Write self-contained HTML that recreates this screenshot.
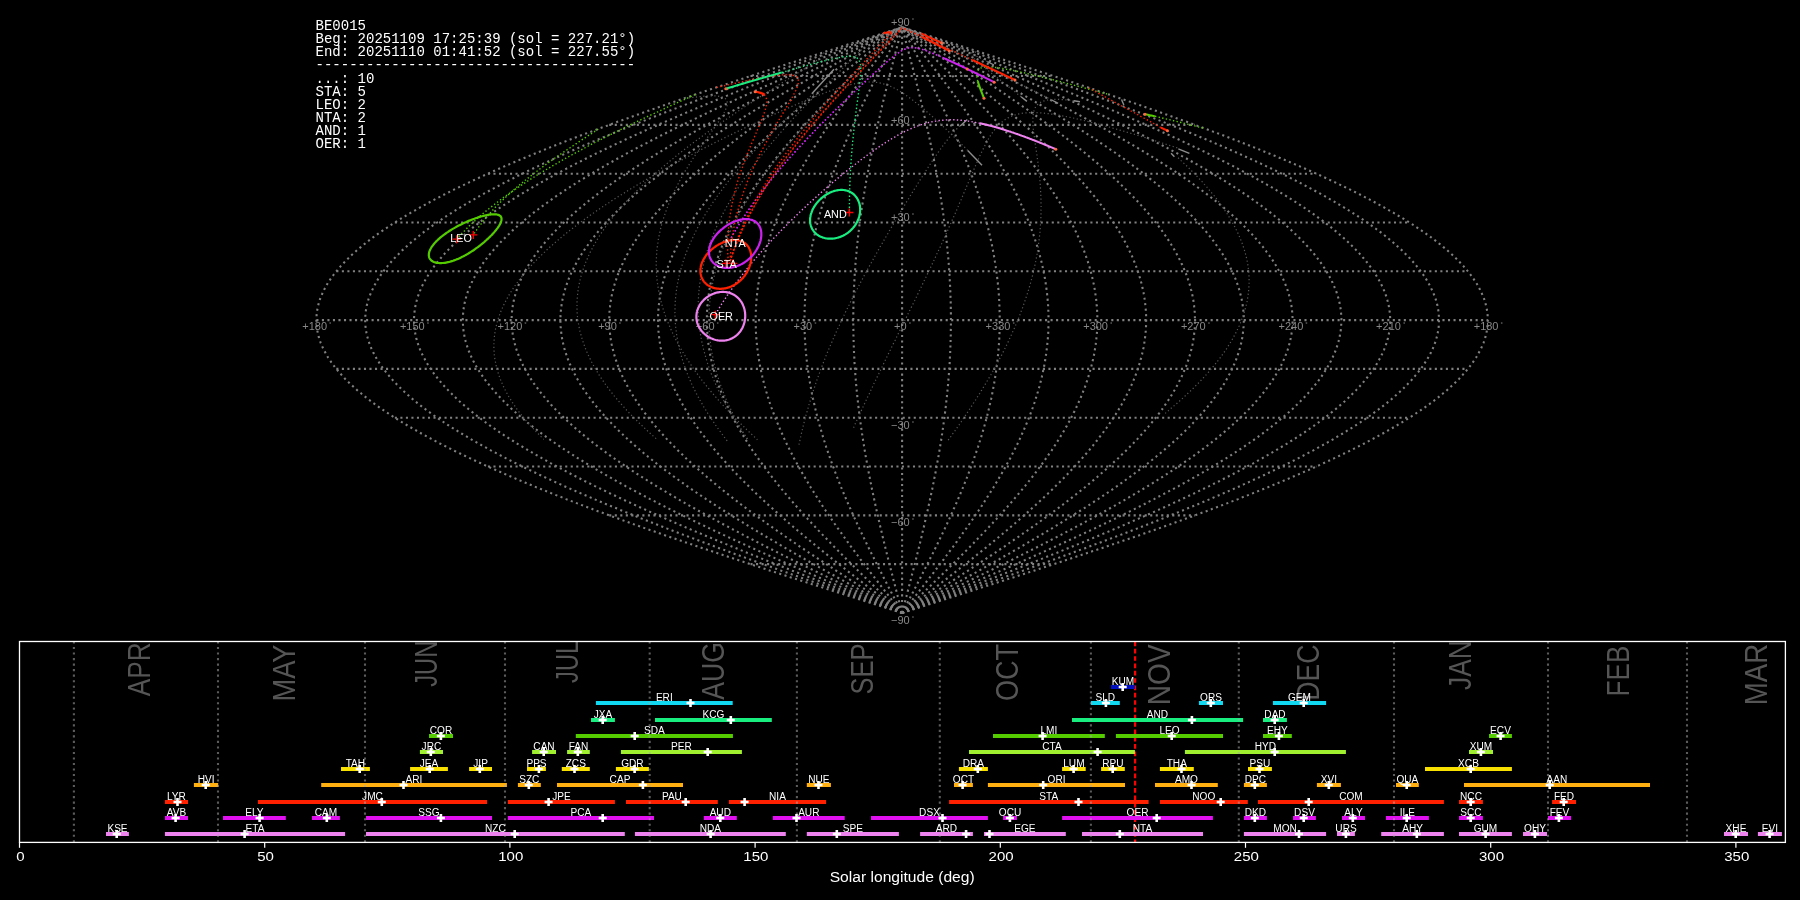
<!DOCTYPE html><html><head><meta charset="utf-8"><style>html,body{margin:0;padding:0;background:#000;overflow:hidden}svg{display:block;will-change:transform}text{font-family:"Liberation Sans",sans-serif}</style></head><body>
<svg width="1800" height="900" viewBox="0 0 1800 900">
<rect width="1800" height="900" fill="#000"/>
<g fill="none" stroke="#808080" stroke-width="2.08" stroke-dasharray="2.08 3.44">
<path d="M750.50 564.15 H1053.70"/>
<path d="M609.24 515.34 H1194.96"/>
<path d="M487.93 466.53 H1316.27"/>
<path d="M394.85 417.72 H1409.35"/>
<path d="M336.34 368.91 H1467.86"/>
<path d="M316.38 320.10 H1487.82"/>
<path d="M336.34 271.29 H1467.86"/>
<path d="M394.85 222.48 H1409.35"/>
<path d="M487.93 173.67 H1316.27"/>
<path d="M609.24 124.86 H1194.96"/>
<path d="M750.50 76.05 H1053.70"/>
<path d="M902.1 613.0 L907.2 611.3 L912.3 609.7 L917.4 608.1 L922.5 606.5 L927.6 604.8 L932.8 603.2 L937.9 601.6 L943.0 599.9 L948.1 598.3 L953.1 596.7 L958.2 595.1 L963.3 593.4 L968.4 591.8 L973.5 590.2 L978.6 588.6 L983.6 586.9 L988.7 585.3 L993.7 583.7 L998.8 582.0 L1003.8 580.4 L1008.8 578.8 L1013.9 577.2 L1018.9 575.5 L1023.9 573.9 L1028.9 572.3 L1033.9 570.7 L1038.8 569.0 L1043.8 567.4 L1048.8 565.8 L1053.7 564.2 L1058.6 562.5 L1063.5 560.9 L1068.5 559.3 L1073.3 557.6 L1078.2 556.0 L1083.1 554.4 L1088.0 552.8 L1092.8 551.1 L1097.6 549.5 L1102.4 547.9 L1107.2 546.3 L1112.0 544.6 L1116.8 543.0 L1121.5 541.4 L1126.2 539.7 L1131.0 538.1 L1135.7 536.5 L1140.3 534.9 L1145.0 533.2 L1149.6 531.6 L1154.3 530.0 L1158.9 528.4 L1163.4 526.7 L1168.0 525.1 L1172.6 523.5 L1177.1 521.8 L1181.6 520.2 L1186.1 518.6 L1190.5 517.0 L1195.0 515.3 L1199.4 513.7 L1203.8 512.1 L1208.1 510.5 L1212.5 508.8 L1216.8 507.2 L1221.1 505.6 L1225.4 504.0 L1229.6 502.3 L1233.9 500.7 L1238.1 499.1 L1242.2 497.4 L1246.4 495.8 L1250.5 494.2 L1254.6 492.6 L1258.7 490.9 L1262.7 489.3 L1266.7 487.7 L1270.7 486.1 L1274.7 484.4 L1278.6 482.8 L1282.5 481.2 L1286.4 479.5 L1290.2 477.9 L1294.0 476.3 L1297.8 474.7 L1301.6 473.0 L1305.3 471.4 L1309.0 469.8 L1312.6 468.2 L1316.3 466.5 L1319.9 464.9 L1323.4 463.3 L1327.0 461.6 L1330.5 460.0 L1333.9 458.4 L1337.4 456.8 L1340.8 455.1 L1344.1 453.5 L1347.5 451.9 L1350.8 450.3 L1354.1 448.6 L1357.3 447.0 L1360.5 445.4 L1363.7 443.8 L1366.8 442.1 L1369.9 440.5 L1372.9 438.9 L1376.0 437.2 L1378.9 435.6 L1381.9 434.0 L1384.8 432.4 L1387.7 430.7 L1390.5 429.1 L1393.3 427.5 L1396.1 425.9 L1398.8 424.2 L1401.5 422.6 L1404.2 421.0 L1406.8 419.3 L1409.3 417.7 L1411.9 416.1 L1414.4 414.5 L1416.8 412.8 L1419.3 411.2 L1421.6 409.6 L1424.0 408.0 L1426.3 406.3 L1428.5 404.7 L1430.8 403.1 L1432.9 401.5 L1435.1 399.8 L1437.2 398.2 L1439.2 396.6 L1441.3 394.9 L1443.2 393.3 L1445.2 391.7 L1447.1 390.1 L1448.9 388.4 L1450.7 386.8 L1452.5 385.2 L1454.2 383.6 L1455.9 381.9 L1457.6 380.3 L1459.2 378.7 L1460.7 377.0 L1462.2 375.4 L1463.7 373.8 L1465.1 372.2 L1466.5 370.5 L1467.9 368.9 L1469.2 367.3 L1470.4 365.7 L1471.6 364.0 L1472.8 362.4 L1473.9 360.8 L1475.0 359.1 L1476.1 357.5 L1477.1 355.9 L1478.0 354.3 L1478.9 352.6 L1479.8 351.0 L1480.6 349.4 L1481.4 347.8 L1482.1 346.1 L1482.8 344.5 L1483.5 342.9 L1484.1 341.3 L1484.6 339.6 L1485.1 338.0 L1485.6 336.4 L1486.0 334.7 L1486.4 333.1 L1486.7 331.5 L1487.0 329.9 L1487.3 328.2 L1487.5 326.6 L1487.6 325.0 L1487.7 323.4 L1487.8 321.7 L1487.8 320.1 L1487.8 318.5 L1487.7 316.8 L1487.6 315.2 L1487.5 313.6 L1487.3 312.0 L1487.0 310.3 L1486.7 308.7 L1486.4 307.1 L1486.0 305.5 L1485.6 303.8 L1485.1 302.2 L1484.6 300.6 L1484.1 298.9 L1483.5 297.3 L1482.8 295.7 L1482.1 294.1 L1481.4 292.4 L1480.6 290.8 L1479.8 289.2 L1478.9 287.6 L1478.0 285.9 L1477.1 284.3 L1476.1 282.7 L1475.0 281.1 L1473.9 279.4 L1472.8 277.8 L1471.6 276.2 L1470.4 274.5 L1469.2 272.9 L1467.9 271.3 L1466.5 269.7 L1465.1 268.0 L1463.7 266.4 L1462.2 264.8 L1460.7 263.2 L1459.2 261.5 L1457.6 259.9 L1455.9 258.3 L1454.2 256.6 L1452.5 255.0 L1450.7 253.4 L1448.9 251.8 L1447.1 250.1 L1445.2 248.5 L1443.2 246.9 L1441.3 245.3 L1439.2 243.6 L1437.2 242.0 L1435.1 240.4 L1432.9 238.8 L1430.8 237.1 L1428.5 235.5 L1426.3 233.9 L1424.0 232.2 L1421.6 230.6 L1419.3 229.0 L1416.8 227.4 L1414.4 225.7 L1411.9 224.1 L1409.3 222.5 L1406.8 220.9 L1404.2 219.2 L1401.5 217.6 L1398.8 216.0 L1396.1 214.3 L1393.3 212.7 L1390.5 211.1 L1387.7 209.5 L1384.8 207.8 L1381.9 206.2 L1378.9 204.6 L1376.0 203.0 L1372.9 201.3 L1369.9 199.7 L1366.8 198.1 L1363.7 196.4 L1360.5 194.8 L1357.3 193.2 L1354.1 191.6 L1350.8 189.9 L1347.5 188.3 L1344.1 186.7 L1340.8 185.1 L1337.4 183.4 L1333.9 181.8 L1330.5 180.2 L1327.0 178.6 L1323.4 176.9 L1319.9 175.3 L1316.3 173.7 L1312.6 172.0 L1309.0 170.4 L1305.3 168.8 L1301.6 167.2 L1297.8 165.5 L1294.0 163.9 L1290.2 162.3 L1286.4 160.7 L1282.5 159.0 L1278.6 157.4 L1274.7 155.8 L1270.7 154.1 L1266.7 152.5 L1262.7 150.9 L1258.7 149.3 L1254.6 147.6 L1250.5 146.0 L1246.4 144.4 L1242.2 142.8 L1238.1 141.1 L1233.9 139.5 L1229.6 137.9 L1225.4 136.2 L1221.1 134.6 L1216.8 133.0 L1212.5 131.4 L1208.1 129.7 L1203.8 128.1 L1199.4 126.5 L1195.0 124.9 L1190.5 123.2 L1186.1 121.6 L1181.6 120.0 L1177.1 118.4 L1172.6 116.7 L1168.0 115.1 L1163.4 113.5 L1158.9 111.8 L1154.3 110.2 L1149.6 108.6 L1145.0 107.0 L1140.3 105.3 L1135.7 103.7 L1131.0 102.1 L1126.2 100.5 L1121.5 98.8 L1116.8 97.2 L1112.0 95.6 L1107.2 93.9 L1102.4 92.3 L1097.6 90.7 L1092.8 89.1 L1088.0 87.4 L1083.1 85.8 L1078.2 84.2 L1073.3 82.6 L1068.5 80.9 L1063.5 79.3 L1058.6 77.7 L1053.7 76.1 L1048.8 74.4 L1043.8 72.8 L1038.8 71.2 L1033.9 69.5 L1028.9 67.9 L1023.9 66.3 L1018.9 64.7 L1013.9 63.0 L1008.8 61.4 L1003.8 59.8 L998.8 58.2 L993.7 56.5 L988.7 54.9 L983.6 53.3 L978.6 51.6 L973.5 50.0 L968.4 48.4 L963.3 46.8 L958.2 45.1 L953.1 43.5 L948.1 41.9 L943.0 40.3 L937.9 38.6 L932.8 37.0 L927.6 35.4 L922.5 33.7 L917.4 32.1 L912.3 30.5 L907.2 28.9 L902.1 27.2"/>
<path d="M902.1 613.0 L906.8 611.3 L911.5 609.7 L916.2 608.1 L920.8 606.5 L925.5 604.8 L930.2 603.2 L934.9 601.6 L939.6 599.9 L944.2 598.3 L948.9 596.7 L953.6 595.1 L958.2 593.4 L962.9 591.8 L967.5 590.2 L972.2 588.6 L976.8 586.9 L981.5 585.3 L986.1 583.7 L990.7 582.0 L995.3 580.4 L999.9 578.8 L1004.5 577.2 L1009.1 575.5 L1013.7 573.9 L1018.3 572.3 L1022.9 570.7 L1027.4 569.0 L1032.0 567.4 L1036.5 565.8 L1041.1 564.2 L1045.6 562.5 L1050.1 560.9 L1054.6 559.3 L1059.1 557.6 L1063.6 556.0 L1068.0 554.4 L1072.5 552.8 L1076.9 551.1 L1081.3 549.5 L1085.7 547.9 L1090.1 546.3 L1094.5 544.6 L1098.9 543.0 L1103.2 541.4 L1107.6 539.7 L1111.9 538.1 L1116.2 536.5 L1120.5 534.9 L1124.8 533.2 L1129.0 531.6 L1133.2 530.0 L1137.5 528.4 L1141.7 526.7 L1145.9 525.1 L1150.0 523.5 L1154.2 521.8 L1158.3 520.2 L1162.4 518.6 L1166.5 517.0 L1170.6 515.3 L1174.6 513.7 L1178.6 512.1 L1182.6 510.5 L1186.6 508.8 L1190.6 507.2 L1194.5 505.6 L1198.4 504.0 L1202.3 502.3 L1206.2 500.7 L1210.1 499.1 L1213.9 497.4 L1217.7 495.8 L1221.5 494.2 L1225.2 492.6 L1229.0 490.9 L1232.7 489.3 L1236.3 487.7 L1240.0 486.1 L1243.6 484.4 L1247.2 482.8 L1250.8 481.2 L1254.3 479.5 L1257.9 477.9 L1261.4 476.3 L1264.8 474.7 L1268.3 473.0 L1271.7 471.4 L1275.1 469.8 L1278.4 468.2 L1281.8 466.5 L1285.1 464.9 L1288.3 463.3 L1291.6 461.6 L1294.8 460.0 L1298.0 458.4 L1301.1 456.8 L1304.2 455.1 L1307.3 453.5 L1310.4 451.9 L1313.4 450.3 L1316.4 448.6 L1319.4 447.0 L1322.3 445.4 L1325.2 443.8 L1328.1 442.1 L1330.9 440.5 L1333.7 438.9 L1336.5 437.2 L1339.2 435.6 L1341.9 434.0 L1344.6 432.4 L1347.2 430.7 L1349.8 429.1 L1352.4 427.5 L1354.9 425.9 L1357.4 424.2 L1359.9 422.6 L1362.3 421.0 L1364.7 419.3 L1367.1 417.7 L1369.4 416.1 L1371.7 414.5 L1373.9 412.8 L1376.2 411.2 L1378.3 409.6 L1380.5 408.0 L1382.6 406.3 L1384.7 404.7 L1386.7 403.1 L1388.7 401.5 L1390.7 399.8 L1392.6 398.2 L1394.5 396.6 L1396.3 394.9 L1398.1 393.3 L1399.9 391.7 L1401.7 390.1 L1403.3 388.4 L1405.0 386.8 L1406.6 385.2 L1408.2 383.6 L1409.8 381.9 L1411.3 380.3 L1412.7 378.7 L1414.2 377.0 L1415.5 375.4 L1416.9 373.8 L1418.2 372.2 L1419.5 370.5 L1420.7 368.9 L1421.9 367.3 L1423.1 365.7 L1424.2 364.0 L1425.2 362.4 L1426.3 360.8 L1427.3 359.1 L1428.2 357.5 L1429.1 355.9 L1430.0 354.3 L1430.9 352.6 L1431.6 351.0 L1432.4 349.4 L1433.1 347.8 L1433.8 346.1 L1434.4 344.5 L1435.0 342.9 L1435.6 341.3 L1436.1 339.6 L1436.5 338.0 L1437.0 336.4 L1437.4 334.7 L1437.7 333.1 L1438.0 331.5 L1438.3 329.9 L1438.5 328.2 L1438.7 326.6 L1438.8 325.0 L1438.9 323.4 L1439.0 321.7 L1439.0 320.1 L1439.0 318.5 L1438.9 316.8 L1438.8 315.2 L1438.7 313.6 L1438.5 312.0 L1438.3 310.3 L1438.0 308.7 L1437.7 307.1 L1437.4 305.5 L1437.0 303.8 L1436.5 302.2 L1436.1 300.6 L1435.6 298.9 L1435.0 297.3 L1434.4 295.7 L1433.8 294.1 L1433.1 292.4 L1432.4 290.8 L1431.6 289.2 L1430.9 287.6 L1430.0 285.9 L1429.1 284.3 L1428.2 282.7 L1427.3 281.1 L1426.3 279.4 L1425.2 277.8 L1424.2 276.2 L1423.1 274.5 L1421.9 272.9 L1420.7 271.3 L1419.5 269.7 L1418.2 268.0 L1416.9 266.4 L1415.5 264.8 L1414.2 263.2 L1412.7 261.5 L1411.3 259.9 L1409.8 258.3 L1408.2 256.6 L1406.6 255.0 L1405.0 253.4 L1403.3 251.8 L1401.7 250.1 L1399.9 248.5 L1398.1 246.9 L1396.3 245.3 L1394.5 243.6 L1392.6 242.0 L1390.7 240.4 L1388.7 238.8 L1386.7 237.1 L1384.7 235.5 L1382.6 233.9 L1380.5 232.2 L1378.3 230.6 L1376.2 229.0 L1373.9 227.4 L1371.7 225.7 L1369.4 224.1 L1367.1 222.5 L1364.7 220.9 L1362.3 219.2 L1359.9 217.6 L1357.4 216.0 L1354.9 214.3 L1352.4 212.7 L1349.8 211.1 L1347.2 209.5 L1344.6 207.8 L1341.9 206.2 L1339.2 204.6 L1336.5 203.0 L1333.7 201.3 L1330.9 199.7 L1328.1 198.1 L1325.2 196.4 L1322.3 194.8 L1319.4 193.2 L1316.4 191.6 L1313.4 189.9 L1310.4 188.3 L1307.3 186.7 L1304.2 185.1 L1301.1 183.4 L1298.0 181.8 L1294.8 180.2 L1291.6 178.6 L1288.3 176.9 L1285.1 175.3 L1281.8 173.7 L1278.4 172.0 L1275.1 170.4 L1271.7 168.8 L1268.3 167.2 L1264.8 165.5 L1261.4 163.9 L1257.9 162.3 L1254.3 160.7 L1250.8 159.0 L1247.2 157.4 L1243.6 155.8 L1240.0 154.1 L1236.3 152.5 L1232.7 150.9 L1229.0 149.3 L1225.2 147.6 L1221.5 146.0 L1217.7 144.4 L1213.9 142.8 L1210.1 141.1 L1206.2 139.5 L1202.3 137.9 L1198.4 136.2 L1194.5 134.6 L1190.6 133.0 L1186.6 131.4 L1182.6 129.7 L1178.6 128.1 L1174.6 126.5 L1170.6 124.9 L1166.5 123.2 L1162.4 121.6 L1158.3 120.0 L1154.2 118.4 L1150.0 116.7 L1145.9 115.1 L1141.7 113.5 L1137.5 111.8 L1133.2 110.2 L1129.0 108.6 L1124.8 107.0 L1120.5 105.3 L1116.2 103.7 L1111.9 102.1 L1107.6 100.5 L1103.2 98.8 L1098.9 97.2 L1094.5 95.6 L1090.1 93.9 L1085.7 92.3 L1081.3 90.7 L1076.9 89.1 L1072.5 87.4 L1068.0 85.8 L1063.6 84.2 L1059.1 82.6 L1054.6 80.9 L1050.1 79.3 L1045.6 77.7 L1041.1 76.1 L1036.5 74.4 L1032.0 72.8 L1027.4 71.2 L1022.9 69.5 L1018.3 67.9 L1013.7 66.3 L1009.1 64.7 L1004.5 63.0 L999.9 61.4 L995.3 59.8 L990.7 58.2 L986.1 56.5 L981.5 54.9 L976.8 53.3 L972.2 51.6 L967.5 50.0 L962.9 48.4 L958.2 46.8 L953.6 45.1 L948.9 43.5 L944.2 41.9 L939.6 40.3 L934.9 38.6 L930.2 37.0 L925.5 35.4 L920.8 33.7 L916.2 32.1 L911.5 30.5 L906.8 28.9 L902.1 27.2"/>
<path d="M902.1 613.0 L906.4 611.3 L910.6 609.7 L914.9 608.1 L919.1 606.5 L923.4 604.8 L927.6 603.2 L931.9 601.6 L936.1 599.9 L940.4 598.3 L944.6 596.7 L948.9 595.1 L953.1 593.4 L957.4 591.8 L961.6 590.2 L965.8 588.6 L970.0 586.9 L974.2 585.3 L978.5 583.7 L982.7 582.0 L986.9 580.4 L991.0 578.8 L995.2 577.2 L999.4 575.5 L1003.6 573.9 L1007.7 572.3 L1011.9 570.7 L1016.0 569.0 L1020.2 567.4 L1024.3 565.8 L1028.4 564.2 L1032.5 562.5 L1036.6 560.9 L1040.7 559.3 L1044.8 557.6 L1048.9 556.0 L1052.9 554.4 L1057.0 552.8 L1061.0 551.1 L1065.0 549.5 L1069.0 547.9 L1073.0 546.3 L1077.0 544.6 L1081.0 543.0 L1084.9 541.4 L1088.9 539.7 L1092.8 538.1 L1096.7 536.5 L1100.6 534.9 L1104.5 533.2 L1108.4 531.6 L1112.2 530.0 L1116.1 528.4 L1119.9 526.7 L1123.7 525.1 L1127.5 523.5 L1131.2 521.8 L1135.0 520.2 L1138.7 518.6 L1142.5 517.0 L1146.2 515.3 L1149.8 513.7 L1153.5 512.1 L1157.1 510.5 L1160.8 508.8 L1164.4 507.2 L1167.9 505.6 L1171.5 504.0 L1175.0 502.3 L1178.6 500.7 L1182.1 499.1 L1185.5 497.4 L1189.0 495.8 L1192.4 494.2 L1195.8 492.6 L1199.2 490.9 L1202.6 489.3 L1205.9 487.7 L1209.3 486.1 L1212.6 484.4 L1215.8 482.8 L1219.1 481.2 L1222.3 479.5 L1225.5 477.9 L1228.7 476.3 L1231.9 474.7 L1235.0 473.0 L1238.1 471.4 L1241.2 469.8 L1244.2 468.2 L1247.2 466.5 L1250.2 464.9 L1253.2 463.3 L1256.2 461.6 L1259.1 460.0 L1262.0 458.4 L1264.8 456.8 L1267.7 455.1 L1270.5 453.5 L1273.3 451.9 L1276.0 450.3 L1278.7 448.6 L1281.4 447.0 L1284.1 445.4 L1286.7 443.8 L1289.3 442.1 L1291.9 440.5 L1294.5 438.9 L1297.0 437.2 L1299.5 435.6 L1301.9 434.0 L1304.4 432.4 L1306.8 430.7 L1309.1 429.1 L1311.5 427.5 L1313.8 425.9 L1316.0 424.2 L1318.3 422.6 L1320.5 421.0 L1322.7 419.3 L1324.8 417.7 L1326.9 416.1 L1329.0 414.5 L1331.1 412.8 L1333.1 411.2 L1335.0 409.6 L1337.0 408.0 L1338.9 406.3 L1340.8 404.7 L1342.7 403.1 L1344.5 401.5 L1346.3 399.8 L1348.0 398.2 L1349.7 396.6 L1351.4 394.9 L1353.0 393.3 L1354.7 391.7 L1356.2 390.1 L1357.8 388.4 L1359.3 386.8 L1360.8 385.2 L1362.2 383.6 L1363.6 381.9 L1365.0 380.3 L1366.3 378.7 L1367.6 377.0 L1368.9 375.4 L1370.1 373.8 L1371.3 372.2 L1372.4 370.5 L1373.6 368.9 L1374.7 367.3 L1375.7 365.7 L1376.7 364.0 L1377.7 362.4 L1378.6 360.8 L1379.5 359.1 L1380.4 357.5 L1381.2 355.9 L1382.0 354.3 L1382.8 352.6 L1383.5 351.0 L1384.2 349.4 L1384.8 347.8 L1385.4 346.1 L1386.0 344.5 L1386.6 342.9 L1387.1 341.3 L1387.5 339.6 L1388.0 338.0 L1388.3 336.4 L1388.7 334.7 L1389.0 333.1 L1389.3 331.5 L1389.5 329.9 L1389.7 328.2 L1389.9 326.6 L1390.0 325.0 L1390.1 323.4 L1390.2 321.7 L1390.2 320.1 L1390.2 318.5 L1390.1 316.8 L1390.0 315.2 L1389.9 313.6 L1389.7 312.0 L1389.5 310.3 L1389.3 308.7 L1389.0 307.1 L1388.7 305.5 L1388.3 303.8 L1388.0 302.2 L1387.5 300.6 L1387.1 298.9 L1386.6 297.3 L1386.0 295.7 L1385.4 294.1 L1384.8 292.4 L1384.2 290.8 L1383.5 289.2 L1382.8 287.6 L1382.0 285.9 L1381.2 284.3 L1380.4 282.7 L1379.5 281.1 L1378.6 279.4 L1377.7 277.8 L1376.7 276.2 L1375.7 274.5 L1374.7 272.9 L1373.6 271.3 L1372.4 269.7 L1371.3 268.0 L1370.1 266.4 L1368.9 264.8 L1367.6 263.2 L1366.3 261.5 L1365.0 259.9 L1363.6 258.3 L1362.2 256.6 L1360.8 255.0 L1359.3 253.4 L1357.8 251.8 L1356.2 250.1 L1354.7 248.5 L1353.0 246.9 L1351.4 245.3 L1349.7 243.6 L1348.0 242.0 L1346.3 240.4 L1344.5 238.8 L1342.7 237.1 L1340.8 235.5 L1338.9 233.9 L1337.0 232.2 L1335.0 230.6 L1333.1 229.0 L1331.1 227.4 L1329.0 225.7 L1326.9 224.1 L1324.8 222.5 L1322.7 220.9 L1320.5 219.2 L1318.3 217.6 L1316.0 216.0 L1313.8 214.3 L1311.5 212.7 L1309.1 211.1 L1306.8 209.5 L1304.4 207.8 L1301.9 206.2 L1299.5 204.6 L1297.0 203.0 L1294.5 201.3 L1291.9 199.7 L1289.3 198.1 L1286.7 196.4 L1284.1 194.8 L1281.4 193.2 L1278.7 191.6 L1276.0 189.9 L1273.3 188.3 L1270.5 186.7 L1267.7 185.1 L1264.8 183.4 L1262.0 181.8 L1259.1 180.2 L1256.2 178.6 L1253.2 176.9 L1250.2 175.3 L1247.2 173.7 L1244.2 172.0 L1241.2 170.4 L1238.1 168.8 L1235.0 167.2 L1231.9 165.5 L1228.7 163.9 L1225.5 162.3 L1222.3 160.7 L1219.1 159.0 L1215.8 157.4 L1212.6 155.8 L1209.3 154.1 L1205.9 152.5 L1202.6 150.9 L1199.2 149.3 L1195.8 147.6 L1192.4 146.0 L1189.0 144.4 L1185.5 142.8 L1182.1 141.1 L1178.6 139.5 L1175.0 137.9 L1171.5 136.2 L1167.9 134.6 L1164.4 133.0 L1160.8 131.4 L1157.1 129.7 L1153.5 128.1 L1149.8 126.5 L1146.2 124.9 L1142.5 123.2 L1138.7 121.6 L1135.0 120.0 L1131.2 118.4 L1127.5 116.7 L1123.7 115.1 L1119.9 113.5 L1116.1 111.8 L1112.2 110.2 L1108.4 108.6 L1104.5 107.0 L1100.6 105.3 L1096.7 103.7 L1092.8 102.1 L1088.9 100.5 L1084.9 98.8 L1081.0 97.2 L1077.0 95.6 L1073.0 93.9 L1069.0 92.3 L1065.0 90.7 L1061.0 89.1 L1057.0 87.4 L1052.9 85.8 L1048.9 84.2 L1044.8 82.6 L1040.7 80.9 L1036.6 79.3 L1032.5 77.7 L1028.4 76.1 L1024.3 74.4 L1020.2 72.8 L1016.0 71.2 L1011.9 69.5 L1007.7 67.9 L1003.6 66.3 L999.4 64.7 L995.2 63.0 L991.0 61.4 L986.9 59.8 L982.7 58.2 L978.5 56.5 L974.2 54.9 L970.0 53.3 L965.8 51.6 L961.6 50.0 L957.4 48.4 L953.1 46.8 L948.9 45.1 L944.6 43.5 L940.4 41.9 L936.1 40.3 L931.9 38.6 L927.6 37.0 L923.4 35.4 L919.1 33.7 L914.9 32.1 L910.6 30.5 L906.4 28.9 L902.1 27.2"/>
<path d="M902.1 613.0 L905.9 611.3 L909.8 609.7 L913.6 608.1 L917.4 606.5 L921.3 604.8 L925.1 603.2 L928.9 601.6 L932.7 599.9 L936.6 598.3 L940.4 596.7 L944.2 595.1 L948.0 593.4 L951.8 591.8 L955.6 590.2 L959.4 588.6 L963.2 586.9 L967.0 585.3 L970.8 583.7 L974.6 582.0 L978.4 580.4 L982.2 578.8 L985.9 577.2 L989.7 575.5 L993.4 573.9 L997.2 572.3 L1000.9 570.7 L1004.7 569.0 L1008.4 567.4 L1012.1 565.8 L1015.8 564.2 L1019.5 562.5 L1023.2 560.9 L1026.9 559.3 L1030.5 557.6 L1034.2 556.0 L1037.8 554.4 L1041.5 552.8 L1045.1 551.1 L1048.7 549.5 L1052.3 547.9 L1055.9 546.3 L1059.5 544.6 L1063.1 543.0 L1066.7 541.4 L1070.2 539.7 L1073.7 538.1 L1077.3 536.5 L1080.8 534.9 L1084.3 533.2 L1087.8 531.6 L1091.2 530.0 L1094.7 528.4 L1098.1 526.7 L1101.5 525.1 L1104.9 523.5 L1108.3 521.8 L1111.7 520.2 L1115.1 518.6 L1118.4 517.0 L1121.7 515.3 L1125.1 513.7 L1128.4 512.1 L1131.6 510.5 L1134.9 508.8 L1138.1 507.2 L1141.4 505.6 L1144.6 504.0 L1147.7 502.3 L1150.9 500.7 L1154.1 499.1 L1157.2 497.4 L1160.3 495.8 L1163.4 494.2 L1166.5 492.6 L1169.5 490.9 L1172.6 489.3 L1175.6 487.7 L1178.6 486.1 L1181.5 484.4 L1184.5 482.8 L1187.4 481.2 L1190.3 479.5 L1193.2 477.9 L1196.0 476.3 L1198.9 474.7 L1201.7 473.0 L1204.5 471.4 L1207.3 469.8 L1210.0 468.2 L1212.7 466.5 L1215.4 464.9 L1218.1 463.3 L1220.7 461.6 L1223.4 460.0 L1226.0 458.4 L1228.6 456.8 L1231.1 455.1 L1233.6 453.5 L1236.1 451.9 L1238.6 450.3 L1241.1 448.6 L1243.5 447.0 L1245.9 445.4 L1248.3 443.8 L1250.6 442.1 L1252.9 440.5 L1255.2 438.9 L1257.5 437.2 L1259.7 435.6 L1261.9 434.0 L1264.1 432.4 L1266.3 430.7 L1268.4 429.1 L1270.5 427.5 L1272.6 425.9 L1274.6 424.2 L1276.7 422.6 L1278.6 421.0 L1280.6 419.3 L1282.5 417.7 L1284.4 416.1 L1286.3 414.5 L1288.2 412.8 L1290.0 411.2 L1291.8 409.6 L1293.5 408.0 L1295.2 406.3 L1296.9 404.7 L1298.6 403.1 L1300.2 401.5 L1301.8 399.8 L1303.4 398.2 L1305.0 396.6 L1306.5 394.9 L1308.0 393.3 L1309.4 391.7 L1310.8 390.1 L1312.2 388.4 L1313.6 386.8 L1314.9 385.2 L1316.2 383.6 L1317.5 381.9 L1318.7 380.3 L1319.9 378.7 L1321.1 377.0 L1322.2 375.4 L1323.3 373.8 L1324.4 372.2 L1325.4 370.5 L1326.4 368.9 L1327.4 367.3 L1328.3 365.7 L1329.3 364.0 L1330.1 362.4 L1331.0 360.8 L1331.8 359.1 L1332.6 357.5 L1333.3 355.9 L1334.0 354.3 L1334.7 352.6 L1335.4 351.0 L1336.0 349.4 L1336.6 347.8 L1337.1 346.1 L1337.6 344.5 L1338.1 342.9 L1338.6 341.3 L1339.0 339.6 L1339.4 338.0 L1339.7 336.4 L1340.0 334.7 L1340.3 333.1 L1340.6 331.5 L1340.8 329.9 L1341.0 328.2 L1341.1 326.6 L1341.2 325.0 L1341.3 323.4 L1341.4 321.7 L1341.4 320.1 L1341.4 318.5 L1341.3 316.8 L1341.2 315.2 L1341.1 313.6 L1341.0 312.0 L1340.8 310.3 L1340.6 308.7 L1340.3 307.1 L1340.0 305.5 L1339.7 303.8 L1339.4 302.2 L1339.0 300.6 L1338.6 298.9 L1338.1 297.3 L1337.6 295.7 L1337.1 294.1 L1336.6 292.4 L1336.0 290.8 L1335.4 289.2 L1334.7 287.6 L1334.0 285.9 L1333.3 284.3 L1332.6 282.7 L1331.8 281.1 L1331.0 279.4 L1330.1 277.8 L1329.3 276.2 L1328.3 274.5 L1327.4 272.9 L1326.4 271.3 L1325.4 269.7 L1324.4 268.0 L1323.3 266.4 L1322.2 264.8 L1321.1 263.2 L1319.9 261.5 L1318.7 259.9 L1317.5 258.3 L1316.2 256.6 L1314.9 255.0 L1313.6 253.4 L1312.2 251.8 L1310.8 250.1 L1309.4 248.5 L1308.0 246.9 L1306.5 245.3 L1305.0 243.6 L1303.4 242.0 L1301.8 240.4 L1300.2 238.8 L1298.6 237.1 L1296.9 235.5 L1295.2 233.9 L1293.5 232.2 L1291.8 230.6 L1290.0 229.0 L1288.2 227.4 L1286.3 225.7 L1284.4 224.1 L1282.5 222.5 L1280.6 220.9 L1278.6 219.2 L1276.7 217.6 L1274.6 216.0 L1272.6 214.3 L1270.5 212.7 L1268.4 211.1 L1266.3 209.5 L1264.1 207.8 L1261.9 206.2 L1259.7 204.6 L1257.5 203.0 L1255.2 201.3 L1252.9 199.7 L1250.6 198.1 L1248.3 196.4 L1245.9 194.8 L1243.5 193.2 L1241.1 191.6 L1238.6 189.9 L1236.1 188.3 L1233.6 186.7 L1231.1 185.1 L1228.6 183.4 L1226.0 181.8 L1223.4 180.2 L1220.7 178.6 L1218.1 176.9 L1215.4 175.3 L1212.7 173.7 L1210.0 172.0 L1207.3 170.4 L1204.5 168.8 L1201.7 167.2 L1198.9 165.5 L1196.0 163.9 L1193.2 162.3 L1190.3 160.7 L1187.4 159.0 L1184.5 157.4 L1181.5 155.8 L1178.6 154.1 L1175.6 152.5 L1172.6 150.9 L1169.5 149.3 L1166.5 147.6 L1163.4 146.0 L1160.3 144.4 L1157.2 142.8 L1154.1 141.1 L1150.9 139.5 L1147.7 137.9 L1144.6 136.2 L1141.4 134.6 L1138.1 133.0 L1134.9 131.4 L1131.6 129.7 L1128.4 128.1 L1125.1 126.5 L1121.7 124.9 L1118.4 123.2 L1115.1 121.6 L1111.7 120.0 L1108.3 118.4 L1104.9 116.7 L1101.5 115.1 L1098.1 113.5 L1094.7 111.8 L1091.2 110.2 L1087.8 108.6 L1084.3 107.0 L1080.8 105.3 L1077.3 103.7 L1073.7 102.1 L1070.2 100.5 L1066.7 98.8 L1063.1 97.2 L1059.5 95.6 L1055.9 93.9 L1052.3 92.3 L1048.7 90.7 L1045.1 89.1 L1041.5 87.4 L1037.8 85.8 L1034.2 84.2 L1030.5 82.6 L1026.9 80.9 L1023.2 79.3 L1019.5 77.7 L1015.8 76.1 L1012.1 74.4 L1008.4 72.8 L1004.7 71.2 L1000.9 69.5 L997.2 67.9 L993.4 66.3 L989.7 64.7 L985.9 63.0 L982.2 61.4 L978.4 59.8 L974.6 58.2 L970.8 56.5 L967.0 54.9 L963.2 53.3 L959.4 51.6 L955.6 50.0 L951.8 48.4 L948.0 46.8 L944.2 45.1 L940.4 43.5 L936.6 41.9 L932.7 40.3 L928.9 38.6 L925.1 37.0 L921.3 35.4 L917.4 33.7 L913.6 32.1 L909.8 30.5 L905.9 28.9 L902.1 27.2"/>
<path d="M902.1 613.0 L905.5 611.3 L908.9 609.7 L912.3 608.1 L915.7 606.5 L919.1 604.8 L922.5 603.2 L925.9 601.6 L929.3 599.9 L932.7 598.3 L936.1 596.7 L939.5 595.1 L942.9 593.4 L946.3 591.8 L949.7 590.2 L953.1 588.6 L956.4 586.9 L959.8 585.3 L963.2 583.7 L966.5 582.0 L969.9 580.4 L973.3 578.8 L976.6 577.2 L979.9 575.5 L983.3 573.9 L986.6 572.3 L989.9 570.7 L993.3 569.0 L996.6 567.4 L999.9 565.8 L1003.2 564.2 L1006.5 562.5 L1009.7 560.9 L1013.0 559.3 L1016.3 557.6 L1019.5 556.0 L1022.8 554.4 L1026.0 552.8 L1029.2 551.1 L1032.4 549.5 L1035.7 547.9 L1038.8 546.3 L1042.0 544.6 L1045.2 543.0 L1048.4 541.4 L1051.5 539.7 L1054.7 538.1 L1057.8 536.5 L1060.9 534.9 L1064.0 533.2 L1067.1 531.6 L1070.2 530.0 L1073.3 528.4 L1076.3 526.7 L1079.4 525.1 L1082.4 523.5 L1085.4 521.8 L1088.4 520.2 L1091.4 518.6 L1094.4 517.0 L1097.3 515.3 L1100.3 513.7 L1103.2 512.1 L1106.1 510.5 L1109.0 508.8 L1111.9 507.2 L1114.8 505.6 L1117.6 504.0 L1120.5 502.3 L1123.3 500.7 L1126.1 499.1 L1128.9 497.4 L1131.6 495.8 L1134.4 494.2 L1137.1 492.6 L1139.8 490.9 L1142.5 489.3 L1145.2 487.7 L1147.8 486.1 L1150.5 484.4 L1153.1 482.8 L1155.7 481.2 L1158.3 479.5 L1160.8 477.9 L1163.4 476.3 L1165.9 474.7 L1168.4 473.0 L1170.9 471.4 L1173.4 469.8 L1175.8 468.2 L1178.2 466.5 L1180.6 464.9 L1183.0 463.3 L1185.3 461.6 L1187.7 460.0 L1190.0 458.4 L1192.3 456.8 L1194.6 455.1 L1196.8 453.5 L1199.0 451.9 L1201.2 450.3 L1203.4 448.6 L1205.6 447.0 L1207.7 445.4 L1209.8 443.8 L1211.9 442.1 L1214.0 440.5 L1216.0 438.9 L1218.0 437.2 L1220.0 435.6 L1222.0 434.0 L1223.9 432.4 L1225.8 430.7 L1227.7 429.1 L1229.6 427.5 L1231.4 425.9 L1233.2 424.2 L1235.0 422.6 L1236.8 421.0 L1238.5 419.3 L1240.3 417.7 L1242.0 416.1 L1243.6 414.5 L1245.3 412.8 L1246.9 411.2 L1248.5 409.6 L1250.0 408.0 L1251.6 406.3 L1253.1 404.7 L1254.5 403.1 L1256.0 401.5 L1257.4 399.8 L1258.8 398.2 L1260.2 396.6 L1261.5 394.9 L1262.9 393.3 L1264.1 391.7 L1265.4 390.1 L1266.6 388.4 L1267.9 386.8 L1269.0 385.2 L1270.2 383.6 L1271.3 381.9 L1272.4 380.3 L1273.5 378.7 L1274.5 377.0 L1275.5 375.4 L1276.5 373.8 L1277.5 372.2 L1278.4 370.5 L1279.3 368.9 L1280.1 367.3 L1281.0 365.7 L1281.8 364.0 L1282.6 362.4 L1283.3 360.8 L1284.0 359.1 L1284.7 357.5 L1285.4 355.9 L1286.0 354.3 L1286.6 352.6 L1287.2 351.0 L1287.8 349.4 L1288.3 347.8 L1288.8 346.1 L1289.2 344.5 L1289.7 342.9 L1290.1 341.3 L1290.4 339.6 L1290.8 338.0 L1291.1 336.4 L1291.4 334.7 L1291.6 333.1 L1291.9 331.5 L1292.0 329.9 L1292.2 328.2 L1292.3 326.6 L1292.4 325.0 L1292.5 323.4 L1292.6 321.7 L1292.6 320.1 L1292.6 318.5 L1292.5 316.8 L1292.4 315.2 L1292.3 313.6 L1292.2 312.0 L1292.0 310.3 L1291.9 308.7 L1291.6 307.1 L1291.4 305.5 L1291.1 303.8 L1290.8 302.2 L1290.4 300.6 L1290.1 298.9 L1289.7 297.3 L1289.2 295.7 L1288.8 294.1 L1288.3 292.4 L1287.8 290.8 L1287.2 289.2 L1286.6 287.6 L1286.0 285.9 L1285.4 284.3 L1284.7 282.7 L1284.0 281.1 L1283.3 279.4 L1282.6 277.8 L1281.8 276.2 L1281.0 274.5 L1280.1 272.9 L1279.3 271.3 L1278.4 269.7 L1277.5 268.0 L1276.5 266.4 L1275.5 264.8 L1274.5 263.2 L1273.5 261.5 L1272.4 259.9 L1271.3 258.3 L1270.2 256.6 L1269.0 255.0 L1267.9 253.4 L1266.6 251.8 L1265.4 250.1 L1264.1 248.5 L1262.9 246.9 L1261.5 245.3 L1260.2 243.6 L1258.8 242.0 L1257.4 240.4 L1256.0 238.8 L1254.5 237.1 L1253.1 235.5 L1251.6 233.9 L1250.0 232.2 L1248.5 230.6 L1246.9 229.0 L1245.3 227.4 L1243.6 225.7 L1242.0 224.1 L1240.3 222.5 L1238.5 220.9 L1236.8 219.2 L1235.0 217.6 L1233.2 216.0 L1231.4 214.3 L1229.6 212.7 L1227.7 211.1 L1225.8 209.5 L1223.9 207.8 L1222.0 206.2 L1220.0 204.6 L1218.0 203.0 L1216.0 201.3 L1214.0 199.7 L1211.9 198.1 L1209.8 196.4 L1207.7 194.8 L1205.6 193.2 L1203.4 191.6 L1201.2 189.9 L1199.0 188.3 L1196.8 186.7 L1194.6 185.1 L1192.3 183.4 L1190.0 181.8 L1187.7 180.2 L1185.3 178.6 L1183.0 176.9 L1180.6 175.3 L1178.2 173.7 L1175.8 172.0 L1173.4 170.4 L1170.9 168.8 L1168.4 167.2 L1165.9 165.5 L1163.4 163.9 L1160.8 162.3 L1158.3 160.7 L1155.7 159.0 L1153.1 157.4 L1150.5 155.8 L1147.8 154.1 L1145.2 152.5 L1142.5 150.9 L1139.8 149.3 L1137.1 147.6 L1134.4 146.0 L1131.6 144.4 L1128.9 142.8 L1126.1 141.1 L1123.3 139.5 L1120.5 137.9 L1117.6 136.2 L1114.8 134.6 L1111.9 133.0 L1109.0 131.4 L1106.1 129.7 L1103.2 128.1 L1100.3 126.5 L1097.3 124.9 L1094.4 123.2 L1091.4 121.6 L1088.4 120.0 L1085.4 118.4 L1082.4 116.7 L1079.4 115.1 L1076.3 113.5 L1073.3 111.8 L1070.2 110.2 L1067.1 108.6 L1064.0 107.0 L1060.9 105.3 L1057.8 103.7 L1054.7 102.1 L1051.5 100.5 L1048.4 98.8 L1045.2 97.2 L1042.0 95.6 L1038.8 93.9 L1035.7 92.3 L1032.4 90.7 L1029.2 89.1 L1026.0 87.4 L1022.8 85.8 L1019.5 84.2 L1016.3 82.6 L1013.0 80.9 L1009.7 79.3 L1006.5 77.7 L1003.2 76.1 L999.9 74.4 L996.6 72.8 L993.3 71.2 L989.9 69.5 L986.6 67.9 L983.3 66.3 L979.9 64.7 L976.6 63.0 L973.3 61.4 L969.9 59.8 L966.5 58.2 L963.2 56.5 L959.8 54.9 L956.4 53.3 L953.1 51.6 L949.7 50.0 L946.3 48.4 L942.9 46.8 L939.5 45.1 L936.1 43.5 L932.7 41.9 L929.3 40.3 L925.9 38.6 L922.5 37.0 L919.1 35.4 L915.7 33.7 L912.3 32.1 L908.9 30.5 L905.5 28.9 L902.1 27.2"/>
<path d="M902.1 613.0 L905.1 611.3 L908.1 609.7 L911.0 608.1 L914.0 606.5 L917.0 604.8 L920.0 603.2 L923.0 601.6 L925.9 599.9 L928.9 598.3 L931.9 596.7 L934.8 595.1 L937.8 593.4 L940.8 591.8 L943.7 590.2 L946.7 588.6 L949.7 586.9 L952.6 585.3 L955.5 583.7 L958.5 582.0 L961.4 580.4 L964.4 578.8 L967.3 577.2 L970.2 575.5 L973.1 573.9 L976.1 572.3 L979.0 570.7 L981.9 569.0 L984.8 567.4 L987.6 565.8 L990.5 564.2 L993.4 562.5 L996.3 560.9 L999.1 559.3 L1002.0 557.6 L1004.8 556.0 L1007.7 554.4 L1010.5 552.8 L1013.3 551.1 L1016.2 549.5 L1019.0 547.9 L1021.8 546.3 L1024.5 544.6 L1027.3 543.0 L1030.1 541.4 L1032.9 539.7 L1035.6 538.1 L1038.3 536.5 L1041.1 534.9 L1043.8 533.2 L1046.5 531.6 L1049.2 530.0 L1051.9 528.4 L1054.6 526.7 L1057.2 525.1 L1059.9 523.5 L1062.5 521.8 L1065.1 520.2 L1067.7 518.6 L1070.3 517.0 L1072.9 515.3 L1075.5 513.7 L1078.1 512.1 L1080.6 510.5 L1083.2 508.8 L1085.7 507.2 L1088.2 505.6 L1090.7 504.0 L1093.2 502.3 L1095.6 500.7 L1098.1 499.1 L1100.5 497.4 L1102.9 495.8 L1105.3 494.2 L1107.7 492.6 L1110.1 490.9 L1112.5 489.3 L1114.8 487.7 L1117.1 486.1 L1119.4 484.4 L1121.7 482.8 L1124.0 481.2 L1126.3 479.5 L1128.5 477.9 L1130.7 476.3 L1132.9 474.7 L1135.1 473.0 L1137.3 471.4 L1139.4 469.8 L1141.6 468.2 L1143.7 466.5 L1145.8 464.9 L1147.9 463.3 L1149.9 461.6 L1152.0 460.0 L1154.0 458.4 L1156.0 456.8 L1158.0 455.1 L1160.0 453.5 L1161.9 451.9 L1163.8 450.3 L1165.7 448.6 L1167.6 447.0 L1169.5 445.4 L1171.3 443.8 L1173.2 442.1 L1175.0 440.5 L1176.8 438.9 L1178.5 437.2 L1180.3 435.6 L1182.0 434.0 L1183.7 432.4 L1185.4 430.7 L1187.0 429.1 L1188.6 427.5 L1190.3 425.9 L1191.9 424.2 L1193.4 422.6 L1195.0 421.0 L1196.5 419.3 L1198.0 417.7 L1199.5 416.1 L1200.9 414.5 L1202.4 412.8 L1203.8 411.2 L1205.2 409.6 L1206.5 408.0 L1207.9 406.3 L1209.2 404.7 L1210.5 403.1 L1211.8 401.5 L1213.0 399.8 L1214.2 398.2 L1215.4 396.6 L1216.6 394.9 L1217.8 393.3 L1218.9 391.7 L1220.0 390.1 L1221.1 388.4 L1222.1 386.8 L1223.2 385.2 L1224.2 383.6 L1225.2 381.9 L1226.1 380.3 L1227.0 378.7 L1228.0 377.0 L1228.8 375.4 L1229.7 373.8 L1230.5 372.2 L1231.3 370.5 L1232.1 368.9 L1232.9 367.3 L1233.6 365.7 L1234.3 364.0 L1235.0 362.4 L1235.7 360.8 L1236.3 359.1 L1236.9 357.5 L1237.5 355.9 L1238.0 354.3 L1238.6 352.6 L1239.1 351.0 L1239.6 349.4 L1240.0 347.8 L1240.4 346.1 L1240.8 344.5 L1241.2 342.9 L1241.6 341.3 L1241.9 339.6 L1242.2 338.0 L1242.5 336.4 L1242.7 334.7 L1242.9 333.1 L1243.1 331.5 L1243.3 329.9 L1243.4 328.2 L1243.6 326.6 L1243.7 325.0 L1243.7 323.4 L1243.8 321.7 L1243.8 320.1 L1243.8 318.5 L1243.7 316.8 L1243.7 315.2 L1243.6 313.6 L1243.4 312.0 L1243.3 310.3 L1243.1 308.7 L1242.9 307.1 L1242.7 305.5 L1242.5 303.8 L1242.2 302.2 L1241.9 300.6 L1241.6 298.9 L1241.2 297.3 L1240.8 295.7 L1240.4 294.1 L1240.0 292.4 L1239.6 290.8 L1239.1 289.2 L1238.6 287.6 L1238.0 285.9 L1237.5 284.3 L1236.9 282.7 L1236.3 281.1 L1235.7 279.4 L1235.0 277.8 L1234.3 276.2 L1233.6 274.5 L1232.9 272.9 L1232.1 271.3 L1231.3 269.7 L1230.5 268.0 L1229.7 266.4 L1228.8 264.8 L1228.0 263.2 L1227.0 261.5 L1226.1 259.9 L1225.2 258.3 L1224.2 256.6 L1223.2 255.0 L1222.1 253.4 L1221.1 251.8 L1220.0 250.1 L1218.9 248.5 L1217.8 246.9 L1216.6 245.3 L1215.4 243.6 L1214.2 242.0 L1213.0 240.4 L1211.8 238.8 L1210.5 237.1 L1209.2 235.5 L1207.9 233.9 L1206.5 232.2 L1205.2 230.6 L1203.8 229.0 L1202.4 227.4 L1200.9 225.7 L1199.5 224.1 L1198.0 222.5 L1196.5 220.9 L1195.0 219.2 L1193.4 217.6 L1191.9 216.0 L1190.3 214.3 L1188.6 212.7 L1187.0 211.1 L1185.4 209.5 L1183.7 207.8 L1182.0 206.2 L1180.3 204.6 L1178.5 203.0 L1176.8 201.3 L1175.0 199.7 L1173.2 198.1 L1171.3 196.4 L1169.5 194.8 L1167.6 193.2 L1165.7 191.6 L1163.8 189.9 L1161.9 188.3 L1160.0 186.7 L1158.0 185.1 L1156.0 183.4 L1154.0 181.8 L1152.0 180.2 L1149.9 178.6 L1147.9 176.9 L1145.8 175.3 L1143.7 173.7 L1141.6 172.0 L1139.4 170.4 L1137.3 168.8 L1135.1 167.2 L1132.9 165.5 L1130.7 163.9 L1128.5 162.3 L1126.3 160.7 L1124.0 159.0 L1121.7 157.4 L1119.4 155.8 L1117.1 154.1 L1114.8 152.5 L1112.5 150.9 L1110.1 149.3 L1107.7 147.6 L1105.3 146.0 L1102.9 144.4 L1100.5 142.8 L1098.1 141.1 L1095.6 139.5 L1093.2 137.9 L1090.7 136.2 L1088.2 134.6 L1085.7 133.0 L1083.2 131.4 L1080.6 129.7 L1078.1 128.1 L1075.5 126.5 L1072.9 124.9 L1070.3 123.2 L1067.7 121.6 L1065.1 120.0 L1062.5 118.4 L1059.9 116.7 L1057.2 115.1 L1054.6 113.5 L1051.9 111.8 L1049.2 110.2 L1046.5 108.6 L1043.8 107.0 L1041.1 105.3 L1038.3 103.7 L1035.6 102.1 L1032.9 100.5 L1030.1 98.8 L1027.3 97.2 L1024.5 95.6 L1021.8 93.9 L1019.0 92.3 L1016.2 90.7 L1013.3 89.1 L1010.5 87.4 L1007.7 85.8 L1004.8 84.2 L1002.0 82.6 L999.1 80.9 L996.3 79.3 L993.4 77.7 L990.5 76.1 L987.6 74.4 L984.8 72.8 L981.9 71.2 L979.0 69.5 L976.1 67.9 L973.1 66.3 L970.2 64.7 L967.3 63.0 L964.4 61.4 L961.4 59.8 L958.5 58.2 L955.5 56.5 L952.6 54.9 L949.7 53.3 L946.7 51.6 L943.7 50.0 L940.8 48.4 L937.8 46.8 L934.8 45.1 L931.9 43.5 L928.9 41.9 L925.9 40.3 L923.0 38.6 L920.0 37.0 L917.0 35.4 L914.0 33.7 L911.0 32.1 L908.1 30.5 L905.1 28.9 L902.1 27.2"/>
<path d="M902.1 613.0 L904.7 611.3 L907.2 609.7 L909.8 608.1 L912.3 606.5 L914.9 604.8 L917.4 603.2 L920.0 601.6 L922.5 599.9 L925.1 598.3 L927.6 596.7 L930.2 595.1 L932.7 593.4 L935.3 591.8 L937.8 590.2 L940.3 588.6 L942.9 586.9 L945.4 585.3 L947.9 583.7 L950.4 582.0 L953.0 580.4 L955.5 578.8 L958.0 577.2 L960.5 575.5 L963.0 573.9 L965.5 572.3 L968.0 570.7 L970.5 569.0 L972.9 567.4 L975.4 565.8 L977.9 564.2 L980.4 562.5 L982.8 560.9 L985.3 559.3 L987.7 557.6 L990.2 556.0 L992.6 554.4 L995.0 552.8 L997.4 551.1 L999.9 549.5 L1002.3 547.9 L1004.7 546.3 L1007.1 544.6 L1009.4 543.0 L1011.8 541.4 L1014.2 539.7 L1016.5 538.1 L1018.9 536.5 L1021.2 534.9 L1023.5 533.2 L1025.9 531.6 L1028.2 530.0 L1030.5 528.4 L1032.8 526.7 L1035.1 525.1 L1037.3 523.5 L1039.6 521.8 L1041.8 520.2 L1044.1 518.6 L1046.3 517.0 L1048.5 515.3 L1050.7 513.7 L1052.9 512.1 L1055.1 510.5 L1057.3 508.8 L1059.5 507.2 L1061.6 505.6 L1063.7 504.0 L1065.9 502.3 L1068.0 500.7 L1070.1 499.1 L1072.2 497.4 L1074.2 495.8 L1076.3 494.2 L1078.3 492.6 L1080.4 490.9 L1082.4 489.3 L1084.4 487.7 L1086.4 486.1 L1088.4 484.4 L1090.3 482.8 L1092.3 481.2 L1094.2 479.5 L1096.2 477.9 L1098.1 476.3 L1100.0 474.7 L1101.8 473.0 L1103.7 471.4 L1105.5 469.8 L1107.4 468.2 L1109.2 466.5 L1111.0 464.9 L1112.8 463.3 L1114.5 461.6 L1116.3 460.0 L1118.0 458.4 L1119.7 456.8 L1121.4 455.1 L1123.1 453.5 L1124.8 451.9 L1126.4 450.3 L1128.1 448.6 L1129.7 447.0 L1131.3 445.4 L1132.9 443.8 L1134.4 442.1 L1136.0 440.5 L1137.5 438.9 L1139.0 437.2 L1140.5 435.6 L1142.0 434.0 L1143.5 432.4 L1144.9 430.7 L1146.3 429.1 L1147.7 427.5 L1149.1 425.9 L1150.5 424.2 L1151.8 422.6 L1153.1 421.0 L1154.4 419.3 L1155.7 417.7 L1157.0 416.1 L1158.2 414.5 L1159.5 412.8 L1160.7 411.2 L1161.9 409.6 L1163.0 408.0 L1164.2 406.3 L1165.3 404.7 L1166.4 403.1 L1167.5 401.5 L1168.6 399.8 L1169.6 398.2 L1170.7 396.6 L1171.7 394.9 L1172.7 393.3 L1173.6 391.7 L1174.6 390.1 L1175.5 388.4 L1176.4 386.8 L1177.3 385.2 L1178.2 383.6 L1179.0 381.9 L1179.8 380.3 L1180.6 378.7 L1181.4 377.0 L1182.2 375.4 L1182.9 373.8 L1183.6 372.2 L1184.3 370.5 L1185.0 368.9 L1185.6 367.3 L1186.3 365.7 L1186.9 364.0 L1187.5 362.4 L1188.0 360.8 L1188.6 359.1 L1189.1 357.5 L1189.6 355.9 L1190.1 354.3 L1190.5 352.6 L1190.9 351.0 L1191.4 349.4 L1191.7 347.8 L1192.1 346.1 L1192.5 344.5 L1192.8 342.9 L1193.1 341.3 L1193.4 339.6 L1193.6 338.0 L1193.8 336.4 L1194.1 334.7 L1194.2 333.1 L1194.4 331.5 L1194.6 329.9 L1194.7 328.2 L1194.8 326.6 L1194.9 325.0 L1194.9 323.4 L1194.9 321.7 L1195.0 320.1 L1194.9 318.5 L1194.9 316.8 L1194.9 315.2 L1194.8 313.6 L1194.7 312.0 L1194.6 310.3 L1194.4 308.7 L1194.2 307.1 L1194.1 305.5 L1193.8 303.8 L1193.6 302.2 L1193.4 300.6 L1193.1 298.9 L1192.8 297.3 L1192.5 295.7 L1192.1 294.1 L1191.7 292.4 L1191.4 290.8 L1190.9 289.2 L1190.5 287.6 L1190.1 285.9 L1189.6 284.3 L1189.1 282.7 L1188.6 281.1 L1188.0 279.4 L1187.5 277.8 L1186.9 276.2 L1186.3 274.5 L1185.6 272.9 L1185.0 271.3 L1184.3 269.7 L1183.6 268.0 L1182.9 266.4 L1182.2 264.8 L1181.4 263.2 L1180.6 261.5 L1179.8 259.9 L1179.0 258.3 L1178.2 256.6 L1177.3 255.0 L1176.4 253.4 L1175.5 251.8 L1174.6 250.1 L1173.6 248.5 L1172.7 246.9 L1171.7 245.3 L1170.7 243.6 L1169.6 242.0 L1168.6 240.4 L1167.5 238.8 L1166.4 237.1 L1165.3 235.5 L1164.2 233.9 L1163.0 232.2 L1161.9 230.6 L1160.7 229.0 L1159.5 227.4 L1158.2 225.7 L1157.0 224.1 L1155.7 222.5 L1154.4 220.9 L1153.1 219.2 L1151.8 217.6 L1150.5 216.0 L1149.1 214.3 L1147.7 212.7 L1146.3 211.1 L1144.9 209.5 L1143.5 207.8 L1142.0 206.2 L1140.5 204.6 L1139.0 203.0 L1137.5 201.3 L1136.0 199.7 L1134.4 198.1 L1132.9 196.4 L1131.3 194.8 L1129.7 193.2 L1128.1 191.6 L1126.4 189.9 L1124.8 188.3 L1123.1 186.7 L1121.4 185.1 L1119.7 183.4 L1118.0 181.8 L1116.3 180.2 L1114.5 178.6 L1112.8 176.9 L1111.0 175.3 L1109.2 173.7 L1107.4 172.0 L1105.5 170.4 L1103.7 168.8 L1101.8 167.2 L1100.0 165.5 L1098.1 163.9 L1096.2 162.3 L1094.2 160.7 L1092.3 159.0 L1090.3 157.4 L1088.4 155.8 L1086.4 154.1 L1084.4 152.5 L1082.4 150.9 L1080.4 149.3 L1078.3 147.6 L1076.3 146.0 L1074.2 144.4 L1072.2 142.8 L1070.1 141.1 L1068.0 139.5 L1065.9 137.9 L1063.7 136.2 L1061.6 134.6 L1059.5 133.0 L1057.3 131.4 L1055.1 129.7 L1052.9 128.1 L1050.7 126.5 L1048.5 124.9 L1046.3 123.2 L1044.1 121.6 L1041.8 120.0 L1039.6 118.4 L1037.3 116.7 L1035.1 115.1 L1032.8 113.5 L1030.5 111.8 L1028.2 110.2 L1025.9 108.6 L1023.5 107.0 L1021.2 105.3 L1018.9 103.7 L1016.5 102.1 L1014.2 100.5 L1011.8 98.8 L1009.4 97.2 L1007.1 95.6 L1004.7 93.9 L1002.3 92.3 L999.9 90.7 L997.4 89.1 L995.0 87.4 L992.6 85.8 L990.2 84.2 L987.7 82.6 L985.3 80.9 L982.8 79.3 L980.4 77.7 L977.9 76.1 L975.4 74.4 L972.9 72.8 L970.5 71.2 L968.0 69.5 L965.5 67.9 L963.0 66.3 L960.5 64.7 L958.0 63.0 L955.5 61.4 L953.0 59.8 L950.4 58.2 L947.9 56.5 L945.4 54.9 L942.9 53.3 L940.3 51.6 L937.8 50.0 L935.3 48.4 L932.7 46.8 L930.2 45.1 L927.6 43.5 L925.1 41.9 L922.5 40.3 L920.0 38.6 L917.4 37.0 L914.9 35.4 L912.3 33.7 L909.8 32.1 L907.2 30.5 L904.7 28.9 L902.1 27.2"/>
<path d="M902.1 613.0 L904.2 611.3 L906.4 609.7 L908.5 608.1 L910.6 606.5 L912.7 604.8 L914.9 603.2 L917.0 601.6 L919.1 599.9 L921.2 598.3 L923.4 596.7 L925.5 595.1 L927.6 593.4 L929.7 591.8 L931.8 590.2 L934.0 588.6 L936.1 586.9 L938.2 585.3 L940.3 583.7 L942.4 582.0 L944.5 580.4 L946.6 578.8 L948.7 577.2 L950.8 575.5 L952.8 573.9 L954.9 572.3 L957.0 570.7 L959.1 569.0 L961.1 567.4 L963.2 565.8 L965.3 564.2 L967.3 562.5 L969.4 560.9 L971.4 559.3 L973.5 557.6 L975.5 556.0 L977.5 554.4 L979.5 552.8 L981.6 551.1 L983.6 549.5 L985.6 547.9 L987.6 546.3 L989.6 544.6 L991.5 543.0 L993.5 541.4 L995.5 539.7 L997.5 538.1 L999.4 536.5 L1001.4 534.9 L1003.3 533.2 L1005.2 531.6 L1007.2 530.0 L1009.1 528.4 L1011.0 526.7 L1012.9 525.1 L1014.8 523.5 L1016.7 521.8 L1018.6 520.2 L1020.4 518.6 L1022.3 517.0 L1024.1 515.3 L1026.0 513.7 L1027.8 512.1 L1029.6 510.5 L1031.4 508.8 L1033.2 507.2 L1035.0 505.6 L1036.8 504.0 L1038.6 502.3 L1040.3 500.7 L1042.1 499.1 L1043.8 497.4 L1045.5 495.8 L1047.3 494.2 L1049.0 492.6 L1050.7 490.9 L1052.4 489.3 L1054.0 487.7 L1055.7 486.1 L1057.3 484.4 L1059.0 482.8 L1060.6 481.2 L1062.2 479.5 L1063.8 477.9 L1065.4 476.3 L1067.0 474.7 L1068.5 473.0 L1070.1 471.4 L1071.6 469.8 L1073.2 468.2 L1074.7 466.5 L1076.2 464.9 L1077.7 463.3 L1079.1 461.6 L1080.6 460.0 L1082.0 458.4 L1083.5 456.8 L1084.9 455.1 L1086.3 453.5 L1087.7 451.9 L1089.1 450.3 L1090.4 448.6 L1091.8 447.0 L1093.1 445.4 L1094.4 443.8 L1095.7 442.1 L1097.0 440.5 L1098.3 438.9 L1099.5 437.2 L1100.8 435.6 L1102.0 434.0 L1103.2 432.4 L1104.4 430.7 L1105.6 429.1 L1106.8 427.5 L1107.9 425.9 L1109.1 424.2 L1110.2 422.6 L1111.3 421.0 L1112.4 419.3 L1113.5 417.7 L1114.5 416.1 L1115.6 414.5 L1116.6 412.8 L1117.6 411.2 L1118.6 409.6 L1119.6 408.0 L1120.5 406.3 L1121.5 404.7 L1122.4 403.1 L1123.3 401.5 L1124.2 399.8 L1125.1 398.2 L1125.9 396.6 L1126.7 394.9 L1127.6 393.3 L1128.4 391.7 L1129.2 390.1 L1129.9 388.4 L1130.7 386.8 L1131.4 385.2 L1132.2 383.6 L1132.9 381.9 L1133.5 380.3 L1134.2 378.7 L1134.9 377.0 L1135.5 375.4 L1136.1 373.8 L1136.7 372.2 L1137.3 370.5 L1137.8 368.9 L1138.4 367.3 L1138.9 365.7 L1139.4 364.0 L1139.9 362.4 L1140.4 360.8 L1140.8 359.1 L1141.3 357.5 L1141.7 355.9 L1142.1 354.3 L1142.4 352.6 L1142.8 351.0 L1143.1 349.4 L1143.5 347.8 L1143.8 346.1 L1144.1 344.5 L1144.3 342.9 L1144.6 341.3 L1144.8 339.6 L1145.0 338.0 L1145.2 336.4 L1145.4 334.7 L1145.6 333.1 L1145.7 331.5 L1145.8 329.9 L1145.9 328.2 L1146.0 326.6 L1146.1 325.0 L1146.1 323.4 L1146.1 321.7 L1146.2 320.1 L1146.1 318.5 L1146.1 316.8 L1146.1 315.2 L1146.0 313.6 L1145.9 312.0 L1145.8 310.3 L1145.7 308.7 L1145.6 307.1 L1145.4 305.5 L1145.2 303.8 L1145.0 302.2 L1144.8 300.6 L1144.6 298.9 L1144.3 297.3 L1144.1 295.7 L1143.8 294.1 L1143.5 292.4 L1143.1 290.8 L1142.8 289.2 L1142.4 287.6 L1142.1 285.9 L1141.7 284.3 L1141.3 282.7 L1140.8 281.1 L1140.4 279.4 L1139.9 277.8 L1139.4 276.2 L1138.9 274.5 L1138.4 272.9 L1137.8 271.3 L1137.3 269.7 L1136.7 268.0 L1136.1 266.4 L1135.5 264.8 L1134.9 263.2 L1134.2 261.5 L1133.5 259.9 L1132.9 258.3 L1132.2 256.6 L1131.4 255.0 L1130.7 253.4 L1129.9 251.8 L1129.2 250.1 L1128.4 248.5 L1127.6 246.9 L1126.7 245.3 L1125.9 243.6 L1125.1 242.0 L1124.2 240.4 L1123.3 238.8 L1122.4 237.1 L1121.5 235.5 L1120.5 233.9 L1119.6 232.2 L1118.6 230.6 L1117.6 229.0 L1116.6 227.4 L1115.6 225.7 L1114.5 224.1 L1113.5 222.5 L1112.4 220.9 L1111.3 219.2 L1110.2 217.6 L1109.1 216.0 L1107.9 214.3 L1106.8 212.7 L1105.6 211.1 L1104.4 209.5 L1103.2 207.8 L1102.0 206.2 L1100.8 204.6 L1099.5 203.0 L1098.3 201.3 L1097.0 199.7 L1095.7 198.1 L1094.4 196.4 L1093.1 194.8 L1091.8 193.2 L1090.4 191.6 L1089.1 189.9 L1087.7 188.3 L1086.3 186.7 L1084.9 185.1 L1083.5 183.4 L1082.0 181.8 L1080.6 180.2 L1079.1 178.6 L1077.7 176.9 L1076.2 175.3 L1074.7 173.7 L1073.2 172.0 L1071.6 170.4 L1070.1 168.8 L1068.5 167.2 L1067.0 165.5 L1065.4 163.9 L1063.8 162.3 L1062.2 160.7 L1060.6 159.0 L1059.0 157.4 L1057.3 155.8 L1055.7 154.1 L1054.0 152.5 L1052.4 150.9 L1050.7 149.3 L1049.0 147.6 L1047.3 146.0 L1045.5 144.4 L1043.8 142.8 L1042.1 141.1 L1040.3 139.5 L1038.6 137.9 L1036.8 136.2 L1035.0 134.6 L1033.2 133.0 L1031.4 131.4 L1029.6 129.7 L1027.8 128.1 L1026.0 126.5 L1024.1 124.9 L1022.3 123.2 L1020.4 121.6 L1018.6 120.0 L1016.7 118.4 L1014.8 116.7 L1012.9 115.1 L1011.0 113.5 L1009.1 111.8 L1007.2 110.2 L1005.2 108.6 L1003.3 107.0 L1001.4 105.3 L999.4 103.7 L997.5 102.1 L995.5 100.5 L993.5 98.8 L991.5 97.2 L989.6 95.6 L987.6 93.9 L985.6 92.3 L983.6 90.7 L981.6 89.1 L979.5 87.4 L977.5 85.8 L975.5 84.2 L973.5 82.6 L971.4 80.9 L969.4 79.3 L967.3 77.7 L965.3 76.1 L963.2 74.4 L961.1 72.8 L959.1 71.2 L957.0 69.5 L954.9 67.9 L952.8 66.3 L950.8 64.7 L948.7 63.0 L946.6 61.4 L944.5 59.8 L942.4 58.2 L940.3 56.5 L938.2 54.9 L936.1 53.3 L934.0 51.6 L931.8 50.0 L929.7 48.4 L927.6 46.8 L925.5 45.1 L923.4 43.5 L921.2 41.9 L919.1 40.3 L917.0 38.6 L914.9 37.0 L912.7 35.4 L910.6 33.7 L908.5 32.1 L906.4 30.5 L904.2 28.9 L902.1 27.2"/>
<path d="M902.1 613.0 L903.8 611.3 L905.5 609.7 L907.2 608.1 L908.9 606.5 L910.6 604.8 L912.3 603.2 L914.0 601.6 L915.7 599.9 L917.4 598.3 L919.1 596.7 L920.8 595.1 L922.5 593.4 L924.2 591.8 L925.9 590.2 L927.6 588.6 L929.3 586.9 L931.0 585.3 L932.6 583.7 L934.3 582.0 L936.0 580.4 L937.7 578.8 L939.4 577.2 L941.0 575.5 L942.7 573.9 L944.4 572.3 L946.0 570.7 L947.7 569.0 L949.3 567.4 L951.0 565.8 L952.6 564.2 L954.3 562.5 L955.9 560.9 L957.6 559.3 L959.2 557.6 L960.8 556.0 L962.4 554.4 L964.1 552.8 L965.7 551.1 L967.3 549.5 L968.9 547.9 L970.5 546.3 L972.1 544.6 L973.7 543.0 L975.2 541.4 L976.8 539.7 L978.4 538.1 L980.0 536.5 L981.5 534.9 L983.1 533.2 L984.6 531.6 L986.2 530.0 L987.7 528.4 L989.2 526.7 L990.7 525.1 L992.3 523.5 L993.8 521.8 L995.3 520.2 L996.8 518.6 L998.2 517.0 L999.7 515.3 L1001.2 513.7 L1002.7 512.1 L1004.1 510.5 L1005.6 508.8 L1007.0 507.2 L1008.4 505.6 L1009.9 504.0 L1011.3 502.3 L1012.7 500.7 L1014.1 499.1 L1015.5 497.4 L1016.9 495.8 L1018.2 494.2 L1019.6 492.6 L1021.0 490.9 L1022.3 489.3 L1023.6 487.7 L1025.0 486.1 L1026.3 484.4 L1027.6 482.8 L1028.9 481.2 L1030.2 479.5 L1031.5 477.9 L1032.7 476.3 L1034.0 474.7 L1035.3 473.0 L1036.5 471.4 L1037.7 469.8 L1038.9 468.2 L1040.2 466.5 L1041.4 464.9 L1042.5 463.3 L1043.7 461.6 L1044.9 460.0 L1046.0 458.4 L1047.2 456.8 L1048.3 455.1 L1049.4 453.5 L1050.6 451.9 L1051.7 450.3 L1052.8 448.6 L1053.8 447.0 L1054.9 445.4 L1056.0 443.8 L1057.0 442.1 L1058.0 440.5 L1059.0 438.9 L1060.1 437.2 L1061.0 435.6 L1062.0 434.0 L1063.0 432.4 L1064.0 430.7 L1064.9 429.1 L1065.8 427.5 L1066.8 425.9 L1067.7 424.2 L1068.6 422.6 L1069.5 421.0 L1070.3 419.3 L1071.2 417.7 L1072.0 416.1 L1072.9 414.5 L1073.7 412.8 L1074.5 411.2 L1075.3 409.6 L1076.1 408.0 L1076.8 406.3 L1077.6 404.7 L1078.3 403.1 L1079.0 401.5 L1079.8 399.8 L1080.5 398.2 L1081.1 396.6 L1081.8 394.9 L1082.5 393.3 L1083.1 391.7 L1083.8 390.1 L1084.4 388.4 L1085.0 386.8 L1085.6 385.2 L1086.1 383.6 L1086.7 381.9 L1087.3 380.3 L1087.8 378.7 L1088.3 377.0 L1088.8 375.4 L1089.3 373.8 L1089.8 372.2 L1090.2 370.5 L1090.7 368.9 L1091.1 367.3 L1091.5 365.7 L1091.9 364.0 L1092.3 362.4 L1092.7 360.8 L1093.1 359.1 L1093.4 357.5 L1093.8 355.9 L1094.1 354.3 L1094.4 352.6 L1094.7 351.0 L1094.9 349.4 L1095.2 347.8 L1095.4 346.1 L1095.7 344.5 L1095.9 342.9 L1096.1 341.3 L1096.3 339.6 L1096.4 338.0 L1096.6 336.4 L1096.7 334.7 L1096.9 333.1 L1097.0 331.5 L1097.1 329.9 L1097.2 328.2 L1097.2 326.6 L1097.3 325.0 L1097.3 323.4 L1097.3 321.7 L1097.3 320.1 L1097.3 318.5 L1097.3 316.8 L1097.3 315.2 L1097.2 313.6 L1097.2 312.0 L1097.1 310.3 L1097.0 308.7 L1096.9 307.1 L1096.7 305.5 L1096.6 303.8 L1096.4 302.2 L1096.3 300.6 L1096.1 298.9 L1095.9 297.3 L1095.7 295.7 L1095.4 294.1 L1095.2 292.4 L1094.9 290.8 L1094.7 289.2 L1094.4 287.6 L1094.1 285.9 L1093.8 284.3 L1093.4 282.7 L1093.1 281.1 L1092.7 279.4 L1092.3 277.8 L1091.9 276.2 L1091.5 274.5 L1091.1 272.9 L1090.7 271.3 L1090.2 269.7 L1089.8 268.0 L1089.3 266.4 L1088.8 264.8 L1088.3 263.2 L1087.8 261.5 L1087.3 259.9 L1086.7 258.3 L1086.1 256.6 L1085.6 255.0 L1085.0 253.4 L1084.4 251.8 L1083.8 250.1 L1083.1 248.5 L1082.5 246.9 L1081.8 245.3 L1081.1 243.6 L1080.5 242.0 L1079.8 240.4 L1079.0 238.8 L1078.3 237.1 L1077.6 235.5 L1076.8 233.9 L1076.1 232.2 L1075.3 230.6 L1074.5 229.0 L1073.7 227.4 L1072.9 225.7 L1072.0 224.1 L1071.2 222.5 L1070.3 220.9 L1069.5 219.2 L1068.6 217.6 L1067.7 216.0 L1066.8 214.3 L1065.8 212.7 L1064.9 211.1 L1064.0 209.5 L1063.0 207.8 L1062.0 206.2 L1061.0 204.6 L1060.1 203.0 L1059.0 201.3 L1058.0 199.7 L1057.0 198.1 L1056.0 196.4 L1054.9 194.8 L1053.8 193.2 L1052.8 191.6 L1051.7 189.9 L1050.6 188.3 L1049.4 186.7 L1048.3 185.1 L1047.2 183.4 L1046.0 181.8 L1044.9 180.2 L1043.7 178.6 L1042.5 176.9 L1041.4 175.3 L1040.2 173.7 L1038.9 172.0 L1037.7 170.4 L1036.5 168.8 L1035.3 167.2 L1034.0 165.5 L1032.7 163.9 L1031.5 162.3 L1030.2 160.7 L1028.9 159.0 L1027.6 157.4 L1026.3 155.8 L1025.0 154.1 L1023.6 152.5 L1022.3 150.9 L1021.0 149.3 L1019.6 147.6 L1018.2 146.0 L1016.9 144.4 L1015.5 142.8 L1014.1 141.1 L1012.7 139.5 L1011.3 137.9 L1009.9 136.2 L1008.4 134.6 L1007.0 133.0 L1005.6 131.4 L1004.1 129.7 L1002.7 128.1 L1001.2 126.5 L999.7 124.9 L998.2 123.2 L996.8 121.6 L995.3 120.0 L993.8 118.4 L992.3 116.7 L990.7 115.1 L989.2 113.5 L987.7 111.8 L986.2 110.2 L984.6 108.6 L983.1 107.0 L981.5 105.3 L980.0 103.7 L978.4 102.1 L976.8 100.5 L975.2 98.8 L973.7 97.2 L972.1 95.6 L970.5 93.9 L968.9 92.3 L967.3 90.7 L965.7 89.1 L964.1 87.4 L962.4 85.8 L960.8 84.2 L959.2 82.6 L957.6 80.9 L955.9 79.3 L954.3 77.7 L952.6 76.1 L951.0 74.4 L949.3 72.8 L947.7 71.2 L946.0 69.5 L944.4 67.9 L942.7 66.3 L941.0 64.7 L939.4 63.0 L937.7 61.4 L936.0 59.8 L934.3 58.2 L932.6 56.5 L931.0 54.9 L929.3 53.3 L927.6 51.6 L925.9 50.0 L924.2 48.4 L922.5 46.8 L920.8 45.1 L919.1 43.5 L917.4 41.9 L915.7 40.3 L914.0 38.6 L912.3 37.0 L910.6 35.4 L908.9 33.7 L907.2 32.1 L905.5 30.5 L903.8 28.9 L902.1 27.2"/>
<path d="M902.1 613.0 L903.4 611.3 L904.7 609.7 L905.9 608.1 L907.2 606.5 L908.5 604.8 L909.8 603.2 L911.0 601.6 L912.3 599.9 L913.6 598.3 L914.9 596.7 L916.1 595.1 L917.4 593.4 L918.7 591.8 L919.9 590.2 L921.2 588.6 L922.5 586.9 L923.7 585.3 L925.0 583.7 L926.3 582.0 L927.5 580.4 L928.8 578.8 L930.0 577.2 L931.3 575.5 L932.5 573.9 L933.8 572.3 L935.0 570.7 L936.3 569.0 L937.5 567.4 L938.8 565.8 L940.0 564.2 L941.2 562.5 L942.5 560.9 L943.7 559.3 L944.9 557.6 L946.1 556.0 L947.3 554.4 L948.6 552.8 L949.8 551.1 L951.0 549.5 L952.2 547.9 L953.4 546.3 L954.6 544.6 L955.8 543.0 L957.0 541.4 L958.1 539.7 L959.3 538.1 L960.5 536.5 L961.7 534.9 L962.8 533.2 L964.0 531.6 L965.1 530.0 L966.3 528.4 L967.4 526.7 L968.6 525.1 L969.7 523.5 L970.8 521.8 L972.0 520.2 L973.1 518.6 L974.2 517.0 L975.3 515.3 L976.4 513.7 L977.5 512.1 L978.6 510.5 L979.7 508.8 L980.8 507.2 L981.9 505.6 L982.9 504.0 L984.0 502.3 L985.0 500.7 L986.1 499.1 L987.1 497.4 L988.2 495.8 L989.2 494.2 L990.2 492.6 L991.2 490.9 L992.3 489.3 L993.3 487.7 L994.3 486.1 L995.2 484.4 L996.2 482.8 L997.2 481.2 L998.2 479.5 L999.1 477.9 L1000.1 476.3 L1001.0 474.7 L1002.0 473.0 L1002.9 471.4 L1003.8 469.8 L1004.7 468.2 L1005.6 466.5 L1006.5 464.9 L1007.4 463.3 L1008.3 461.6 L1009.2 460.0 L1010.1 458.4 L1010.9 456.8 L1011.8 455.1 L1012.6 453.5 L1013.4 451.9 L1014.3 450.3 L1015.1 448.6 L1015.9 447.0 L1016.7 445.4 L1017.5 443.8 L1018.3 442.1 L1019.0 440.5 L1019.8 438.9 L1020.6 437.2 L1021.3 435.6 L1022.0 434.0 L1022.8 432.4 L1023.5 430.7 L1024.2 429.1 L1024.9 427.5 L1025.6 425.9 L1026.3 424.2 L1027.0 422.6 L1027.6 421.0 L1028.3 419.3 L1028.9 417.7 L1029.5 416.1 L1030.2 414.5 L1030.8 412.8 L1031.4 411.2 L1032.0 409.6 L1032.6 408.0 L1033.1 406.3 L1033.7 404.7 L1034.3 403.1 L1034.8 401.5 L1035.3 399.8 L1035.9 398.2 L1036.4 396.6 L1036.9 394.9 L1037.4 393.3 L1037.9 391.7 L1038.3 390.1 L1038.8 388.4 L1039.3 386.8 L1039.7 385.2 L1040.1 383.6 L1040.6 381.9 L1041.0 380.3 L1041.4 378.7 L1041.8 377.0 L1042.1 375.4 L1042.5 373.8 L1042.9 372.2 L1043.2 370.5 L1043.5 368.9 L1043.9 367.3 L1044.2 365.7 L1044.5 364.0 L1044.8 362.4 L1045.1 360.8 L1045.3 359.1 L1045.6 357.5 L1045.8 355.9 L1046.1 354.3 L1046.3 352.6 L1046.5 351.0 L1046.7 349.4 L1046.9 347.8 L1047.1 346.1 L1047.3 344.5 L1047.4 342.9 L1047.6 341.3 L1047.7 339.6 L1047.9 338.0 L1048.0 336.4 L1048.1 334.7 L1048.2 333.1 L1048.3 331.5 L1048.3 329.9 L1048.4 328.2 L1048.4 326.6 L1048.5 325.0 L1048.5 323.4 L1048.5 321.7 L1048.5 320.1 L1048.5 318.5 L1048.5 316.8 L1048.5 315.2 L1048.4 313.6 L1048.4 312.0 L1048.3 310.3 L1048.3 308.7 L1048.2 307.1 L1048.1 305.5 L1048.0 303.8 L1047.9 302.2 L1047.7 300.6 L1047.6 298.9 L1047.4 297.3 L1047.3 295.7 L1047.1 294.1 L1046.9 292.4 L1046.7 290.8 L1046.5 289.2 L1046.3 287.6 L1046.1 285.9 L1045.8 284.3 L1045.6 282.7 L1045.3 281.1 L1045.1 279.4 L1044.8 277.8 L1044.5 276.2 L1044.2 274.5 L1043.9 272.9 L1043.5 271.3 L1043.2 269.7 L1042.9 268.0 L1042.5 266.4 L1042.1 264.8 L1041.8 263.2 L1041.4 261.5 L1041.0 259.9 L1040.6 258.3 L1040.1 256.6 L1039.7 255.0 L1039.3 253.4 L1038.8 251.8 L1038.3 250.1 L1037.9 248.5 L1037.4 246.9 L1036.9 245.3 L1036.4 243.6 L1035.9 242.0 L1035.3 240.4 L1034.8 238.8 L1034.3 237.1 L1033.7 235.5 L1033.1 233.9 L1032.6 232.2 L1032.0 230.6 L1031.4 229.0 L1030.8 227.4 L1030.2 225.7 L1029.5 224.1 L1028.9 222.5 L1028.3 220.9 L1027.6 219.2 L1027.0 217.6 L1026.3 216.0 L1025.6 214.3 L1024.9 212.7 L1024.2 211.1 L1023.5 209.5 L1022.8 207.8 L1022.0 206.2 L1021.3 204.6 L1020.6 203.0 L1019.8 201.3 L1019.0 199.7 L1018.3 198.1 L1017.5 196.4 L1016.7 194.8 L1015.9 193.2 L1015.1 191.6 L1014.3 189.9 L1013.4 188.3 L1012.6 186.7 L1011.8 185.1 L1010.9 183.4 L1010.1 181.8 L1009.2 180.2 L1008.3 178.6 L1007.4 176.9 L1006.5 175.3 L1005.6 173.7 L1004.7 172.0 L1003.8 170.4 L1002.9 168.8 L1002.0 167.2 L1001.0 165.5 L1000.1 163.9 L999.1 162.3 L998.2 160.7 L997.2 159.0 L996.2 157.4 L995.2 155.8 L994.3 154.1 L993.3 152.5 L992.3 150.9 L991.2 149.3 L990.2 147.6 L989.2 146.0 L988.2 144.4 L987.1 142.8 L986.1 141.1 L985.0 139.5 L984.0 137.9 L982.9 136.2 L981.9 134.6 L980.8 133.0 L979.7 131.4 L978.6 129.7 L977.5 128.1 L976.4 126.5 L975.3 124.9 L974.2 123.2 L973.1 121.6 L972.0 120.0 L970.8 118.4 L969.7 116.7 L968.6 115.1 L967.4 113.5 L966.3 111.8 L965.1 110.2 L964.0 108.6 L962.8 107.0 L961.7 105.3 L960.5 103.7 L959.3 102.1 L958.1 100.5 L957.0 98.8 L955.8 97.2 L954.6 95.6 L953.4 93.9 L952.2 92.3 L951.0 90.7 L949.8 89.1 L948.6 87.4 L947.3 85.8 L946.1 84.2 L944.9 82.6 L943.7 80.9 L942.5 79.3 L941.2 77.7 L940.0 76.1 L938.8 74.4 L937.5 72.8 L936.3 71.2 L935.0 69.5 L933.8 67.9 L932.5 66.3 L931.3 64.7 L930.0 63.0 L928.8 61.4 L927.5 59.8 L926.3 58.2 L925.0 56.5 L923.7 54.9 L922.5 53.3 L921.2 51.6 L919.9 50.0 L918.7 48.4 L917.4 46.8 L916.1 45.1 L914.9 43.5 L913.6 41.9 L912.3 40.3 L911.0 38.6 L909.8 37.0 L908.5 35.4 L907.2 33.7 L905.9 32.1 L904.7 30.5 L903.4 28.9 L902.1 27.2"/>
<path d="M902.1 613.0 L903.0 611.3 L903.8 609.7 L904.7 608.1 L905.5 606.5 L906.4 604.8 L907.2 603.2 L908.1 601.6 L908.9 599.9 L909.8 598.3 L910.6 596.7 L911.5 595.1 L912.3 593.4 L913.2 591.8 L914.0 590.2 L914.8 588.6 L915.7 586.9 L916.5 585.3 L917.4 583.7 L918.2 582.0 L919.1 580.4 L919.9 578.8 L920.7 577.2 L921.6 575.5 L922.4 573.9 L923.2 572.3 L924.1 570.7 L924.9 569.0 L925.7 567.4 L926.5 565.8 L927.4 564.2 L928.2 562.5 L929.0 560.9 L929.8 559.3 L930.6 557.6 L931.5 556.0 L932.3 554.4 L933.1 552.8 L933.9 551.1 L934.7 549.5 L935.5 547.9 L936.3 546.3 L937.1 544.6 L937.9 543.0 L938.7 541.4 L939.5 539.7 L940.2 538.1 L941.0 536.5 L941.8 534.9 L942.6 533.2 L943.4 531.6 L944.1 530.0 L944.9 528.4 L945.7 526.7 L946.4 525.1 L947.2 523.5 L947.9 521.8 L948.7 520.2 L949.4 518.6 L950.2 517.0 L950.9 515.3 L951.6 513.7 L952.4 512.1 L953.1 510.5 L953.8 508.8 L954.6 507.2 L955.3 505.6 L956.0 504.0 L956.7 502.3 L957.4 500.7 L958.1 499.1 L958.8 497.4 L959.5 495.8 L960.2 494.2 L960.8 492.6 L961.5 490.9 L962.2 489.3 L962.9 487.7 L963.5 486.1 L964.2 484.4 L964.8 482.8 L965.5 481.2 L966.1 479.5 L966.8 477.9 L967.4 476.3 L968.1 474.7 L968.7 473.0 L969.3 471.4 L969.9 469.8 L970.5 468.2 L971.1 466.5 L971.7 464.9 L972.3 463.3 L972.9 461.6 L973.5 460.0 L974.1 458.4 L974.6 456.8 L975.2 455.1 L975.8 453.5 L976.3 451.9 L976.9 450.3 L977.4 448.6 L978.0 447.0 L978.5 445.4 L979.0 443.8 L979.5 442.1 L980.1 440.5 L980.6 438.9 L981.1 437.2 L981.6 435.6 L982.1 434.0 L982.6 432.4 L983.0 430.7 L983.5 429.1 L984.0 427.5 L984.4 425.9 L984.9 424.2 L985.3 422.6 L985.8 421.0 L986.2 419.3 L986.6 417.7 L987.1 416.1 L987.5 414.5 L987.9 412.8 L988.3 411.2 L988.7 409.6 L989.1 408.0 L989.5 406.3 L989.8 404.7 L990.2 403.1 L990.6 401.5 L990.9 399.8 L991.3 398.2 L991.6 396.6 L992.0 394.9 L992.3 393.3 L992.6 391.7 L992.9 390.1 L993.2 388.4 L993.5 386.8 L993.8 385.2 L994.1 383.6 L994.4 381.9 L994.7 380.3 L994.9 378.7 L995.2 377.0 L995.5 375.4 L995.7 373.8 L995.9 372.2 L996.2 370.5 L996.4 368.9 L996.6 367.3 L996.8 365.7 L997.0 364.0 L997.2 362.4 L997.4 360.8 L997.6 359.1 L997.8 357.5 L997.9 355.9 L998.1 354.3 L998.2 352.6 L998.4 351.0 L998.5 349.4 L998.6 347.8 L998.8 346.1 L998.9 344.5 L999.0 342.9 L999.1 341.3 L999.2 339.6 L999.3 338.0 L999.3 336.4 L999.4 334.7 L999.5 333.1 L999.5 331.5 L999.6 329.9 L999.6 328.2 L999.7 326.6 L999.7 325.0 L999.7 323.4 L999.7 321.7 L999.7 320.1 L999.7 318.5 L999.7 316.8 L999.7 315.2 L999.7 313.6 L999.6 312.0 L999.6 310.3 L999.5 308.7 L999.5 307.1 L999.4 305.5 L999.3 303.8 L999.3 302.2 L999.2 300.6 L999.1 298.9 L999.0 297.3 L998.9 295.7 L998.8 294.1 L998.6 292.4 L998.5 290.8 L998.4 289.2 L998.2 287.6 L998.1 285.9 L997.9 284.3 L997.8 282.7 L997.6 281.1 L997.4 279.4 L997.2 277.8 L997.0 276.2 L996.8 274.5 L996.6 272.9 L996.4 271.3 L996.2 269.7 L995.9 268.0 L995.7 266.4 L995.5 264.8 L995.2 263.2 L994.9 261.5 L994.7 259.9 L994.4 258.3 L994.1 256.6 L993.8 255.0 L993.5 253.4 L993.2 251.8 L992.9 250.1 L992.6 248.5 L992.3 246.9 L992.0 245.3 L991.6 243.6 L991.3 242.0 L990.9 240.4 L990.6 238.8 L990.2 237.1 L989.8 235.5 L989.5 233.9 L989.1 232.2 L988.7 230.6 L988.3 229.0 L987.9 227.4 L987.5 225.7 L987.1 224.1 L986.6 222.5 L986.2 220.9 L985.8 219.2 L985.3 217.6 L984.9 216.0 L984.4 214.3 L984.0 212.7 L983.5 211.1 L983.0 209.5 L982.6 207.8 L982.1 206.2 L981.6 204.6 L981.1 203.0 L980.6 201.3 L980.1 199.7 L979.5 198.1 L979.0 196.4 L978.5 194.8 L978.0 193.2 L977.4 191.6 L976.9 189.9 L976.3 188.3 L975.8 186.7 L975.2 185.1 L974.6 183.4 L974.1 181.8 L973.5 180.2 L972.9 178.6 L972.3 176.9 L971.7 175.3 L971.1 173.7 L970.5 172.0 L969.9 170.4 L969.3 168.8 L968.7 167.2 L968.1 165.5 L967.4 163.9 L966.8 162.3 L966.1 160.7 L965.5 159.0 L964.8 157.4 L964.2 155.8 L963.5 154.1 L962.9 152.5 L962.2 150.9 L961.5 149.3 L960.8 147.6 L960.2 146.0 L959.5 144.4 L958.8 142.8 L958.1 141.1 L957.4 139.5 L956.7 137.9 L956.0 136.2 L955.3 134.6 L954.6 133.0 L953.8 131.4 L953.1 129.7 L952.4 128.1 L951.6 126.5 L950.9 124.9 L950.2 123.2 L949.4 121.6 L948.7 120.0 L947.9 118.4 L947.2 116.7 L946.4 115.1 L945.7 113.5 L944.9 111.8 L944.1 110.2 L943.4 108.6 L942.6 107.0 L941.8 105.3 L941.0 103.7 L940.2 102.1 L939.5 100.5 L938.7 98.8 L937.9 97.2 L937.1 95.6 L936.3 93.9 L935.5 92.3 L934.7 90.7 L933.9 89.1 L933.1 87.4 L932.3 85.8 L931.5 84.2 L930.6 82.6 L929.8 80.9 L929.0 79.3 L928.2 77.7 L927.4 76.1 L926.5 74.4 L925.7 72.8 L924.9 71.2 L924.1 69.5 L923.2 67.9 L922.4 66.3 L921.6 64.7 L920.7 63.0 L919.9 61.4 L919.1 59.8 L918.2 58.2 L917.4 56.5 L916.5 54.9 L915.7 53.3 L914.8 51.6 L914.0 50.0 L913.2 48.4 L912.3 46.8 L911.5 45.1 L910.6 43.5 L909.8 41.9 L908.9 40.3 L908.1 38.6 L907.2 37.0 L906.4 35.4 L905.5 33.7 L904.7 32.1 L903.8 30.5 L903.0 28.9 L902.1 27.2"/>
<path d="M902.1 613.0 L902.5 611.3 L903.0 609.7 L903.4 608.1 L903.8 606.5 L904.2 604.8 L904.7 603.2 L905.1 601.6 L905.5 599.9 L905.9 598.3 L906.4 596.7 L906.8 595.1 L907.2 593.4 L907.6 591.8 L908.0 590.2 L908.5 588.6 L908.9 586.9 L909.3 585.3 L909.7 583.7 L910.2 582.0 L910.6 580.4 L911.0 578.8 L911.4 577.2 L911.8 575.5 L912.2 573.9 L912.7 572.3 L913.1 570.7 L913.5 569.0 L913.9 567.4 L914.3 565.8 L914.7 564.2 L915.1 562.5 L915.6 560.9 L916.0 559.3 L916.4 557.6 L916.8 556.0 L917.2 554.4 L917.6 552.8 L918.0 551.1 L918.4 549.5 L918.8 547.9 L919.2 546.3 L919.6 544.6 L920.0 543.0 L920.4 541.4 L920.8 539.7 L921.2 538.1 L921.6 536.5 L922.0 534.9 L922.3 533.2 L922.7 531.6 L923.1 530.0 L923.5 528.4 L923.9 526.7 L924.3 525.1 L924.6 523.5 L925.0 521.8 L925.4 520.2 L925.8 518.6 L926.1 517.0 L926.5 515.3 L926.9 513.7 L927.2 512.1 L927.6 510.5 L928.0 508.8 L928.3 507.2 L928.7 505.6 L929.0 504.0 L929.4 502.3 L929.7 500.7 L930.1 499.1 L930.4 497.4 L930.8 495.8 L931.1 494.2 L931.5 492.6 L931.8 490.9 L932.2 489.3 L932.5 487.7 L932.8 486.1 L933.1 484.4 L933.5 482.8 L933.8 481.2 L934.1 479.5 L934.4 477.9 L934.8 476.3 L935.1 474.7 L935.4 473.0 L935.7 471.4 L936.0 469.8 L936.3 468.2 L936.6 466.5 L936.9 464.9 L937.2 463.3 L937.5 461.6 L937.8 460.0 L938.1 458.4 L938.4 456.8 L938.7 455.1 L938.9 453.5 L939.2 451.9 L939.5 450.3 L939.8 448.6 L940.0 447.0 L940.3 445.4 L940.6 443.8 L940.8 442.1 L941.1 440.5 L941.3 438.9 L941.6 437.2 L941.8 435.6 L942.1 434.0 L942.3 432.4 L942.6 430.7 L942.8 429.1 L943.0 427.5 L943.3 425.9 L943.5 424.2 L943.7 422.6 L943.9 421.0 L944.2 419.3 L944.4 417.7 L944.6 416.1 L944.8 414.5 L945.0 412.8 L945.2 411.2 L945.4 409.6 L945.6 408.0 L945.8 406.3 L946.0 404.7 L946.2 403.1 L946.3 401.5 L946.5 399.8 L946.7 398.2 L946.9 396.6 L947.0 394.9 L947.2 393.3 L947.4 391.7 L947.5 390.1 L947.7 388.4 L947.8 386.8 L948.0 385.2 L948.1 383.6 L948.3 381.9 L948.4 380.3 L948.5 378.7 L948.7 377.0 L948.8 375.4 L948.9 373.8 L949.0 372.2 L949.1 370.5 L949.2 368.9 L949.4 367.3 L949.5 365.7 L949.6 364.0 L949.7 362.4 L949.8 360.8 L949.8 359.1 L949.9 357.5 L950.0 355.9 L950.1 354.3 L950.2 352.6 L950.2 351.0 L950.3 349.4 L950.4 347.8 L950.4 346.1 L950.5 344.5 L950.5 342.9 L950.6 341.3 L950.6 339.6 L950.7 338.0 L950.7 336.4 L950.8 334.7 L950.8 333.1 L950.8 331.5 L950.8 329.9 L950.9 328.2 L950.9 326.6 L950.9 325.0 L950.9 323.4 L950.9 321.7 L950.9 320.1 L950.9 318.5 L950.9 316.8 L950.9 315.2 L950.9 313.6 L950.9 312.0 L950.8 310.3 L950.8 308.7 L950.8 307.1 L950.8 305.5 L950.7 303.8 L950.7 302.2 L950.6 300.6 L950.6 298.9 L950.5 297.3 L950.5 295.7 L950.4 294.1 L950.4 292.4 L950.3 290.8 L950.2 289.2 L950.2 287.6 L950.1 285.9 L950.0 284.3 L949.9 282.7 L949.8 281.1 L949.8 279.4 L949.7 277.8 L949.6 276.2 L949.5 274.5 L949.4 272.9 L949.2 271.3 L949.1 269.7 L949.0 268.0 L948.9 266.4 L948.8 264.8 L948.7 263.2 L948.5 261.5 L948.4 259.9 L948.3 258.3 L948.1 256.6 L948.0 255.0 L947.8 253.4 L947.7 251.8 L947.5 250.1 L947.4 248.5 L947.2 246.9 L947.0 245.3 L946.9 243.6 L946.7 242.0 L946.5 240.4 L946.3 238.8 L946.2 237.1 L946.0 235.5 L945.8 233.9 L945.6 232.2 L945.4 230.6 L945.2 229.0 L945.0 227.4 L944.8 225.7 L944.6 224.1 L944.4 222.5 L944.2 220.9 L943.9 219.2 L943.7 217.6 L943.5 216.0 L943.3 214.3 L943.0 212.7 L942.8 211.1 L942.6 209.5 L942.3 207.8 L942.1 206.2 L941.8 204.6 L941.6 203.0 L941.3 201.3 L941.1 199.7 L940.8 198.1 L940.6 196.4 L940.3 194.8 L940.0 193.2 L939.8 191.6 L939.5 189.9 L939.2 188.3 L938.9 186.7 L938.7 185.1 L938.4 183.4 L938.1 181.8 L937.8 180.2 L937.5 178.6 L937.2 176.9 L936.9 175.3 L936.6 173.7 L936.3 172.0 L936.0 170.4 L935.7 168.8 L935.4 167.2 L935.1 165.5 L934.8 163.9 L934.4 162.3 L934.1 160.7 L933.8 159.0 L933.5 157.4 L933.1 155.8 L932.8 154.1 L932.5 152.5 L932.2 150.9 L931.8 149.3 L931.5 147.6 L931.1 146.0 L930.8 144.4 L930.4 142.8 L930.1 141.1 L929.7 139.5 L929.4 137.9 L929.0 136.2 L928.7 134.6 L928.3 133.0 L928.0 131.4 L927.6 129.7 L927.2 128.1 L926.9 126.5 L926.5 124.9 L926.1 123.2 L925.8 121.6 L925.4 120.0 L925.0 118.4 L924.6 116.7 L924.3 115.1 L923.9 113.5 L923.5 111.8 L923.1 110.2 L922.7 108.6 L922.3 107.0 L922.0 105.3 L921.6 103.7 L921.2 102.1 L920.8 100.5 L920.4 98.8 L920.0 97.2 L919.6 95.6 L919.2 93.9 L918.8 92.3 L918.4 90.7 L918.0 89.1 L917.6 87.4 L917.2 85.8 L916.8 84.2 L916.4 82.6 L916.0 80.9 L915.6 79.3 L915.1 77.7 L914.7 76.1 L914.3 74.4 L913.9 72.8 L913.5 71.2 L913.1 69.5 L912.7 67.9 L912.2 66.3 L911.8 64.7 L911.4 63.0 L911.0 61.4 L910.6 59.8 L910.2 58.2 L909.7 56.5 L909.3 54.9 L908.9 53.3 L908.5 51.6 L908.0 50.0 L907.6 48.4 L907.2 46.8 L906.8 45.1 L906.4 43.5 L905.9 41.9 L905.5 40.3 L905.1 38.6 L904.7 37.0 L904.2 35.4 L903.8 33.7 L903.4 32.1 L903.0 30.5 L902.5 28.9 L902.1 27.2"/>
<path d="M902.1 613.0 L902.1 611.3 L902.1 609.7 L902.1 608.1 L902.1 606.5 L902.1 604.8 L902.1 603.2 L902.1 601.6 L902.1 599.9 L902.1 598.3 L902.1 596.7 L902.1 595.1 L902.1 593.4 L902.1 591.8 L902.1 590.2 L902.1 588.6 L902.1 586.9 L902.1 585.3 L902.1 583.7 L902.1 582.0 L902.1 580.4 L902.1 578.8 L902.1 577.2 L902.1 575.5 L902.1 573.9 L902.1 572.3 L902.1 570.7 L902.1 569.0 L902.1 567.4 L902.1 565.8 L902.1 564.2 L902.1 562.5 L902.1 560.9 L902.1 559.3 L902.1 557.6 L902.1 556.0 L902.1 554.4 L902.1 552.8 L902.1 551.1 L902.1 549.5 L902.1 547.9 L902.1 546.3 L902.1 544.6 L902.1 543.0 L902.1 541.4 L902.1 539.7 L902.1 538.1 L902.1 536.5 L902.1 534.9 L902.1 533.2 L902.1 531.6 L902.1 530.0 L902.1 528.4 L902.1 526.7 L902.1 525.1 L902.1 523.5 L902.1 521.8 L902.1 520.2 L902.1 518.6 L902.1 517.0 L902.1 515.3 L902.1 513.7 L902.1 512.1 L902.1 510.5 L902.1 508.8 L902.1 507.2 L902.1 505.6 L902.1 504.0 L902.1 502.3 L902.1 500.7 L902.1 499.1 L902.1 497.4 L902.1 495.8 L902.1 494.2 L902.1 492.6 L902.1 490.9 L902.1 489.3 L902.1 487.7 L902.1 486.1 L902.1 484.4 L902.1 482.8 L902.1 481.2 L902.1 479.5 L902.1 477.9 L902.1 476.3 L902.1 474.7 L902.1 473.0 L902.1 471.4 L902.1 469.8 L902.1 468.2 L902.1 466.5 L902.1 464.9 L902.1 463.3 L902.1 461.6 L902.1 460.0 L902.1 458.4 L902.1 456.8 L902.1 455.1 L902.1 453.5 L902.1 451.9 L902.1 450.3 L902.1 448.6 L902.1 447.0 L902.1 445.4 L902.1 443.8 L902.1 442.1 L902.1 440.5 L902.1 438.9 L902.1 437.2 L902.1 435.6 L902.1 434.0 L902.1 432.4 L902.1 430.7 L902.1 429.1 L902.1 427.5 L902.1 425.9 L902.1 424.2 L902.1 422.6 L902.1 421.0 L902.1 419.3 L902.1 417.7 L902.1 416.1 L902.1 414.5 L902.1 412.8 L902.1 411.2 L902.1 409.6 L902.1 408.0 L902.1 406.3 L902.1 404.7 L902.1 403.1 L902.1 401.5 L902.1 399.8 L902.1 398.2 L902.1 396.6 L902.1 394.9 L902.1 393.3 L902.1 391.7 L902.1 390.1 L902.1 388.4 L902.1 386.8 L902.1 385.2 L902.1 383.6 L902.1 381.9 L902.1 380.3 L902.1 378.7 L902.1 377.0 L902.1 375.4 L902.1 373.8 L902.1 372.2 L902.1 370.5 L902.1 368.9 L902.1 367.3 L902.1 365.7 L902.1 364.0 L902.1 362.4 L902.1 360.8 L902.1 359.1 L902.1 357.5 L902.1 355.9 L902.1 354.3 L902.1 352.6 L902.1 351.0 L902.1 349.4 L902.1 347.8 L902.1 346.1 L902.1 344.5 L902.1 342.9 L902.1 341.3 L902.1 339.6 L902.1 338.0 L902.1 336.4 L902.1 334.7 L902.1 333.1 L902.1 331.5 L902.1 329.9 L902.1 328.2 L902.1 326.6 L902.1 325.0 L902.1 323.4 L902.1 321.7 L902.1 320.1 L902.1 318.5 L902.1 316.8 L902.1 315.2 L902.1 313.6 L902.1 312.0 L902.1 310.3 L902.1 308.7 L902.1 307.1 L902.1 305.5 L902.1 303.8 L902.1 302.2 L902.1 300.6 L902.1 298.9 L902.1 297.3 L902.1 295.7 L902.1 294.1 L902.1 292.4 L902.1 290.8 L902.1 289.2 L902.1 287.6 L902.1 285.9 L902.1 284.3 L902.1 282.7 L902.1 281.1 L902.1 279.4 L902.1 277.8 L902.1 276.2 L902.1 274.5 L902.1 272.9 L902.1 271.3 L902.1 269.7 L902.1 268.0 L902.1 266.4 L902.1 264.8 L902.1 263.2 L902.1 261.5 L902.1 259.9 L902.1 258.3 L902.1 256.6 L902.1 255.0 L902.1 253.4 L902.1 251.8 L902.1 250.1 L902.1 248.5 L902.1 246.9 L902.1 245.3 L902.1 243.6 L902.1 242.0 L902.1 240.4 L902.1 238.8 L902.1 237.1 L902.1 235.5 L902.1 233.9 L902.1 232.2 L902.1 230.6 L902.1 229.0 L902.1 227.4 L902.1 225.7 L902.1 224.1 L902.1 222.5 L902.1 220.9 L902.1 219.2 L902.1 217.6 L902.1 216.0 L902.1 214.3 L902.1 212.7 L902.1 211.1 L902.1 209.5 L902.1 207.8 L902.1 206.2 L902.1 204.6 L902.1 203.0 L902.1 201.3 L902.1 199.7 L902.1 198.1 L902.1 196.4 L902.1 194.8 L902.1 193.2 L902.1 191.6 L902.1 189.9 L902.1 188.3 L902.1 186.7 L902.1 185.1 L902.1 183.4 L902.1 181.8 L902.1 180.2 L902.1 178.6 L902.1 176.9 L902.1 175.3 L902.1 173.7 L902.1 172.0 L902.1 170.4 L902.1 168.8 L902.1 167.2 L902.1 165.5 L902.1 163.9 L902.1 162.3 L902.1 160.7 L902.1 159.0 L902.1 157.4 L902.1 155.8 L902.1 154.1 L902.1 152.5 L902.1 150.9 L902.1 149.3 L902.1 147.6 L902.1 146.0 L902.1 144.4 L902.1 142.8 L902.1 141.1 L902.1 139.5 L902.1 137.9 L902.1 136.2 L902.1 134.6 L902.1 133.0 L902.1 131.4 L902.1 129.7 L902.1 128.1 L902.1 126.5 L902.1 124.9 L902.1 123.2 L902.1 121.6 L902.1 120.0 L902.1 118.4 L902.1 116.7 L902.1 115.1 L902.1 113.5 L902.1 111.8 L902.1 110.2 L902.1 108.6 L902.1 107.0 L902.1 105.3 L902.1 103.7 L902.1 102.1 L902.1 100.5 L902.1 98.8 L902.1 97.2 L902.1 95.6 L902.1 93.9 L902.1 92.3 L902.1 90.7 L902.1 89.1 L902.1 87.4 L902.1 85.8 L902.1 84.2 L902.1 82.6 L902.1 80.9 L902.1 79.3 L902.1 77.7 L902.1 76.1 L902.1 74.4 L902.1 72.8 L902.1 71.2 L902.1 69.5 L902.1 67.9 L902.1 66.3 L902.1 64.7 L902.1 63.0 L902.1 61.4 L902.1 59.8 L902.1 58.2 L902.1 56.5 L902.1 54.9 L902.1 53.3 L902.1 51.6 L902.1 50.0 L902.1 48.4 L902.1 46.8 L902.1 45.1 L902.1 43.5 L902.1 41.9 L902.1 40.3 L902.1 38.6 L902.1 37.0 L902.1 35.4 L902.1 33.7 L902.1 32.1 L902.1 30.5 L902.1 28.9 L902.1 27.2"/>
<path d="M902.1 613.0 L901.7 611.3 L901.2 609.7 L900.8 608.1 L900.4 606.5 L900.0 604.8 L899.5 603.2 L899.1 601.6 L898.7 599.9 L898.3 598.3 L897.8 596.7 L897.4 595.1 L897.0 593.4 L896.6 591.8 L896.2 590.2 L895.7 588.6 L895.3 586.9 L894.9 585.3 L894.5 583.7 L894.0 582.0 L893.6 580.4 L893.2 578.8 L892.8 577.2 L892.4 575.5 L892.0 573.9 L891.5 572.3 L891.1 570.7 L890.7 569.0 L890.3 567.4 L889.9 565.8 L889.5 564.2 L889.1 562.5 L888.6 560.9 L888.2 559.3 L887.8 557.6 L887.4 556.0 L887.0 554.4 L886.6 552.8 L886.2 551.1 L885.8 549.5 L885.4 547.9 L885.0 546.3 L884.6 544.6 L884.2 543.0 L883.8 541.4 L883.4 539.7 L883.0 538.1 L882.6 536.5 L882.2 534.9 L881.9 533.2 L881.5 531.6 L881.1 530.0 L880.7 528.4 L880.3 526.7 L879.9 525.1 L879.6 523.5 L879.2 521.8 L878.8 520.2 L878.4 518.6 L878.1 517.0 L877.7 515.3 L877.3 513.7 L877.0 512.1 L876.6 510.5 L876.2 508.8 L875.9 507.2 L875.5 505.6 L875.2 504.0 L874.8 502.3 L874.5 500.7 L874.1 499.1 L873.8 497.4 L873.4 495.8 L873.1 494.2 L872.7 492.6 L872.4 490.9 L872.0 489.3 L871.7 487.7 L871.4 486.1 L871.1 484.4 L870.7 482.8 L870.4 481.2 L870.1 479.5 L869.8 477.9 L869.4 476.3 L869.1 474.7 L868.8 473.0 L868.5 471.4 L868.2 469.8 L867.9 468.2 L867.6 466.5 L867.3 464.9 L867.0 463.3 L866.7 461.6 L866.4 460.0 L866.1 458.4 L865.8 456.8 L865.5 455.1 L865.3 453.5 L865.0 451.9 L864.7 450.3 L864.4 448.6 L864.2 447.0 L863.9 445.4 L863.6 443.8 L863.4 442.1 L863.1 440.5 L862.9 438.9 L862.6 437.2 L862.4 435.6 L862.1 434.0 L861.9 432.4 L861.6 430.7 L861.4 429.1 L861.2 427.5 L860.9 425.9 L860.7 424.2 L860.5 422.6 L860.3 421.0 L860.0 419.3 L859.8 417.7 L859.6 416.1 L859.4 414.5 L859.2 412.8 L859.0 411.2 L858.8 409.6 L858.6 408.0 L858.4 406.3 L858.2 404.7 L858.0 403.1 L857.9 401.5 L857.7 399.8 L857.5 398.2 L857.3 396.6 L857.2 394.9 L857.0 393.3 L856.8 391.7 L856.7 390.1 L856.5 388.4 L856.4 386.8 L856.2 385.2 L856.1 383.6 L855.9 381.9 L855.8 380.3 L855.7 378.7 L855.5 377.0 L855.4 375.4 L855.3 373.8 L855.2 372.2 L855.1 370.5 L855.0 368.9 L854.8 367.3 L854.7 365.7 L854.6 364.0 L854.5 362.4 L854.4 360.8 L854.4 359.1 L854.3 357.5 L854.2 355.9 L854.1 354.3 L854.0 352.6 L854.0 351.0 L853.9 349.4 L853.8 347.8 L853.8 346.1 L853.7 344.5 L853.7 342.9 L853.6 341.3 L853.6 339.6 L853.5 338.0 L853.5 336.4 L853.4 334.7 L853.4 333.1 L853.4 331.5 L853.4 329.9 L853.3 328.2 L853.3 326.6 L853.3 325.0 L853.3 323.4 L853.3 321.7 L853.3 320.1 L853.3 318.5 L853.3 316.8 L853.3 315.2 L853.3 313.6 L853.3 312.0 L853.4 310.3 L853.4 308.7 L853.4 307.1 L853.4 305.5 L853.5 303.8 L853.5 302.2 L853.6 300.6 L853.6 298.9 L853.7 297.3 L853.7 295.7 L853.8 294.1 L853.8 292.4 L853.9 290.8 L854.0 289.2 L854.0 287.6 L854.1 285.9 L854.2 284.3 L854.3 282.7 L854.4 281.1 L854.4 279.4 L854.5 277.8 L854.6 276.2 L854.7 274.5 L854.8 272.9 L855.0 271.3 L855.1 269.7 L855.2 268.0 L855.3 266.4 L855.4 264.8 L855.5 263.2 L855.7 261.5 L855.8 259.9 L855.9 258.3 L856.1 256.6 L856.2 255.0 L856.4 253.4 L856.5 251.8 L856.7 250.1 L856.8 248.5 L857.0 246.9 L857.2 245.3 L857.3 243.6 L857.5 242.0 L857.7 240.4 L857.9 238.8 L858.0 237.1 L858.2 235.5 L858.4 233.9 L858.6 232.2 L858.8 230.6 L859.0 229.0 L859.2 227.4 L859.4 225.7 L859.6 224.1 L859.8 222.5 L860.0 220.9 L860.3 219.2 L860.5 217.6 L860.7 216.0 L860.9 214.3 L861.2 212.7 L861.4 211.1 L861.6 209.5 L861.9 207.8 L862.1 206.2 L862.4 204.6 L862.6 203.0 L862.9 201.3 L863.1 199.7 L863.4 198.1 L863.6 196.4 L863.9 194.8 L864.2 193.2 L864.4 191.6 L864.7 189.9 L865.0 188.3 L865.3 186.7 L865.5 185.1 L865.8 183.4 L866.1 181.8 L866.4 180.2 L866.7 178.6 L867.0 176.9 L867.3 175.3 L867.6 173.7 L867.9 172.0 L868.2 170.4 L868.5 168.8 L868.8 167.2 L869.1 165.5 L869.4 163.9 L869.8 162.3 L870.1 160.7 L870.4 159.0 L870.7 157.4 L871.1 155.8 L871.4 154.1 L871.7 152.5 L872.0 150.9 L872.4 149.3 L872.7 147.6 L873.1 146.0 L873.4 144.4 L873.8 142.8 L874.1 141.1 L874.5 139.5 L874.8 137.9 L875.2 136.2 L875.5 134.6 L875.9 133.0 L876.2 131.4 L876.6 129.7 L877.0 128.1 L877.3 126.5 L877.7 124.9 L878.1 123.2 L878.4 121.6 L878.8 120.0 L879.2 118.4 L879.6 116.7 L879.9 115.1 L880.3 113.5 L880.7 111.8 L881.1 110.2 L881.5 108.6 L881.9 107.0 L882.2 105.3 L882.6 103.7 L883.0 102.1 L883.4 100.5 L883.8 98.8 L884.2 97.2 L884.6 95.6 L885.0 93.9 L885.4 92.3 L885.8 90.7 L886.2 89.1 L886.6 87.4 L887.0 85.8 L887.4 84.2 L887.8 82.6 L888.2 80.9 L888.6 79.3 L889.1 77.7 L889.5 76.1 L889.9 74.4 L890.3 72.8 L890.7 71.2 L891.1 69.5 L891.5 67.9 L892.0 66.3 L892.4 64.7 L892.8 63.0 L893.2 61.4 L893.6 59.8 L894.0 58.2 L894.5 56.5 L894.9 54.9 L895.3 53.3 L895.7 51.6 L896.2 50.0 L896.6 48.4 L897.0 46.8 L897.4 45.1 L897.8 43.5 L898.3 41.9 L898.7 40.3 L899.1 38.6 L899.5 37.0 L900.0 35.4 L900.4 33.7 L900.8 32.1 L901.2 30.5 L901.7 28.9 L902.1 27.2"/>
<path d="M902.1 613.0 L901.2 611.3 L900.4 609.7 L899.5 608.1 L898.7 606.5 L897.8 604.8 L897.0 603.2 L896.1 601.6 L895.3 599.9 L894.4 598.3 L893.6 596.7 L892.7 595.1 L891.9 593.4 L891.0 591.8 L890.2 590.2 L889.4 588.6 L888.5 586.9 L887.7 585.3 L886.8 583.7 L886.0 582.0 L885.1 580.4 L884.3 578.8 L883.5 577.2 L882.6 575.5 L881.8 573.9 L881.0 572.3 L880.1 570.7 L879.3 569.0 L878.5 567.4 L877.7 565.8 L876.8 564.2 L876.0 562.5 L875.2 560.9 L874.4 559.3 L873.6 557.6 L872.7 556.0 L871.9 554.4 L871.1 552.8 L870.3 551.1 L869.5 549.5 L868.7 547.9 L867.9 546.3 L867.1 544.6 L866.3 543.0 L865.5 541.4 L864.7 539.7 L864.0 538.1 L863.2 536.5 L862.4 534.9 L861.6 533.2 L860.8 531.6 L860.1 530.0 L859.3 528.4 L858.5 526.7 L857.8 525.1 L857.0 523.5 L856.3 521.8 L855.5 520.2 L854.8 518.6 L854.0 517.0 L853.3 515.3 L852.6 513.7 L851.8 512.1 L851.1 510.5 L850.4 508.8 L849.6 507.2 L848.9 505.6 L848.2 504.0 L847.5 502.3 L846.8 500.7 L846.1 499.1 L845.4 497.4 L844.7 495.8 L844.0 494.2 L843.4 492.6 L842.7 490.9 L842.0 489.3 L841.3 487.7 L840.7 486.1 L840.0 484.4 L839.4 482.8 L838.7 481.2 L838.1 479.5 L837.4 477.9 L836.8 476.3 L836.1 474.7 L835.5 473.0 L834.9 471.4 L834.3 469.8 L833.7 468.2 L833.1 466.5 L832.5 464.9 L831.9 463.3 L831.3 461.6 L830.7 460.0 L830.1 458.4 L829.6 456.8 L829.0 455.1 L828.4 453.5 L827.9 451.9 L827.3 450.3 L826.8 448.6 L826.2 447.0 L825.7 445.4 L825.2 443.8 L824.7 442.1 L824.1 440.5 L823.6 438.9 L823.1 437.2 L822.6 435.6 L822.1 434.0 L821.6 432.4 L821.2 430.7 L820.7 429.1 L820.2 427.5 L819.8 425.9 L819.3 424.2 L818.9 422.6 L818.4 421.0 L818.0 419.3 L817.6 417.7 L817.1 416.1 L816.7 414.5 L816.3 412.8 L815.9 411.2 L815.5 409.6 L815.1 408.0 L814.7 406.3 L814.4 404.7 L814.0 403.1 L813.6 401.5 L813.3 399.8 L812.9 398.2 L812.6 396.6 L812.2 394.9 L811.9 393.3 L811.6 391.7 L811.3 390.1 L811.0 388.4 L810.7 386.8 L810.4 385.2 L810.1 383.6 L809.8 381.9 L809.5 380.3 L809.3 378.7 L809.0 377.0 L808.7 375.4 L808.5 373.8 L808.3 372.2 L808.0 370.5 L807.8 368.9 L807.6 367.3 L807.4 365.7 L807.2 364.0 L807.0 362.4 L806.8 360.8 L806.6 359.1 L806.4 357.5 L806.3 355.9 L806.1 354.3 L806.0 352.6 L805.8 351.0 L805.7 349.4 L805.6 347.8 L805.4 346.1 L805.3 344.5 L805.2 342.9 L805.1 341.3 L805.0 339.6 L804.9 338.0 L804.9 336.4 L804.8 334.7 L804.7 333.1 L804.7 331.5 L804.6 329.9 L804.6 328.2 L804.5 326.6 L804.5 325.0 L804.5 323.4 L804.5 321.7 L804.5 320.1 L804.5 318.5 L804.5 316.8 L804.5 315.2 L804.5 313.6 L804.6 312.0 L804.6 310.3 L804.7 308.7 L804.7 307.1 L804.8 305.5 L804.9 303.8 L804.9 302.2 L805.0 300.6 L805.1 298.9 L805.2 297.3 L805.3 295.7 L805.4 294.1 L805.6 292.4 L805.7 290.8 L805.8 289.2 L806.0 287.6 L806.1 285.9 L806.3 284.3 L806.4 282.7 L806.6 281.1 L806.8 279.4 L807.0 277.8 L807.2 276.2 L807.4 274.5 L807.6 272.9 L807.8 271.3 L808.0 269.7 L808.3 268.0 L808.5 266.4 L808.7 264.8 L809.0 263.2 L809.3 261.5 L809.5 259.9 L809.8 258.3 L810.1 256.6 L810.4 255.0 L810.7 253.4 L811.0 251.8 L811.3 250.1 L811.6 248.5 L811.9 246.9 L812.2 245.3 L812.6 243.6 L812.9 242.0 L813.3 240.4 L813.6 238.8 L814.0 237.1 L814.4 235.5 L814.7 233.9 L815.1 232.2 L815.5 230.6 L815.9 229.0 L816.3 227.4 L816.7 225.7 L817.1 224.1 L817.6 222.5 L818.0 220.9 L818.4 219.2 L818.9 217.6 L819.3 216.0 L819.8 214.3 L820.2 212.7 L820.7 211.1 L821.2 209.5 L821.6 207.8 L822.1 206.2 L822.6 204.6 L823.1 203.0 L823.6 201.3 L824.1 199.7 L824.7 198.1 L825.2 196.4 L825.7 194.8 L826.2 193.2 L826.8 191.6 L827.3 189.9 L827.9 188.3 L828.4 186.7 L829.0 185.1 L829.6 183.4 L830.1 181.8 L830.7 180.2 L831.3 178.6 L831.9 176.9 L832.5 175.3 L833.1 173.7 L833.7 172.0 L834.3 170.4 L834.9 168.8 L835.5 167.2 L836.1 165.5 L836.8 163.9 L837.4 162.3 L838.1 160.7 L838.7 159.0 L839.4 157.4 L840.0 155.8 L840.7 154.1 L841.3 152.5 L842.0 150.9 L842.7 149.3 L843.4 147.6 L844.0 146.0 L844.7 144.4 L845.4 142.8 L846.1 141.1 L846.8 139.5 L847.5 137.9 L848.2 136.2 L848.9 134.6 L849.6 133.0 L850.4 131.4 L851.1 129.7 L851.8 128.1 L852.6 126.5 L853.3 124.9 L854.0 123.2 L854.8 121.6 L855.5 120.0 L856.3 118.4 L857.0 116.7 L857.8 115.1 L858.5 113.5 L859.3 111.8 L860.1 110.2 L860.8 108.6 L861.6 107.0 L862.4 105.3 L863.2 103.7 L864.0 102.1 L864.7 100.5 L865.5 98.8 L866.3 97.2 L867.1 95.6 L867.9 93.9 L868.7 92.3 L869.5 90.7 L870.3 89.1 L871.1 87.4 L871.9 85.8 L872.7 84.2 L873.6 82.6 L874.4 80.9 L875.2 79.3 L876.0 77.7 L876.8 76.1 L877.7 74.4 L878.5 72.8 L879.3 71.2 L880.1 69.5 L881.0 67.9 L881.8 66.3 L882.6 64.7 L883.5 63.0 L884.3 61.4 L885.1 59.8 L886.0 58.2 L886.8 56.5 L887.7 54.9 L888.5 53.3 L889.4 51.6 L890.2 50.0 L891.0 48.4 L891.9 46.8 L892.7 45.1 L893.6 43.5 L894.4 41.9 L895.3 40.3 L896.1 38.6 L897.0 37.0 L897.8 35.4 L898.7 33.7 L899.5 32.1 L900.4 30.5 L901.2 28.9 L902.1 27.2"/>
<path d="M902.1 613.0 L900.8 611.3 L899.5 609.7 L898.3 608.1 L897.0 606.5 L895.7 604.8 L894.4 603.2 L893.2 601.6 L891.9 599.9 L890.6 598.3 L889.3 596.7 L888.1 595.1 L886.8 593.4 L885.5 591.8 L884.3 590.2 L883.0 588.6 L881.7 586.9 L880.5 585.3 L879.2 583.7 L877.9 582.0 L876.7 580.4 L875.4 578.8 L874.2 577.2 L872.9 575.5 L871.7 573.9 L870.4 572.3 L869.2 570.7 L867.9 569.0 L866.7 567.4 L865.4 565.8 L864.2 564.2 L863.0 562.5 L861.7 560.9 L860.5 559.3 L859.3 557.6 L858.1 556.0 L856.9 554.4 L855.6 552.8 L854.4 551.1 L853.2 549.5 L852.0 547.9 L850.8 546.3 L849.6 544.6 L848.4 543.0 L847.2 541.4 L846.1 539.7 L844.9 538.1 L843.7 536.5 L842.5 534.9 L841.4 533.2 L840.2 531.6 L839.1 530.0 L837.9 528.4 L836.8 526.7 L835.6 525.1 L834.5 523.5 L833.4 521.8 L832.2 520.2 L831.1 518.6 L830.0 517.0 L828.9 515.3 L827.8 513.7 L826.7 512.1 L825.6 510.5 L824.5 508.8 L823.4 507.2 L822.3 505.6 L821.3 504.0 L820.2 502.3 L819.2 500.7 L818.1 499.1 L817.1 497.4 L816.0 495.8 L815.0 494.2 L814.0 492.6 L813.0 490.9 L811.9 489.3 L810.9 487.7 L809.9 486.1 L809.0 484.4 L808.0 482.8 L807.0 481.2 L806.0 479.5 L805.1 477.9 L804.1 476.3 L803.2 474.7 L802.2 473.0 L801.3 471.4 L800.4 469.8 L799.5 468.2 L798.6 466.5 L797.7 464.9 L796.8 463.3 L795.9 461.6 L795.0 460.0 L794.1 458.4 L793.3 456.8 L792.4 455.1 L791.6 453.5 L790.8 451.9 L789.9 450.3 L789.1 448.6 L788.3 447.0 L787.5 445.4 L786.7 443.8 L785.9 442.1 L785.2 440.5 L784.4 438.9 L783.6 437.2 L782.9 435.6 L782.2 434.0 L781.4 432.4 L780.7 430.7 L780.0 429.1 L779.3 427.5 L778.6 425.9 L777.9 424.2 L777.2 422.6 L776.6 421.0 L775.9 419.3 L775.3 417.7 L774.7 416.1 L774.0 414.5 L773.4 412.8 L772.8 411.2 L772.2 409.6 L771.6 408.0 L771.1 406.3 L770.5 404.7 L769.9 403.1 L769.4 401.5 L768.9 399.8 L768.3 398.2 L767.8 396.6 L767.3 394.9 L766.8 393.3 L766.3 391.7 L765.9 390.1 L765.4 388.4 L764.9 386.8 L764.5 385.2 L764.1 383.6 L763.6 381.9 L763.2 380.3 L762.8 378.7 L762.4 377.0 L762.1 375.4 L761.7 373.8 L761.3 372.2 L761.0 370.5 L760.7 368.9 L760.3 367.3 L760.0 365.7 L759.7 364.0 L759.4 362.4 L759.1 360.8 L758.9 359.1 L758.6 357.5 L758.4 355.9 L758.1 354.3 L757.9 352.6 L757.7 351.0 L757.5 349.4 L757.3 347.8 L757.1 346.1 L756.9 344.5 L756.8 342.9 L756.6 341.3 L756.5 339.6 L756.3 338.0 L756.2 336.4 L756.1 334.7 L756.0 333.1 L755.9 331.5 L755.9 329.9 L755.8 328.2 L755.8 326.6 L755.7 325.0 L755.7 323.4 L755.7 321.7 L755.7 320.1 L755.7 318.5 L755.7 316.8 L755.7 315.2 L755.8 313.6 L755.8 312.0 L755.9 310.3 L755.9 308.7 L756.0 307.1 L756.1 305.5 L756.2 303.8 L756.3 302.2 L756.5 300.6 L756.6 298.9 L756.8 297.3 L756.9 295.7 L757.1 294.1 L757.3 292.4 L757.5 290.8 L757.7 289.2 L757.9 287.6 L758.1 285.9 L758.4 284.3 L758.6 282.7 L758.9 281.1 L759.1 279.4 L759.4 277.8 L759.7 276.2 L760.0 274.5 L760.3 272.9 L760.7 271.3 L761.0 269.7 L761.3 268.0 L761.7 266.4 L762.1 264.8 L762.4 263.2 L762.8 261.5 L763.2 259.9 L763.6 258.3 L764.1 256.6 L764.5 255.0 L764.9 253.4 L765.4 251.8 L765.9 250.1 L766.3 248.5 L766.8 246.9 L767.3 245.3 L767.8 243.6 L768.3 242.0 L768.9 240.4 L769.4 238.8 L769.9 237.1 L770.5 235.5 L771.1 233.9 L771.6 232.2 L772.2 230.6 L772.8 229.0 L773.4 227.4 L774.0 225.7 L774.7 224.1 L775.3 222.5 L775.9 220.9 L776.6 219.2 L777.2 217.6 L777.9 216.0 L778.6 214.3 L779.3 212.7 L780.0 211.1 L780.7 209.5 L781.4 207.8 L782.2 206.2 L782.9 204.6 L783.6 203.0 L784.4 201.3 L785.2 199.7 L785.9 198.1 L786.7 196.4 L787.5 194.8 L788.3 193.2 L789.1 191.6 L789.9 189.9 L790.8 188.3 L791.6 186.7 L792.4 185.1 L793.3 183.4 L794.1 181.8 L795.0 180.2 L795.9 178.6 L796.8 176.9 L797.7 175.3 L798.6 173.7 L799.5 172.0 L800.4 170.4 L801.3 168.8 L802.2 167.2 L803.2 165.5 L804.1 163.9 L805.1 162.3 L806.0 160.7 L807.0 159.0 L808.0 157.4 L809.0 155.8 L809.9 154.1 L810.9 152.5 L811.9 150.9 L813.0 149.3 L814.0 147.6 L815.0 146.0 L816.0 144.4 L817.1 142.8 L818.1 141.1 L819.2 139.5 L820.2 137.9 L821.3 136.2 L822.3 134.6 L823.4 133.0 L824.5 131.4 L825.6 129.7 L826.7 128.1 L827.8 126.5 L828.9 124.9 L830.0 123.2 L831.1 121.6 L832.2 120.0 L833.4 118.4 L834.5 116.7 L835.6 115.1 L836.8 113.5 L837.9 111.8 L839.1 110.2 L840.2 108.6 L841.4 107.0 L842.5 105.3 L843.7 103.7 L844.9 102.1 L846.1 100.5 L847.2 98.8 L848.4 97.2 L849.6 95.6 L850.8 93.9 L852.0 92.3 L853.2 90.7 L854.4 89.1 L855.6 87.4 L856.9 85.8 L858.1 84.2 L859.3 82.6 L860.5 80.9 L861.7 79.3 L863.0 77.7 L864.2 76.1 L865.4 74.4 L866.7 72.8 L867.9 71.2 L869.2 69.5 L870.4 67.9 L871.7 66.3 L872.9 64.7 L874.2 63.0 L875.4 61.4 L876.7 59.8 L877.9 58.2 L879.2 56.5 L880.5 54.9 L881.7 53.3 L883.0 51.6 L884.3 50.0 L885.5 48.4 L886.8 46.8 L888.1 45.1 L889.3 43.5 L890.6 41.9 L891.9 40.3 L893.2 38.6 L894.4 37.0 L895.7 35.4 L897.0 33.7 L898.3 32.1 L899.5 30.5 L900.8 28.9 L902.1 27.2"/>
<path d="M902.1 613.0 L900.4 611.3 L898.7 609.7 L897.0 608.1 L895.3 606.5 L893.6 604.8 L891.9 603.2 L890.2 601.6 L888.5 599.9 L886.8 598.3 L885.1 596.7 L883.4 595.1 L881.7 593.4 L880.0 591.8 L878.3 590.2 L876.6 588.6 L874.9 586.9 L873.2 585.3 L871.6 583.7 L869.9 582.0 L868.2 580.4 L866.5 578.8 L864.8 577.2 L863.2 575.5 L861.5 573.9 L859.8 572.3 L858.2 570.7 L856.5 569.0 L854.9 567.4 L853.2 565.8 L851.6 564.2 L849.9 562.5 L848.3 560.9 L846.6 559.3 L845.0 557.6 L843.4 556.0 L841.8 554.4 L840.1 552.8 L838.5 551.1 L836.9 549.5 L835.3 547.9 L833.7 546.3 L832.1 544.6 L830.5 543.0 L829.0 541.4 L827.4 539.7 L825.8 538.1 L824.2 536.5 L822.7 534.9 L821.1 533.2 L819.6 531.6 L818.0 530.0 L816.5 528.4 L815.0 526.7 L813.5 525.1 L811.9 523.5 L810.4 521.8 L808.9 520.2 L807.4 518.6 L806.0 517.0 L804.5 515.3 L803.0 513.7 L801.5 512.1 L800.1 510.5 L798.6 508.8 L797.2 507.2 L795.8 505.6 L794.3 504.0 L792.9 502.3 L791.5 500.7 L790.1 499.1 L788.7 497.4 L787.3 495.8 L786.0 494.2 L784.6 492.6 L783.2 490.9 L781.9 489.3 L780.6 487.7 L779.2 486.1 L777.9 484.4 L776.6 482.8 L775.3 481.2 L774.0 479.5 L772.7 477.9 L771.5 476.3 L770.2 474.7 L768.9 473.0 L767.7 471.4 L766.5 469.8 L765.3 468.2 L764.0 466.5 L762.8 464.9 L761.7 463.3 L760.5 461.6 L759.3 460.0 L758.2 458.4 L757.0 456.8 L755.9 455.1 L754.8 453.5 L753.6 451.9 L752.5 450.3 L751.4 448.6 L750.4 447.0 L749.3 445.4 L748.2 443.8 L747.2 442.1 L746.2 440.5 L745.2 438.9 L744.1 437.2 L743.2 435.6 L742.2 434.0 L741.2 432.4 L740.2 430.7 L739.3 429.1 L738.4 427.5 L737.4 425.9 L736.5 424.2 L735.6 422.6 L734.7 421.0 L733.9 419.3 L733.0 417.7 L732.2 416.1 L731.3 414.5 L730.5 412.8 L729.7 411.2 L728.9 409.6 L728.1 408.0 L727.4 406.3 L726.6 404.7 L725.9 403.1 L725.2 401.5 L724.4 399.8 L723.7 398.2 L723.1 396.6 L722.4 394.9 L721.7 393.3 L721.1 391.7 L720.4 390.1 L719.8 388.4 L719.2 386.8 L718.6 385.2 L718.1 383.6 L717.5 381.9 L716.9 380.3 L716.4 378.7 L715.9 377.0 L715.4 375.4 L714.9 373.8 L714.4 372.2 L714.0 370.5 L713.5 368.9 L713.1 367.3 L712.7 365.7 L712.3 364.0 L711.9 362.4 L711.5 360.8 L711.1 359.1 L710.8 357.5 L710.4 355.9 L710.1 354.3 L709.8 352.6 L709.5 351.0 L709.3 349.4 L709.0 347.8 L708.8 346.1 L708.5 344.5 L708.3 342.9 L708.1 341.3 L707.9 339.6 L707.8 338.0 L707.6 336.4 L707.5 334.7 L707.3 333.1 L707.2 331.5 L707.1 329.9 L707.0 328.2 L707.0 326.6 L706.9 325.0 L706.9 323.4 L706.9 321.7 L706.9 320.1 L706.9 318.5 L706.9 316.8 L706.9 315.2 L707.0 313.6 L707.0 312.0 L707.1 310.3 L707.2 308.7 L707.3 307.1 L707.5 305.5 L707.6 303.8 L707.8 302.2 L707.9 300.6 L708.1 298.9 L708.3 297.3 L708.5 295.7 L708.8 294.1 L709.0 292.4 L709.3 290.8 L709.5 289.2 L709.8 287.6 L710.1 285.9 L710.4 284.3 L710.8 282.7 L711.1 281.1 L711.5 279.4 L711.9 277.8 L712.3 276.2 L712.7 274.5 L713.1 272.9 L713.5 271.3 L714.0 269.7 L714.4 268.0 L714.9 266.4 L715.4 264.8 L715.9 263.2 L716.4 261.5 L716.9 259.9 L717.5 258.3 L718.1 256.6 L718.6 255.0 L719.2 253.4 L719.8 251.8 L720.4 250.1 L721.1 248.5 L721.7 246.9 L722.4 245.3 L723.1 243.6 L723.7 242.0 L724.4 240.4 L725.2 238.8 L725.9 237.1 L726.6 235.5 L727.4 233.9 L728.1 232.2 L728.9 230.6 L729.7 229.0 L730.5 227.4 L731.3 225.7 L732.2 224.1 L733.0 222.5 L733.9 220.9 L734.7 219.2 L735.6 217.6 L736.5 216.0 L737.4 214.3 L738.4 212.7 L739.3 211.1 L740.2 209.5 L741.2 207.8 L742.2 206.2 L743.2 204.6 L744.1 203.0 L745.2 201.3 L746.2 199.7 L747.2 198.1 L748.2 196.4 L749.3 194.8 L750.4 193.2 L751.4 191.6 L752.5 189.9 L753.6 188.3 L754.8 186.7 L755.9 185.1 L757.0 183.4 L758.2 181.8 L759.3 180.2 L760.5 178.6 L761.7 176.9 L762.8 175.3 L764.0 173.7 L765.3 172.0 L766.5 170.4 L767.7 168.8 L768.9 167.2 L770.2 165.5 L771.5 163.9 L772.7 162.3 L774.0 160.7 L775.3 159.0 L776.6 157.4 L777.9 155.8 L779.2 154.1 L780.6 152.5 L781.9 150.9 L783.2 149.3 L784.6 147.6 L786.0 146.0 L787.3 144.4 L788.7 142.8 L790.1 141.1 L791.5 139.5 L792.9 137.9 L794.3 136.2 L795.8 134.6 L797.2 133.0 L798.6 131.4 L800.1 129.7 L801.5 128.1 L803.0 126.5 L804.5 124.9 L806.0 123.2 L807.4 121.6 L808.9 120.0 L810.4 118.4 L811.9 116.7 L813.5 115.1 L815.0 113.5 L816.5 111.8 L818.0 110.2 L819.6 108.6 L821.1 107.0 L822.7 105.3 L824.2 103.7 L825.8 102.1 L827.4 100.5 L829.0 98.8 L830.5 97.2 L832.1 95.6 L833.7 93.9 L835.3 92.3 L836.9 90.7 L838.5 89.1 L840.1 87.4 L841.8 85.8 L843.4 84.2 L845.0 82.6 L846.6 80.9 L848.3 79.3 L849.9 77.7 L851.6 76.1 L853.2 74.4 L854.9 72.8 L856.5 71.2 L858.2 69.5 L859.8 67.9 L861.5 66.3 L863.2 64.7 L864.8 63.0 L866.5 61.4 L868.2 59.8 L869.9 58.2 L871.6 56.5 L873.2 54.9 L874.9 53.3 L876.6 51.6 L878.3 50.0 L880.0 48.4 L881.7 46.8 L883.4 45.1 L885.1 43.5 L886.8 41.9 L888.5 40.3 L890.2 38.6 L891.9 37.0 L893.6 35.4 L895.3 33.7 L897.0 32.1 L898.7 30.5 L900.4 28.9 L902.1 27.2"/>
<path d="M902.1 613.0 L900.0 611.3 L897.8 609.7 L895.7 608.1 L893.6 606.5 L891.5 604.8 L889.3 603.2 L887.2 601.6 L885.1 599.9 L883.0 598.3 L880.8 596.7 L878.7 595.1 L876.6 593.4 L874.5 591.8 L872.4 590.2 L870.2 588.6 L868.1 586.9 L866.0 585.3 L863.9 583.7 L861.8 582.0 L859.7 580.4 L857.6 578.8 L855.5 577.2 L853.4 575.5 L851.4 573.9 L849.3 572.3 L847.2 570.7 L845.1 569.0 L843.1 567.4 L841.0 565.8 L838.9 564.2 L836.9 562.5 L834.8 560.9 L832.8 559.3 L830.7 557.6 L828.7 556.0 L826.7 554.4 L824.7 552.8 L822.6 551.1 L820.6 549.5 L818.6 547.9 L816.6 546.3 L814.6 544.6 L812.7 543.0 L810.7 541.4 L808.7 539.7 L806.7 538.1 L804.8 536.5 L802.8 534.9 L800.9 533.2 L799.0 531.6 L797.0 530.0 L795.1 528.4 L793.2 526.7 L791.3 525.1 L789.4 523.5 L787.5 521.8 L785.6 520.2 L783.8 518.6 L781.9 517.0 L780.1 515.3 L778.2 513.7 L776.4 512.1 L774.6 510.5 L772.8 508.8 L771.0 507.2 L769.2 505.6 L767.4 504.0 L765.6 502.3 L763.9 500.7 L762.1 499.1 L760.4 497.4 L758.7 495.8 L756.9 494.2 L755.2 492.6 L753.5 490.9 L751.8 489.3 L750.2 487.7 L748.5 486.1 L746.9 484.4 L745.2 482.8 L743.6 481.2 L742.0 479.5 L740.4 477.9 L738.8 476.3 L737.2 474.7 L735.7 473.0 L734.1 471.4 L732.6 469.8 L731.0 468.2 L729.5 466.5 L728.0 464.9 L726.5 463.3 L725.1 461.6 L723.6 460.0 L722.2 458.4 L720.7 456.8 L719.3 455.1 L717.9 453.5 L716.5 451.9 L715.1 450.3 L713.8 448.6 L712.4 447.0 L711.1 445.4 L709.8 443.8 L708.5 442.1 L707.2 440.5 L705.9 438.9 L704.7 437.2 L703.4 435.6 L702.2 434.0 L701.0 432.4 L699.8 430.7 L698.6 429.1 L697.4 427.5 L696.3 425.9 L695.1 424.2 L694.0 422.6 L692.9 421.0 L691.8 419.3 L690.7 417.7 L689.7 416.1 L688.6 414.5 L687.6 412.8 L686.6 411.2 L685.6 409.6 L684.6 408.0 L683.7 406.3 L682.7 404.7 L681.8 403.1 L680.9 401.5 L680.0 399.8 L679.1 398.2 L678.3 396.6 L677.5 394.9 L676.6 393.3 L675.8 391.7 L675.0 390.1 L674.3 388.4 L673.5 386.8 L672.8 385.2 L672.0 383.6 L671.3 381.9 L670.7 380.3 L670.0 378.7 L669.3 377.0 L668.7 375.4 L668.1 373.8 L667.5 372.2 L666.9 370.5 L666.4 368.9 L665.8 367.3 L665.3 365.7 L664.8 364.0 L664.3 362.4 L663.8 360.8 L663.4 359.1 L662.9 357.5 L662.5 355.9 L662.1 354.3 L661.8 352.6 L661.4 351.0 L661.1 349.4 L660.7 347.8 L660.4 346.1 L660.1 344.5 L659.9 342.9 L659.6 341.3 L659.4 339.6 L659.2 338.0 L659.0 336.4 L658.8 334.7 L658.6 333.1 L658.5 331.5 L658.4 329.9 L658.3 328.2 L658.2 326.6 L658.1 325.0 L658.1 323.4 L658.1 321.7 L658.0 320.1 L658.1 318.5 L658.1 316.8 L658.1 315.2 L658.2 313.6 L658.3 312.0 L658.4 310.3 L658.5 308.7 L658.6 307.1 L658.8 305.5 L659.0 303.8 L659.2 302.2 L659.4 300.6 L659.6 298.9 L659.9 297.3 L660.1 295.7 L660.4 294.1 L660.7 292.4 L661.1 290.8 L661.4 289.2 L661.8 287.6 L662.1 285.9 L662.5 284.3 L662.9 282.7 L663.4 281.1 L663.8 279.4 L664.3 277.8 L664.8 276.2 L665.3 274.5 L665.8 272.9 L666.4 271.3 L666.9 269.7 L667.5 268.0 L668.1 266.4 L668.7 264.8 L669.3 263.2 L670.0 261.5 L670.7 259.9 L671.3 258.3 L672.0 256.6 L672.8 255.0 L673.5 253.4 L674.3 251.8 L675.0 250.1 L675.8 248.5 L676.6 246.9 L677.5 245.3 L678.3 243.6 L679.1 242.0 L680.0 240.4 L680.9 238.8 L681.8 237.1 L682.7 235.5 L683.7 233.9 L684.6 232.2 L685.6 230.6 L686.6 229.0 L687.6 227.4 L688.6 225.7 L689.7 224.1 L690.7 222.5 L691.8 220.9 L692.9 219.2 L694.0 217.6 L695.1 216.0 L696.3 214.3 L697.4 212.7 L698.6 211.1 L699.8 209.5 L701.0 207.8 L702.2 206.2 L703.4 204.6 L704.7 203.0 L705.9 201.3 L707.2 199.7 L708.5 198.1 L709.8 196.4 L711.1 194.8 L712.4 193.2 L713.8 191.6 L715.1 189.9 L716.5 188.3 L717.9 186.7 L719.3 185.1 L720.7 183.4 L722.2 181.8 L723.6 180.2 L725.1 178.6 L726.5 176.9 L728.0 175.3 L729.5 173.7 L731.0 172.0 L732.6 170.4 L734.1 168.8 L735.7 167.2 L737.2 165.5 L738.8 163.9 L740.4 162.3 L742.0 160.7 L743.6 159.0 L745.2 157.4 L746.9 155.8 L748.5 154.1 L750.2 152.5 L751.8 150.9 L753.5 149.3 L755.2 147.6 L756.9 146.0 L758.7 144.4 L760.4 142.8 L762.1 141.1 L763.9 139.5 L765.6 137.9 L767.4 136.2 L769.2 134.6 L771.0 133.0 L772.8 131.4 L774.6 129.7 L776.4 128.1 L778.2 126.5 L780.1 124.9 L781.9 123.2 L783.8 121.6 L785.6 120.0 L787.5 118.4 L789.4 116.7 L791.3 115.1 L793.2 113.5 L795.1 111.8 L797.0 110.2 L799.0 108.6 L800.9 107.0 L802.8 105.3 L804.8 103.7 L806.7 102.1 L808.7 100.5 L810.7 98.8 L812.7 97.2 L814.6 95.6 L816.6 93.9 L818.6 92.3 L820.6 90.7 L822.6 89.1 L824.7 87.4 L826.7 85.8 L828.7 84.2 L830.7 82.6 L832.8 80.9 L834.8 79.3 L836.9 77.7 L838.9 76.1 L841.0 74.4 L843.1 72.8 L845.1 71.2 L847.2 69.5 L849.3 67.9 L851.4 66.3 L853.4 64.7 L855.5 63.0 L857.6 61.4 L859.7 59.8 L861.8 58.2 L863.9 56.5 L866.0 54.9 L868.1 53.3 L870.2 51.6 L872.4 50.0 L874.5 48.4 L876.6 46.8 L878.7 45.1 L880.8 43.5 L883.0 41.9 L885.1 40.3 L887.2 38.6 L889.3 37.0 L891.5 35.4 L893.6 33.7 L895.7 32.1 L897.8 30.5 L900.0 28.9 L902.1 27.2"/>
<path d="M902.1 613.0 L899.5 611.3 L897.0 609.7 L894.4 608.1 L891.9 606.5 L889.3 604.8 L886.8 603.2 L884.2 601.6 L881.7 599.9 L879.1 598.3 L876.6 596.7 L874.0 595.1 L871.5 593.4 L868.9 591.8 L866.4 590.2 L863.9 588.6 L861.3 586.9 L858.8 585.3 L856.3 583.7 L853.8 582.0 L851.2 580.4 L848.7 578.8 L846.2 577.2 L843.7 575.5 L841.2 573.9 L838.7 572.3 L836.2 570.7 L833.7 569.0 L831.3 567.4 L828.8 565.8 L826.3 564.2 L823.8 562.5 L821.4 560.9 L818.9 559.3 L816.5 557.6 L814.0 556.0 L811.6 554.4 L809.2 552.8 L806.8 551.1 L804.3 549.5 L801.9 547.9 L799.5 546.3 L797.1 544.6 L794.8 543.0 L792.4 541.4 L790.0 539.7 L787.7 538.1 L785.3 536.5 L783.0 534.9 L780.7 533.2 L778.3 531.6 L776.0 530.0 L773.7 528.4 L771.4 526.7 L769.1 525.1 L766.9 523.5 L764.6 521.8 L762.4 520.2 L760.1 518.6 L757.9 517.0 L755.7 515.3 L753.5 513.7 L751.3 512.1 L749.1 510.5 L746.9 508.8 L744.7 507.2 L742.6 505.6 L740.5 504.0 L738.3 502.3 L736.2 500.7 L734.1 499.1 L732.0 497.4 L730.0 495.8 L727.9 494.2 L725.9 492.6 L723.8 490.9 L721.8 489.3 L719.8 487.7 L717.8 486.1 L715.8 484.4 L713.9 482.8 L711.9 481.2 L710.0 479.5 L708.0 477.9 L706.1 476.3 L704.2 474.7 L702.4 473.0 L700.5 471.4 L698.7 469.8 L696.8 468.2 L695.0 466.5 L693.2 464.9 L691.4 463.3 L689.7 461.6 L687.9 460.0 L686.2 458.4 L684.5 456.8 L682.8 455.1 L681.1 453.5 L679.4 451.9 L677.8 450.3 L676.1 448.6 L674.5 447.0 L672.9 445.4 L671.3 443.8 L669.8 442.1 L668.2 440.5 L666.7 438.9 L665.2 437.2 L663.7 435.6 L662.2 434.0 L660.7 432.4 L659.3 430.7 L657.9 429.1 L656.5 427.5 L655.1 425.9 L653.7 424.2 L652.4 422.6 L651.1 421.0 L649.8 419.3 L648.5 417.7 L647.2 416.1 L646.0 414.5 L644.7 412.8 L643.5 411.2 L642.3 409.6 L641.2 408.0 L640.0 406.3 L638.9 404.7 L637.8 403.1 L636.7 401.5 L635.6 399.8 L634.6 398.2 L633.5 396.6 L632.5 394.9 L631.5 393.3 L630.6 391.7 L629.6 390.1 L628.7 388.4 L627.8 386.8 L626.9 385.2 L626.0 383.6 L625.2 381.9 L624.4 380.3 L623.6 378.7 L622.8 377.0 L622.0 375.4 L621.3 373.8 L620.6 372.2 L619.9 370.5 L619.2 368.9 L618.6 367.3 L617.9 365.7 L617.3 364.0 L616.7 362.4 L616.2 360.8 L615.6 359.1 L615.1 357.5 L614.6 355.9 L614.1 354.3 L613.7 352.6 L613.3 351.0 L612.8 349.4 L612.5 347.8 L612.1 346.1 L611.7 344.5 L611.4 342.9 L611.1 341.3 L610.8 339.6 L610.6 338.0 L610.4 336.4 L610.1 334.7 L610.0 333.1 L609.8 331.5 L609.6 329.9 L609.5 328.2 L609.4 326.6 L609.3 325.0 L609.3 323.4 L609.3 321.7 L609.2 320.1 L609.3 318.5 L609.3 316.8 L609.3 315.2 L609.4 313.6 L609.5 312.0 L609.6 310.3 L609.8 308.7 L610.0 307.1 L610.1 305.5 L610.4 303.8 L610.6 302.2 L610.8 300.6 L611.1 298.9 L611.4 297.3 L611.7 295.7 L612.1 294.1 L612.5 292.4 L612.8 290.8 L613.3 289.2 L613.7 287.6 L614.1 285.9 L614.6 284.3 L615.1 282.7 L615.6 281.1 L616.2 279.4 L616.7 277.8 L617.3 276.2 L617.9 274.5 L618.6 272.9 L619.2 271.3 L619.9 269.7 L620.6 268.0 L621.3 266.4 L622.0 264.8 L622.8 263.2 L623.6 261.5 L624.4 259.9 L625.2 258.3 L626.0 256.6 L626.9 255.0 L627.8 253.4 L628.7 251.8 L629.6 250.1 L630.6 248.5 L631.5 246.9 L632.5 245.3 L633.5 243.6 L634.6 242.0 L635.6 240.4 L636.7 238.8 L637.8 237.1 L638.9 235.5 L640.0 233.9 L641.2 232.2 L642.3 230.6 L643.5 229.0 L644.7 227.4 L646.0 225.7 L647.2 224.1 L648.5 222.5 L649.8 220.9 L651.1 219.2 L652.4 217.6 L653.7 216.0 L655.1 214.3 L656.5 212.7 L657.9 211.1 L659.3 209.5 L660.7 207.8 L662.2 206.2 L663.7 204.6 L665.2 203.0 L666.7 201.3 L668.2 199.7 L669.8 198.1 L671.3 196.4 L672.9 194.8 L674.5 193.2 L676.1 191.6 L677.8 189.9 L679.4 188.3 L681.1 186.7 L682.8 185.1 L684.5 183.4 L686.2 181.8 L687.9 180.2 L689.7 178.6 L691.4 176.9 L693.2 175.3 L695.0 173.7 L696.8 172.0 L698.7 170.4 L700.5 168.8 L702.4 167.2 L704.2 165.5 L706.1 163.9 L708.0 162.3 L710.0 160.7 L711.9 159.0 L713.9 157.4 L715.8 155.8 L717.8 154.1 L719.8 152.5 L721.8 150.9 L723.8 149.3 L725.9 147.6 L727.9 146.0 L730.0 144.4 L732.0 142.8 L734.1 141.1 L736.2 139.5 L738.3 137.9 L740.5 136.2 L742.6 134.6 L744.7 133.0 L746.9 131.4 L749.1 129.7 L751.3 128.1 L753.5 126.5 L755.7 124.9 L757.9 123.2 L760.1 121.6 L762.4 120.0 L764.6 118.4 L766.9 116.7 L769.1 115.1 L771.4 113.5 L773.7 111.8 L776.0 110.2 L778.3 108.6 L780.7 107.0 L783.0 105.3 L785.3 103.7 L787.7 102.1 L790.0 100.5 L792.4 98.8 L794.8 97.2 L797.1 95.6 L799.5 93.9 L801.9 92.3 L804.3 90.7 L806.8 89.1 L809.2 87.4 L811.6 85.8 L814.0 84.2 L816.5 82.6 L818.9 80.9 L821.4 79.3 L823.8 77.7 L826.3 76.1 L828.8 74.4 L831.3 72.8 L833.7 71.2 L836.2 69.5 L838.7 67.9 L841.2 66.3 L843.7 64.7 L846.2 63.0 L848.7 61.4 L851.2 59.8 L853.8 58.2 L856.3 56.5 L858.8 54.9 L861.3 53.3 L863.9 51.6 L866.4 50.0 L868.9 48.4 L871.5 46.8 L874.0 45.1 L876.6 43.5 L879.1 41.9 L881.7 40.3 L884.2 38.6 L886.8 37.0 L889.3 35.4 L891.9 33.7 L894.4 32.1 L897.0 30.5 L899.5 28.9 L902.1 27.2"/>
<path d="M902.1 613.0 L899.1 611.3 L896.1 609.7 L893.2 608.1 L890.2 606.5 L887.2 604.8 L884.2 603.2 L881.2 601.6 L878.3 599.9 L875.3 598.3 L872.3 596.7 L869.4 595.1 L866.4 593.4 L863.4 591.8 L860.5 590.2 L857.5 588.6 L854.5 586.9 L851.6 585.3 L848.7 583.7 L845.7 582.0 L842.8 580.4 L839.8 578.8 L836.9 577.2 L834.0 575.5 L831.1 573.9 L828.1 572.3 L825.2 570.7 L822.3 569.0 L819.4 567.4 L816.6 565.8 L813.7 564.2 L810.8 562.5 L807.9 560.9 L805.1 559.3 L802.2 557.6 L799.4 556.0 L796.5 554.4 L793.7 552.8 L790.9 551.1 L788.0 549.5 L785.2 547.9 L782.4 546.3 L779.7 544.6 L776.9 543.0 L774.1 541.4 L771.3 539.7 L768.6 538.1 L765.9 536.5 L763.1 534.9 L760.4 533.2 L757.7 531.6 L755.0 530.0 L752.3 528.4 L749.6 526.7 L747.0 525.1 L744.3 523.5 L741.7 521.8 L739.1 520.2 L736.5 518.6 L733.9 517.0 L731.3 515.3 L728.7 513.7 L726.1 512.1 L723.6 510.5 L721.0 508.8 L718.5 507.2 L716.0 505.6 L713.5 504.0 L711.0 502.3 L708.6 500.7 L706.1 499.1 L703.7 497.4 L701.3 495.8 L698.9 494.2 L696.5 492.6 L694.1 490.9 L691.7 489.3 L689.4 487.7 L687.1 486.1 L684.8 484.4 L682.5 482.8 L680.2 481.2 L677.9 479.5 L675.7 477.9 L673.5 476.3 L671.3 474.7 L669.1 473.0 L666.9 471.4 L664.8 469.8 L662.6 468.2 L660.5 466.5 L658.4 464.9 L656.3 463.3 L654.3 461.6 L652.2 460.0 L650.2 458.4 L648.2 456.8 L646.2 455.1 L644.2 453.5 L642.3 451.9 L640.4 450.3 L638.5 448.6 L636.6 447.0 L634.7 445.4 L632.9 443.8 L631.0 442.1 L629.2 440.5 L627.4 438.9 L625.7 437.2 L623.9 435.6 L622.2 434.0 L620.5 432.4 L618.8 430.7 L617.2 429.1 L615.6 427.5 L613.9 425.9 L612.3 424.2 L610.8 422.6 L609.2 421.0 L607.7 419.3 L606.2 417.7 L604.7 416.1 L603.3 414.5 L601.8 412.8 L600.4 411.2 L599.0 409.6 L597.7 408.0 L596.3 406.3 L595.0 404.7 L593.7 403.1 L592.4 401.5 L591.2 399.8 L590.0 398.2 L588.8 396.6 L587.6 394.9 L586.4 393.3 L585.3 391.7 L584.2 390.1 L583.1 388.4 L582.1 386.8 L581.0 385.2 L580.0 383.6 L579.0 381.9 L578.1 380.3 L577.2 378.7 L576.2 377.0 L575.4 375.4 L574.5 373.8 L573.7 372.2 L572.9 370.5 L572.1 368.9 L571.3 367.3 L570.6 365.7 L569.9 364.0 L569.2 362.4 L568.5 360.8 L567.9 359.1 L567.3 357.5 L566.7 355.9 L566.2 354.3 L565.6 352.6 L565.1 351.0 L564.6 349.4 L564.2 347.8 L563.8 346.1 L563.4 344.5 L563.0 342.9 L562.6 341.3 L562.3 339.6 L562.0 338.0 L561.7 336.4 L561.5 334.7 L561.3 333.1 L561.1 331.5 L560.9 329.9 L560.8 328.2 L560.6 326.6 L560.5 325.0 L560.5 323.4 L560.4 321.7 L560.4 320.1 L560.4 318.5 L560.5 316.8 L560.5 315.2 L560.6 313.6 L560.8 312.0 L560.9 310.3 L561.1 308.7 L561.3 307.1 L561.5 305.5 L561.7 303.8 L562.0 302.2 L562.3 300.6 L562.6 298.9 L563.0 297.3 L563.4 295.7 L563.8 294.1 L564.2 292.4 L564.6 290.8 L565.1 289.2 L565.6 287.6 L566.2 285.9 L566.7 284.3 L567.3 282.7 L567.9 281.1 L568.5 279.4 L569.2 277.8 L569.9 276.2 L570.6 274.5 L571.3 272.9 L572.1 271.3 L572.9 269.7 L573.7 268.0 L574.5 266.4 L575.4 264.8 L576.2 263.2 L577.2 261.5 L578.1 259.9 L579.0 258.3 L580.0 256.6 L581.0 255.0 L582.1 253.4 L583.1 251.8 L584.2 250.1 L585.3 248.5 L586.4 246.9 L587.6 245.3 L588.8 243.6 L590.0 242.0 L591.2 240.4 L592.4 238.8 L593.7 237.1 L595.0 235.5 L596.3 233.9 L597.7 232.2 L599.0 230.6 L600.4 229.0 L601.8 227.4 L603.3 225.7 L604.7 224.1 L606.2 222.5 L607.7 220.9 L609.2 219.2 L610.8 217.6 L612.3 216.0 L613.9 214.3 L615.6 212.7 L617.2 211.1 L618.8 209.5 L620.5 207.8 L622.2 206.2 L623.9 204.6 L625.7 203.0 L627.4 201.3 L629.2 199.7 L631.0 198.1 L632.9 196.4 L634.7 194.8 L636.6 193.2 L638.5 191.6 L640.4 189.9 L642.3 188.3 L644.2 186.7 L646.2 185.1 L648.2 183.4 L650.2 181.8 L652.2 180.2 L654.3 178.6 L656.3 176.9 L658.4 175.3 L660.5 173.7 L662.6 172.0 L664.8 170.4 L666.9 168.8 L669.1 167.2 L671.3 165.5 L673.5 163.9 L675.7 162.3 L677.9 160.7 L680.2 159.0 L682.5 157.4 L684.8 155.8 L687.1 154.1 L689.4 152.5 L691.7 150.9 L694.1 149.3 L696.5 147.6 L698.9 146.0 L701.3 144.4 L703.7 142.8 L706.1 141.1 L708.6 139.5 L711.0 137.9 L713.5 136.2 L716.0 134.6 L718.5 133.0 L721.0 131.4 L723.6 129.7 L726.1 128.1 L728.7 126.5 L731.3 124.9 L733.9 123.2 L736.5 121.6 L739.1 120.0 L741.7 118.4 L744.3 116.7 L747.0 115.1 L749.6 113.5 L752.3 111.8 L755.0 110.2 L757.7 108.6 L760.4 107.0 L763.1 105.3 L765.9 103.7 L768.6 102.1 L771.3 100.5 L774.1 98.8 L776.9 97.2 L779.7 95.6 L782.4 93.9 L785.2 92.3 L788.0 90.7 L790.9 89.1 L793.7 87.4 L796.5 85.8 L799.4 84.2 L802.2 82.6 L805.1 80.9 L807.9 79.3 L810.8 77.7 L813.7 76.1 L816.6 74.4 L819.4 72.8 L822.3 71.2 L825.2 69.5 L828.1 67.9 L831.1 66.3 L834.0 64.7 L836.9 63.0 L839.8 61.4 L842.8 59.8 L845.7 58.2 L848.7 56.5 L851.6 54.9 L854.5 53.3 L857.5 51.6 L860.5 50.0 L863.4 48.4 L866.4 46.8 L869.4 45.1 L872.3 43.5 L875.3 41.9 L878.3 40.3 L881.2 38.6 L884.2 37.0 L887.2 35.4 L890.2 33.7 L893.2 32.1 L896.1 30.5 L899.1 28.9 L902.1 27.2"/>
<path d="M902.1 613.0 L898.7 611.3 L895.3 609.7 L891.9 608.1 L888.5 606.5 L885.1 604.8 L881.7 603.2 L878.3 601.6 L874.9 599.9 L871.5 598.3 L868.1 596.7 L864.7 595.1 L861.3 593.4 L857.9 591.8 L854.5 590.2 L851.1 588.6 L847.8 586.9 L844.4 585.3 L841.0 583.7 L837.7 582.0 L834.3 580.4 L830.9 578.8 L827.6 577.2 L824.3 575.5 L820.9 573.9 L817.6 572.3 L814.3 570.7 L810.9 569.0 L807.6 567.4 L804.3 565.8 L801.0 564.2 L797.7 562.5 L794.5 560.9 L791.2 559.3 L787.9 557.6 L784.7 556.0 L781.4 554.4 L778.2 552.8 L775.0 551.1 L771.8 549.5 L768.5 547.9 L765.4 546.3 L762.2 544.6 L759.0 543.0 L755.8 541.4 L752.7 539.7 L749.5 538.1 L746.4 536.5 L743.3 534.9 L740.2 533.2 L737.1 531.6 L734.0 530.0 L730.9 528.4 L727.9 526.7 L724.8 525.1 L721.8 523.5 L718.8 521.8 L715.8 520.2 L712.8 518.6 L709.8 517.0 L706.9 515.3 L703.9 513.7 L701.0 512.1 L698.1 510.5 L695.2 508.8 L692.3 507.2 L689.4 505.6 L686.6 504.0 L683.7 502.3 L680.9 500.7 L678.1 499.1 L675.3 497.4 L672.6 495.8 L669.8 494.2 L667.1 492.6 L664.4 490.9 L661.7 489.3 L659.0 487.7 L656.4 486.1 L653.7 484.4 L651.1 482.8 L648.5 481.2 L645.9 479.5 L643.4 477.9 L640.8 476.3 L638.3 474.7 L635.8 473.0 L633.3 471.4 L630.8 469.8 L628.4 468.2 L626.0 466.5 L623.6 464.9 L621.2 463.3 L618.9 461.6 L616.5 460.0 L614.2 458.4 L611.9 456.8 L609.6 455.1 L607.4 453.5 L605.2 451.9 L603.0 450.3 L600.8 448.6 L598.6 447.0 L596.5 445.4 L594.4 443.8 L592.3 442.1 L590.2 440.5 L588.2 438.9 L586.2 437.2 L584.2 435.6 L582.2 434.0 L580.3 432.4 L578.4 430.7 L576.5 429.1 L574.6 427.5 L572.8 425.9 L571.0 424.2 L569.2 422.6 L567.4 421.0 L565.7 419.3 L563.9 417.7 L562.2 416.1 L560.6 414.5 L558.9 412.8 L557.3 411.2 L555.7 409.6 L554.2 408.0 L552.6 406.3 L551.1 404.7 L549.7 403.1 L548.2 401.5 L546.8 399.8 L545.4 398.2 L544.0 396.6 L542.7 394.9 L541.3 393.3 L540.1 391.7 L538.8 390.1 L537.6 388.4 L536.3 386.8 L535.2 385.2 L534.0 383.6 L532.9 381.9 L531.8 380.3 L530.7 378.7 L529.7 377.0 L528.7 375.4 L527.7 373.8 L526.7 372.2 L525.8 370.5 L524.9 368.9 L524.1 367.3 L523.2 365.7 L522.4 364.0 L521.6 362.4 L520.9 360.8 L520.2 359.1 L519.5 357.5 L518.8 355.9 L518.2 354.3 L517.6 352.6 L517.0 351.0 L516.4 349.4 L515.9 347.8 L515.4 346.1 L515.0 344.5 L514.5 342.9 L514.1 341.3 L513.8 339.6 L513.4 338.0 L513.1 336.4 L512.8 334.7 L512.6 333.1 L512.3 331.5 L512.2 329.9 L512.0 328.2 L511.9 326.6 L511.8 325.0 L511.7 323.4 L511.6 321.7 L511.6 320.1 L511.6 318.5 L511.7 316.8 L511.8 315.2 L511.9 313.6 L512.0 312.0 L512.2 310.3 L512.3 308.7 L512.6 307.1 L512.8 305.5 L513.1 303.8 L513.4 302.2 L513.8 300.6 L514.1 298.9 L514.5 297.3 L515.0 295.7 L515.4 294.1 L515.9 292.4 L516.4 290.8 L517.0 289.2 L517.6 287.6 L518.2 285.9 L518.8 284.3 L519.5 282.7 L520.2 281.1 L520.9 279.4 L521.6 277.8 L522.4 276.2 L523.2 274.5 L524.1 272.9 L524.9 271.3 L525.8 269.7 L526.7 268.0 L527.7 266.4 L528.7 264.8 L529.7 263.2 L530.7 261.5 L531.8 259.9 L532.9 258.3 L534.0 256.6 L535.2 255.0 L536.3 253.4 L537.6 251.8 L538.8 250.1 L540.1 248.5 L541.3 246.9 L542.7 245.3 L544.0 243.6 L545.4 242.0 L546.8 240.4 L548.2 238.8 L549.7 237.1 L551.1 235.5 L552.6 233.9 L554.2 232.2 L555.7 230.6 L557.3 229.0 L558.9 227.4 L560.6 225.7 L562.2 224.1 L563.9 222.5 L565.7 220.9 L567.4 219.2 L569.2 217.6 L571.0 216.0 L572.8 214.3 L574.6 212.7 L576.5 211.1 L578.4 209.5 L580.3 207.8 L582.2 206.2 L584.2 204.6 L586.2 203.0 L588.2 201.3 L590.2 199.7 L592.3 198.1 L594.4 196.4 L596.5 194.8 L598.6 193.2 L600.8 191.6 L603.0 189.9 L605.2 188.3 L607.4 186.7 L609.6 185.1 L611.9 183.4 L614.2 181.8 L616.5 180.2 L618.9 178.6 L621.2 176.9 L623.6 175.3 L626.0 173.7 L628.4 172.0 L630.8 170.4 L633.3 168.8 L635.8 167.2 L638.3 165.5 L640.8 163.9 L643.4 162.3 L645.9 160.7 L648.5 159.0 L651.1 157.4 L653.7 155.8 L656.4 154.1 L659.0 152.5 L661.7 150.9 L664.4 149.3 L667.1 147.6 L669.8 146.0 L672.6 144.4 L675.3 142.8 L678.1 141.1 L680.9 139.5 L683.7 137.9 L686.6 136.2 L689.4 134.6 L692.3 133.0 L695.2 131.4 L698.1 129.7 L701.0 128.1 L703.9 126.5 L706.9 124.9 L709.8 123.2 L712.8 121.6 L715.8 120.0 L718.8 118.4 L721.8 116.7 L724.8 115.1 L727.9 113.5 L730.9 111.8 L734.0 110.2 L737.1 108.6 L740.2 107.0 L743.3 105.3 L746.4 103.7 L749.5 102.1 L752.7 100.5 L755.8 98.8 L759.0 97.2 L762.2 95.6 L765.4 93.9 L768.5 92.3 L771.8 90.7 L775.0 89.1 L778.2 87.4 L781.4 85.8 L784.7 84.2 L787.9 82.6 L791.2 80.9 L794.5 79.3 L797.7 77.7 L801.0 76.1 L804.3 74.4 L807.6 72.8 L810.9 71.2 L814.3 69.5 L817.6 67.9 L820.9 66.3 L824.3 64.7 L827.6 63.0 L830.9 61.4 L834.3 59.8 L837.7 58.2 L841.0 56.5 L844.4 54.9 L847.8 53.3 L851.1 51.6 L854.5 50.0 L857.9 48.4 L861.3 46.8 L864.7 45.1 L868.1 43.5 L871.5 41.9 L874.9 40.3 L878.3 38.6 L881.7 37.0 L885.1 35.4 L888.5 33.7 L891.9 32.1 L895.3 30.5 L898.7 28.9 L902.1 27.2"/>
<path d="M902.1 613.0 L898.3 611.3 L894.4 609.7 L890.6 608.1 L886.8 606.5 L882.9 604.8 L879.1 603.2 L875.3 601.6 L871.5 599.9 L867.6 598.3 L863.8 596.7 L860.0 595.1 L856.2 593.4 L852.4 591.8 L848.6 590.2 L844.8 588.6 L841.0 586.9 L837.2 585.3 L833.4 583.7 L829.6 582.0 L825.8 580.4 L822.0 578.8 L818.3 577.2 L814.5 575.5 L810.8 573.9 L807.0 572.3 L803.3 570.7 L799.5 569.0 L795.8 567.4 L792.1 565.8 L788.4 564.2 L784.7 562.5 L781.0 560.9 L777.3 559.3 L773.7 557.6 L770.0 556.0 L766.4 554.4 L762.7 552.8 L759.1 551.1 L755.5 549.5 L751.9 547.9 L748.3 546.3 L744.7 544.6 L741.1 543.0 L737.5 541.4 L734.0 539.7 L730.5 538.1 L726.9 536.5 L723.4 534.9 L719.9 533.2 L716.4 531.6 L713.0 530.0 L709.5 528.4 L706.1 526.7 L702.7 525.1 L699.3 523.5 L695.9 521.8 L692.5 520.2 L689.1 518.6 L685.8 517.0 L682.5 515.3 L679.1 513.7 L675.8 512.1 L672.6 510.5 L669.3 508.8 L666.1 507.2 L662.8 505.6 L659.6 504.0 L656.5 502.3 L653.3 500.7 L650.1 499.1 L647.0 497.4 L643.9 495.8 L640.8 494.2 L637.7 492.6 L634.7 490.9 L631.6 489.3 L628.6 487.7 L625.6 486.1 L622.7 484.4 L619.7 482.8 L616.8 481.2 L613.9 479.5 L611.0 477.9 L608.2 476.3 L605.3 474.7 L602.5 473.0 L599.7 471.4 L596.9 469.8 L594.2 468.2 L591.5 466.5 L588.8 464.9 L586.1 463.3 L583.5 461.6 L580.8 460.0 L578.2 458.4 L575.6 456.8 L573.1 455.1 L570.6 453.5 L568.1 451.9 L565.6 450.3 L563.1 448.6 L560.7 447.0 L558.3 445.4 L555.9 443.8 L553.6 442.1 L551.3 440.5 L549.0 438.9 L546.7 437.2 L544.5 435.6 L542.3 434.0 L540.1 432.4 L537.9 430.7 L535.8 429.1 L533.7 427.5 L531.6 425.9 L529.6 424.2 L527.5 422.6 L525.6 421.0 L523.6 419.3 L521.7 417.7 L519.8 416.1 L517.9 414.5 L516.0 412.8 L514.2 411.2 L512.4 409.6 L510.7 408.0 L509.0 406.3 L507.3 404.7 L505.6 403.1 L504.0 401.5 L502.4 399.8 L500.8 398.2 L499.2 396.6 L497.7 394.9 L496.2 393.3 L494.8 391.7 L493.4 390.1 L492.0 388.4 L490.6 386.8 L489.3 385.2 L488.0 383.6 L486.7 381.9 L485.5 380.3 L484.3 378.7 L483.1 377.0 L482.0 375.4 L480.9 373.8 L479.8 372.2 L478.8 370.5 L477.8 368.9 L476.8 367.3 L475.9 365.7 L474.9 364.0 L474.1 362.4 L473.2 360.8 L472.4 359.1 L471.6 357.5 L470.9 355.9 L470.2 354.3 L469.5 352.6 L468.8 351.0 L468.2 349.4 L467.6 347.8 L467.1 346.1 L466.6 344.5 L466.1 342.9 L465.6 341.3 L465.2 339.6 L464.8 338.0 L464.5 336.4 L464.2 334.7 L463.9 333.1 L463.6 331.5 L463.4 329.9 L463.2 328.2 L463.1 326.6 L463.0 325.0 L462.9 323.4 L462.8 321.7 L462.8 320.1 L462.8 318.5 L462.9 316.8 L463.0 315.2 L463.1 313.6 L463.2 312.0 L463.4 310.3 L463.6 308.7 L463.9 307.1 L464.2 305.5 L464.5 303.8 L464.8 302.2 L465.2 300.6 L465.6 298.9 L466.1 297.3 L466.6 295.7 L467.1 294.1 L467.6 292.4 L468.2 290.8 L468.8 289.2 L469.5 287.6 L470.2 285.9 L470.9 284.3 L471.6 282.7 L472.4 281.1 L473.2 279.4 L474.1 277.8 L474.9 276.2 L475.9 274.5 L476.8 272.9 L477.8 271.3 L478.8 269.7 L479.8 268.0 L480.9 266.4 L482.0 264.8 L483.1 263.2 L484.3 261.5 L485.5 259.9 L486.7 258.3 L488.0 256.6 L489.3 255.0 L490.6 253.4 L492.0 251.8 L493.4 250.1 L494.8 248.5 L496.2 246.9 L497.7 245.3 L499.2 243.6 L500.8 242.0 L502.4 240.4 L504.0 238.8 L505.6 237.1 L507.3 235.5 L509.0 233.9 L510.7 232.2 L512.4 230.6 L514.2 229.0 L516.0 227.4 L517.9 225.7 L519.8 224.1 L521.7 222.5 L523.6 220.9 L525.6 219.2 L527.5 217.6 L529.6 216.0 L531.6 214.3 L533.7 212.7 L535.8 211.1 L537.9 209.5 L540.1 207.8 L542.3 206.2 L544.5 204.6 L546.7 203.0 L549.0 201.3 L551.3 199.7 L553.6 198.1 L555.9 196.4 L558.3 194.8 L560.7 193.2 L563.1 191.6 L565.6 189.9 L568.1 188.3 L570.6 186.7 L573.1 185.1 L575.6 183.4 L578.2 181.8 L580.8 180.2 L583.5 178.6 L586.1 176.9 L588.8 175.3 L591.5 173.7 L594.2 172.0 L596.9 170.4 L599.7 168.8 L602.5 167.2 L605.3 165.5 L608.2 163.9 L611.0 162.3 L613.9 160.7 L616.8 159.0 L619.7 157.4 L622.7 155.8 L625.6 154.1 L628.6 152.5 L631.6 150.9 L634.7 149.3 L637.7 147.6 L640.8 146.0 L643.9 144.4 L647.0 142.8 L650.1 141.1 L653.3 139.5 L656.5 137.9 L659.6 136.2 L662.8 134.6 L666.1 133.0 L669.3 131.4 L672.6 129.7 L675.8 128.1 L679.1 126.5 L682.5 124.9 L685.8 123.2 L689.1 121.6 L692.5 120.0 L695.9 118.4 L699.3 116.7 L702.7 115.1 L706.1 113.5 L709.5 111.8 L713.0 110.2 L716.4 108.6 L719.9 107.0 L723.4 105.3 L726.9 103.7 L730.5 102.1 L734.0 100.5 L737.5 98.8 L741.1 97.2 L744.7 95.6 L748.3 93.9 L751.9 92.3 L755.5 90.7 L759.1 89.1 L762.7 87.4 L766.4 85.8 L770.0 84.2 L773.7 82.6 L777.3 80.9 L781.0 79.3 L784.7 77.7 L788.4 76.1 L792.1 74.4 L795.8 72.8 L799.5 71.2 L803.3 69.5 L807.0 67.9 L810.8 66.3 L814.5 64.7 L818.3 63.0 L822.0 61.4 L825.8 59.8 L829.6 58.2 L833.4 56.5 L837.2 54.9 L841.0 53.3 L844.8 51.6 L848.6 50.0 L852.4 48.4 L856.2 46.8 L860.0 45.1 L863.8 43.5 L867.6 41.9 L871.5 40.3 L875.3 38.6 L879.1 37.0 L882.9 35.4 L886.8 33.7 L890.6 32.1 L894.4 30.5 L898.3 28.9 L902.1 27.2"/>
<path d="M902.1 613.0 L897.8 611.3 L893.6 609.7 L889.3 608.1 L885.1 606.5 L880.8 604.8 L876.6 603.2 L872.3 601.6 L868.1 599.9 L863.8 598.3 L859.6 596.7 L855.3 595.1 L851.1 593.4 L846.8 591.8 L842.6 590.2 L838.4 588.6 L834.2 586.9 L830.0 585.3 L825.7 583.7 L821.5 582.0 L817.3 580.4 L813.2 578.8 L809.0 577.2 L804.8 575.5 L800.6 573.9 L796.5 572.3 L792.3 570.7 L788.2 569.0 L784.0 567.4 L779.9 565.8 L775.8 564.2 L771.7 562.5 L767.6 560.9 L763.5 559.3 L759.4 557.6 L755.3 556.0 L751.3 554.4 L747.2 552.8 L743.2 551.1 L739.2 549.5 L735.2 547.9 L731.2 546.3 L727.2 544.6 L723.2 543.0 L719.3 541.4 L715.3 539.7 L711.4 538.1 L707.5 536.5 L703.6 534.9 L699.7 533.2 L695.8 531.6 L692.0 530.0 L688.1 528.4 L684.3 526.7 L680.5 525.1 L676.7 523.5 L673.0 521.8 L669.2 520.2 L665.5 518.6 L661.7 517.0 L658.0 515.3 L654.4 513.7 L650.7 512.1 L647.1 510.5 L643.4 508.8 L639.8 507.2 L636.3 505.6 L632.7 504.0 L629.2 502.3 L625.6 500.7 L622.1 499.1 L618.7 497.4 L615.2 495.8 L611.8 494.2 L608.4 492.6 L605.0 490.9 L601.6 489.3 L598.3 487.7 L594.9 486.1 L591.6 484.4 L588.4 482.8 L585.1 481.2 L581.9 479.5 L578.7 477.9 L575.5 476.3 L572.3 474.7 L569.2 473.0 L566.1 471.4 L563.0 469.8 L560.0 468.2 L557.0 466.5 L554.0 464.9 L551.0 463.3 L548.0 461.6 L545.1 460.0 L542.2 458.4 L539.4 456.8 L536.5 455.1 L533.7 453.5 L530.9 451.9 L528.2 450.3 L525.5 448.6 L522.8 447.0 L520.1 445.4 L517.5 443.8 L514.9 442.1 L512.3 440.5 L509.7 438.9 L507.2 437.2 L504.7 435.6 L502.3 434.0 L499.8 432.4 L497.4 430.7 L495.1 429.1 L492.7 427.5 L490.4 425.9 L488.2 424.2 L485.9 422.6 L483.7 421.0 L481.5 419.3 L479.4 417.7 L477.3 416.1 L475.2 414.5 L473.1 412.8 L471.1 411.2 L469.2 409.6 L467.2 408.0 L465.3 406.3 L463.4 404.7 L461.5 403.1 L459.7 401.5 L457.9 399.8 L456.2 398.2 L454.5 396.6 L452.8 394.9 L451.2 393.3 L449.5 391.7 L448.0 390.1 L446.4 388.4 L444.9 386.8 L443.4 385.2 L442.0 383.6 L440.6 381.9 L439.2 380.3 L437.9 378.7 L436.6 377.0 L435.3 375.4 L434.1 373.8 L432.9 372.2 L431.8 370.5 L430.6 368.9 L429.5 367.3 L428.5 365.7 L427.5 364.0 L426.5 362.4 L425.6 360.8 L424.7 359.1 L423.8 357.5 L423.0 355.9 L422.2 354.3 L421.4 352.6 L420.7 351.0 L420.0 349.4 L419.4 347.8 L418.8 346.1 L418.2 344.5 L417.6 342.9 L417.1 341.3 L416.7 339.6 L416.2 338.0 L415.9 336.4 L415.5 334.7 L415.2 333.1 L414.9 331.5 L414.7 329.9 L414.5 328.2 L414.3 326.6 L414.2 325.0 L414.1 323.4 L414.0 321.7 L414.0 320.1 L414.0 318.5 L414.1 316.8 L414.2 315.2 L414.3 313.6 L414.5 312.0 L414.7 310.3 L414.9 308.7 L415.2 307.1 L415.5 305.5 L415.9 303.8 L416.2 302.2 L416.7 300.6 L417.1 298.9 L417.6 297.3 L418.2 295.7 L418.8 294.1 L419.4 292.4 L420.0 290.8 L420.7 289.2 L421.4 287.6 L422.2 285.9 L423.0 284.3 L423.8 282.7 L424.7 281.1 L425.6 279.4 L426.5 277.8 L427.5 276.2 L428.5 274.5 L429.5 272.9 L430.6 271.3 L431.8 269.7 L432.9 268.0 L434.1 266.4 L435.3 264.8 L436.6 263.2 L437.9 261.5 L439.2 259.9 L440.6 258.3 L442.0 256.6 L443.4 255.0 L444.9 253.4 L446.4 251.8 L448.0 250.1 L449.5 248.5 L451.2 246.9 L452.8 245.3 L454.5 243.6 L456.2 242.0 L457.9 240.4 L459.7 238.8 L461.5 237.1 L463.4 235.5 L465.3 233.9 L467.2 232.2 L469.2 230.6 L471.1 229.0 L473.1 227.4 L475.2 225.7 L477.3 224.1 L479.4 222.5 L481.5 220.9 L483.7 219.2 L485.9 217.6 L488.2 216.0 L490.4 214.3 L492.7 212.7 L495.1 211.1 L497.4 209.5 L499.8 207.8 L502.3 206.2 L504.7 204.6 L507.2 203.0 L509.7 201.3 L512.3 199.7 L514.9 198.1 L517.5 196.4 L520.1 194.8 L522.8 193.2 L525.5 191.6 L528.2 189.9 L530.9 188.3 L533.7 186.7 L536.5 185.1 L539.4 183.4 L542.2 181.8 L545.1 180.2 L548.0 178.6 L551.0 176.9 L554.0 175.3 L557.0 173.7 L560.0 172.0 L563.0 170.4 L566.1 168.8 L569.2 167.2 L572.3 165.5 L575.5 163.9 L578.7 162.3 L581.9 160.7 L585.1 159.0 L588.4 157.4 L591.6 155.8 L594.9 154.1 L598.3 152.5 L601.6 150.9 L605.0 149.3 L608.4 147.6 L611.8 146.0 L615.2 144.4 L618.7 142.8 L622.1 141.1 L625.6 139.5 L629.2 137.9 L632.7 136.2 L636.3 134.6 L639.8 133.0 L643.4 131.4 L647.1 129.7 L650.7 128.1 L654.4 126.5 L658.0 124.9 L661.7 123.2 L665.5 121.6 L669.2 120.0 L673.0 118.4 L676.7 116.7 L680.5 115.1 L684.3 113.5 L688.1 111.8 L692.0 110.2 L695.8 108.6 L699.7 107.0 L703.6 105.3 L707.5 103.7 L711.4 102.1 L715.3 100.5 L719.3 98.8 L723.2 97.2 L727.2 95.6 L731.2 93.9 L735.2 92.3 L739.2 90.7 L743.2 89.1 L747.2 87.4 L751.3 85.8 L755.3 84.2 L759.4 82.6 L763.5 80.9 L767.6 79.3 L771.7 77.7 L775.8 76.1 L779.9 74.4 L784.0 72.8 L788.2 71.2 L792.3 69.5 L796.5 67.9 L800.6 66.3 L804.8 64.7 L809.0 63.0 L813.2 61.4 L817.3 59.8 L821.5 58.2 L825.7 56.5 L830.0 54.9 L834.2 53.3 L838.4 51.6 L842.6 50.0 L846.8 48.4 L851.1 46.8 L855.3 45.1 L859.6 43.5 L863.8 41.9 L868.1 40.3 L872.3 38.6 L876.6 37.0 L880.8 35.4 L885.1 33.7 L889.3 32.1 L893.6 30.5 L897.8 28.9 L902.1 27.2"/>
<path d="M902.1 613.0 L897.4 611.3 L892.7 609.7 L888.0 608.1 L883.4 606.5 L878.7 604.8 L874.0 603.2 L869.3 601.6 L864.6 599.9 L860.0 598.3 L855.3 596.7 L850.6 595.1 L846.0 593.4 L841.3 591.8 L836.7 590.2 L832.0 588.6 L827.4 586.9 L822.7 585.3 L818.1 583.7 L813.5 582.0 L808.9 580.4 L804.3 578.8 L799.7 577.2 L795.1 575.5 L790.5 573.9 L785.9 572.3 L781.3 570.7 L776.8 569.0 L772.2 567.4 L767.7 565.8 L763.1 564.2 L758.6 562.5 L754.1 560.9 L749.6 559.3 L745.1 557.6 L740.6 556.0 L736.2 554.4 L731.7 552.8 L727.3 551.1 L722.9 549.5 L718.5 547.9 L714.1 546.3 L709.7 544.6 L705.3 543.0 L701.0 541.4 L696.6 539.7 L692.3 538.1 L688.0 536.5 L683.7 534.9 L679.4 533.2 L675.2 531.6 L671.0 530.0 L666.7 528.4 L662.5 526.7 L658.3 525.1 L654.2 523.5 L650.0 521.8 L645.9 520.2 L641.8 518.6 L637.7 517.0 L633.6 515.3 L629.6 513.7 L625.6 512.1 L621.6 510.5 L617.6 508.8 L613.6 507.2 L609.7 505.6 L605.8 504.0 L601.9 502.3 L598.0 500.7 L594.1 499.1 L590.3 497.4 L586.5 495.8 L582.7 494.2 L579.0 492.6 L575.2 490.9 L571.5 489.3 L567.9 487.7 L564.2 486.1 L560.6 484.4 L557.0 482.8 L553.4 481.2 L549.9 479.5 L546.3 477.9 L542.8 476.3 L539.4 474.7 L535.9 473.0 L532.5 471.4 L529.1 469.8 L525.8 468.2 L522.4 466.5 L519.1 464.9 L515.9 463.3 L512.6 461.6 L509.4 460.0 L506.2 458.4 L503.1 456.8 L500.0 455.1 L496.9 453.5 L493.8 451.9 L490.8 450.3 L487.8 448.6 L484.8 447.0 L481.9 445.4 L479.0 443.8 L476.1 442.1 L473.3 440.5 L470.5 438.9 L467.7 437.2 L465.0 435.6 L462.3 434.0 L459.6 432.4 L457.0 430.7 L454.4 429.1 L451.8 427.5 L449.3 425.9 L446.8 424.2 L444.3 422.6 L441.9 421.0 L439.5 419.3 L437.1 417.7 L434.8 416.1 L432.5 414.5 L430.3 412.8 L428.0 411.2 L425.9 409.6 L423.7 408.0 L421.6 406.3 L419.5 404.7 L417.5 403.1 L415.5 401.5 L413.5 399.8 L411.6 398.2 L409.7 396.6 L407.9 394.9 L406.1 393.3 L404.3 391.7 L402.5 390.1 L400.9 388.4 L399.2 386.8 L397.6 385.2 L396.0 383.6 L394.4 381.9 L392.9 380.3 L391.5 378.7 L390.0 377.0 L388.7 375.4 L387.3 373.8 L386.0 372.2 L384.7 370.5 L383.5 368.9 L382.3 367.3 L381.1 365.7 L380.0 364.0 L379.0 362.4 L377.9 360.8 L376.9 359.1 L376.0 357.5 L375.1 355.9 L374.2 354.3 L373.3 352.6 L372.6 351.0 L371.8 349.4 L371.1 347.8 L370.4 346.1 L369.8 344.5 L369.2 342.9 L368.6 341.3 L368.1 339.6 L367.7 338.0 L367.2 336.4 L366.8 334.7 L366.5 333.1 L366.2 331.5 L365.9 329.9 L365.7 328.2 L365.5 326.6 L365.4 325.0 L365.3 323.4 L365.2 321.7 L365.2 320.1 L365.2 318.5 L365.3 316.8 L365.4 315.2 L365.5 313.6 L365.7 312.0 L365.9 310.3 L366.2 308.7 L366.5 307.1 L366.8 305.5 L367.2 303.8 L367.7 302.2 L368.1 300.6 L368.6 298.9 L369.2 297.3 L369.8 295.7 L370.4 294.1 L371.1 292.4 L371.8 290.8 L372.6 289.2 L373.3 287.6 L374.2 285.9 L375.1 284.3 L376.0 282.7 L376.9 281.1 L377.9 279.4 L379.0 277.8 L380.0 276.2 L381.1 274.5 L382.3 272.9 L383.5 271.3 L384.7 269.7 L386.0 268.0 L387.3 266.4 L388.7 264.8 L390.0 263.2 L391.5 261.5 L392.9 259.9 L394.4 258.3 L396.0 256.6 L397.6 255.0 L399.2 253.4 L400.9 251.8 L402.5 250.1 L404.3 248.5 L406.1 246.9 L407.9 245.3 L409.7 243.6 L411.6 242.0 L413.5 240.4 L415.5 238.8 L417.5 237.1 L419.5 235.5 L421.6 233.9 L423.7 232.2 L425.9 230.6 L428.0 229.0 L430.3 227.4 L432.5 225.7 L434.8 224.1 L437.1 222.5 L439.5 220.9 L441.9 219.2 L444.3 217.6 L446.8 216.0 L449.3 214.3 L451.8 212.7 L454.4 211.1 L457.0 209.5 L459.6 207.8 L462.3 206.2 L465.0 204.6 L467.7 203.0 L470.5 201.3 L473.3 199.7 L476.1 198.1 L479.0 196.4 L481.9 194.8 L484.8 193.2 L487.8 191.6 L490.8 189.9 L493.8 188.3 L496.9 186.7 L500.0 185.1 L503.1 183.4 L506.2 181.8 L509.4 180.2 L512.6 178.6 L515.9 176.9 L519.1 175.3 L522.4 173.7 L525.8 172.0 L529.1 170.4 L532.5 168.8 L535.9 167.2 L539.4 165.5 L542.8 163.9 L546.3 162.3 L549.9 160.7 L553.4 159.0 L557.0 157.4 L560.6 155.8 L564.2 154.1 L567.9 152.5 L571.5 150.9 L575.2 149.3 L579.0 147.6 L582.7 146.0 L586.5 144.4 L590.3 142.8 L594.1 141.1 L598.0 139.5 L601.9 137.9 L605.8 136.2 L609.7 134.6 L613.6 133.0 L617.6 131.4 L621.6 129.7 L625.6 128.1 L629.6 126.5 L633.6 124.9 L637.7 123.2 L641.8 121.6 L645.9 120.0 L650.0 118.4 L654.2 116.7 L658.3 115.1 L662.5 113.5 L666.7 111.8 L671.0 110.2 L675.2 108.6 L679.4 107.0 L683.7 105.3 L688.0 103.7 L692.3 102.1 L696.6 100.5 L701.0 98.8 L705.3 97.2 L709.7 95.6 L714.1 93.9 L718.5 92.3 L722.9 90.7 L727.3 89.1 L731.7 87.4 L736.2 85.8 L740.6 84.2 L745.1 82.6 L749.6 80.9 L754.1 79.3 L758.6 77.7 L763.1 76.1 L767.7 74.4 L772.2 72.8 L776.8 71.2 L781.3 69.5 L785.9 67.9 L790.5 66.3 L795.1 64.7 L799.7 63.0 L804.3 61.4 L808.9 59.8 L813.5 58.2 L818.1 56.5 L822.7 54.9 L827.4 53.3 L832.0 51.6 L836.7 50.0 L841.3 48.4 L846.0 46.8 L850.6 45.1 L855.3 43.5 L860.0 41.9 L864.6 40.3 L869.3 38.6 L874.0 37.0 L878.7 35.4 L883.4 33.7 L888.0 32.1 L892.7 30.5 L897.4 28.9 L902.1 27.2"/>
<path d="M902.1 613.0 L897.0 611.3 L891.9 609.7 L886.8 608.1 L881.7 606.5 L876.6 604.8 L871.4 603.2 L866.3 601.6 L861.2 599.9 L856.1 598.3 L851.1 596.7 L846.0 595.1 L840.9 593.4 L835.8 591.8 L830.7 590.2 L825.6 588.6 L820.6 586.9 L815.5 585.3 L810.5 583.7 L805.4 582.0 L800.4 580.4 L795.4 578.8 L790.3 577.2 L785.3 575.5 L780.3 573.9 L775.3 572.3 L770.3 570.7 L765.4 569.0 L760.4 567.4 L755.4 565.8 L750.5 564.2 L745.6 562.5 L740.7 560.9 L735.7 559.3 L730.9 557.6 L726.0 556.0 L721.1 554.4 L716.2 552.8 L711.4 551.1 L706.6 549.5 L701.8 547.9 L697.0 546.3 L692.2 544.6 L687.4 543.0 L682.7 541.4 L678.0 539.7 L673.2 538.1 L668.5 536.5 L663.9 534.9 L659.2 533.2 L654.6 531.6 L649.9 530.0 L645.3 528.4 L640.8 526.7 L636.2 525.1 L631.6 523.5 L627.1 521.8 L622.6 520.2 L618.1 518.6 L613.7 517.0 L609.2 515.3 L604.8 513.7 L600.4 512.1 L596.1 510.5 L591.7 508.8 L587.4 507.2 L583.1 505.6 L578.8 504.0 L574.6 502.3 L570.3 500.7 L566.1 499.1 L562.0 497.4 L557.8 495.8 L553.7 494.2 L549.6 492.6 L545.5 490.9 L541.5 489.3 L537.5 487.7 L533.5 486.1 L529.5 484.4 L525.6 482.8 L521.7 481.2 L517.8 479.5 L514.0 477.9 L510.2 476.3 L506.4 474.7 L502.6 473.0 L498.9 471.4 L495.2 469.8 L491.6 468.2 L487.9 466.5 L484.3 464.9 L480.8 463.3 L477.2 461.6 L473.7 460.0 L470.3 458.4 L466.8 456.8 L463.4 455.1 L460.1 453.5 L456.7 451.9 L453.4 450.3 L450.1 448.6 L446.9 447.0 L443.7 445.4 L440.5 443.8 L437.4 442.1 L434.3 440.5 L431.3 438.9 L428.2 437.2 L425.3 435.6 L422.3 434.0 L419.4 432.4 L416.5 430.7 L413.7 429.1 L410.9 427.5 L408.1 425.9 L405.4 424.2 L402.7 422.6 L400.0 421.0 L397.4 419.3 L394.9 417.7 L392.3 416.1 L389.8 414.5 L387.4 412.8 L384.9 411.2 L382.6 409.6 L380.2 408.0 L377.9 406.3 L375.7 404.7 L373.4 403.1 L371.3 401.5 L369.1 399.8 L367.0 398.2 L365.0 396.6 L362.9 394.9 L361.0 393.3 L359.0 391.7 L357.1 390.1 L355.3 388.4 L353.5 386.8 L351.7 385.2 L350.0 383.6 L348.3 381.9 L346.6 380.3 L345.0 378.7 L343.5 377.0 L342.0 375.4 L340.5 373.8 L339.1 372.2 L337.7 370.5 L336.3 368.9 L335.0 367.3 L333.8 365.7 L332.6 364.0 L331.4 362.4 L330.3 360.8 L329.2 359.1 L328.1 357.5 L327.1 355.9 L326.2 354.3 L325.3 352.6 L324.4 351.0 L323.6 349.4 L322.8 347.8 L322.1 346.1 L321.4 344.5 L320.7 342.9 L320.1 341.3 L319.6 339.6 L319.1 338.0 L318.6 336.4 L318.2 334.7 L317.8 333.1 L317.5 331.5 L317.2 329.9 L316.9 328.2 L316.7 326.6 L316.6 325.0 L316.5 323.4 L316.4 321.7 L316.4 320.1 L316.4 318.5 L316.5 316.8 L316.6 315.2 L316.7 313.6 L316.9 312.0 L317.2 310.3 L317.5 308.7 L317.8 307.1 L318.2 305.5 L318.6 303.8 L319.1 302.2 L319.6 300.6 L320.1 298.9 L320.7 297.3 L321.4 295.7 L322.1 294.1 L322.8 292.4 L323.6 290.8 L324.4 289.2 L325.3 287.6 L326.2 285.9 L327.1 284.3 L328.1 282.7 L329.2 281.1 L330.3 279.4 L331.4 277.8 L332.6 276.2 L333.8 274.5 L335.0 272.9 L336.3 271.3 L337.7 269.7 L339.1 268.0 L340.5 266.4 L342.0 264.8 L343.5 263.2 L345.0 261.5 L346.6 259.9 L348.3 258.3 L350.0 256.6 L351.7 255.0 L353.5 253.4 L355.3 251.8 L357.1 250.1 L359.0 248.5 L361.0 246.9 L362.9 245.3 L365.0 243.6 L367.0 242.0 L369.1 240.4 L371.3 238.8 L373.4 237.1 L375.7 235.5 L377.9 233.9 L380.2 232.2 L382.6 230.6 L384.9 229.0 L387.4 227.4 L389.8 225.7 L392.3 224.1 L394.9 222.5 L397.4 220.9 L400.0 219.2 L402.7 217.6 L405.4 216.0 L408.1 214.3 L410.9 212.7 L413.7 211.1 L416.5 209.5 L419.4 207.8 L422.3 206.2 L425.3 204.6 L428.2 203.0 L431.3 201.3 L434.3 199.7 L437.4 198.1 L440.5 196.4 L443.7 194.8 L446.9 193.2 L450.1 191.6 L453.4 189.9 L456.7 188.3 L460.1 186.7 L463.4 185.1 L466.8 183.4 L470.3 181.8 L473.7 180.2 L477.2 178.6 L480.8 176.9 L484.3 175.3 L487.9 173.7 L491.6 172.0 L495.2 170.4 L498.9 168.8 L502.6 167.2 L506.4 165.5 L510.2 163.9 L514.0 162.3 L517.8 160.7 L521.7 159.0 L525.6 157.4 L529.5 155.8 L533.5 154.1 L537.5 152.5 L541.5 150.9 L545.5 149.3 L549.6 147.6 L553.7 146.0 L557.8 144.4 L562.0 142.8 L566.1 141.1 L570.3 139.5 L574.6 137.9 L578.8 136.2 L583.1 134.6 L587.4 133.0 L591.7 131.4 L596.1 129.7 L600.4 128.1 L604.8 126.5 L609.2 124.9 L613.7 123.2 L618.1 121.6 L622.6 120.0 L627.1 118.4 L631.6 116.7 L636.2 115.1 L640.8 113.5 L645.3 111.8 L649.9 110.2 L654.6 108.6 L659.2 107.0 L663.9 105.3 L668.5 103.7 L673.2 102.1 L678.0 100.5 L682.7 98.8 L687.4 97.2 L692.2 95.6 L697.0 93.9 L701.8 92.3 L706.6 90.7 L711.4 89.1 L716.2 87.4 L721.1 85.8 L726.0 84.2 L730.9 82.6 L735.7 80.9 L740.7 79.3 L745.6 77.7 L750.5 76.1 L755.4 74.4 L760.4 72.8 L765.4 71.2 L770.3 69.5 L775.3 67.9 L780.3 66.3 L785.3 64.7 L790.3 63.0 L795.4 61.4 L800.4 59.8 L805.4 58.2 L810.5 56.5 L815.5 54.9 L820.6 53.3 L825.6 51.6 L830.7 50.0 L835.8 48.4 L840.9 46.8 L846.0 45.1 L851.1 43.5 L856.1 41.9 L861.2 40.3 L866.3 38.6 L871.4 37.0 L876.6 35.4 L881.7 33.7 L886.8 32.1 L891.9 30.5 L897.0 28.9 L902.1 27.2"/>
</g>
<g fill="#888" font-size="11" text-anchor="middle">
<text x="1488.3" y="329.7">+180<tspan font-size="6" dx="2" dy="-4">°</tspan></text>
<text x="1390.7" y="329.7">+210<tspan font-size="6" dx="2" dy="-4">°</tspan></text>
<text x="1293.1" y="329.7">+240<tspan font-size="6" dx="2" dy="-4">°</tspan></text>
<text x="1195.5" y="329.7">+270<tspan font-size="6" dx="2" dy="-4">°</tspan></text>
<text x="1097.8" y="329.7">+300<tspan font-size="6" dx="2" dy="-4">°</tspan></text>
<text x="1000.2" y="329.7">+330<tspan font-size="6" dx="2" dy="-4">°</tspan></text>
<text x="902.6" y="329.7">+0<tspan font-size="6" dx="2" dy="-4">°</tspan></text>
<text x="805.0" y="329.7">+30<tspan font-size="6" dx="2" dy="-4">°</tspan></text>
<text x="707.4" y="329.7">+60<tspan font-size="6" dx="2" dy="-4">°</tspan></text>
<text x="609.7" y="329.7">+90<tspan font-size="6" dx="2" dy="-4">°</tspan></text>
<text x="512.1" y="329.7">+120<tspan font-size="6" dx="2" dy="-4">°</tspan></text>
<text x="414.5" y="329.7">+150<tspan font-size="6" dx="2" dy="-4">°</tspan></text>
<text x="316.9" y="329.7">+180<tspan font-size="6" dx="2" dy="-4">°</tspan></text>
<text x="902.6" y="26.0">+90<tspan font-size="6" dx="2" dy="-4">°</tspan></text>
<text x="902.6" y="123.7">+60<tspan font-size="6" dx="2" dy="-4">°</tspan></text>
<text x="902.6" y="221.3">+30<tspan font-size="6" dx="2" dy="-4">°</tspan></text>
<text x="902.6" y="428.5">−30<tspan font-size="6" dx="2" dy="-4">°</tspan></text>
<text x="902.6" y="526.1">−60<tspan font-size="6" dx="2" dy="-4">°</tspan></text>
<text x="902.6" y="623.8">−90<tspan font-size="6" dx="2" dy="-4">°</tspan></text>
</g>
<g fill="#fff" font-size="14.02" style="font-family:'Liberation Mono',monospace" xml:space="preserve">
<text x="315.5" y="30.0" style="font-family:'Liberation Mono',monospace">BE0015</text>
<text x="315.5" y="43.1" style="font-family:'Liberation Mono',monospace">Beg: 20251109 17:25:39 (sol = 227.21°)</text>
<text x="315.5" y="56.3" style="font-family:'Liberation Mono',monospace">End: 20251110 01:41:52 (sol = 227.55°)</text>
<text x="315.5" y="69.4" style="font-family:'Liberation Mono',monospace">--------------------------------------</text>
<text x="315.5" y="82.5" style="font-family:'Liberation Mono',monospace">...: 10</text>
<text x="315.5" y="95.7" style="font-family:'Liberation Mono',monospace">STA: 5</text>
<text x="315.5" y="108.8" style="font-family:'Liberation Mono',monospace">LEO: 2</text>
<text x="315.5" y="121.9" style="font-family:'Liberation Mono',monospace">NTA: 2</text>
<text x="315.5" y="135.0" style="font-family:'Liberation Mono',monospace">AND: 1</text>
<text x="315.5" y="148.2" style="font-family:'Liberation Mono',monospace">OER: 1</text>
</g>
<g fill="none" stroke="#585858" stroke-width="1.2" stroke-dasharray="1.2 2.5">
<path d="M813.6 93.5 L811.8 95.2 L810.0 96.8 L808.2 98.4 L806.5 100.0 L804.7 101.6 L802.9 103.2 L801.2 104.8 L799.4 106.4 L797.7 108.0 L795.9 109.7 L794.2 111.3 L792.5 112.9 L790.7 114.5 L789.0 116.1 L787.3 117.7 L785.6 119.4 L783.9 121.0 L782.3 122.6 L780.6 124.2 L778.9 125.8 L777.3 127.4 L775.6 129.1 L774.0 130.7 L772.4 132.3 L770.8 133.9 L769.2 135.5 L767.6 137.1 L766.0 138.8 L764.4 140.4 L762.9 142.0 L761.3 143.6 L759.8 145.2 L758.2 146.9 L756.7 148.5 L755.2 150.1 L753.7 151.7 L752.2 153.4 L750.7 155.0 L749.3 156.6 L747.8 158.2 L746.4 159.8 L744.9 161.5 L743.5 163.1 L742.1 164.7 L740.7 166.3 L739.3 167.9 L737.9 169.6 L736.6 171.2 L735.2 172.8 L733.9 174.4 L732.6 176.1 L731.3 177.7 L730.0 179.3 L728.7 180.9 L727.4 182.5 L726.2 184.2 L724.9 185.8 L723.7 187.4 L722.5 189.0 L721.3 190.7 L720.1 192.3 L718.9 193.9 L717.7 195.5 L716.6 197.2 L715.5 198.8 L714.3 200.4 L713.2 202.0 L712.1 203.6 L711.1 205.3 L710.0 206.9 L709.0 208.5 L707.9 210.1 L706.9 211.8 L705.9 213.4 L704.9 215.0 L703.9 216.6 L703.0 218.3 L702.0 219.9 L701.1 221.5 L700.2 223.1 L699.3 224.8 L698.4 226.4 L697.5 228.0 L696.7 229.6 L695.8 231.3 L695.0 232.9 L694.2 234.5 L693.4 236.1 L692.7 237.7 L691.9 239.4 L691.2 241.0 L690.4 242.6 L689.7 244.2 L689.0 245.9 L688.3 247.5 L687.7 249.1 L687.0 250.7 L686.4 252.4 L685.8 254.0 L685.2 255.6 L684.6 257.2 L684.1 258.9 L683.5 260.5 L683.0 262.1 L682.5 263.7 L682.0 265.4 L681.5 267.0 L681.0 268.6 L680.6 270.2 L680.2 271.9 L679.7 273.5 L679.3 275.1 L679.0 276.7 L678.6 278.4 L678.3 280.0 L677.9 281.6 L677.6 283.2 L677.3 284.9 L677.0 286.5 L676.8 288.1 L676.5 289.7 L676.3 291.4 L676.1 293.0 L675.9 294.6 L675.7 296.2 L675.6 297.8 L675.4 299.5 L675.3 301.1 L675.2 302.7 L675.1 304.3 L675.1 306.0 L675.0 307.6 L675.0 309.2 L675.0 310.8 L674.9 312.5 L675.0 314.1 L675.0 315.7 L675.0 317.3 L675.1 319.0 L675.2 320.6 L675.3 322.2 L675.4 323.8 L675.6 325.5 L675.7 327.1 L675.9 328.7 L676.1 330.3 L676.3 332.0 L676.5 333.6 L676.7 335.2 L677.0 336.8 L677.3 338.5 L677.5 340.1 L677.9 341.7 L678.2 343.3 L678.5 345.0 L678.9 346.6 L679.3 348.2 L679.6 349.8 L680.1 351.5 L680.5 353.1 L680.9 354.7 L681.4 356.3 L681.9 358.0 L682.4 359.6 L682.9 361.2 L683.4 362.8 L683.9 364.5 L684.5 366.1 L685.1 367.7 L685.7 369.3 L686.3 371.0 L686.9 372.6 L687.5 374.2 L688.2 375.8 L688.9 377.5 L689.6 379.1 L690.3 380.7 L691.0 382.3 L691.7 384.0 L692.5 385.6 L693.2 387.2 L694.0 388.8 L694.8 390.4 L695.7 392.1 L696.5 393.7 L697.3 395.3 L698.2 396.9 L699.1 398.6 L700.0 400.2 L700.9 401.8 L701.8 403.4 L702.8 405.1 L703.7 406.7 L704.7 408.3 L705.7 409.9 L706.7 411.6 L707.7 413.2 L708.7 414.8 L709.8 416.4 L710.8 418.1 L711.9 419.7 L713.0 421.3 L714.1 422.9 L715.2 424.6 L716.3 426.2 L717.5 427.8 L718.6 429.4 L719.8 431.0 L721.0 432.7 L722.2 434.3 L723.4 435.9 L724.6 437.5 L725.9 439.2 L727.1 440.8 L728.4 442.4"/>
<path d="M967.7 150.4 L966.3 149.0 L964.9 147.5 L963.4 146.1 L962.0 144.7 L960.6 143.3 L959.2 141.9 L957.7 140.5 L956.3 139.1 L954.9 137.7 L953.5 136.3 L952.0 134.9 L950.6 133.5 L949.2 132.2 L947.7 130.8 L946.3 129.4 L944.9 128.1 L943.4 126.7 L942.0 125.4 L940.6 124.1 L939.2 122.8 L937.7 121.5 L936.3 120.2 L934.9 118.9 L933.5 117.6 L932.1 116.3 L930.6 115.1 L929.2 113.8 L927.8 112.6 L926.4 111.4 L925.0 110.1 L923.6 108.9 L922.2 107.8 L920.8 106.6 L919.4 105.4 L918.0 104.3 L916.6 103.2 L915.2 102.1 L913.9 101.0 L912.5 99.9 L911.1 98.9 L909.7 97.9 L908.3 96.9 L907.0 95.9 L905.6 94.9 L904.2 94.0 L902.8 93.1 L901.5 92.2 L900.1 91.4 L898.7 90.6 L897.4 89.8 L896.0 89.0 L894.6 88.3 L893.2 87.6 L891.8 86.9 L890.4 86.3 L889.0 85.7 L887.6 85.2 L886.2 84.7 L884.8 84.2 L883.3 83.8 L881.9 83.4 L880.4 83.1 L878.9 82.8 L877.4 82.5 L875.9 82.3 L874.4 82.2 L872.8 82.1 L871.2 82.0 L869.6 82.0 L867.9 82.0 L866.3 82.1 L864.6 82.2 L862.8 82.4 L861.1 82.6 L859.3 82.9 L857.4 83.2 L855.6 83.5 L853.7 83.9 L851.7 84.4 L849.8 84.8 L847.8 85.4 L845.7 85.9 L843.6 86.5 L841.5 87.1 L839.4 87.8 L837.2 88.5 L835.0 89.3 L832.8 90.0 L830.5 90.8 L828.2 91.7 L825.8 92.5 L823.5 93.4 L821.1 94.3 L818.7 95.2 L816.2 96.2 L813.7 97.2 L811.2 98.2 L808.7 99.2 L806.2 100.3 L803.6 101.4 L801.0 102.4 L798.4 103.6 L795.8 104.7 L793.2 105.8 L790.5 107.0 L787.8 108.2 L785.1 109.3 L782.4 110.5 L779.7 111.8 L777.0 113.0 L774.3 114.2 L771.5 115.5 L768.8 116.7 L766.0 118.0 L763.2 119.3 L760.4 120.6 L757.6 121.9 L754.9 123.2 L752.1 124.5 L749.3 125.9 L746.5 127.2 L743.6 128.5 L740.8 129.9 L738.0 131.2 L735.2 132.6 L732.4 134.0 L729.6 135.4 L726.8 136.7 L724.0 138.1 L721.2 139.5 L718.4 140.9 L715.6 142.3 L712.8 143.7 L710.0 145.2 L707.2 146.6 L704.4 148.0 L701.6 149.4 L698.8 150.9 L696.1 152.3 L693.3 153.8 L690.6 155.2 L687.8 156.6 L685.1 158.1 L682.4 159.6 L679.6 161.0 L676.9 162.5 L674.2 163.9 L671.5 165.4 L668.9 166.9 L666.2 168.4 L663.5 169.8 L660.9 171.3 L658.3 172.8 L655.6 174.3 L653.0 175.8 L650.4 177.3 L647.9 178.7 L645.3 180.2 L642.7 181.7 L640.2 183.2 L637.7 184.7 L635.2 186.2 L632.7 187.7 L630.2 189.2 L627.7 190.7 L625.3 192.3 L622.8 193.8 L620.4 195.3 L618.0 196.8 L615.6 198.3 L613.3 199.8 L610.9 201.3 L608.6 202.9 L606.3 204.4 L604.0 205.9 L601.7 207.4 L599.4 208.9 L597.2 210.5 L595.0 212.0 L592.8 213.5 L590.6 215.0 L588.4 216.6 L586.3 218.1 L584.2 219.6 L582.1 221.2 L580.0 222.7 L577.9 224.2 L575.9 225.8 L573.9 227.3 L571.9 228.8 L569.9 230.4 L568.0 231.9 L566.0 233.5 L564.1 235.0 L562.3 236.5 L560.4 238.1 L558.6 239.6 L556.7 241.2 L554.9 242.7 L553.2 244.3 L551.4 245.8 L549.7 247.3 L548.0 248.9 L546.3 250.4 L544.7 252.0 L543.1 253.5 L541.5 255.1 L539.9 256.6 L538.3 258.2 L536.8 259.7 L535.3 261.3 L533.8 262.8 L532.4 264.4 L530.9 265.9 L529.5 267.5 L528.2 269.0 L526.8 270.6 L525.5 272.1 L524.2 273.7 L522.9 275.2 L521.7 276.8 L520.4 278.3 L519.2 279.9 L518.1 281.4 L516.9 283.0 L515.8 284.6 L514.7 286.1 L513.7 287.7 L512.6 289.2 L511.6 290.8 L510.7 292.3 L509.7 293.9 L508.8 295.4 L507.9 297.0 L507.0 298.6 L506.2 300.1 L505.4 301.7 L504.6 303.2 L503.8 304.8 L503.1 306.3 L502.4 307.9 L501.7 309.5 L501.0 311.0 L500.4 312.6 L499.8 314.1 L499.3 315.7 L498.7 317.2 L498.2 318.8 L497.7 320.4 L497.3 321.9 L496.9 323.5 L496.5 325.0 L496.1 326.6 L495.8 328.1 L495.4 329.7 L495.2 331.3 L494.9 332.8 L494.7 334.4 L494.5 335.9 L494.3 337.5 L494.2 339.0 L494.1 340.6 L494.0 342.2 L493.9 343.7 L493.9 345.3 L493.9 346.8 L493.9 348.4 L494.0 349.9 L494.1 351.5 L494.2 353.0 L494.3 354.6 L494.5 356.2 L494.7 357.7 L494.9 359.3 L495.2 360.8 L495.5 362.4 L495.8 363.9 L496.1 365.5 L496.5 367.0 L496.9 368.6 L497.3 370.1 L497.8 371.7 L498.3 373.2 L498.8 374.8 L499.3 376.3 L499.9 377.9 L500.4 379.4 L501.1 381.0 L501.7 382.5 L502.4 384.1 L503.1 385.6 L503.8 387.2 L504.6 388.7 L505.3 390.3 L506.2 391.8 L507.0 393.4 L507.8 394.9 L508.7 396.5 L509.6 398.0 L510.6 399.5 L511.6 401.1 L512.5 402.6 L513.6 404.2 L514.6 405.7 L515.7 407.2 L516.8 408.8 L517.9 410.3 L519.0 411.9 L520.2 413.4 L521.4 414.9 L522.6 416.5 L523.9 418.0 L525.1 419.5 L526.4 421.1 L527.8 422.6 L529.1 424.1 L530.5 425.7 L531.9 427.2 L533.3 428.7 L534.7 430.2 L536.2 431.8 L537.7 433.3 L539.2 434.8 L540.7 436.3 L542.2 437.8 L543.8 439.4"/>
<path d="M1021.1 96.7 L1019.2 95.2 L1017.3 93.7 L1015.5 92.2 L1013.6 90.7 L1011.7 89.2 L1009.9 87.7 L1008.0 86.2 L1006.2 84.8 L1004.3 83.3 L1002.5 81.9 L1000.7 80.4 L998.8 79.0 L997.1 77.6 L995.3 76.2 L993.5 74.8 L991.8 73.4 L990.1 72.1 L988.4 70.7 L986.8 69.4 L985.2 68.1 L983.6 66.8 L982.1 65.6 L980.7 64.4 L979.3 63.2 L978.0 62.0 L976.7 60.9 L975.6 59.8 L974.6 58.8 L973.6 57.8 L972.8 56.9 L972.2 56.1 L971.7 55.3 L971.4 54.6 L971.3 53.9 L971.4 53.4 L971.8 52.9 L972.4 52.6 L973.3 52.3 L974.4 52.2 L975.9 52.1 L977.7 52.2 L979.8 52.3M823.4 52.6 L823.8 53.0 L824.0 53.4 L824.0 54.0 L823.6 54.6 L823.1 55.3 L822.3 56.1 L821.4 57.0 L820.3 57.9 L819.0 58.9 L817.6 59.9 L816.1 61.0 L814.5 62.1 L812.8 63.2 L811.1 64.4 L809.2 65.6 L807.3 66.9 L805.3 68.2 L803.3 69.5 L801.2 70.8 L799.1 72.1 L797.0 73.5 L794.8 74.8 L792.6 76.2 L790.3 77.6 L788.1 79.1 L785.8 80.5 L783.5 81.9 L781.2 83.4 L778.9 84.8 L776.6 86.3 L774.3 87.8 L771.9 89.3 L769.6 90.7 L767.2 92.2 L764.9 93.7 L762.5 95.3 L760.2 96.8 L757.8 98.3 L755.5 99.8 L753.1 101.3 L750.8 102.9 L748.5 104.4 L746.1 105.9 L743.8 107.5 L741.4 109.0 L739.1 110.6 L736.8 112.1 L734.5 113.7 L732.2 115.2 L729.9 116.8 L727.6 118.3 L725.3 119.9 L723.0 121.5 L720.8 123.0 L718.5 124.6 L716.3 126.2 L714.0 127.7 L711.8 129.3 L709.6 130.9 L707.4 132.4 L705.2 134.0 L703.0 135.6 L700.9 137.2 L698.7 138.8 L696.6 140.3 L694.5 141.9 L692.3 143.5 L690.2 145.1 L688.2 146.7 L686.1 148.3 L684.0 149.9 L682.0 151.4 L680.0 153.0 L677.9 154.6 L675.9 156.2 L674.0 157.8 L672.0 159.4 L670.0 161.0 L668.1 162.6 L666.2 164.2 L664.3 165.8 L662.4 167.4 L660.5 169.0 L658.7 170.6 L656.8 172.2 L655.0 173.8 L653.2 175.4 L651.4 177.0 L649.7 178.6 L647.9 180.2 L646.2 181.8 L644.5 183.4 L642.8 185.0 L641.1 186.6 L639.5 188.2 L637.8 189.8 L636.2 191.4 L634.6 193.0 L633.0 194.6 L631.5 196.2 L629.9 197.8 L628.4 199.4 L626.9 201.0 L625.4 202.6 L624.0 204.2 L622.5 205.8 L621.1 207.4 L619.7 209.0 L618.3 210.6 L617.0 212.2 L615.6 213.8 L614.3 215.4 L613.0 217.0 L611.8 218.6 L610.5 220.3 L609.3 221.9 L608.1 223.5 L606.9 225.1 L605.7 226.7 L604.6 228.3 L603.5 229.9 L602.4 231.5 L601.3 233.1 L600.2 234.7 L599.2 236.3 L598.2 237.9 L597.2 239.6 L596.3 241.2 L595.3 242.8 L594.4 244.4 L593.5 246.0 L592.6 247.6 L591.8 249.2 L590.9 250.8 L590.1 252.4 L589.4 254.0 L588.6 255.7 L587.9 257.3 L587.2 258.9 L586.5 260.5 L585.8 262.1 L585.2 263.7 L584.6 265.3 L584.0 266.9 L583.4 268.5 L582.9 270.2 L582.3 271.8 L581.8 273.4 L581.4 275.0 L580.9 276.6 L580.5 278.2 L580.1 279.8 L579.7 281.4 L579.4 283.1 L579.0 284.7 L578.7 286.3 L578.4 287.9 L578.2 289.5 L578.0 291.1 L577.7 292.7 L577.6 294.3 L577.4 295.9 L577.3 297.6 L577.2 299.2 L577.1 300.8 L577.0 302.4 L577.0 304.0 L577.0 305.6 L577.0 307.2 L577.0 308.8 L577.1 310.5 L577.1 312.1 L577.2 313.7 L577.4 315.3 L577.5 316.9 L577.7 318.5 L577.9 320.1 L578.2 321.7 L578.4 323.4 L578.7 325.0 L579.0 326.6 L579.3 328.2 L579.7 329.8 L580.0 331.4 L580.4 333.0 L580.9 334.6 L581.3 336.3 L581.8 337.9 L582.3 339.5 L582.8 341.1 L583.3 342.7 L583.9 344.3 L584.5 345.9 L585.1 347.5 L585.7 349.2 L586.4 350.8 L587.1 352.4 L587.8 354.0 L588.5 355.6 L589.3 357.2 L590.1 358.8 L590.9 360.4 L591.7 362.1 L592.5 363.7 L593.4 365.3 L594.3 366.9 L595.2 368.5 L596.1 370.1 L597.1 371.7 L598.1 373.3 L599.1 374.9 L600.1 376.6 L601.2 378.2 L602.3 379.8 L603.4 381.4 L604.5 383.0 L605.6 384.6 L606.8 386.2 L608.0 387.8 L609.2 389.4 L610.4 391.1 L611.7 392.7 L612.9 394.3 L614.2 395.9 L615.6 397.5 L616.9 399.1 L618.2 400.7 L619.6 402.3 L621.0 403.9 L622.5 405.5 L623.9 407.1 L625.4 408.8 L626.8 410.4 L628.3 412.0 L629.9 413.6 L631.4 415.2 L633.0 416.8 L634.6 418.4 L636.2 420.0 L637.8 421.6 L639.4 423.2 L641.1 424.8 L642.8 426.4 L644.5 428.0 L646.2 429.7 L647.9 431.3 L649.7 432.9 L651.5 434.5 L653.3 436.1 L655.1 437.7 L656.9 439.3"/>
<path d="M1051.7 100.0 L1048.5 98.4 L1045.3 96.7 L1042.1 95.1 L1038.9 93.5 L1035.7 91.9 L1032.5 90.2 L1029.3 88.6 L1026.0 87.0 L1022.8 85.4 L1019.5 83.7 L1016.2 82.1 L1012.9 80.5 L1009.7 78.8 L1006.4 77.2 L1003.0 75.6 L999.7 74.0 L996.4 72.3 L993.1 70.7 L989.7 69.1 L986.4 67.5 L983.1 65.8 L979.7 64.2 L976.3 62.6 L973.0 61.0 L969.6 59.3 L966.2 57.7 L962.8 56.1 L959.5 54.4 L956.1 52.8 L952.7 51.2 L949.3 49.6 L945.9 47.9 L942.5 46.3 L939.1 44.7 L935.6 43.1 L932.2 41.4 L928.8 39.8 L925.4 38.2 L922.0 36.6 L918.6 34.9 L915.1 33.3 L911.7 31.7 L908.3 30.1 L904.9 28.4M901.2 27.8 L899.6 29.3 L898.0 31.0 L896.3 32.6 L894.6 34.2 L892.9 35.8 L891.2 37.5 L889.5 39.1 L887.9 40.7 L886.2 42.3 L884.5 44.0 L882.8 45.6 L881.2 47.2 L879.5 48.8 L877.8 50.5 L876.1 52.1 L874.5 53.7 L872.8 55.4 L871.1 57.0 L869.5 58.6 L867.8 60.2 L866.2 61.9 L864.5 63.5 L862.8 65.1 L861.2 66.7 L859.6 68.4 L857.9 70.0 L856.3 71.6 L854.6 73.3 L853.0 74.9 L851.4 76.5 L849.7 78.1 L848.1 79.8 L846.5 81.4 L844.9 83.0 L843.3 84.6 L841.7 86.3 L840.1 87.9 L838.5 89.5 L836.9 91.1 L835.3 92.8 L833.7 94.4 L832.2 96.0 L830.6 97.7 L829.0 99.3 L827.5 100.9 L825.9 102.5 L824.4 104.2 L822.8 105.8 L821.3 107.4 L819.8 109.0 L818.3 110.7 L816.7 112.3 L815.2 113.9 L813.7 115.6 L812.2 117.2 L810.7 118.8 L809.3 120.4 L807.8 122.1 L806.3 123.7 L804.9 125.3 L803.4 126.9 L802.0 128.6 L800.5 130.2 L799.1 131.8 L797.7 133.5 L796.3 135.1 L794.9 136.7 L793.5 138.3 L792.1 140.0 L790.7 141.6 L789.3 143.2 L787.9 144.8 L786.6 146.5 L785.2 148.1 L783.9 149.7 L782.6 151.3 L781.3 153.0 L779.9 154.6 L778.6 156.2 L777.4 157.9 L776.1 159.5 L774.8 161.1 L773.5 162.7 L772.3 164.4 L771.0 166.0 L769.8 167.6 L768.6 169.2 L767.4 170.9 L766.2 172.5 L765.0 174.1 L763.8 175.8 L762.6 177.4 L761.5 179.0 L760.3 180.6 L759.2 182.3 L758.0 183.9 L756.9 185.5 L755.8 187.1 L754.7 188.8 L753.6 190.4 L752.6 192.0 L751.5 193.6 L750.5 195.3 L749.4 196.9 L748.4 198.5 L747.4 200.2 L746.4 201.8 L745.4 203.4 L744.4 205.0 L743.4 206.7 L742.5 208.3 L741.5 209.9 L740.6 211.5 L739.7 213.2 L738.8 214.8 L737.9 216.4 L737.0 218.1 L736.1 219.7 L735.3 221.3 L734.4 222.9 L733.6 224.6 L732.8 226.2 L732.0 227.8 L731.2 229.4 L730.4 231.1 L729.6 232.7 L728.9 234.3 L728.1 236.0 L727.4 237.6 L726.7 239.2 L726.0 240.8 L725.3 242.5 L724.6 244.1 L724.0 245.7 L723.3 247.3 L722.7 249.0 L722.1 250.6 L721.5 252.2 L720.9 253.8 L720.3 255.5 L719.8 257.1 L719.2 258.7 L718.7 260.4 L718.2 262.0 L717.6 263.6 L717.1 265.2 L716.7 266.9 L716.2 268.5 L715.8 270.1 L715.3 271.7 L714.9 273.4 L714.5 275.0 L714.1 276.6 L713.7 278.3 L713.3 279.9 L713.0 281.5 L712.7 283.1 L712.3 284.8 L712.0 286.4 L711.7 288.0 L711.5 289.6 L711.2 291.3 L710.9 292.9 L710.7 294.5 L710.5 296.2 L710.3 297.8 L710.1 299.4 L709.9 301.0 L709.7 302.7 L709.6 304.3 L709.5 305.9 L709.3 307.5 L709.2 309.2 L709.2 310.8 L709.1 312.4 L709.0 314.0 L709.0 315.7 L708.9 317.3 L708.9 318.9 L708.9 320.6 L708.9 322.2 L709.0 323.8 L709.0 325.4 L709.1 327.1 L709.1 328.7 L709.2 330.3 L709.3 331.9 L709.5 333.6 L709.6 335.2 L709.7 336.8 L709.9 338.5 L710.1 340.1 L710.3 341.7 L710.5 343.3 L710.7 345.0 L710.9 346.6 L711.2 348.2 L711.4 349.8 L711.7 351.5 L712.0 353.1 L712.3 354.7 L712.6 356.3 L713.0 358.0 L713.3 359.6 L713.7 361.2 L714.1 362.9 L714.4 364.5 L714.9 366.1 L715.3 367.7 L715.7 369.4 L716.2 371.0 L716.6 372.6 L717.1 374.2 L717.6 375.9 L718.1 377.5 L718.6 379.1 L719.2 380.8 L719.7 382.4 L720.3 384.0 L720.8 385.6 L721.4 387.3 L722.0 388.9 L722.6 390.5 L723.3 392.1 L723.9 393.8 L724.6 395.4 L725.3 397.0 L725.9 398.7 L726.6 400.3 L727.3 401.9 L728.1 403.5 L728.8 405.2 L729.6 406.8 L730.3 408.4 L731.1 410.0 L731.9 411.7 L732.7 413.3 L733.5 414.9 L734.3 416.5 L735.2 418.2 L736.0 419.8 L736.9 421.4 L737.8 423.1 L738.7 424.7 L739.6 426.3 L740.5 427.9 L741.4 429.6 L742.4 431.2 L743.3 432.8 L744.3 434.4 L745.3 436.1 L746.3 437.7 L747.3 439.3"/>
<path d="M1073.9 100.8 L1071.7 100.5 L1069.5 100.2 L1067.4 100.0 L1065.4 99.8 L1063.4 99.7 L1061.5 99.6 L1059.7 99.5 L1058.0 99.4 L1056.3 99.4 L1054.7 99.4 L1053.2 99.5 L1051.8 99.6 L1050.4 99.7 L1049.0 99.8 L1047.8 100.0 L1046.6 100.2 L1045.5 100.5 L1044.4 100.8 L1043.4 101.1 L1042.5 101.5 L1041.6 101.9 L1040.7 102.3 L1040.0 102.7 L1039.2 103.2 L1038.5 103.7 L1037.9 104.3 L1037.3 104.8 L1036.8 105.4 L1036.3 106.0 L1035.8 106.7 L1035.4 107.4 L1035.0 108.1 L1034.7 108.8 L1034.4 109.6 L1034.1 110.3 L1033.9 111.1 L1033.6 111.9 L1033.5 112.8 L1033.3 113.6 L1033.2 114.5 L1033.1 115.4 L1033.0 116.3 L1032.9 117.3 L1032.9 118.2 L1032.8 119.2 L1032.8 120.2 L1032.8 121.2 L1032.9 122.2 L1032.9 123.3 L1033.0 124.3 L1033.0 125.4 L1033.1 126.5 L1033.2 127.6 L1033.3 128.7 L1033.4 129.8 L1033.6 130.9 L1033.7 132.1 L1033.8 133.2 L1034.0 134.4 L1034.1 135.6 L1034.3 136.8 L1034.4 138.0 L1034.6 139.2 L1034.8 140.4 L1035.0 141.6 L1035.1 142.8 L1035.3 144.1 L1035.5 145.3 L1035.7 146.6 L1035.9 147.8 L1036.1 149.1 L1036.2 150.4 L1036.4 151.7 L1036.6 153.0 L1036.8 154.3 L1037.0 155.6 L1037.2 156.9 L1037.3 158.2 L1037.5 159.5 L1037.7 160.9 L1037.9 162.2 L1038.1 163.5 L1038.2 164.9 L1038.4 166.2 L1038.6 167.6 L1038.7 168.9 L1038.9 170.3 L1039.0 171.7 L1039.2 173.0 L1039.3 174.4 L1039.5 175.8 L1039.6 177.2 L1039.7 178.6 L1039.8 180.0 L1040.0 181.4 L1040.1 182.8 L1040.2 184.2 L1040.3 185.6 L1040.4 187.0 L1040.5 188.4 L1040.6 189.8 L1040.6 191.2 L1040.7 192.6 L1040.8 194.1 L1040.8 195.5 L1040.9 196.9 L1040.9 198.3 L1041.0 199.8 L1041.0 201.2 L1041.0 202.6 L1041.0 204.1 L1041.1 205.5 L1041.1 207.0 L1041.1 208.4 L1041.0 209.9 L1041.0 211.3 L1041.0 212.8 L1041.0 214.2 L1040.9 215.7 L1040.9 217.1 L1040.8 218.6 L1040.8 220.1 L1040.7 221.5 L1040.6 223.0 L1040.5 224.4 L1040.4 225.9 L1040.3 227.4 L1040.2 228.8 L1040.1 230.3 L1040.0 231.8 L1039.8 233.3 L1039.7 234.7 L1039.5 236.2 L1039.4 237.7 L1039.2 239.2 L1039.0 240.7 L1038.8 242.1 L1038.6 243.6 L1038.4 245.1 L1038.2 246.6 L1038.0 248.1 L1037.8 249.6 L1037.6 251.0 L1037.3 252.5 L1037.1 254.0 L1036.8 255.5 L1036.5 257.0 L1036.3 258.5 L1036.0 260.0 L1035.7 261.5 L1035.4 263.0 L1035.1 264.5 L1034.7 266.0 L1034.4 267.5 L1034.1 269.0 L1033.7 270.5 L1033.4 272.0 L1033.0 273.4 L1032.7 274.9 L1032.3 276.4 L1031.9 277.9 L1031.5 279.4 L1031.1 280.9 L1030.7 282.4 L1030.3 283.9 L1029.8 285.5 L1029.4 287.0 L1029.0 288.5 L1028.5 290.0 L1028.0 291.5 L1027.6 293.0 L1027.1 294.5 L1026.6 296.0 L1026.1 297.5 L1025.6 299.0 L1025.1 300.5 L1024.6 302.0 L1024.1 303.5 L1023.5 305.0 L1023.0 306.5 L1022.5 308.0 L1021.9 309.5 L1021.3 311.0 L1020.8 312.5 L1020.2 314.0 L1019.6 315.6 L1019.0 317.1 L1018.4 318.6 L1017.8 320.1 L1017.2 321.6 L1016.5 323.1 L1015.9 324.6 L1015.3 326.1 L1014.6 327.6 L1014.0 329.1 L1013.3 330.6 L1012.6 332.1 L1012.0 333.6 L1011.3 335.1 L1010.6 336.6 L1009.9 338.1 L1009.2 339.7 L1008.5 341.2 L1007.8 342.7 L1007.0 344.2 L1006.3 345.7 L1005.6 347.2 L1004.8 348.7 L1004.1 350.2 L1003.3 351.7 L1002.5 353.2 L1001.8 354.7 L1001.0 356.2 L1000.2 357.7 L999.4 359.2 L998.6 360.7 L997.8 362.2 L997.0 363.7 L996.2 365.2 L995.4 366.7 L994.5 368.2 L993.7 369.7 L992.9 371.2 L992.0 372.7 L991.2 374.2 L990.3 375.7 L989.4 377.2 L988.6 378.7 L987.7 380.2 L986.8 381.6 L985.9 383.1 L985.0 384.6 L984.1 386.1 L983.2 387.6 L982.3 389.1 L981.4 390.6 L980.5 392.1 L979.6 393.6 L978.7 395.0 L977.7 396.5 L976.8 398.0 L975.9 399.5 L974.9 401.0 L974.0 402.4 L973.0 403.9 L972.1 405.4 L971.1 406.9 L970.2 408.4 L969.2 409.8 L968.2 411.3 L967.2 412.8 L966.3 414.2 L965.3 415.7 L964.3 417.2 L963.3 418.6 L962.3 420.1 L961.3 421.6 L960.3 423.0 L959.3 424.5 L958.3 425.9 L957.3 427.4 L956.3 428.8 L955.3 430.3 L954.2 431.7 L953.2 433.2 L952.2 434.6 L951.2 436.1 L950.2 437.5 L949.1 438.9 L948.1 440.4"/>
<path d="M1121.7 100.0 L1121.8 99.5 L1121.9 99.0M684.9 98.6 L687.7 98.1 L690.4 97.8 L693.0 97.4 L695.5 97.1 L697.8 96.8 L700.1 96.6 L702.3 96.4 L704.4 96.2 L706.4 96.1 L708.3 96.0 L710.1 95.9 L711.8 95.9 L713.4 95.9 L714.9 95.9 L716.3 96.0 L717.6 96.1 L718.8 96.3 L720.0 96.5 L721.0 96.7 L722.0 97.0 L722.8 97.3 L723.6 97.6 L724.3 98.0 L724.9 98.4 L725.5 98.8 L725.9 99.3 L726.3 99.8 L726.6 100.3 L726.9 100.9 L727.1 101.5 L727.2 102.1 L727.3 102.7 L727.3 103.4 L727.3 104.1 L727.2 104.8 L727.0 105.6 L726.8 106.4 L726.6 107.2 L726.3 108.0 L725.9 108.8 L725.5 109.7 L725.1 110.6 L724.7 111.5 L724.2 112.5 L723.7 113.4 L723.1 114.4 L722.6 115.4 L722.0 116.4 L721.3 117.4 L720.7 118.4 L720.0 119.5 L719.3 120.5 L718.6 121.6 L717.8 122.7 L717.1 123.8 L716.3 125.0 L715.5 126.1 L714.7 127.3 L713.9 128.4 L713.1 129.6 L712.2 130.8 L711.4 132.0 L710.5 133.2 L709.7 134.4 L708.8 135.6 L707.9 136.8 L707.0 138.1 L706.2 139.3 L705.3 140.6 L704.4 141.9 L703.5 143.1 L702.6 144.4 L701.7 145.7 L700.8 147.0 L699.9 148.3 L699.0 149.6 L698.1 150.9 L697.2 152.3 L696.3 153.6 L695.4 154.9 L694.5 156.3 L693.6 157.6 L692.7 159.0 L691.9 160.3 L691.0 161.7 L690.1 163.1 L689.3 164.4 L688.4 165.8 L687.6 167.2 L686.7 168.6 L685.9 170.0 L685.0 171.3 L684.2 172.7 L683.4 174.1 L682.6 175.5 L681.8 177.0 L681.0 178.4 L680.2 179.8 L679.5 181.2 L678.7 182.6 L678.0 184.0 L677.2 185.5 L676.5 186.9 L675.8 188.3 L675.1 189.8 L674.4 191.2 L673.7 192.6 L673.0 194.1 L672.3 195.5 L671.7 197.0 L671.0 198.4 L670.4 199.9 L669.8 201.3 L669.2 202.8 L668.6 204.2 L668.0 205.7 L667.4 207.2 L666.9 208.6 L666.3 210.1 L665.8 211.6 L665.3 213.0 L664.8 214.5 L664.3 216.0 L663.8 217.4 L663.3 218.9 L662.9 220.4 L662.4 221.9 L662.0 223.4 L661.6 224.8 L661.2 226.3 L660.8 227.8 L660.5 229.3 L660.1 230.8 L659.8 232.3 L659.5 233.8 L659.2 235.2 L658.9 236.7 L658.6 238.2 L658.3 239.7 L658.1 241.2 L657.9 242.7 L657.6 244.2 L657.4 245.7 L657.3 247.2 L657.1 248.7 L656.9 250.2 L656.8 251.7 L656.7 253.2 L656.6 254.7 L656.5 256.2 L656.4 257.7 L656.3 259.2 L656.3 260.7 L656.2 262.2 L656.2 263.7 L656.2 265.2 L656.3 266.8 L656.3 268.3 L656.3 269.8 L656.4 271.3 L656.5 272.8 L656.6 274.3 L656.7 275.8 L656.8 277.3 L657.0 278.8 L657.1 280.4 L657.3 281.9 L657.5 283.4 L657.7 284.9 L657.9 286.4 L658.2 287.9 L658.4 289.4 L658.7 290.9 L659.0 292.5 L659.3 294.0 L659.6 295.5 L659.9 297.0 L660.3 298.5 L660.7 300.0 L661.1 301.6 L661.5 303.1 L661.9 304.6 L662.3 306.1 L662.8 307.6 L663.2 309.1 L663.7 310.7 L664.2 312.2 L664.7 313.7 L665.2 315.2 L665.8 316.7 L666.3 318.3 L666.9 319.8 L667.5 321.3 L668.1 322.8 L668.7 324.3 L669.4 325.8 L670.0 327.4 L670.7 328.9 L671.4 330.4 L672.1 331.9 L672.8 333.4 L673.5 335.0 L674.2 336.5 L675.0 338.0 L675.8 339.5 L676.6 341.0 L677.4 342.5 L678.2 344.1 L679.0 345.6 L679.9 347.1 L680.7 348.6 L681.6 350.1 L682.5 351.6 L683.4 353.1 L684.3 354.7 L685.3 356.2 L686.2 357.7 L687.2 359.2 L688.1 360.7 L689.1 362.2 L690.1 363.7 L691.2 365.2 L692.2 366.8 L693.2 368.3 L694.3 369.8 L695.4 371.3 L696.5 372.8 L697.6 374.3 L698.7 375.8 L699.8 377.3 L700.9 378.8 L702.1 380.3 L703.2 381.8 L704.4 383.3 L705.6 384.8 L706.8 386.3 L708.0 387.8 L709.3 389.3 L710.5 390.9 L711.7 392.3 L713.0 393.8 L714.3 395.3 L715.6 396.8 L716.9 398.3 L718.2 399.8 L719.5 401.3 L720.8 402.8 L722.2 404.3 L723.5 405.8 L724.9 407.3 L726.3 408.8 L727.7 410.3 L729.1 411.8 L730.5 413.2 L731.9 414.7 L733.3 416.2 L734.7 417.7 L736.2 419.2 L737.6 420.6 L739.1 422.1 L740.6 423.6 L742.1 425.1 L743.6 426.5 L745.1 428.0 L746.6 429.5 L748.1 430.9 L749.6 432.4 L751.2 433.9 L752.7 435.3 L754.3 436.8 L755.8 438.2 L757.4 439.7"/>
<path d="M1177.3 147.9 L1174.0 146.8 L1170.6 145.8 L1167.3 144.7 L1164.0 143.6 L1160.7 142.5 L1157.4 141.5 L1154.1 140.5 L1150.9 139.4 L1147.7 138.4 L1144.4 137.4 L1141.2 136.4 L1138.1 135.5 L1134.9 134.5 L1131.8 133.6 L1128.6 132.7 L1125.6 131.7 L1122.5 130.8 L1119.4 130.0 L1116.4 129.1 L1113.4 128.3 L1110.5 127.4 L1107.6 126.6 L1104.7 125.8 L1101.8 125.0 L1099.0 124.3 L1096.1 123.6 L1093.4 122.8 L1090.6 122.1 L1087.9 121.5 L1085.3 120.8 L1082.7 120.2 L1080.1 119.6 L1077.5 119.0 L1075.0 118.4 L1072.5 117.9 L1070.1 117.4 L1067.7 116.9 L1065.4 116.4 L1063.0 116.0 L1060.8 115.6 L1058.6 115.2 L1056.4 114.8 L1054.2 114.5 L1052.1 114.2 L1050.1 113.9 L1048.1 113.6 L1046.1 113.4 L1044.2 113.2 L1042.3 113.0 L1040.5 112.9 L1038.7 112.8 L1036.9 112.7 L1035.2 112.6 L1033.6 112.6 L1031.9 112.6 L1030.4 112.6 L1028.8 112.7 L1027.3 112.8 L1025.8 112.9 L1024.4 113.0 L1023.0 113.2 L1021.7 113.4 L1020.4 113.6 L1019.1 113.9 L1017.8 114.2 L1016.6 114.5 L1015.4 114.8 L1014.3 115.2 L1013.2 115.6 L1012.1 116.0 L1011.0 116.4 L1010.0 116.9 L1009.0 117.4 L1008.0 117.9 L1007.0 118.5 L1006.1 119.0 L1005.2 119.6 L1004.3 120.2 L1003.4 120.9 L1002.6 121.5 L1001.8 122.2 L1000.9 122.9 L1000.2 123.6 L999.4 124.4 L998.6 125.1 L997.9 125.9 L997.2 126.7 L996.4 127.5 L995.7 128.3 L995.1 129.2 L994.4 130.0 L993.7 130.9 L993.1 131.8 L992.4 132.7 L991.8 133.7 L991.2 134.6 L990.5 135.6 L989.9 136.5 L989.3 137.5 L988.7 138.5 L988.1 139.5 L987.6 140.6 L987.0 141.6 L986.4 142.6 L985.8 143.7 L985.3 144.8 L984.7 145.9 L984.2 146.9 L983.6 148.0 L983.1 149.2 L982.5 150.3 L982.0 151.4 L981.4 152.6 L980.9 153.7 L980.3 154.9 L979.8 156.0 L979.3 157.2 L978.7 158.4 L978.2 159.6 L977.7 160.8 L977.1 162.0 L976.6 163.2 L976.1 164.4 L975.5 165.7 L975.0 166.9 L974.5 168.1 L973.9 169.4 L973.4 170.6 L972.8 171.9 L972.3 173.2 L971.8 174.4 L971.2 175.7 L970.7 177.0 L970.1 178.3 L969.6 179.6 L969.0 180.9 L968.5 182.2 L967.9 183.5 L967.4 184.8 L966.8 186.1 L966.3 187.4 L965.7 188.7 L965.2 190.1 L964.6 191.4 L964.0 192.7 L963.5 194.1 L962.9 195.4 L962.3 196.8 L961.7 198.1 L961.2 199.5 L960.6 200.8 L960.0 202.2 L959.4 203.5 L958.8 204.9 L958.3 206.3 L957.7 207.6 L957.1 209.0 L956.5 210.4 L955.9 211.8 L955.3 213.2 L954.7 214.5 L954.1 215.9 L953.5 217.3 L952.9 218.7 L952.2 220.1 L951.6 221.5 L951.0 222.9 L950.4 224.3 L949.8 225.7 L949.1 227.1 L948.5 228.5 L947.9 229.9 L947.3 231.3 L946.6 232.7 L946.0 234.2 L945.3 235.6 L944.7 237.0 L944.1 238.4 L943.4 239.8 L942.8 241.3 L942.1 242.7 L941.5 244.1 L940.8 245.5 L940.2 247.0 L939.5 248.4 L938.8 249.8 L938.2 251.2 L937.5 252.7 L936.8 254.1 L936.2 255.6 L935.5 257.0 L934.8 258.4 L934.2 259.9 L933.5 261.3 L932.8 262.7 L932.1 264.2 L931.4 265.6 L930.8 267.1 L930.1 268.5 L929.4 270.0 L928.7 271.4 L928.0 272.9 L927.3 274.3 L926.6 275.8 L925.9 277.2 L925.2 278.7 L924.5 280.1 L923.8 281.6 L923.1 283.0 L922.4 284.5 L921.7 285.9 L921.0 287.4 L920.3 288.8 L919.6 290.3 L918.9 291.7 L918.2 293.2 L917.5 294.6 L916.8 296.1 L916.1 297.6 L915.4 299.0 L914.7 300.5 L913.9 301.9 L913.2 303.4 L912.5 304.8 L911.8 306.3 L911.1 307.8 L910.4 309.2 L909.6 310.7 L908.9 312.1 L908.2 313.6 L907.5 315.1 L906.8 316.5 L906.1 318.0 L905.3 319.4 L904.6 320.9 L903.9 322.4 L903.2 323.8 L902.5 325.3 L901.7 326.7 L901.0 328.2 L900.3 329.6 L899.6 331.1 L898.9 332.6 L898.1 334.0 L897.4 335.5 L896.7 336.9 L896.0 338.4 L895.3 339.9 L894.6 341.3 L893.8 342.8 L893.1 344.2 L892.4 345.7 L891.7 347.1 L891.0 348.6 L890.3 350.1 L889.6 351.5 L888.8 353.0 L888.1 354.4 L887.4 355.9 L886.7 357.3 L886.0 358.8 L885.3 360.2 L884.6 361.7 L883.9 363.1 L883.2 364.6 L882.5 366.0 L881.8 367.5 L881.1 368.9 L880.4 370.4 L879.7 371.8 L879.0 373.3 L878.3 374.7 L877.6 376.1 L876.9 377.6 L876.2 379.0 L875.5 380.5 L874.8 381.9 L874.1 383.3 L873.4 384.8 L872.8 386.2 L872.1 387.6 L871.4 389.1 L870.7 390.5 L870.0 391.9 L869.4 393.4 L868.7 394.8 L868.0 396.2 L867.3 397.6 L866.7 399.1 L866.0 400.5 L865.3 401.9 L864.7 403.3 L864.0 404.8 L863.4 406.2 L862.7 407.6 L862.1 409.0 L861.4 410.4 L860.8 411.8 L860.1 413.2 L859.5 414.6 L858.8 416.0 L858.2 417.4 L857.5 418.8 L856.9 420.2 L856.3 421.6 L855.6 423.0 L855.0 424.4 L854.4 425.8 L853.8 427.2 L853.1 428.6 L852.5 429.9"/>
<path d="M1178.1 157.8 L1179.6 159.2 L1181.0 160.6 L1182.5 161.9 L1183.9 163.3 L1185.3 164.7 L1186.8 166.0 L1188.2 167.4 L1189.6 168.8 L1191.0 170.2 L1192.4 171.6 L1193.7 173.0 L1195.1 174.4 L1196.5 175.8 L1197.8 177.2 L1199.1 178.6 L1200.5 180.0 L1201.8 181.4 L1203.1 182.8 L1204.3 184.3 L1205.6 185.7 L1206.9 187.1 L1208.1 188.5 L1209.3 190.0 L1210.5 191.4 L1211.7 192.9 L1212.9 194.3 L1214.1 195.7 L1215.2 197.2 L1216.4 198.6 L1217.5 200.1 L1218.6 201.5 L1219.7 203.0 L1220.7 204.5 L1221.8 205.9 L1222.8 207.4 L1223.8 208.8 L1224.8 210.3 L1225.8 211.8 L1226.8 213.2 L1227.7 214.7 L1228.6 216.2 L1229.6 217.7 L1230.4 219.1 L1231.3 220.6 L1232.2 222.1 L1233.0 223.6 L1233.8 225.0 L1234.6 226.5 L1235.4 228.0 L1236.1 229.5 L1236.9 231.0 L1237.6 232.5 L1238.3 234.0 L1238.9 235.5 L1239.6 236.9 L1240.2 238.4 L1240.8 239.9 L1241.4 241.4 L1242.0 242.9 L1242.5 244.4 L1243.0 245.9 L1243.5 247.4 L1244.0 248.9 L1244.5 250.4 L1244.9 251.9 L1245.4 253.4 L1245.7 254.9 L1246.1 256.4 L1246.5 257.9 L1246.8 259.4 L1247.1 260.9 L1247.4 262.4 L1247.7 263.9 L1247.9 265.4 L1248.1 267.0 L1248.3 268.5 L1248.5 270.0 L1248.7 271.5 L1248.8 273.0 L1248.9 274.5 L1249.0 276.0 L1249.0 277.5 L1249.1 279.0 L1249.1 280.5 L1249.1 282.1 L1249.1 283.6 L1249.0 285.1 L1248.9 286.6 L1248.8 288.1 L1248.7 289.6 L1248.6 291.1 L1248.4 292.7 L1248.2 294.2 L1248.0 295.7 L1247.8 297.2 L1247.5 298.7 L1247.3 300.2 L1247.0 301.7 L1246.6 303.3 L1246.3 304.8 L1245.9 306.3 L1245.5 307.8 L1245.1 309.3 L1244.7 310.8 L1244.2 312.4 L1243.7 313.9 L1243.2 315.4 L1242.7 316.9 L1242.1 318.4 L1241.6 320.0 L1241.0 321.5 L1240.4 323.0 L1239.7 324.5 L1239.1 326.0 L1238.4 327.5 L1237.7 329.1 L1236.9 330.6 L1236.2 332.1 L1235.4 333.6 L1234.6 335.1 L1233.8 336.6 L1232.9 338.2 L1232.1 339.7 L1231.2 341.2 L1230.3 342.7 L1229.4 344.2 L1228.4 345.7 L1227.5 347.3 L1226.5 348.8 L1225.4 350.3 L1224.4 351.8 L1223.4 353.3 L1222.3 354.8 L1221.2 356.3 L1220.1 357.9 L1218.9 359.4 L1217.8 360.9 L1216.6 362.4 L1215.4 363.9 L1214.2 365.4 L1212.9 366.9 L1211.7 368.4 L1210.4 369.9 L1209.1 371.4 L1207.8 373.0 L1206.4 374.5 L1205.1 376.0 L1203.7 377.5 L1202.3 379.0 L1200.9 380.5 L1199.4 382.0 L1198.0 383.5 L1196.5 385.0 L1195.0 386.5 L1193.5 388.0 L1191.9 389.5 L1190.4 391.0 L1188.8 392.5 L1187.2 394.0 L1185.6 395.5 L1184.0 397.0 L1182.4 398.5 L1180.7 400.0 L1179.1 401.5 L1177.4 403.0 L1175.7 404.5 L1173.9 405.9 L1172.2 407.4 L1170.4 408.9 L1168.7 410.4 L1166.9 411.9 L1165.1 413.4"/>
<path d="M987.5 61.7 L984.6 60.2 L981.8 58.8 L979.0 57.4 L976.3 56.0 L973.6 54.6 L970.9 53.2 L968.4 51.9 L966.0 50.7 L963.7 49.4 L961.5 48.2 L959.5 47.1 L957.7 46.1 L956.2 45.1 L955.0 44.3M851.8 43.5 L855.2 42.9 L858.0 42.5 L860.5 42.2 L862.4 42.1 L863.8 42.2 L864.8 42.4 L865.4 42.8 L865.7 43.4 L865.6 44.1 L865.3 44.9 L864.7 45.8 L864.0 46.8 L863.1 47.9 L862.1 49.1 L860.9 50.3 L859.7 51.6 L858.5 52.9 L857.2 54.2 L855.8 55.6 L854.4 57.0 L853.0 58.4 L851.5 59.9 L850.0 61.3 L848.5 62.8 L847.0 64.3 L845.4 65.8 L843.9 67.3 L842.3 68.8 L840.8 70.3 L839.2 71.8 L837.6 73.4 L836.0 74.9 L834.5 76.5 L832.9 78.0 L831.3 79.6 L829.7 81.1 L828.1 82.7 L826.5 84.3 L824.9 85.8 L823.4 87.4 L821.8 89.0 L820.2 90.6 L818.6 92.1 L817.1 93.7 L815.5 95.3 L813.9 96.9 L812.4 98.5 L810.8 100.1 L809.3 101.7 L807.7 103.3 L806.2 104.9 L804.7 106.4 L803.1 108.0 L801.6 109.6 L800.1 111.2 L798.6 112.8 L797.1 114.4 L795.6 116.0 L794.1 117.6 L792.6 119.3 L791.1 120.9 L789.7 122.5 L788.2 124.1 L786.8 125.7 L785.3 127.3 L783.9 128.9 L782.5 130.5 L781.0 132.1 L779.6 133.7 L778.2 135.3 L776.8 136.9 L775.5 138.5 L774.1 140.2 L772.7 141.8 L771.4 143.4 L770.0 145.0 L768.7 146.6 L767.3 148.2 L766.0 149.8 L764.7 151.4 L763.4 153.1 L762.1 154.7 L760.9 156.3 L759.6 157.9 L758.3 159.5 L757.1 161.1 L755.9 162.7 L754.6 164.4 L753.4 166.0 L752.2 167.6 L751.0 169.2 L749.8 170.8 L748.7 172.4 L747.5 174.1 L746.4 175.7 L745.2 177.3 L744.1 178.9 L743.0 180.5 L741.9 182.1 L740.8 183.8 L739.7 185.4 L738.7 187.0 L737.6 188.6 L736.6 190.2 L735.6 191.8 L734.5 193.5 L733.5 195.1 L732.5 196.7 L731.6 198.3 L730.6 199.9 L729.7 201.6 L728.7 203.2 L727.8 204.8 L726.9 206.4 L726.0 208.0 L725.1 209.7 L724.2 211.3 L723.4 212.9 L722.5 214.5 L721.7 216.1 L720.9 217.8 L720.1 219.4 L719.3 221.0 L718.5 222.6 L717.7 224.2 L717.0 225.9 L716.3 227.5 L715.5 229.1 L714.8 230.7 L714.1 232.3 L713.5 234.0 L712.8 235.6 L712.1 237.2 L711.5 238.8 L710.9 240.4 L710.3 242.1 L709.7 243.7 L709.1 245.3 L708.5 246.9 L708.0 248.5 L707.5 250.2 L706.9 251.8 L706.4 253.4 L705.9 255.0 L705.5 256.6 L705.0 258.3 L704.6 259.9 L704.1 261.5 L703.7 263.1 L703.3 264.8 L702.9 266.4 L702.6 268.0 L702.2 269.6 L701.9 271.2 L701.5 272.9 L701.2 274.5 L700.9 276.1 L700.6 277.7 L700.4 279.3 L700.1 281.0 L699.9 282.6 L699.7 284.2 L699.5 285.8 L699.3 287.5 L699.1 289.1 L699.0 290.7 L698.8 292.3 L698.7 293.9 L698.6 295.6 L698.5 297.2 L698.4 298.8 L698.3 300.4 L698.3 302.0 L698.2 303.7 L698.2 305.3 L698.2 306.9 L698.2 308.5 L698.3 310.2 L698.3 311.8 L698.4 313.4 L698.4 315.0 L698.5 316.6 L698.6 318.3 L698.8 319.9 L698.9 321.5 L699.0 323.1 L699.2 324.8 L699.4 326.4 L699.6 328.0 L699.8 329.6 L700.0 331.2 L700.3 332.9 L700.5 334.5 L700.8 336.1 L701.1 337.7 L701.4 339.4 L701.7 341.0 L702.0 342.6 L702.4 344.2 L702.8 345.8 L703.1 347.5 L703.5 349.1 L703.9 350.7 L704.4 352.3 L704.8 353.9 L705.3 355.6 L705.7 357.2 L706.2 358.8 L706.7 360.4 L707.2 362.1 L707.7 363.7 L708.3 365.3 L708.8 366.9 L709.4 368.5 L710.0 370.2 L710.6 371.8 L711.2 373.4 L711.9 375.0 L712.5 376.6 L713.2 378.3 L713.8 379.9 L714.5 381.5 L715.2 383.1 L715.9 384.8 L716.7 386.4 L717.4 388.0 L718.2 389.6 L718.9 391.2 L719.7 392.9 L720.5 394.5 L721.3 396.1 L722.2 397.7 L723.0 399.3 L723.9 401.0 L724.7 402.6 L725.6 404.2 L726.5 405.8 L727.4 407.4 L728.3 409.1 L729.3 410.7 L730.2 412.3 L731.2 413.9 L732.1 415.5 L733.1 417.2 L734.1 418.8 L735.1 420.4 L736.2 422.0 L737.2 423.6 L738.2 425.3 L739.3 426.9 L740.4 428.5 L741.5 430.1 L742.5 431.7 L743.7 433.4 L744.8 435.0 L745.9 436.6 L747.1 438.2 L748.2 439.8"/>
<path d="M959.8 125.8 L958.9 126.7 L958.0 127.6 L957.1 128.5 L956.3 129.4 L955.4 130.4 L954.5 131.3 L953.6 132.3 L952.8 133.3 L951.9 134.3 L951.0 135.3 L950.2 136.3 L949.3 137.4 L948.5 138.4 L947.6 139.5 L946.8 140.6 L946.0 141.7 L945.1 142.8 L944.3 143.9 L943.5 145.0 L942.6 146.1 L941.8 147.3 L941.0 148.4 L940.1 149.6 L939.3 150.7 L938.5 151.9 L937.7 153.1 L936.8 154.3 L936.0 155.5 L935.2 156.7 L934.4 157.9 L933.5 159.1 L932.7 160.4 L931.9 161.6 L931.1 162.9 L930.2 164.1 L929.4 165.4 L928.6 166.6 L927.8 167.9 L926.9 169.2 L926.1 170.5 L925.3 171.8 L924.5 173.1 L923.6 174.4 L922.8 175.7 L922.0 177.0 L921.1 178.3 L920.3 179.6 L919.5 180.9 L918.7 182.2 L917.8 183.6 L917.0 184.9 L916.2 186.3 L915.3 187.6 L914.5 188.9 L913.7 190.3 L912.8 191.7 L912.0 193.0 L911.2 194.4 L910.3 195.7 L909.5 197.1 L908.7 198.5 L907.8 199.9 L907.0 201.2 L906.1 202.6 L905.3 204.0 L904.5 205.4 L903.6 206.8 L902.8 208.2 L902.0 209.6 L901.1 211.0 L900.3 212.4 L899.5 213.8 L898.6 215.2 L897.8 216.6 L896.9 218.0 L896.1 219.4 L895.3 220.8 L894.4 222.2 L893.6 223.6 L892.8 225.0 L891.9 226.5 L891.1 227.9 L890.3 229.3 L889.4 230.7 L888.6 232.2 L887.8 233.6 L886.9 235.0 L886.1 236.5 L885.3 237.9 L884.5 239.3 L883.6 240.8 L882.8 242.2 L882.0 243.7 L881.2 245.1 L880.3 246.5 L879.5 248.0 L878.7 249.4 L877.9 250.9 L877.1 252.3 L876.3 253.8 L875.4 255.2 L874.6 256.7 L873.8 258.1 L873.0 259.6 L872.2 261.0 L871.4 262.5 L870.6 263.9 L869.8 265.4 L869.0 266.9 L868.2 268.3 L867.4 269.8 L866.6 271.2 L865.8 272.7 L865.0 274.1 L864.2 275.6 L863.5 277.1 L862.7 278.5 L861.9 280.0 L861.1 281.5 L860.3 282.9 L859.6 284.4 L858.8 285.9 L858.0 287.3 L857.3 288.8 L856.5 290.3 L855.7 291.7 L855.0 293.2 L854.2 294.7 L853.5 296.1 L852.7 297.6 L852.0 299.1 L851.3 300.5 L850.5 302.0 L849.8 303.5 L849.1 305.0 L848.3 306.4 L847.6 307.9 L846.9 309.4 L846.2 310.8 L845.4 312.3 L844.7 313.8 L844.0 315.3 L843.3 316.7 L842.6 318.2 L841.9 319.7 L841.2 321.1 L840.5 322.6 L839.9 324.1 L839.2 325.6 L838.5 327.0 L837.8 328.5 L837.2 330.0 L836.5 331.4 L835.8 332.9 L835.2 334.4 L834.5 335.9 L833.9 337.3 L833.2 338.8 L832.6 340.3 L832.0 341.7 L831.3 343.2 L830.7 344.7 L830.1 346.1 L829.5 347.6 L828.8 349.1 L828.2 350.6 L827.6 352.0 L827.0 353.5 L826.4 355.0 L825.8 356.4 L825.3 357.9 L824.7 359.3 L824.1 360.8 L823.5 362.3 L823.0 363.7 L822.4 365.2 L821.8 366.7 L821.3 368.1 L820.7 369.6 L820.2 371.0 L819.7 372.5 L819.1 374.0 L818.6 375.4 L818.1 376.9 L817.6 378.3 L817.0 379.8 L816.5 381.2 L816.0 382.7 L815.5 384.1 L815.0 385.6 L814.6 387.0 L814.1 388.5 L813.6 389.9 L813.1 391.4 L812.7 392.8 L812.2 394.3 L811.7 395.7 L811.3 397.2 L810.8 398.6 L810.4 400.0 L810.0 401.5 L809.5 402.9 L809.1 404.3 L808.7 405.8 L808.3 407.2 L807.9 408.6 L807.5 410.1 L807.1 411.5 L806.7 412.9 L806.3 414.3 L805.9 415.7 L805.5 417.2 L805.1 418.6 L804.8 420.0 L804.4 421.4 L804.0 422.8 L803.7 424.2 L803.3 425.6 L803.0 427.0 L802.6 428.4 L802.3 429.8 L802.0 431.2 L801.6 432.6 L801.3 434.0 L801.0 435.4 L800.7 436.8 L800.4 438.2 L800.1 439.5 L799.8 440.9 L799.5 442.3 L799.2 443.7 L798.9 445.0 L798.6 446.4"/>
</g>
<g fill="none" stroke="#8e8e8e" stroke-width="1.4">
<path d="M811.8 93.8L834.0 69.3"/>
<path d="M967.7 150.4L982.0 165.2"/>
<path d="M1021.1 96.7L1026.9 101.4"/>
<path d="M1051.7 100.0L1058.1 103.3"/>
<path d="M1073.9 100.8L1080.0 101.7"/>
<path d="M1121.7 100.0L1123.9 105.0"/>
<path d="M1178.3 148.9L1189.4 153.3"/>
<path d="M1174.4 156.7L1171.1 153.3"/>
<path d="M987.5 61.7L994.0 65.0"/>
<path d="M960.2 126.1L967.3 119.4"/>
</g>
<g fill="none" stroke-width="1.39" stroke-dasharray="1.39 2.29">
<path d="M781.7 72.5 L783.7 71.9 L785.6 71.4 L787.6 70.8 L789.5 70.2 L791.5 69.7 L793.4 69.2 L795.3 68.6 L797.1 68.1 L799.0 67.6 L800.8 67.1 L802.7 66.5 L804.5 66.0 L806.3 65.6 L808.0 65.1 L809.8 64.6 L811.5 64.1 L813.2 63.7 L814.9 63.2 L816.5 62.8 L818.2 62.4 L819.8 62.0 L821.3 61.6 L822.9 61.2 L824.4 60.8 L825.9 60.4 L827.4 60.1 L828.8 59.7 L830.2 59.4 L831.6 59.1 L832.9 58.8 L834.2 58.5 L835.5 58.3 L836.7 58.0 L837.9 57.8 L839.1 57.6 L840.2 57.4 L841.3 57.2 L842.4 57.0 L843.4 56.9 L844.4 56.7 L845.4 56.6 L846.3 56.5 L847.2 56.5 L848.0 56.4 L848.8 56.4 L849.6 56.4 L850.3 56.4 L851.0 56.4 L851.7 56.5 L852.4 56.5 L853.0 56.6 L853.6 56.7 L854.1 56.8 L854.6 57.0 L855.1 57.1 L855.6 57.3 L856.0 57.5 L856.4 57.7 L856.8 57.9 L857.2 58.2 L857.5 58.4 L857.8 58.7 L858.1 59.0 L858.4 59.3 L858.6 59.6 L858.8 60.0 L859.1 60.3 L859.3 60.7 L859.4 61.0 L859.6 61.4 L859.8 61.8 L859.9 62.2 L860.0 62.7 L860.1 63.1 L860.3 63.5 L860.3 64.0 L860.4 64.5 L860.5 64.9 L860.6 65.4 L860.6 65.9 L860.7 66.4 L860.7 66.9 L860.7 67.4 L860.7 67.9 L860.8 68.5 L860.8 69.0 L860.8 69.5 L860.8 70.1 L860.7 70.6 L860.7 71.2 L860.7 71.8 L860.7 72.3 L860.7 72.9 L860.6 73.5 L860.6 74.1 L860.6 74.7 L860.5 75.3 L860.5 75.9 L860.4 76.5 L860.4 77.1 L860.3 77.7 L860.3 78.3 L860.2 78.9 L860.1 79.5 L860.1 80.2 L860.0 80.8 L859.9 81.4 L859.9 82.0 L859.8 82.7 L859.7 83.3 L859.6 84.0 L859.6 84.6 L859.5 85.3 L859.4 85.9 L859.3 86.6 L859.2 87.2 L859.2 87.9 L859.1 88.5 L859.0 89.2 L858.9 89.9 L858.8 90.5 L858.7 91.2 L858.7 91.9 L858.6 92.5 L858.5 93.2 L858.4 93.9 L858.3 94.5 L858.2 95.2 L858.1 95.9 L858.0 96.6 L857.9 97.3 L857.9 98.0 L857.8 98.6 L857.7 99.3 L857.6 100.0 L857.5 100.7 L857.4 101.4 L857.3 102.1 L857.2 102.8 L857.1 103.5 L857.0 104.2 L856.9 104.8 L856.9 105.5 L856.8 106.2 L856.7 106.9 L856.6 107.6 L856.5 108.3 L856.4 109.0 L856.3 109.7 L856.2 110.4 L856.1 111.1 L856.0 111.9 L856.0 112.6 L855.9 113.3 L855.8 114.0 L855.7 114.7 L855.6 115.4 L855.5 116.1 L855.4 116.8 L855.3 117.5 L855.3 118.2 L855.2 118.9 L855.1 119.6 L855.0 120.4 L854.9 121.1 L854.8 121.8 L854.7 122.5 L854.7 123.2 L854.6 123.9 L854.5 124.6 L854.4 125.4 L854.3 126.1 L854.2 126.8 L854.2 127.5 L854.1 128.2 L854.0 128.9 L853.9 129.7 L853.9 130.4 L853.8 131.1 L853.7 131.8 L853.6 132.5 L853.5 133.3 L853.5 134.0 L853.4 134.7 L853.3 135.4 L853.2 136.2 L853.2 136.9 L853.1 137.6 L853.0 138.3 L853.0 139.1 L852.9 139.8 L852.8 140.5 L852.7 141.2 L852.7 142.0 L852.6 142.7 L852.5 143.4 L852.5 144.1 L852.4 144.9 L852.3 145.6 L852.3 146.3 L852.2 147.0 L852.1 147.8 L852.1 148.5 L852.0 149.2 L852.0 150.0 L851.9 150.7 L851.8 151.4 L851.8 152.1 L851.7 152.9 L851.7 153.6 L851.6 154.3 L851.5 155.1 L851.5 155.8 L851.4 156.5 L851.4 157.3 L851.3 158.0 L851.3 158.7 L851.2 159.4 L851.2 160.2 L851.1 160.9 L851.1 161.6 L851.0 162.4 L851.0 163.1 L850.9 163.8 L850.9 164.6 L850.8 165.3 L850.8 166.0 L850.7 166.8 L850.7 167.5 L850.6 168.2 L850.6 169.0 L850.5 169.7 L850.5 170.4 L850.5 171.2 L850.4 171.9 L850.4 172.6 L850.3 173.4 L850.3 174.1 L850.3 174.9 L850.2 175.6 L850.2 176.3 L850.2 177.1 L850.1 177.8 L850.1 178.5 L850.1 179.3 L850.0 180.0 L850.0 180.7 L850.0 181.5 L849.9 182.2 L849.9 182.9 L849.9 183.7 L849.8 184.4 L849.8 185.2 L849.8 185.9 L849.8 186.6 L849.7 187.4 L849.7 188.1 L849.7 188.8 L849.7 189.6 L849.7 190.3 L849.6 191.1 L849.6 191.8 L849.6 192.5 L849.6 193.3 L849.6 194.0 L849.5 194.8 L849.5 195.5 L849.5 196.2 L849.5 197.0 L849.5 197.7 L849.5 198.4 L849.5 199.2 L849.5 199.9 L849.4 200.7 L849.4 201.4 L849.4 202.1 L849.4 202.9 L849.4 203.6 L849.4 204.4 L849.4 205.1 L849.4 205.8 L849.4 206.6 L849.4 207.3 L849.4 208.1 L849.4 208.8 L849.4 209.5 L849.4 210.3 L849.4 211.0 L849.4 211.8 L849.4 212.5" stroke="#18ee80"/>
<path d="M977.8 81.3 L977.7 80.8 L977.5 80.3 L977.4 79.8 L977.3 79.3 L977.2 78.8 L977.1 78.4 L977.1 77.9 L977.0 77.4 L976.9 77.0 L976.9 76.5 L976.8 76.1 L976.8 75.7 L976.8 75.2 L976.8 74.8 L976.8 74.4 L976.8 74.0 L976.8 73.6 L976.9 73.3 L976.9 72.9 L977.0 72.5 L977.1 72.2 L977.2 71.8 L977.3 71.5 L977.5 71.2 L977.6 70.8 L977.8 70.5 L978.0 70.3 L978.2 70.0 L978.4 69.7 L978.7 69.4 L978.9 69.2 L979.2 69.0 L979.5 68.7 L979.9 68.5 L980.2 68.3 L980.6 68.1 L981.0 68.0 L981.4 67.8 L981.9 67.7 L982.4 67.5 L982.9 67.4 L983.4 67.3 L984.0 67.2 L984.6 67.1 L985.2 67.1 L985.8 67.0 L986.5 67.0 L987.2 67.0 L988.0 67.0 L988.7 67.0 L989.5 67.0 L990.3 67.0 L991.2 67.1 L992.1 67.1 L993.0 67.2 L994.0 67.3 L994.9 67.4 L995.9 67.5 L997.0 67.6 L998.1 67.8 L999.2 67.9 L1000.3 68.1 L1001.5 68.3 L1002.7 68.5 L1003.9 68.7 L1005.1 68.9 L1006.4 69.2 L1007.7 69.4 L1009.1 69.7 L1010.4 69.9 L1011.8 70.2 L1013.3 70.5 L1014.7 70.8 L1016.2 71.1 L1017.7 71.4 L1019.2 71.8 L1020.8 72.1 L1022.4 72.5 L1024.0 72.8 L1025.6 73.2 L1027.2 73.6 L1028.9 74.0 L1030.6 74.4 L1032.3 74.8 L1034.1 75.2 L1035.8 75.6 L1037.6 76.0 L1039.4 76.5 L1041.3 76.9 L1043.1 77.4 L1045.0 77.8 L1046.8 78.3 L1048.7 78.8 L1050.6 79.2 L1052.6 79.7 L1054.5 80.2 L1056.5 80.7 L1058.4 81.2 L1060.4 81.7 L1062.4 82.2 L1064.4 82.8 L1066.5 83.3 L1068.5 83.8 L1070.6 84.3 L1072.6 84.9 L1074.7 85.4 L1076.8 86.0 L1078.9 86.5 L1081.0 87.1 L1083.1 87.6 L1085.3 88.2 L1087.4 88.8 L1089.6 89.3 L1091.7 89.9 L1093.9 90.5 L1096.1 91.1 L1098.3 91.7 L1100.5 92.3 L1102.7 92.9 L1104.9 93.4 L1107.1 94.0M694.9 94.6 L693.6 95.3 L692.3 95.9 L690.9 96.5 L689.6 97.1 L688.2 97.7 L686.9 98.3 L685.5 98.9 L684.2 99.6 L682.8 100.2 L681.4 100.8 L680.0 101.4 L678.7 102.1 L677.3 102.7 L675.9 103.3 L674.5 104.0 L673.1 104.6 L671.7 105.3 L670.3 105.9 L668.9 106.6 L667.5 107.2 L666.1 107.9 L664.7 108.5 L663.3 109.2 L661.9 109.8 L660.5 110.5 L659.1 111.1 L657.7 111.8 L656.3 112.4 L654.9 113.1 L653.5 113.8 L652.0 114.4 L650.6 115.1 L649.2 115.8 L647.8 116.4 L646.4 117.1 L645.0 117.8 L643.6 118.4 L642.2 119.1 L640.7 119.8 L639.3 120.5 L637.9 121.1 L636.5 121.8 L635.1 122.5 L633.7 123.2 L632.3 123.9 L630.9 124.5 L629.5 125.2 L628.1 125.9 L626.7 126.6 L625.3 127.3 L623.9 128.0 L622.5 128.6 L621.1 129.3 L619.7 130.0 L618.3 130.7 L616.9 131.4 L615.5 132.1 L614.1 132.8 L612.7 133.5 L611.4 134.2 L610.0 134.9 L608.6 135.6 L607.2 136.2 L605.9 136.9 L604.5 137.6 L603.1 138.3 L601.8 139.0 L600.4 139.7 L599.0 140.4 L597.7 141.1 L596.3 141.8 L595.0 142.5 L593.6 143.2 L592.3 143.9 L590.9 144.6 L589.6 145.3 L588.3 146.0 L586.9 146.7 L585.6 147.5 L584.3 148.2 L583.0 148.9 L581.7 149.6 L580.3 150.3 L579.0 151.0 L577.7 151.7 L576.4 152.4 L575.1 153.1 L573.8 153.8 L572.5 154.5 L571.2 155.2 L570.0 155.9 L568.7 156.7 L567.4 157.4 L566.1 158.1 L564.9 158.8 L563.6 159.5 L562.3 160.2 L561.1 160.9 L559.8 161.6 L558.6 162.3 L557.4 163.1 L556.1 163.8 L554.9 164.5 L553.7 165.2 L552.4 165.9 L551.2 166.6 L550.0 167.4 L548.8 168.1 L547.6 168.8 L546.4 169.5 L545.2 170.2 L544.0 170.9 L542.8 171.7 L541.6 172.4 L540.4 173.1 L539.3 173.8 L538.1 174.5 L536.9 175.2 L535.8 176.0 L534.6 176.7 L533.5 177.4 L532.3 178.1 L531.2 178.8 L530.0 179.6 L528.9 180.3 L527.8 181.0 L526.7 181.7 L525.6 182.4 L524.5 183.2 L523.4 183.9 L522.3 184.6 L521.2 185.3 L520.1 186.1 L519.0 186.8 L517.9 187.5 L516.8 188.2 L515.8 188.9 L514.7 189.7 L513.7 190.4 L512.6 191.1 L511.6 191.8 L510.5 192.6 L509.5 193.3 L508.5 194.0 L507.5 194.7 L506.4 195.5 L505.4 196.2 L504.4 196.9 L503.4 197.6 L502.4 198.4 L501.5 199.1 L500.5 199.8 L499.5 200.5 L498.5 201.3 L497.6 202.0 L496.6 202.7 L495.7 203.4 L494.7 204.2 L493.8 204.9 L492.8 205.6 L491.9 206.4 L491.0 207.1 L490.1 207.8 L489.2 208.5 L488.3 209.3 L487.4 210.0 L486.5 210.7 L485.6 211.4 L484.7 212.2 L483.8 212.9 L483.0 213.6 L482.1 214.4 L481.3 215.1 L480.4 215.8 L479.6 216.5 L478.7 217.3 L477.9 218.0 L477.1 218.7 L476.3 219.5 L475.5 220.2 L474.7 220.9 L473.9 221.7 L473.1 222.4 L472.3 223.1 L471.5 223.8 L470.7 224.6 L470.0 225.3 L469.2 226.0 L468.5 226.8 L467.7 227.5 L467.0 228.2 L466.2 229.0 L465.5 229.7 L464.8 230.4 L464.1 231.2 L463.4 231.9 L462.7 232.6 L462.0 233.3 L461.3 234.1 L460.6 234.8 L460.0 235.5 L459.3 236.3 L458.6 237.0 L458.0 237.7 L457.3 238.5 L456.7 239.2" stroke="#55cc00"/>
<path d="M1155.0 116.3 L1156.7 116.7 L1158.3 117.1 L1160.0 117.5 L1161.7 117.9 L1163.4 118.3 L1165.1 118.7 L1166.9 119.1 L1168.6 119.5 L1170.4 119.9 L1172.1 120.4 L1173.9 120.8 L1175.6 121.2 L1177.4 121.7 L1179.2 122.1 L1181.0 122.5 L1182.8 123.0 L1184.6 123.4 L1186.4 123.9 L1188.3 124.4 L1190.1 124.8 L1191.9 125.3 L1193.8 125.7 L1195.6 126.2 L1197.5 126.7 L1199.4 127.2 L1201.2 127.6 L1203.1 128.1 L1205.0 128.6M598.2 129.1 L597.5 129.6 L596.7 130.1 L596.0 130.6 L595.2 131.1 L594.5 131.6 L593.7 132.1 L592.9 132.6 L592.2 133.1 L591.4 133.6 L590.6 134.1 L589.8 134.7 L589.0 135.2 L588.2 135.7 L587.4 136.2 L586.6 136.8 L585.8 137.3 L585.0 137.8 L584.2 138.4 L583.4 138.9 L582.5 139.4 L581.7 140.0 L580.9 140.5 L580.1 141.1 L579.2 141.6 L578.4 142.2 L577.6 142.7 L576.7 143.3 L575.9 143.8 L575.0 144.4 L574.2 145.0 L573.4 145.5 L572.5 146.1 L571.7 146.7 L570.8 147.2 L570.0 147.8 L569.1 148.4 L568.3 148.9 L567.4 149.5 L566.6 150.1 L565.7 150.7 L564.8 151.3 L564.0 151.8 L563.1 152.4 L562.3 153.0 L561.4 153.6 L560.6 154.2 L559.7 154.8 L558.9 155.4 L558.0 155.9 L557.1 156.5 L556.3 157.1 L555.4 157.7 L554.6 158.3 L553.7 158.9 L552.9 159.5 L552.0 160.1 L551.2 160.7 L550.3 161.3 L549.5 161.9 L548.6 162.6 L547.8 163.2 L546.9 163.8 L546.1 164.4 L545.3 165.0 L544.4 165.6 L543.6 166.2 L542.7 166.8 L541.9 167.5 L541.1 168.1 L540.2 168.7 L539.4 169.3 L538.6 169.9 L537.7 170.6 L536.9 171.2 L536.1 171.8 L535.3 172.4 L534.5 173.0 L533.6 173.7 L532.8 174.3 L532.0 174.9 L531.2 175.6 L530.4 176.2 L529.6 176.8 L528.8 177.5 L528.0 178.1 L527.2 178.7 L526.4 179.4 L525.6 180.0 L524.8 180.6 L524.0 181.3 L523.2 181.9 L522.5 182.5 L521.7 183.2 L520.9 183.8 L520.1 184.5 L519.4 185.1 L518.6 185.8 L517.8 186.4 L517.1 187.0 L516.3 187.7 L515.6 188.3 L514.8 189.0 L514.1 189.6 L513.3 190.3 L512.6 190.9 L511.9 191.6 L511.1 192.2 L510.4 192.9 L509.7 193.5 L509.0 194.2 L508.2 194.8 L507.5 195.5 L506.8 196.1 L506.1 196.8 L505.4 197.4 L504.7 198.1 L504.0 198.8 L503.3 199.4 L502.6 200.1 L502.0 200.7 L501.3 201.4 L500.6 202.1 L499.9 202.7 L499.3 203.4 L498.6 204.0 L498.0 204.7 L497.3 205.4 L496.7 206.0 L496.0 206.7 L495.4 207.3 L494.8 208.0 L494.1 208.7 L493.5 209.3 L492.9 210.0 L492.3 210.7 L491.6 211.3 L491.0 212.0 L490.4 212.7 L489.8 213.3 L489.2 214.0 L488.7 214.7 L488.1 215.3 L487.5 216.0 L486.9 216.7 L486.4 217.3 L485.8 218.0 L485.2 218.7 L484.7 219.4 L484.1 220.0 L483.6 220.7 L483.0 221.4 L482.5 222.1 L482.0 222.7 L481.4 223.4 L480.9 224.1 L480.4 224.7 L479.9 225.4 L479.4 226.1 L478.9 226.8 L478.4 227.4 L477.9 228.1 L477.4 228.8 L476.9 229.5 L476.5 230.2 L476.0 230.8 L475.5 231.5 L475.1 232.2 L474.6 232.9 L474.2 233.5 L473.7 234.2 L473.3 234.9" stroke="#55cc00"/>
<path d="M944.0 58.2 L942.7 57.6 L941.5 57.1 L940.3 56.5 L939.1 56.0 L937.9 55.5 L936.7 55.0 L935.5 54.5 L934.3 54.0 L933.2 53.5 L932.0 53.0 L930.9 52.6 L929.8 52.1 L928.7 51.7 L927.6 51.3 L926.6 50.9 L925.6 50.5 L924.5 50.2 L923.6 49.9 L922.6 49.5 L921.6 49.3 L920.7 49.0 L919.8 48.7 L918.9 48.5 L918.0 48.3 L917.1 48.1 L916.3 48.0 L915.5 47.9 L914.6 47.8 L913.9 47.7 L913.1 47.7 L912.3 47.7 L911.6 47.7 L910.8 47.7 L910.1 47.8 L909.4 47.9 L908.7 48.0 L908.0 48.2 L907.3 48.4 L906.6 48.6 L906.0 48.8 L905.3 49.0 L904.6 49.3 L904.0 49.6 L903.3 49.9 L902.6 50.3 L902.0 50.6 L901.3 51.0 L900.7 51.4 L900.0 51.8 L899.3 52.2 L898.7 52.7 L898.0 53.1 L897.3 53.6 L896.7 54.1 L896.0 54.6 L895.3 55.1 L894.6 55.6 L893.9 56.1 L893.3 56.6 L892.6 57.2 L891.9 57.7 L891.2 58.3 L890.5 58.9 L889.8 59.5 L889.1 60.0 L888.4 60.6 L887.7 61.2 L887.0 61.8 L886.3 62.4 L885.5 63.1 L884.8 63.7 L884.1 64.3 L883.4 64.9 L882.7 65.6 L882.0 66.2 L881.2 66.9 L880.5 67.5 L879.8 68.1 L879.0 68.8 L878.3 69.5 L877.6 70.1 L876.8 70.8 L876.1 71.4 L875.4 72.1 L874.6 72.8 L873.9 73.5 L873.2 74.1 L872.4 74.8 L871.7 75.5 L870.9 76.2 L870.2 76.9 L869.4 77.6 L868.7 78.2 L867.9 78.9 L867.2 79.6 L866.5 80.3 L865.7 81.0 L865.0 81.7 L864.2 82.4 L863.5 83.1 L862.7 83.8 L862.0 84.5 L861.2 85.2 L860.5 85.9 L859.7 86.6 L859.0 87.3 L858.2 88.0 L857.5 88.8 L856.7 89.5 L856.0 90.2 L855.2 90.9 L854.5 91.6 L853.7 92.3 L853.0 93.0 L852.2 93.7 L851.5 94.5 L850.7 95.2 L850.0 95.9 L849.2 96.6 L848.5 97.3 L847.7 98.1 L847.0 98.8 L846.2 99.5 L845.5 100.2 L844.7 100.9 L844.0 101.7 L843.2 102.4 L842.5 103.1 L841.7 103.8 L841.0 104.6 L840.2 105.3 L839.5 106.0 L838.7 106.7 L838.0 107.5 L837.3 108.2 L836.5 108.9 L835.8 109.7 L835.0 110.4 L834.3 111.1 L833.6 111.8 L832.8 112.6 L832.1 113.3 L831.3 114.0 L830.6 114.8 L829.9 115.5 L829.1 116.2 L828.4 117.0 L827.7 117.7 L826.9 118.4 L826.2 119.2 L825.5 119.9 L824.8 120.6 L824.0 121.4 L823.3 122.1 L822.6 122.8 L821.9 123.6 L821.1 124.3 L820.4 125.0 L819.7 125.8 L819.0 126.5 L818.2 127.3 L817.5 128.0 L816.8 128.7 L816.1 129.5 L815.4 130.2 L814.7 130.9 L814.0 131.7 L813.2 132.4 L812.5 133.2 L811.8 133.9 L811.1 134.6 L810.4 135.4 L809.7 136.1 L809.0 136.9 L808.3 137.6 L807.6 138.3 L806.9 139.1 L806.2 139.8 L805.5 140.6 L804.8 141.3 L804.1 142.0 L803.4 142.8 L802.7 143.5 L802.0 144.3 L801.4 145.0 L800.7 145.7 L800.0 146.5 L799.3 147.2 L798.6 148.0 L797.9 148.7 L797.3 149.4 L796.6 150.2 L795.9 150.9 L795.2 151.7 L794.6 152.4 L793.9 153.2 L793.2 153.9 L792.6 154.6 L791.9 155.4 L791.2 156.1 L790.6 156.9 L789.9 157.6 L789.2 158.4 L788.6 159.1 L787.9 159.8 L787.3 160.6 L786.6 161.3 L786.0 162.1 L785.3 162.8 L784.7 163.6 L784.0 164.3 L783.4 165.1 L782.8 165.8 L782.1 166.5 L781.5 167.3 L780.8 168.0 L780.2 168.8 L779.6 169.5 L778.9 170.3 L778.3 171.0 L777.7 171.8 L777.1 172.5 L776.4 173.2 L775.8 174.0 L775.2 174.7 L774.6 175.5 L774.0 176.2 L773.4 177.0 L772.8 177.7 L772.1 178.5 L771.5 179.2 L770.9 180.0 L770.3 180.7 L769.7 181.4 L769.1 182.2 L768.5 182.9 L767.9 183.7 L767.4 184.4 L766.8 185.2 L766.2 185.9 L765.6 186.7 L765.0 187.4 L764.4 188.2 L763.8 188.9 L763.3 189.7 L762.7 190.4 L762.1 191.1 L761.6 191.9 L761.0 192.6 L760.4 193.4 L759.9 194.1 L759.3 194.9 L758.7 195.6 L758.2 196.4 L757.6 197.1 L757.1 197.9 L756.5 198.6 L756.0 199.4 L755.4 200.1 L754.9 200.9 L754.3 201.6 L753.8 202.3 L753.3 203.1 L752.7 203.8 L752.2 204.6 L751.7 205.3 L751.2 206.1 L750.6 206.8 L750.1 207.6 L749.6 208.3 L749.1 209.1 L748.6 209.8 L748.0 210.6 L747.5 211.3 L747.0 212.1 L746.5 212.8 L746.0 213.6 L745.5 214.3 L745.0 215.1 L744.5 215.8 L744.0 216.6 L743.6 217.3 L743.1 218.0 L742.6 218.8 L742.1 219.5 L741.6 220.3 L741.1 221.0 L740.7 221.8 L740.2 222.5 L739.7 223.3 L739.3 224.0 L738.8 224.8 L738.3 225.5 L737.9 226.3 L737.4 227.0 L737.0 227.8 L736.5 228.5 L736.1 229.3 L735.6 230.0 L735.2 230.8 L734.7 231.5 L734.3 232.3 L733.9 233.0 L733.4 233.8 L733.0 234.5 L732.6 235.3 L732.2 236.0 L731.7 236.8 L731.3 237.5 L730.9 238.3 L730.5 239.0" stroke="#cc22ee"/>
<path d="M967.1 68.9 L965.7 68.2 L964.4 67.6 L963.0 66.9 L961.6 66.3 L960.3 65.7 L958.9 65.0 L957.6 64.4 L956.2 63.8 L954.9 63.1 L953.6 62.5 L952.3 61.9 L951.0 61.3 L949.7 60.7 L948.4 60.1 L947.1 59.5 L945.8 59.0 L944.5 58.4 L943.3 57.8 L942.0 57.3 L940.8 56.7 L939.6 56.2 L938.4 55.6 L937.2 55.1 L936.0 54.6 L934.8 54.1 L933.7 53.6 L932.5 53.2 L931.4 52.7 L930.3 52.3 L929.2 51.8 L928.1 51.4 L927.0 51.0 L926.0 50.6 L925.0 50.3 L924.0 49.9 L923.0 49.6 L922.0 49.3 L921.1 49.0 L920.2 48.8 L919.2 48.5 L918.4 48.3 L917.5 48.1 L916.6 48.0 L915.8 47.8 L915.0 47.7 L914.2 47.6 L913.4 47.6 L912.6 47.6 L911.9 47.6 L911.2 47.6 L910.4 47.7 L909.7 47.7 L909.0 47.9 L908.3 48.0 L907.6 48.2 L906.9 48.4 L906.3 48.6 L905.6 48.8 L904.9 49.1 L904.3 49.4 L903.6 49.7 L902.9 50.0 L902.3 50.3 L901.6 50.7 L901.0 51.1 L900.3 51.5 L899.6 51.9 L899.0 52.3 L898.3 52.8 L897.6 53.2 L897.0 53.7 L896.3 54.2 L895.6 54.7 L894.9 55.2 L894.3 55.7 L893.6 56.3 L892.9 56.8 L892.2 57.4 L891.5 57.9 L890.8 58.5 L890.1 59.1 L889.4 59.6 L888.7 60.2 L888.0 60.8 L887.3 61.4 L886.6 62.0 L885.9 62.7 L885.2 63.3 L884.5 63.9 L883.8 64.5 L883.0 65.2 L882.3 65.8 L881.6 66.4 L880.9 67.1 L880.1 67.7 L879.4 68.4 L878.7 69.0 L878.0 69.7 L877.2 70.3 L876.5 71.0 L875.8 71.7 L875.0 72.3 L874.3 73.0 L873.5 73.7 L872.8 74.4 L872.1 75.0 L871.3 75.7 L870.6 76.4 L869.8 77.1 L869.1 77.8 L868.3 78.5 L867.6 79.2 L866.9 79.9 L866.1 80.6 L865.4 81.2 L864.6 81.9 L863.9 82.6 L863.1 83.3 L862.4 84.0 L861.6 84.7 L860.9 85.4 L860.1 86.2 L859.4 86.9 L858.6 87.6 L857.9 88.3 L857.1 89.0 L856.4 89.7 L855.6 90.4 L854.9 91.1 L854.1 91.8 L853.4 92.5 L852.6 93.3 L851.9 94.0 L851.1 94.7 L850.4 95.4 L849.6 96.1 L848.9 96.8 L848.1 97.6 L847.4 98.3 L846.6 99.0 L845.9 99.7 L845.2 100.4 L844.4 101.2 L843.7 101.9 L842.9 102.6 L842.2 103.3 L841.4 104.1 L840.7 104.8 L839.9 105.5 L839.2 106.2 L838.5 107.0 L837.7 107.7 L837.0 108.4 L836.2 109.1 L835.5 109.9 L834.8 110.6 L834.0 111.3 L833.3 112.1 L832.5 112.8 L831.8 113.5 L831.1 114.2 L830.3 115.0 L829.6 115.7 L828.9 116.4 L828.1 117.2 L827.4 117.9 L826.7 118.6 L826.0 119.4 L825.2 120.1 L824.5 120.8 L823.8 121.6 L823.0 122.3 L822.3 123.0 L821.6 123.8 L820.9 124.5 L820.2 125.2 L819.4 126.0 L818.7 126.7 L818.0 127.4 L817.3 128.2 L816.6 128.9 L815.9 129.6 L815.1 130.4 L814.4 131.1 L813.7 131.9 L813.0 132.6 L812.3 133.3 L811.6 134.1 L810.9 134.8 L810.2 135.5 L809.5 136.3 L808.8 137.0 L808.1 137.8 L807.4 138.5 L806.7 139.2 L806.0 140.0 L805.3 140.7 L804.6 141.5 L803.9 142.2 L803.2 142.9 L802.5 143.7 L801.8 144.4 L801.2 145.2 L800.5 145.9 L799.8 146.6 L799.1 147.4 L798.4 148.1 L797.8 148.9 L797.1 149.6 L796.4 150.3 L795.7 151.1 L795.1 151.8 L794.4 152.6 L793.7 153.3 L793.0 154.0 L792.4 154.8 L791.7 155.5 L791.1 156.3 L790.4 157.0 L789.7 157.8 L789.1 158.5 L788.4 159.2 L787.8 160.0 L787.1 160.7 L786.5 161.5 L785.8 162.2 L785.2 162.9 L784.5 163.7 L783.9 164.4 L783.2 165.2 L782.6 165.9 L782.0 166.7 L781.3 167.4 L780.7 168.1 L780.1 168.9 L779.4 169.6 L778.8 170.4 L778.2 171.1 L777.6 171.9 L776.9 172.6 L776.3 173.4 L775.7 174.1 L775.1 174.8 L774.5 175.6 L773.9 176.3 L773.2 177.1 L772.6 177.8 L772.0 178.6 L771.4 179.3 L770.8 180.1 L770.2 180.8 L769.6 181.5 L769.0 182.3 L768.4 183.0 L767.8 183.8 L767.2 184.5 L766.7 185.3 L766.1 186.0 L765.5 186.8 L764.9 187.5 L764.3 188.2 L763.7 189.0 L763.2 189.7 L762.6 190.5 L762.0 191.2 L761.5 192.0 L760.9 192.7 L760.3 193.5 L759.8 194.2 L759.2 195.0 L758.7 195.7 L758.1 196.4 L757.5 197.2 L757.0 197.9 L756.4 198.7 L755.9 199.4 L755.4 200.2 L754.8 200.9 L754.3 201.7 L753.7 202.4 L753.2 203.2 L752.7 203.9 L752.1 204.6 L751.6 205.4 L751.1 206.1 L750.6 206.9 L750.1 207.6 L749.5 208.4 L749.0 209.1 L748.5 209.9 L748.0 210.6 L747.5 211.4 L747.0 212.1 L746.5 212.9 L746.0 213.6 L745.5 214.3 L745.0 215.1 L744.5 215.8 L744.0 216.6 L743.5 217.3 L743.0 218.1 L742.5 218.8 L742.1 219.6 L741.6 220.3 L741.1 221.1 L740.6 221.8 L740.2 222.6 L739.7 223.3 L739.2 224.1 L738.8 224.8 L738.3 225.6 L737.9 226.3 L737.4 227.0 L737.0 227.8 L736.5 228.5 L736.1 229.3 L735.6 230.0 L735.2 230.8 L734.7 231.5 L734.3 232.3 L733.9 233.0 L733.4 233.8 L733.0 234.5 L732.6 235.3 L732.2 236.0 L731.7 236.8 L731.3 237.5 L730.9 238.3 L730.5 239.0" stroke="#cc22ee"/>
<path d="M980.0 123.3 L979.1 123.1 L978.3 122.9 L977.4 122.7 L976.6 122.6 L975.7 122.4 L974.9 122.2 L974.0 122.1 L973.2 121.9 L972.3 121.8 L971.5 121.6 L970.7 121.5 L969.8 121.4 L969.0 121.2 L968.2 121.1 L967.4 121.0 L966.6 120.9 L965.7 120.8 L964.9 120.7 L964.1 120.6 L963.3 120.5 L962.5 120.4 L961.7 120.3 L960.9 120.3 L960.2 120.2 L959.4 120.1 L958.6 120.1 L957.8 120.0 L957.0 120.0 L956.3 119.9 L955.5 119.9 L954.7 119.9 L954.0 119.8 L953.2 119.8 L952.4 119.8 L951.7 119.8 L950.9 119.8 L950.2 119.8 L949.4 119.8 L948.7 119.8 L948.0 119.9 L947.2 119.9 L946.5 119.9 L945.7 120.0 L945.0 120.0 L944.3 120.0 L943.6 120.1 L942.8 120.2 L942.1 120.2 L941.4 120.3 L940.7 120.4 L940.0 120.5 L939.2 120.5 L938.5 120.6 L937.8 120.7 L937.1 120.8 L936.4 121.0 L935.7 121.1 L935.0 121.2 L934.3 121.3 L933.6 121.4 L932.9 121.6 L932.2 121.7 L931.5 121.9 L930.8 122.0 L930.1 122.2 L929.4 122.3 L928.7 122.5 L928.1 122.7 L927.4 122.9 L926.7 123.0 L926.0 123.2 L925.3 123.4 L924.6 123.6 L923.9 123.8 L923.3 124.0 L922.6 124.2 L921.9 124.5 L921.2 124.7 L920.6 124.9 L919.9 125.1 L919.2 125.4 L918.5 125.6 L917.9 125.9 L917.2 126.1 L916.5 126.4 L915.8 126.6 L915.2 126.9 L914.5 127.2 L913.8 127.4 L913.1 127.7 L912.5 128.0 L911.8 128.3 L911.1 128.6 L910.5 128.9 L909.8 129.2 L909.1 129.5 L908.5 129.8 L907.8 130.1 L907.1 130.4 L906.5 130.7 L905.8 131.1 L905.1 131.4 L904.5 131.7 L903.8 132.1 L903.1 132.4 L902.5 132.7 L901.8 133.1 L901.1 133.4 L900.5 133.8 L899.8 134.1 L899.1 134.5 L898.5 134.9 L897.8 135.2 L897.1 135.6 L896.5 136.0 L895.8 136.4 L895.1 136.8 L894.5 137.1 L893.8 137.5 L893.1 137.9 L892.4 138.3 L891.8 138.7 L891.1 139.1 L890.4 139.5 L889.8 139.9 L889.1 140.3 L888.4 140.8 L887.8 141.2 L887.1 141.6 L886.4 142.0 L885.8 142.4 L885.1 142.9 L884.4 143.3 L883.7 143.7 L883.1 144.2 L882.4 144.6 L881.7 145.1 L881.0 145.5 L880.4 146.0 L879.7 146.4 L879.0 146.9 L878.4 147.3 L877.7 147.8 L877.0 148.2 L876.3 148.7 L875.7 149.2 L875.0 149.6 L874.3 150.1 L873.6 150.6 L873.0 151.1 L872.3 151.5 L871.6 152.0 L870.9 152.5 L870.2 153.0 L869.6 153.5 L868.9 154.0 L868.2 154.5 L867.5 155.0 L866.9 155.4 L866.2 155.9 L865.5 156.4 L864.8 156.9 L864.1 157.5 L863.5 158.0 L862.8 158.5 L862.1 159.0 L861.4 159.5 L860.7 160.0 L860.1 160.5 L859.4 161.0 L858.7 161.6 L858.0 162.1 L857.3 162.6 L856.7 163.1 L856.0 163.6 L855.3 164.2 L854.6 164.7 L853.9 165.2 L853.2 165.8 L852.6 166.3 L851.9 166.8 L851.2 167.4 L850.5 167.9 L849.8 168.5 L849.2 169.0 L848.5 169.5 L847.8 170.1 L847.1 170.6 L846.4 171.2 L845.7 171.7 L845.1 172.3 L844.4 172.8 L843.7 173.4 L843.0 174.0 L842.3 174.5 L841.7 175.1 L841.0 175.6 L840.3 176.2 L839.6 176.8 L838.9 177.3 L838.2 177.9 L837.6 178.4 L836.9 179.0 L836.2 179.6 L835.5 180.2 L834.8 180.7 L834.2 181.3 L833.5 181.9 L832.8 182.4 L832.1 183.0 L831.5 183.6 L830.8 184.2 L830.1 184.8 L829.4 185.3 L828.7 185.9 L828.1 186.5 L827.4 187.1 L826.7 187.7 L826.0 188.3 L825.4 188.8 L824.7 189.4 L824.0 190.0 L823.3 190.6 L822.7 191.2 L822.0 191.8 L821.3 192.4 L820.6 193.0 L820.0 193.6 L819.3 194.2 L818.6 194.8 L818.0 195.4 L817.3 196.0 L816.6 196.6 L816.0 197.1 L815.3 197.8 L814.6 198.4 L814.0 199.0 L813.3 199.6 L812.6 200.2 L812.0 200.8 L811.3 201.4 L810.6 202.0 L810.0 202.6 L809.3 203.2 L808.6 203.8 L808.0 204.4 L807.3 205.0 L806.7 205.6 L806.0 206.2 L805.4 206.9 L804.7 207.5 L804.0 208.1 L803.4 208.7 L802.7 209.3 L802.1 209.9 L801.4 210.5 L800.8 211.2 L800.1 211.8 L799.5 212.4 L798.8 213.0 L798.2 213.6 L797.5 214.3 L796.9 214.9 L796.2 215.5 L795.6 216.1 L794.9 216.7 L794.3 217.4 L793.7 218.0 L793.0 218.6 L792.4 219.2 L791.7 219.9 L791.1 220.5 L790.5 221.1 L789.8 221.7 L789.2 222.4 L788.6 223.0 L787.9 223.6 L787.3 224.3 L786.7 224.9 L786.1 225.5 L785.4 226.1 L784.8 226.8 L784.2 227.4 L783.5 228.0 L782.9 228.7 L782.3 229.3 L781.7 229.9 L781.1 230.6 L780.4 231.2 L779.8 231.8 L779.2 232.5 L778.6 233.1 L778.0 233.7 L777.4 234.4 L776.8 235.0 L776.2 235.7 L775.6 236.3 L774.9 236.9 L774.3 237.6 L773.7 238.2 L773.1 238.9 L772.5 239.5 L771.9 240.1 L771.3 240.8 L770.7 241.4 L770.1 242.1 L769.6 242.7 L769.0 243.3 L768.4 244.0 L767.8 244.6 L767.2 245.3 L766.6 245.9 L766.0 246.6 L765.4 247.2 L764.9 247.8 L764.3 248.5 L763.7 249.1 L763.1 249.8 L762.6 250.4 L762.0 251.1 L761.4 251.7 L760.8 252.4 L760.3 253.0 L759.7 253.7 L759.1 254.3 L758.6 255.0 L758.0 255.6 L757.4 256.3 L756.9 256.9 L756.3 257.5 L755.8 258.2 L755.2 258.8 L754.7 259.5 L754.1 260.1 L753.6 260.8 L753.0 261.4 L752.5 262.1 L751.9 262.8 L751.4 263.4 L750.9 264.1 L750.3 264.7 L749.8 265.4 L749.2 266.0 L748.7 266.7 L748.2 267.3 L747.7 268.0 L747.1 268.6 L746.6 269.3 L746.1 269.9 L745.6 270.6 L745.0 271.2 L744.5 271.9 L744.0 272.5 L743.5 273.2 L743.0 273.9 L742.5 274.5 L742.0 275.2 L741.5 275.8 L741.0 276.5 L740.4 277.1 L739.9 277.8 L739.5 278.4 L739.0 279.1 L738.5 279.8 L738.0 280.4 L737.5 281.1 L737.0 281.7 L736.5 282.4 L736.0 283.0 L735.5 283.7 L735.1 284.4 L734.6 285.0 L734.1 285.7 L733.6 286.3 L733.2 287.0 L732.7 287.6 L732.2 288.3 L731.8 289.0 L731.3 289.6 L730.8 290.3 L730.4 290.9 L729.9 291.6 L729.5 292.3 L729.0 292.9 L728.6 293.6 L728.1 294.2 L727.7 294.9 L727.2 295.5 L726.8 296.2 L726.3 296.9 L725.9 297.5 L725.5 298.2 L725.0 298.8 L724.6 299.5 L724.2 300.2 L723.7 300.8 L723.3 301.5 L722.9 302.1 L722.5 302.8 L722.1 303.5 L721.6 304.1 L721.2 304.8 L720.8 305.4 L720.4 306.1 L720.0 306.8 L719.6 307.4 L719.2 308.1 L718.8 308.8 L718.4 309.4 L718.0 310.1 L717.6 310.7 L717.2 311.4 L716.8 312.1 L716.4 312.7 L716.1 313.4 L715.7 314.0 L715.3 314.7" stroke="#ee82ee"/>
<path d="M972.4 60.0 L970.8 59.2 L969.2 58.5 L967.6 57.7 L966.0 57.0 L964.3 56.2 L962.7 55.5 L961.1 54.7 L959.5 54.0 L957.9 53.2 L956.3 52.5 L954.6 51.7 L953.0 51.0 L951.4 50.2 L949.8 49.5 L948.1 48.7 L946.5 48.0 L944.9 47.2 L943.3 46.4 L941.6 45.7 L940.0 44.9 L938.4 44.2 L936.8 43.4 L935.1 42.7 L933.5 41.9 L931.9 41.2 L930.2 40.4 L928.6 39.7 L927.0 38.9 L925.4 38.2 L923.7 37.4 L922.1 36.7 L920.5 35.9 L918.8 35.2 L917.2 34.4 L915.6 33.7 L913.9 32.9 L912.3 32.2 L910.7 31.4 L909.1 30.7 L907.4 29.9 L905.8 29.2 L904.3 28.5 L902.9 27.8 L902.1 27.8 L901.4 28.5 L900.7 29.2 L900.0 29.9 L899.2 30.7 L898.5 31.4 L897.8 32.2 L897.1 32.9 L896.3 33.7 L895.6 34.4 L894.9 35.2 L894.1 35.9 L893.4 36.7 L892.7 37.4 L892.0 38.2 L891.2 38.9 L890.5 39.7 L889.8 40.4 L889.0 41.2 L888.3 41.9 L887.6 42.7 L886.9 43.4 L886.1 44.2 L885.4 44.9 L884.7 45.7 L884.0 46.4 L883.2 47.2 L882.5 48.0 L881.8 48.7 L881.0 49.5 L880.3 50.2 L879.6 51.0 L878.9 51.7 L878.1 52.5 L877.4 53.2 L876.7 54.0 L876.0 54.7 L875.2 55.5 L874.5 56.2 L873.8 57.0 L873.1 57.7 L872.4 58.5 L871.6 59.2 L870.9 60.0 L870.2 60.7 L869.5 61.5 L868.8 62.3 L868.0 63.0 L867.3 63.8 L866.6 64.5 L865.9 65.3 L865.2 66.0 L864.5 66.8 L863.8 67.5 L863.0 68.3 L862.3 69.0 L861.6 69.8 L860.9 70.5 L860.2 71.3 L859.5 72.0 L858.8 72.8 L858.1 73.5 L857.3 74.3 L856.6 75.1 L855.9 75.8 L855.2 76.6 L854.5 77.3 L853.8 78.1 L853.1 78.8 L852.4 79.6 L851.7 80.3 L851.0 81.1 L850.3 81.8 L849.6 82.6 L848.9 83.3 L848.2 84.1 L847.5 84.8 L846.8 85.6 L846.1 86.3 L845.4 87.1 L844.7 87.9 L844.0 88.6 L843.3 89.4 L842.7 90.1 L842.0 90.9 L841.3 91.6 L840.6 92.4 L839.9 93.1 L839.2 93.9 L838.5 94.6 L837.8 95.4 L837.2 96.1 L836.5 96.9 L835.8 97.6 L835.1 98.4 L834.4 99.1 L833.8 99.9 L833.1 100.7 L832.4 101.4 L831.7 102.2 L831.1 102.9 L830.4 103.7 L829.7 104.4 L829.1 105.2 L828.4 105.9 L827.7 106.7 L827.1 107.4 L826.4 108.2 L825.7 108.9 L825.1 109.7 L824.4 110.4 L823.7 111.2 L823.1 112.0 L822.4 112.7 L821.8 113.5 L821.1 114.2 L820.5 115.0 L819.8 115.7 L819.2 116.5 L818.5 117.2 L817.9 118.0 L817.2 118.7 L816.6 119.5 L815.9 120.2 L815.3 121.0 L814.7 121.7 L814.0 122.5 L813.4 123.2 L812.7 124.0 L812.1 124.8 L811.5 125.5 L810.8 126.3 L810.2 127.0 L809.6 127.8 L809.0 128.5 L808.3 129.3 L807.7 130.0 L807.1 130.8 L806.5 131.5 L805.8 132.3 L805.2 133.0 L804.6 133.8 L804.0 134.5 L803.4 135.3 L802.8 136.0 L802.2 136.8 L801.5 137.6 L800.9 138.3 L800.3 139.1 L799.7 139.8 L799.1 140.6 L798.5 141.3 L797.9 142.1 L797.3 142.8 L796.7 143.6 L796.1 144.3 L795.6 145.1 L795.0 145.8 L794.4 146.6 L793.8 147.3 L793.2 148.1 L792.6 148.8 L792.0 149.6 L791.5 150.4 L790.9 151.1 L790.3 151.9 L789.7 152.6 L789.2 153.4 L788.6 154.1 L788.0 154.9 L787.5 155.6 L786.9 156.4 L786.3 157.1 L785.8 157.9 L785.2 158.6 L784.7 159.4 L784.1 160.1 L783.5 160.9 L783.0 161.6 L782.4 162.4 L781.9 163.2 L781.4 163.9 L780.8 164.7 L780.3 165.4 L779.7 166.2 L779.2 166.9 L778.7 167.7 L778.1 168.4 L777.6 169.2 L777.1 169.9 L776.5 170.7 L776.0 171.4 L775.5 172.2 L775.0 172.9 L774.4 173.7 L773.9 174.4 L773.4 175.2 L772.9 176.0 L772.4 176.7 L771.9 177.5 L771.4 178.2 L770.9 179.0 L770.4 179.7 L769.9 180.5 L769.4 181.2 L768.9 182.0 L768.4 182.7 L767.9 183.5 L767.4 184.2 L766.9 185.0 L766.4 185.7 L765.9 186.5 L765.5 187.2 L765.0 188.0 L764.5 188.8 L764.0 189.5 L763.6 190.3 L763.1 191.0 L762.6 191.8 L762.2 192.5 L761.7 193.3 L761.2 194.0 L760.8 194.8 L760.3 195.5 L759.9 196.3 L759.4 197.0 L759.0 197.8 L758.5 198.5 L758.1 199.3 L757.6 200.0 L757.2 200.8 L756.8 201.6 L756.3 202.3 L755.9 203.1 L755.5 203.8 L755.0 204.6 L754.6 205.3 L754.2 206.1 L753.8 206.8 L753.4 207.6 L752.9 208.3 L752.5 209.1 L752.1 209.8 L751.7 210.6 L751.3 211.3 L750.9 212.1 L750.5 212.9 L750.1 213.6 L749.7 214.4 L749.3 215.1 L748.9 215.9 L748.5 216.6 L748.2 217.4 L747.8 218.1 L747.4 218.9 L747.0 219.6 L746.6 220.4 L746.3 221.1 L745.9 221.9 L745.5 222.6 L745.2 223.4 L744.8 224.1 L744.4 224.9 L744.1 225.7 L743.7 226.4 L743.4 227.2 L743.0 227.9 L742.7 228.7 L742.3 229.4 L742.0 230.2 L741.7 230.9 L741.3 231.7 L741.0 232.4 L740.6 233.2 L740.3 233.9 L740.0 234.7 L739.7 235.4 L739.3 236.2 L739.0 236.9 L738.7 237.7 L738.4 238.5 L738.1 239.2 L737.8 240.0 L737.5 240.7 L737.2 241.5 L736.9 242.2 L736.6 243.0 L736.3 243.7 L736.0 244.5 L735.7 245.2 L735.4 246.0 L735.1 246.7 L734.9 247.5 L734.6 248.2 L734.3 249.0 L734.0 249.7 L733.8 250.5 L733.5 251.3 L733.2 252.0 L733.0 252.8 L732.7 253.5 L732.5 254.3 L732.2 255.0 L732.0 255.8 L731.7 256.5 L731.5 257.3 L731.2 258.0 L731.0 258.8 L730.7 259.5 L730.5 260.3 L730.3 261.0 L730.0 261.8 L729.8 262.5 L729.6 263.3" stroke="#ff2000"/>
<path d="M1160.8 127.5 L1159.6 126.8 L1158.5 126.2 L1157.3 125.5 L1156.2 124.9 L1155.0 124.2 L1153.9 123.6 L1152.7 122.9 L1151.6 122.3 L1150.4 121.7 L1149.3 121.0 L1148.1 120.4 L1147.0 119.7 L1145.8 119.1 L1144.7 118.5 L1143.5 117.8 L1142.4 117.2 L1141.2 116.6 L1140.1 115.9 L1138.9 115.3 L1137.8 114.7 L1136.7 114.1 L1135.5 113.4 L1134.4 112.8 L1133.3 112.2 L1132.1 111.6 L1131.0 111.0 L1129.9 110.4 L1128.8 109.8 L1127.7 109.2 L1126.6 108.5 L1125.4 107.9 L1124.3 107.3 L1123.2 106.7 L1122.1 106.2 L1121.0 105.6 L1120.0 105.0 L1118.9 104.4 L1117.8 103.8 L1116.7 103.2 L1115.7 102.6 L1114.6 102.1 L1113.5 101.5 L1112.5 100.9 L1111.5 100.3 L1110.4 99.8 L1109.4 99.2 L1108.4 98.7 L1107.4 98.1 L1106.4 97.6 L1105.4 97.0 L1104.4 96.5 L1103.4 95.9 L1102.4 95.4 L1101.4 94.9 L1100.5 94.3 L1099.6 93.8 L1098.6 93.3 L1097.7 92.8 L1096.8 92.3 L1095.9 91.8 L1095.0 91.3 L1094.1 90.8 L1093.3 90.3 L1092.4 89.8 L1091.6 89.3 L1090.8 88.8 L1090.0 88.4 L1089.2 87.9M716.7 87.4 L718.6 87.0 L720.6 86.5 L722.5 86.1 L724.4 85.7 L726.3 85.2 L728.1 84.8 L730.0 84.4 L731.8 84.0 L733.6 83.6 L735.4 83.2 L737.1 82.8 L738.9 82.4 L740.6 82.0 L742.3 81.7 L744.0 81.3 L745.7 81.0 L747.3 80.6 L748.9 80.3 L750.5 80.0 L752.1 79.6 L753.6 79.3 L755.2 79.0 L756.7 78.7 L758.1 78.4 L759.6 78.2 L761.0 77.9 L762.4 77.7 L763.8 77.4 L765.1 77.2 L766.4 77.0 L767.7 76.7 L769.0 76.5 L770.2 76.3 L771.4 76.2 L772.6 76.0 L773.8 75.8 L774.9 75.7 L776.0 75.5 L777.1 75.4 L778.1 75.3 L779.1 75.2 L780.1 75.1 L781.0 75.0 L782.0 74.9 L782.9 74.9 L783.7 74.8 L784.6 74.8 L785.4 74.8 L786.2 74.7 L786.9 74.7 L787.7 74.8 L788.4 74.8 L789.0 74.8 L789.7 74.8 L790.3 74.9 L790.9 75.0 L791.5 75.0 L792.0 75.1 L792.5 75.2 L793.0 75.4 L793.5 75.5 L794.0 75.6 L794.4 75.8 L794.8 75.9 L795.1 76.1 L795.5 76.3 L795.8 76.4 L796.1 76.6 L796.4 76.9 L796.7 77.1 L796.9 77.3 L797.1 77.5 L797.3 77.8 L797.5 78.1 L797.7 78.3 L797.8 78.6 L798.0 78.9 L798.1 79.2 L798.2 79.5 L798.2 79.8 L798.3 80.1 L798.3 80.5 L798.4 80.8 L798.4 81.2 L798.4 81.5 L798.4 81.9 L798.3 82.2 L798.3 82.6 L798.2 83.0 L798.2 83.4 L798.1 83.8 L798.0 84.2 L797.9 84.6 L797.8 85.0 L797.7 85.5 L797.5 85.9 L797.4 86.3 L797.2 86.8 L797.1 87.2 L796.9 87.7 L796.7 88.2 L796.5 88.6 L796.3 89.1 L796.1 89.6 L795.9 90.1 L795.7 90.6 L795.5 91.0 L795.2 91.5 L795.0 92.1 L794.7 92.6 L794.5 93.1 L794.2 93.6 L793.9 94.1 L793.7 94.6 L793.4 95.2 L793.1 95.7 L792.8 96.2 L792.5 96.8 L792.2 97.3 L791.9 97.9 L791.6 98.4 L791.3 99.0 L791.0 99.5 L790.7 100.1 L790.4 100.7 L790.0 101.2 L789.7 101.8 L789.4 102.4 L789.0 103.0 L788.7 103.5 L788.4 104.1 L788.0 104.7 L787.7 105.3 L787.3 105.9 L787.0 106.5 L786.6 107.1 L786.3 107.7 L785.9 108.3 L785.5 108.9 L785.2 109.5 L784.8 110.1 L784.4 110.7 L784.1 111.3 L783.7 111.9 L783.3 112.6 L783.0 113.2 L782.6 113.8 L782.2 114.4 L781.9 115.0 L781.5 115.7 L781.1 116.3 L780.7 116.9 L780.3 117.6 L780.0 118.2 L779.6 118.8 L779.2 119.5 L778.8 120.1 L778.5 120.7 L778.1 121.4 L777.7 122.0 L777.3 122.7 L776.9 123.3 L776.5 124.0 L776.2 124.6 L775.8 125.3 L775.4 125.9 L775.0 126.6 L774.6 127.2 L774.3 127.9 L773.9 128.5 L773.5 129.2 L773.1 129.8 L772.7 130.5 L772.4 131.2 L772.0 131.8 L771.6 132.5 L771.2 133.1 L770.8 133.8 L770.5 134.5 L770.1 135.1 L769.7 135.8 L769.3 136.5 L769.0 137.2 L768.6 137.8 L768.2 138.5 L767.8 139.2 L767.5 139.8 L767.1 140.5 L766.7 141.2 L766.4 141.9 L766.0 142.5 L765.6 143.2 L765.3 143.9 L764.9 144.6 L764.5 145.3 L764.2 145.9 L763.8 146.6 L763.4 147.3 L763.1 148.0 L762.7 148.7 L762.4 149.4 L762.0 150.0 L761.6 150.7 L761.3 151.4 L760.9 152.1 L760.6 152.8 L760.2 153.5 L759.9 154.2 L759.5 154.9 L759.2 155.5 L758.9 156.2 L758.5 156.9 L758.2 157.6 L757.8 158.3 L757.5 159.0 L757.2 159.7 L756.8 160.4 L756.5 161.1 L756.2 161.8 L755.8 162.5 L755.5 163.2 L755.2 163.9 L754.8 164.6 L754.5 165.3 L754.2 166.0 L753.9 166.7 L753.6 167.4 L753.2 168.1 L752.9 168.8 L752.6 169.5 L752.3 170.2 L752.0 170.9 L751.7 171.6 L751.4 172.3 L751.1 173.0 L750.8 173.7 L750.5 174.4 L750.2 175.1 L749.9 175.8 L749.6 176.5 L749.3 177.2 L749.0 177.9 L748.7 178.6 L748.4 179.3 L748.1 180.0 L747.8 180.7 L747.5 181.4 L747.3 182.1 L747.0 182.8 L746.7 183.5 L746.4 184.2 L746.2 185.0 L745.9 185.7 L745.6 186.4 L745.4 187.1 L745.1 187.8 L744.8 188.5 L744.6 189.2 L744.3 189.9 L744.1 190.6 L743.8 191.3 L743.6 192.0 L743.3 192.8 L743.1 193.5 L742.8 194.2 L742.6 194.9 L742.3 195.6 L742.1 196.3 L741.8 197.0 L741.6 197.7 L741.4 198.5 L741.2 199.2 L740.9 199.9 L740.7 200.6 L740.5 201.3 L740.3 202.0 L740.0 202.7 L739.8 203.5 L739.6 204.2 L739.4 204.9 L739.2 205.6 L739.0 206.3 L738.8 207.0 L738.6 207.7 L738.4 208.5 L738.2 209.2 L738.0 209.9 L737.8 210.6 L737.6 211.3 L737.4 212.0 L737.2 212.8 L737.0 213.5 L736.8 214.2 L736.7 214.9 L736.5 215.6 L736.3 216.4 L736.1 217.1 L736.0 217.8 L735.8 218.5 L735.6 219.2 L735.5 219.9 L735.3 220.7 L735.1 221.4 L735.0 222.1 L734.8 222.8 L734.7 223.5 L734.5 224.3 L734.4 225.0 L734.2 225.7 L734.1 226.4 L734.0 227.1 L733.8 227.9 L733.7 228.6 L733.6 229.3 L733.4 230.0 L733.3 230.7 L733.2 231.5 L733.1 232.2 L732.9 232.9 L732.8 233.6 L732.7 234.4 L732.6 235.1 L732.5 235.8 L732.4 236.5 L732.3 237.2 L732.2 238.0 L732.1 238.7 L732.0 239.4 L731.9 240.1 L731.8 240.9 L731.7 241.6 L731.6 242.3 L731.5 243.0 L731.4 243.7 L731.4 244.5 L731.3 245.2 L731.2 245.9 L731.1 246.6 L731.1 247.4 L731.0 248.1 L730.9 248.8 L730.9 249.5 L730.8 250.3 L730.8 251.0 L730.7 251.7 L730.7 252.4 L730.6 253.2 L730.6 253.9 L730.5 254.6 L730.5 255.3 L730.4 256.1 L730.4 256.8 L730.4 257.5 L730.3 258.2 L730.3 258.9 L730.3 259.7 L730.3 260.4 L730.2 261.1 L730.2 261.8 L730.2 262.6 L730.2 263.3" stroke="#ff2000"/>
<path d="M890.2 33.9 L889.8 34.5 L889.3 35.1 L888.8 35.7 L888.3 36.3 L887.7 36.9 L887.1 37.6 L886.5 38.3 L885.8 38.9 L885.2 39.6 L884.5 40.3 L883.9 41.0 L883.2 41.7 L882.6 42.4 L881.9 43.2 L881.2 43.9 L880.5 44.6 L879.8 45.3 L879.1 46.1 L878.4 46.8 L877.8 47.5 L877.1 48.2 L876.4 49.0 L875.7 49.7 L875.0 50.5 L874.3 51.2 L873.6 51.9 L872.9 52.7 L872.2 53.4 L871.5 54.1 L870.8 54.9 L870.1 55.6 L869.4 56.4 L868.7 57.1 L868.0 57.9 L867.3 58.6 L866.6 59.4 L865.9 60.1 L865.1 60.8 L864.4 61.6 L863.7 62.3 L863.0 63.1 L862.3 63.8 L861.6 64.6 L860.9 65.3 L860.2 66.1 L859.5 66.8 L858.8 67.6 L858.2 68.3 L857.5 69.1 L856.8 69.8 L856.1 70.6 L855.4 71.3 L854.7 72.1 L854.0 72.8 L853.3 73.6 L852.6 74.3 L851.9 75.1 L851.2 75.8 L850.5 76.6 L849.8 77.3 L849.1 78.1 L848.4 78.8 L847.8 79.6 L847.1 80.3 L846.4 81.1 L845.7 81.8 L845.0 82.6 L844.3 83.3 L843.6 84.1 L843.0 84.8 L842.3 85.6 L841.6 86.3 L840.9 87.1 L840.2 87.8 L839.6 88.6 L838.9 89.3 L838.2 90.1 L837.5 90.8 L836.9 91.6 L836.2 92.3 L835.5 93.1 L834.8 93.8 L834.2 94.6 L833.5 95.3 L832.8 96.1 L832.2 96.8 L831.5 97.6 L830.8 98.3 L830.2 99.1 L829.5 99.8 L828.9 100.6 L828.2 101.4 L827.5 102.1 L826.9 102.9 L826.2 103.6 L825.6 104.4 L824.9 105.1 L824.3 105.9 L823.6 106.6 L823.0 107.4 L822.3 108.1 L821.7 108.9 L821.0 109.6 L820.4 110.4 L819.7 111.1 L819.1 111.9 L818.4 112.6 L817.8 113.4 L817.2 114.1 L816.5 114.9 L815.9 115.6 L815.3 116.4 L814.6 117.2 L814.0 117.9 L813.4 118.7 L812.7 119.4 L812.1 120.2 L811.5 120.9 L810.9 121.7 L810.2 122.4 L809.6 123.2 L809.0 123.9 L808.4 124.7 L807.8 125.4 L807.1 126.2 L806.5 126.9 L805.9 127.7 L805.3 128.4 L804.7 129.2 L804.1 130.0 L803.5 130.7 L802.9 131.5 L802.3 132.2 L801.7 133.0 L801.1 133.7 L800.5 134.5 L799.9 135.2 L799.3 136.0 L798.7 136.7 L798.1 137.5 L797.5 138.2 L796.9 139.0 L796.3 139.7 L795.8 140.5 L795.2 141.2 L794.6 142.0 L794.0 142.8 L793.4 143.5 L792.9 144.3 L792.3 145.0 L791.7 145.8 L791.2 146.5 L790.6 147.3 L790.0 148.0 L789.5 148.8 L788.9 149.5 L788.3 150.3 L787.8 151.0 L787.2 151.8 L786.7 152.5 L786.1 153.3 L785.5 154.0 L785.0 154.8 L784.5 155.6 L783.9 156.3 L783.4 157.1 L782.8 157.8 L782.3 158.6 L781.7 159.3 L781.2 160.1 L780.7 160.8 L780.1 161.6 L779.6 162.3 L779.1 163.1 L778.6 163.8 L778.0 164.6 L777.5 165.3 L777.0 166.1 L776.5 166.9 L776.0 167.6 L775.4 168.4 L774.9 169.1 L774.4 169.9 L773.9 170.6 L773.4 171.4 L772.9 172.1 L772.4 172.9 L771.9 173.6 L771.4 174.4 L770.9 175.1 L770.4 175.9 L769.9 176.6 L769.4 177.4 L768.9 178.2 L768.5 178.9 L768.0 179.7 L767.5 180.4 L767.0 181.2 L766.5 181.9 L766.1 182.7 L765.6 183.4 L765.1 184.2 L764.7 184.9 L764.2 185.7 L763.7 186.4 L763.3 187.2 L762.8 187.9 L762.4 188.7 L761.9 189.5 L761.5 190.2 L761.0 191.0 L760.6 191.7 L760.1 192.5 L759.7 193.2 L759.2 194.0 L758.8 194.7 L758.4 195.5 L757.9 196.2 L757.5 197.0 L757.1 197.7 L756.7 198.5 L756.2 199.3 L755.8 200.0 L755.4 200.8 L755.0 201.5 L754.6 202.3 L754.1 203.0 L753.7 203.8 L753.3 204.5 L752.9 205.3 L752.5 206.0 L752.1 206.8 L751.7 207.5 L751.3 208.3 L750.9 209.0 L750.6 209.8 L750.2 210.6 L749.8 211.3 L749.4 212.1 L749.0 212.8 L748.7 213.6 L748.3 214.3 L747.9 215.1 L747.5 215.8 L747.2 216.6 L746.8 217.3 L746.4 218.1 L746.1 218.8 L745.7 219.6 L745.4 220.3 L745.0 221.1 L744.7 221.9 L744.3 222.6 L744.0 223.4 L743.6 224.1 L743.3 224.9 L743.0 225.6 L742.6 226.4 L742.3 227.1 L742.0 227.9 L741.7 228.6 L741.3 229.4 L741.0 230.1 L740.7 230.9 L740.4 231.7 L740.1 232.4 L739.8 233.2 L739.5 233.9 L739.1 234.7 L738.8 235.4 L738.5 236.2 L738.3 236.9 L738.0 237.7 L737.7 238.4 L737.4 239.2 L737.1 239.9 L736.8 240.7 L736.5 241.4 L736.3 242.2 L736.0 243.0 L735.7 243.7 L735.4 244.5 L735.2 245.2 L734.9 246.0 L734.6 246.7 L734.4 247.5 L734.1 248.2 L733.9 249.0 L733.6 249.7 L733.4 250.5 L733.1 251.2 L732.9 252.0 L732.7 252.8 L732.4 253.5 L732.2 254.3 L732.0 255.0 L731.7 255.8 L731.5 256.5 L731.3 257.3 L731.1 258.0 L730.8 258.8 L730.6 259.5 L730.4 260.3 L730.2 261.0 L730.0 261.8 L729.8 262.5 L729.6 263.3" stroke="#ff2000"/>
<path d="M922.1 37.0 L920.5 36.3 L918.9 35.5 L917.2 34.8 L915.6 34.0 L914.0 33.3 L912.4 32.5 L910.8 31.8 L909.2 31.1 L907.7 30.4 L906.2 29.7 L904.8 29.1 L903.6 28.6 L902.7 28.4 L902.0 28.7 L901.4 29.2 L900.7 29.9 L900.0 30.6 L899.3 31.3 L898.6 32.0 L897.9 32.8 L897.2 33.5 L896.5 34.2 L895.8 35.0 L895.0 35.7 L894.3 36.5 L893.6 37.2 L892.8 38.0 L892.1 38.7 L891.4 39.5 L890.7 40.2 L889.9 41.0 L889.2 41.7 L888.5 42.5 L887.7 43.2 L887.0 44.0 L886.3 44.7 L885.6 45.5 L884.8 46.2 L884.1 47.0 L883.4 47.7 L882.7 48.5 L881.9 49.2 L881.2 50.0 L880.5 50.7 L879.7 51.5 L879.0 52.3 L878.3 53.0 L877.6 53.8 L876.8 54.5 L876.1 55.3 L875.4 56.0 L874.7 56.8 L873.9 57.5 L873.2 58.3 L872.5 59.0 L871.8 59.8 L871.1 60.5 L870.3 61.3 L869.6 62.0 L868.9 62.8 L868.2 63.6 L867.5 64.3 L866.7 65.1 L866.0 65.8 L865.3 66.6 L864.6 67.3 L863.9 68.1 L863.2 68.8 L862.4 69.6 L861.7 70.3 L861.0 71.1 L860.3 71.8 L859.6 72.6 L858.9 73.3 L858.2 74.1 L857.5 74.9 L856.7 75.6 L856.0 76.4 L855.3 77.1 L854.6 77.9 L853.9 78.6 L853.2 79.4 L852.5 80.1 L851.8 80.9 L851.1 81.6 L850.4 82.4 L849.7 83.1 L849.0 83.9 L848.3 84.7 L847.6 85.4 L846.9 86.2 L846.2 86.9 L845.5 87.7 L844.8 88.4 L844.1 89.2 L843.4 89.9 L842.7 90.7 L842.0 91.4 L841.3 92.2 L840.7 92.9 L840.0 93.7 L839.3 94.5 L838.6 95.2 L837.9 96.0 L837.2 96.7 L836.5 97.5 L835.9 98.2 L835.2 99.0 L834.5 99.7 L833.8 100.5 L833.1 101.2 L832.5 102.0 L831.8 102.7 L831.1 103.5 L830.4 104.2 L829.8 105.0 L829.1 105.8 L828.4 106.5 L827.8 107.3 L827.1 108.0 L826.4 108.8 L825.8 109.5 L825.1 110.3 L824.4 111.0 L823.8 111.8 L823.1 112.5 L822.4 113.3 L821.8 114.0 L821.1 114.8 L820.5 115.6 L819.8 116.3 L819.2 117.1 L818.5 117.8 L817.9 118.6 L817.2 119.3 L816.6 120.1 L815.9 120.8 L815.3 121.6 L814.7 122.3 L814.0 123.1 L813.4 123.8 L812.7 124.6 L812.1 125.4 L811.5 126.1 L810.8 126.9 L810.2 127.6 L809.6 128.4 L808.9 129.1 L808.3 129.9 L807.7 130.6 L807.1 131.4 L806.4 132.1 L805.8 132.9 L805.2 133.6 L804.6 134.4 L804.0 135.2 L803.3 135.9 L802.7 136.7 L802.1 137.4 L801.5 138.2 L800.9 138.9 L800.3 139.7 L799.7 140.4 L799.1 141.2 L798.5 141.9 L797.9 142.7 L797.3 143.4 L796.7 144.2 L796.1 145.0 L795.5 145.7 L794.9 146.5 L794.3 147.2 L793.7 148.0 L793.1 148.7 L792.6 149.5 L792.0 150.2 L791.4 151.0 L790.8 151.7 L790.2 152.5 L789.7 153.2 L789.1 154.0 L788.5 154.8 L787.9 155.5 L787.4 156.3 L786.8 157.0 L786.2 157.8 L785.7 158.5 L785.1 159.3 L784.6 160.0 L784.0 160.8 L783.5 161.5 L782.9 162.3 L782.4 163.0 L781.8 163.8 L781.3 164.6 L780.7 165.3 L780.2 166.1 L779.6 166.8 L779.1 167.6 L778.6 168.3 L778.0 169.1 L777.5 169.8 L777.0 170.6 L776.4 171.3 L775.9 172.1 L775.4 172.8 L774.9 173.6 L774.3 174.4 L773.8 175.1 L773.3 175.9 L772.8 176.6 L772.3 177.4 L771.8 178.1 L771.3 178.9 L770.7 179.6 L770.2 180.4 L769.7 181.1 L769.2 181.9 L768.7 182.6 L768.3 183.4 L767.8 184.1 L767.3 184.9 L766.8 185.7 L766.3 186.4 L765.8 187.2 L765.3 187.9 L764.8 188.7 L764.4 189.4 L763.9 190.2 L763.4 190.9 L763.0 191.7 L762.5 192.4 L762.0 193.2 L761.6 193.9 L761.1 194.7 L760.6 195.5 L760.2 196.2 L759.7 197.0 L759.3 197.7 L758.8 198.5 L758.4 199.2 L757.9 200.0 L757.5 200.7 L757.0 201.5 L756.6 202.2 L756.2 203.0 L755.7 203.7 L755.3 204.5 L754.9 205.3 L754.5 206.0 L754.0 206.8 L753.6 207.5 L753.2 208.3 L752.8 209.0 L752.4 209.8 L752.0 210.5 L751.5 211.3 L751.1 212.0 L750.7 212.8 L750.3 213.5 L749.9 214.3 L749.5 215.1 L749.1 215.8 L748.7 216.6 L748.4 217.3 L748.0 218.1 L747.6 218.8 L747.2 219.6 L746.8 220.3 L746.5 221.1 L746.1 221.8 L745.7 222.6 L745.3 223.3 L745.0 224.1 L744.6 224.9 L744.2 225.6 L743.9 226.4 L743.5 227.1 L743.2 227.9 L742.8 228.6 L742.5 229.4 L742.1 230.1 L741.8 230.9 L741.5 231.6 L741.1 232.4 L740.8 233.1 L740.4 233.9 L740.1 234.7 L739.8 235.4 L739.5 236.2 L739.1 236.9 L738.8 237.7 L738.5 238.4 L738.2 239.2 L737.9 239.9 L737.6 240.7 L737.3 241.4 L737.0 242.2 L736.7 242.9 L736.4 243.7 L736.1 244.5 L735.8 245.2 L735.5 246.0 L735.2 246.7 L734.9 247.5 L734.6 248.2 L734.4 249.0 L734.1 249.7 L733.8 250.5 L733.5 251.2 L733.3 252.0 L733.0 252.7 L732.8 253.5 L732.5 254.3 L732.2 255.0 L732.0 255.8 L731.7 256.5 L731.5 257.3 L731.2 258.0 L731.0 258.8 L730.8 259.5 L730.5 260.3 L730.3 261.0 L730.1 261.8 L729.8 262.5 L729.6 263.3" stroke="#ff2000"/>
<path d="M764.2 94.7 L764.4 94.9 L764.7 95.2 L764.9 95.5 L765.1 95.7 L765.3 96.0 L765.4 96.3 L765.6 96.6 L765.7 96.8 L765.9 97.1 L766.0 97.5 L766.1 97.8 L766.2 98.1 L766.3 98.4 L766.4 98.7 L766.4 99.1 L766.5 99.4 L766.5 99.8 L766.6 100.1 L766.6 100.5 L766.6 100.8 L766.6 101.2 L766.6 101.6 L766.6 102.0 L766.6 102.4 L766.6 102.7 L766.6 103.1 L766.5 103.5 L766.5 104.0 L766.4 104.4 L766.3 104.8 L766.3 105.2 L766.2 105.6 L766.1 106.1 L766.0 106.5 L765.9 106.9 L765.8 107.4 L765.7 107.8 L765.6 108.3 L765.5 108.7 L765.4 109.2 L765.2 109.7 L765.1 110.1 L764.9 110.6 L764.8 111.1 L764.6 111.6 L764.5 112.1 L764.3 112.5 L764.2 113.0 L764.0 113.5 L763.8 114.0 L763.6 114.5 L763.5 115.0 L763.3 115.5 L763.1 116.1 L762.9 116.6 L762.7 117.1 L762.5 117.6 L762.3 118.1 L762.1 118.7 L761.9 119.2 L761.7 119.7 L761.5 120.3 L761.2 120.8 L761.0 121.3 L760.8 121.9 L760.6 122.4 L760.3 123.0 L760.1 123.5 L759.9 124.1 L759.7 124.6 L759.4 125.2 L759.2 125.8 L758.9 126.3 L758.7 126.9 L758.5 127.5 L758.2 128.0 L758.0 128.6 L757.7 129.2 L757.5 129.7 L757.2 130.3 L757.0 130.9 L756.7 131.5 L756.5 132.1 L756.2 132.7 L756.0 133.2 L755.7 133.8 L755.5 134.4 L755.2 135.0 L755.0 135.6 L754.7 136.2 L754.5 136.8 L754.2 137.4 L753.9 138.0 L753.7 138.6 L753.4 139.2 L753.2 139.8 L752.9 140.4 L752.6 141.0 L752.4 141.7 L752.1 142.3 L751.9 142.9 L751.6 143.5 L751.4 144.1 L751.1 144.7 L750.8 145.3 L750.6 146.0 L750.3 146.6 L750.1 147.2 L749.8 147.8 L749.5 148.5 L749.3 149.1 L749.0 149.7 L748.8 150.4 L748.5 151.0 L748.3 151.6 L748.0 152.2 L747.8 152.9 L747.5 153.5 L747.3 154.2 L747.0 154.8 L746.7 155.4 L746.5 156.1 L746.2 156.7 L746.0 157.4 L745.8 158.0 L745.5 158.6 L745.3 159.3 L745.0 159.9 L744.8 160.6 L744.5 161.2 L744.3 161.9 L744.0 162.5 L743.8 163.2 L743.6 163.8 L743.3 164.5 L743.1 165.1 L742.9 165.8 L742.6 166.4 L742.4 167.1 L742.2 167.7 L741.9 168.4 L741.7 169.1 L741.5 169.7 L741.2 170.4 L741.0 171.0 L740.8 171.7 L740.6 172.4 L740.4 173.0 L740.1 173.7 L739.9 174.3 L739.7 175.0 L739.5 175.7 L739.3 176.3 L739.1 177.0 L738.9 177.7 L738.6 178.3 L738.4 179.0 L738.2 179.7 L738.0 180.3 L737.8 181.0 L737.6 181.7 L737.4 182.3 L737.2 183.0 L737.0 183.7 L736.8 184.4 L736.6 185.0 L736.5 185.7 L736.3 186.4 L736.1 187.1 L735.9 187.7 L735.7 188.4 L735.5 189.1 L735.4 189.8 L735.2 190.4 L735.0 191.1 L734.8 191.8 L734.7 192.5 L734.5 193.1 L734.3 193.8 L734.1 194.5 L734.0 195.2 L733.8 195.9 L733.7 196.5 L733.5 197.2 L733.3 197.9 L733.2 198.6 L733.0 199.3 L732.9 200.0 L732.7 200.6 L732.6 201.3 L732.4 202.0 L732.3 202.7 L732.2 203.4 L732.0 204.1 L731.9 204.7 L731.7 205.4 L731.6 206.1 L731.5 206.8 L731.4 207.5 L731.2 208.2 L731.1 208.9 L731.0 209.6 L730.9 210.2 L730.7 210.9 L730.6 211.6 L730.5 212.3 L730.4 213.0 L730.3 213.7 L730.2 214.4 L730.1 215.1 L730.0 215.8 L729.9 216.5 L729.8 217.2 L729.7 217.8 L729.6 218.5 L729.5 219.2 L729.4 219.9 L729.3 220.6 L729.2 221.3 L729.1 222.0 L729.1 222.7 L729.0 223.4 L728.9 224.1 L728.8 224.8 L728.8 225.5 L728.7 226.2 L728.6 226.9 L728.6 227.6 L728.5 228.3 L728.4 229.0 L728.4 229.6 L728.3 230.3 L728.3 231.0 L728.2 231.7 L728.2 232.4 L728.1 233.1 L728.1 233.8 L728.0 234.5 L728.0 235.2 L728.0 235.9 L727.9 236.6 L727.9 237.3 L727.9 238.0 L727.8 238.7 L727.8 239.4 L727.8 240.1 L727.8 240.8 L727.8 241.5 L727.7 242.2 L727.7 242.9 L727.7 243.6 L727.7 244.3 L727.7 245.0 L727.7 245.7 L727.7 246.4 L727.7 247.1 L727.7 247.8 L727.7 248.5 L727.7 249.2 L727.7 249.9 L727.7 250.6 L727.8 251.3 L727.8 252.0 L727.8 252.7 L727.8 253.4 L727.8 254.1 L727.9 254.9 L727.9 255.6 L727.9 256.3 L728.0 257.0 L728.0 257.7 L728.1 258.4 L728.1 259.1 L728.1 259.8 L728.2 260.5 L728.2 261.2 L728.3 261.9 L728.3 262.6 L728.4 263.3" stroke="#ff2000"/>
</g>
<g fill="none" stroke-width="2">
<path d="M781.7 72.5 L781.3 72.6 L780.9 72.7 L780.5 72.8 L780.1 72.9 L779.7 73.0 L779.4 73.2 L779.0 73.3 L778.6 73.4 L778.2 73.5 L777.8 73.6 L777.4 73.7 L777.0 73.8 L776.6 73.9 L776.2 74.0 L775.8 74.2 L775.4 74.3 L775.0 74.4 L774.6 74.5 L774.2 74.6 L773.8 74.7 L773.4 74.8 L773.0 75.0 L772.6 75.1 L772.2 75.2 L771.8 75.3 L771.4 75.4 L771.0 75.5 L770.6 75.6 L770.2 75.8 L769.8 75.9 L769.4 76.0 L769.0 76.1 L768.6 76.2 L768.2 76.3 L767.8 76.4 L767.3 76.6 L766.9 76.7 L766.5 76.8 L766.1 76.9 L765.7 77.0 L765.3 77.2 L764.9 77.3 L764.5 77.4 L764.1 77.5 L763.7 77.6 L763.3 77.7 L762.8 77.9 L762.4 78.0 L762.0 78.1 L761.6 78.2 L761.2 78.3 L760.8 78.5 L760.4 78.6 L759.9 78.7 L759.5 78.8 L759.1 78.9 L758.7 79.1 L758.3 79.2 L757.9 79.3 L757.5 79.4 L757.0 79.5 L756.6 79.7 L756.2 79.8 L755.8 79.9 L755.4 80.0 L754.9 80.1 L754.5 80.3 L754.1 80.4 L753.7 80.5 L753.3 80.6 L752.8 80.7 L752.4 80.9 L752.0 81.0 L751.6 81.1 L751.2 81.2 L750.7 81.4 L750.3 81.5 L749.9 81.6 L749.5 81.7 L749.0 81.9 L748.6 82.0 L748.2 82.1 L747.8 82.2 L747.3 82.3 L746.9 82.5 L746.5 82.6 L746.1 82.7 L745.6 82.8 L745.2 83.0 L744.8 83.1 L744.4 83.2 L743.9 83.3 L743.5 83.5 L743.1 83.6 L742.7 83.7 L742.2 83.8 L741.8 84.0 L741.4 84.1 L740.9 84.2 L740.5 84.4 L740.1 84.5 L739.7 84.6 L739.2 84.7 L738.8 84.9 L738.4 85.0 L737.9 85.1 L737.5 85.2 L737.1 85.4 L736.6 85.5 L736.2 85.6 L735.8 85.7 L735.4 85.9 L734.9 86.0 L734.5 86.1 L734.1 86.3 L733.6 86.4 L733.2 86.5 L732.8 86.6 L732.3 86.8 L731.9 86.9 L731.5 87.0 L731.0 87.2 L730.6 87.3 L730.2 87.4 L729.7 87.5 L729.3 87.7 L728.8 87.8 L728.4 87.9 L728.0 88.1 L727.5 88.2 L727.1 88.3 L726.7 88.4 L726.2 88.6 L725.8 88.7" stroke="#18ee80"/>
<path d="M977.8 81.3 L977.8 81.4 L977.9 81.5 L977.9 81.6 L977.9 81.7 L977.9 81.8 L978.0 81.9 L978.0 82.0 L978.0 82.1 L978.1 82.2 L978.1 82.3 L978.1 82.4 L978.2 82.5 L978.2 82.6 L978.2 82.8 L978.3 82.9 L978.3 83.0 L978.3 83.1 L978.3 83.2 L978.4 83.3 L978.4 83.4 L978.4 83.5 L978.5 83.6 L978.5 83.7 L978.6 83.8 L978.6 83.9 L978.6 84.0 L978.7 84.1 L978.7 84.2 L978.7 84.4 L978.8 84.5 L978.8 84.6 L978.8 84.7 L978.9 84.8 L978.9 84.9 L978.9 85.0 L979.0 85.1 L979.0 85.2 L979.1 85.3 L979.1 85.4 L979.1 85.6 L979.2 85.7 L979.2 85.8 L979.2 85.9 L979.3 86.0 L979.3 86.1 L979.4 86.2 L979.4 86.3 L979.4 86.4 L979.5 86.6 L979.5 86.7 L979.6 86.8 L979.6 86.9 L979.6 87.0 L979.7 87.1 L979.7 87.2 L979.8 87.3 L979.8 87.5 L979.8 87.6 L979.9 87.7 L979.9 87.8 L980.0 87.9 L980.0 88.0 L980.0 88.1 L980.1 88.3 L980.1 88.4 L980.2 88.5 L980.2 88.6 L980.3 88.7 L980.3 88.8 L980.3 88.9 L980.4 89.1 L980.4 89.2 L980.5 89.3 L980.5 89.4 L980.6 89.5 L980.6 89.6 L980.6 89.8 L980.7 89.9 L980.7 90.0 L980.8 90.1 L980.8 90.2 L980.9 90.3 L980.9 90.5 L981.0 90.6 L981.0 90.7 L981.0 90.8 L981.1 90.9 L981.1 91.0 L981.2 91.2 L981.2 91.3 L981.3 91.4 L981.3 91.5 L981.4 91.6 L981.4 91.8 L981.5 91.9 L981.5 92.0 L981.5 92.1 L981.6 92.2 L981.6 92.3 L981.7 92.5 L981.7 92.6 L981.8 92.7 L981.8 92.8 L981.9 92.9 L981.9 93.1 L982.0 93.2 L982.0 93.3 L982.1 93.4 L982.1 93.5 L982.2 93.7 L982.2 93.8 L982.3 93.9 L982.3 94.0 L982.4 94.1 L982.4 94.3 L982.5 94.4 L982.5 94.5 L982.5 94.6 L982.6 94.8 L982.6 94.9 L982.7 95.0 L982.7 95.1 L982.8 95.2 L982.8 95.4 L982.9 95.5 L982.9 95.6 L983.0 95.7 L983.0 95.9 L983.1 96.0 L983.1 96.1 L983.2 96.2 L983.2 96.3 L983.3 96.5 L983.3 96.6 L983.4 96.7 L983.4 96.8 L983.5 97.0 L983.5 97.1 L983.6 97.2 L983.6 97.3 L983.7 97.5 L983.7 97.6 L983.8 97.7 L983.8 97.8 L983.9 98.0 L983.9 98.1 L984.0 98.2" stroke="#55cc00"/>
<path d="M1155.0 116.3 L1154.7 116.2 L1154.4 116.2 L1154.0 116.1 L1153.7 116.0 L1153.4 116.0 L1153.1 115.9 L1152.8 115.8 L1152.5 115.8 L1152.1 115.7 L1151.8 115.6 L1151.5 115.6 L1151.2 115.5 L1150.9 115.4 L1150.6 115.4 L1150.2 115.3 L1149.9 115.2 L1149.6 115.2 L1149.3 115.1 L1149.0 115.0 L1148.7 115.0 L1148.4 114.9 L1148.1 114.8 L1147.8 114.8 L1147.4 114.7 L1147.1 114.6 L1146.8 114.6 L1146.5 114.5 L1146.2 114.5 L1145.9 114.4 L1145.6 114.3 L1145.3 114.3 L1145.0 114.2" stroke="#55cc00"/>
<path d="M944.0 58.2 L944.3 58.3 L944.5 58.4 L944.8 58.5 L945.0 58.7 L945.3 58.8 L945.5 58.9 L945.8 59.0 L946.0 59.1 L946.3 59.2 L946.6 59.4 L946.8 59.5 L947.1 59.6 L947.3 59.7 L947.6 59.8 L947.9 59.9 L948.1 60.1 L948.4 60.2 L948.6 60.3 L948.9 60.4 L949.2 60.5 L949.4 60.7 L949.7 60.8 L950.0 60.9 L950.2 61.0 L950.5 61.1 L950.7 61.3 L951.0 61.4 L951.3 61.5 L951.5 61.6 L951.8 61.7 L952.1 61.9 L952.3 62.0 L952.6 62.1 L952.9 62.2 L953.1 62.4 L953.4 62.5 L953.7 62.6 L953.9 62.7 L954.2 62.9 L954.5 63.0 L954.7 63.1 L955.0 63.2 L955.3 63.4 L955.6 63.5 L955.8 63.6 L956.1 63.7 L956.4 63.9 L956.6 64.0 L956.9 64.1 L957.2 64.2 L957.5 64.4 L957.7 64.5 L958.0 64.6 L958.3 64.7 L958.5 64.9 L958.8 65.0 L959.1 65.1 L959.4 65.3 L959.6 65.4 L959.9 65.5 L960.2 65.6 L960.5 65.8 L960.7 65.9 L961.0 66.0 L961.3 66.2 L961.6 66.3 L961.8 66.4 L962.1 66.5 L962.4 66.7 L962.7 66.8 L962.9 66.9 L963.2 67.1 L963.5 67.2 L963.8 67.3 L964.0 67.5 L964.3 67.6 L964.6 67.7 L964.9 67.8 L965.2 68.0 L965.4 68.1 L965.7 68.2 L966.0 68.4 L966.3 68.5 L966.5 68.6 L966.8 68.8 L967.1 68.9" stroke="#cc22ee"/>
<path d="M967.1 68.9 L967.4 69.0 L967.7 69.2 L967.9 69.3 L968.2 69.4 L968.5 69.6 L968.8 69.7 L969.0 69.8 L969.3 70.0 L969.6 70.1 L969.9 70.2 L970.2 70.4 L970.4 70.5 L970.7 70.7 L971.0 70.8 L971.3 70.9 L971.6 71.1 L971.8 71.2 L972.1 71.3 L972.4 71.5 L972.7 71.6 L973.0 71.7 L973.2 71.9 L973.5 72.0 L973.8 72.2 L974.1 72.3 L974.4 72.4 L974.6 72.6 L974.9 72.7 L975.2 72.8 L975.5 73.0 L975.8 73.1 L976.0 73.2 L976.3 73.4 L976.6 73.5 L976.9 73.7 L977.2 73.8 L977.5 73.9 L977.7 74.1 L978.0 74.2 L978.3 74.4 L978.6 74.5 L978.9 74.6 L979.1 74.8 L979.4 74.9 L979.7 75.0 L980.0 75.2 L980.3 75.3 L980.6 75.5 L980.8 75.6 L981.1 75.7 L981.4 75.9 L981.7 76.0 L982.0 76.2 L982.3 76.3 L982.5 76.4 L982.8 76.6 L983.1 76.7 L983.4 76.9 L983.7 77.0 L984.0 77.1 L984.2 77.3 L984.5 77.4 L984.8 77.5 L985.1 77.7 L985.4 77.8 L985.7 78.0 L985.9 78.1 L986.2 78.2 L986.5 78.4 L986.8 78.5 L987.1 78.7 L987.4 78.8 L987.6 79.0 L987.9 79.1 L988.2 79.2 L988.5 79.4 L988.8 79.5 L989.1 79.7 L989.4 79.8 L989.6 79.9 L989.9 80.1 L990.2 80.2 L990.5 80.4 L990.8 80.5 L991.1 80.6 L991.3 80.8 L991.6 80.9 L991.9 81.1 L992.2 81.2 L992.5 81.3 L992.8 81.5 L993.1 81.6 L993.3 81.8 L993.6 81.9 L993.9 82.1 L994.2 82.2" stroke="#cc22ee"/>
<path d="M980.0 123.3 L980.2 123.3 L980.3 123.4 L980.5 123.4 L980.7 123.4 L980.9 123.5 L981.0 123.5 L981.2 123.6 L981.4 123.6 L981.6 123.6 L981.7 123.7 L981.9 123.7 L982.1 123.7 L982.3 123.8 L982.4 123.8 L982.6 123.9 L982.8 123.9 L983.0 123.9 L983.1 124.0 L983.3 124.0 L983.5 124.1 L983.7 124.1 L983.8 124.1 L984.0 124.2 L984.2 124.2 L984.4 124.3 L984.5 124.3 L984.7 124.3 L984.9 124.4 L985.1 124.4 L985.3 124.5 L985.4 124.5 L985.6 124.5 L985.8 124.6 L986.0 124.6 L986.1 124.7 L986.3 124.7 L986.5 124.8 L986.7 124.8 L986.9 124.8 L987.0 124.9 L987.2 124.9 L987.4 125.0 L987.6 125.0 L987.7 125.1 L987.9 125.1 L988.1 125.2 L988.3 125.2 L988.5 125.2 L988.6 125.3 L988.8 125.3 L989.0 125.4 L989.2 125.4 L989.4 125.5 L989.5 125.5 L989.7 125.6 L989.9 125.6 L990.1 125.7 L990.3 125.7 L990.5 125.7 L990.6 125.8 L990.8 125.8 L991.0 125.9 L991.2 125.9 L991.4 126.0 L991.5 126.0 L991.7 126.1 L991.9 126.1 L992.1 126.2 L992.3 126.2 L992.5 126.3 L992.6 126.3 L992.8 126.4 L993.0 126.4 L993.2 126.5 L993.4 126.5 L993.6 126.6 L993.7 126.6 L993.9 126.7 L994.1 126.7 L994.3 126.8 L994.5 126.8 L994.7 126.9 L994.9 126.9 L995.0 127.0 L995.2 127.0 L995.4 127.1 L995.6 127.1 L995.8 127.2 L996.0 127.2 L996.1 127.3 L996.3 127.4 L996.5 127.4 L996.7 127.5 L996.9 127.5 L997.1 127.6 L997.3 127.6 L997.5 127.7 L997.6 127.7 L997.8 127.8 L998.0 127.8 L998.2 127.9 L998.4 128.0 L998.6 128.0 L998.8 128.1 L999.0 128.1 L999.1 128.2 L999.3 128.2 L999.5 128.3 L999.7 128.3 L999.9 128.4 L1000.1 128.5 L1000.3 128.5 L1000.5 128.6 L1000.7 128.6 L1000.8 128.7 L1001.0 128.7 L1001.2 128.8 L1001.4 128.9 L1001.6 128.9 L1001.8 129.0 L1002.0 129.0 L1002.2 129.1 L1002.4 129.1 L1002.6 129.2 L1002.7 129.3 L1002.9 129.3 L1003.1 129.4 L1003.3 129.4 L1003.5 129.5 L1003.7 129.6 L1003.9 129.6 L1004.1 129.7 L1004.3 129.7 L1004.5 129.8 L1004.7 129.9 L1004.9 129.9 L1005.1 130.0 L1005.2 130.0 L1005.4 130.1 L1005.6 130.2 L1005.8 130.2 L1006.0 130.3 L1006.2 130.4 L1006.4 130.4 L1006.6 130.5 L1006.8 130.5 L1007.0 130.6 L1007.2 130.7 L1007.4 130.7 L1007.6 130.8 L1007.8 130.9 L1008.0 130.9 L1008.2 131.0 L1008.3 131.0 L1008.5 131.1 L1008.7 131.2 L1008.9 131.2 L1009.1 131.3 L1009.3 131.4 L1009.5 131.4 L1009.7 131.5 L1009.9 131.6 L1010.1 131.6 L1010.3 131.7 L1010.5 131.8 L1010.7 131.8 L1010.9 131.9 L1011.1 132.0 L1011.3 132.0 L1011.5 132.1 L1011.7 132.2 L1011.9 132.2 L1012.1 132.3 L1012.3 132.4 L1012.5 132.4 L1012.7 132.5 L1012.9 132.6 L1013.1 132.6 L1013.3 132.7 L1013.5 132.8 L1013.7 132.8 L1013.9 132.9 L1014.1 133.0 L1014.3 133.0 L1014.5 133.1 L1014.7 133.2 L1014.9 133.2 L1015.1 133.3 L1015.3 133.4 L1015.5 133.4 L1015.7 133.5 L1015.9 133.6 L1016.1 133.7 L1016.3 133.7 L1016.5 133.8 L1016.7 133.9 L1016.9 133.9 L1017.1 134.0 L1017.3 134.1 L1017.5 134.1 L1017.7 134.2 L1017.9 134.3 L1018.1 134.4 L1018.3 134.4 L1018.5 134.5 L1018.7 134.6 L1018.9 134.6 L1019.1 134.7 L1019.3 134.8 L1019.5 134.9 L1019.7 134.9 L1019.9 135.0 L1020.1 135.1 L1020.3 135.2 L1020.5 135.2 L1020.7 135.3 L1020.9 135.4 L1021.1 135.4 L1021.3 135.5 L1021.5 135.6 L1021.7 135.7 L1021.9 135.7 L1022.1 135.8 L1022.3 135.9 L1022.5 136.0 L1022.7 136.0 L1022.9 136.1 L1023.1 136.2 L1023.3 136.3 L1023.5 136.3 L1023.7 136.4 L1023.9 136.5 L1024.2 136.6 L1024.4 136.6 L1024.6 136.7 L1024.8 136.8 L1025.0 136.9 L1025.2 136.9 L1025.4 137.0 L1025.6 137.1 L1025.8 137.2 L1026.0 137.2 L1026.2 137.3 L1026.4 137.4 L1026.6 137.5 L1026.8 137.6 L1027.0 137.6 L1027.2 137.7 L1027.4 137.8 L1027.7 137.9 L1027.9 137.9 L1028.1 138.0 L1028.3 138.1 L1028.5 138.2 L1028.7 138.3 L1028.9 138.3 L1029.1 138.4 L1029.3 138.5 L1029.5 138.6 L1029.7 138.7 L1029.9 138.7 L1030.1 138.8 L1030.4 138.9 L1030.6 139.0 L1030.8 139.1 L1031.0 139.1 L1031.2 139.2 L1031.4 139.3 L1031.6 139.4 L1031.8 139.5 L1032.0 139.5 L1032.2 139.6 L1032.4 139.7 L1032.6 139.8 L1032.9 139.9 L1033.1 139.9 L1033.3 140.0 L1033.5 140.1 L1033.7 140.2 L1033.9 140.3 L1034.1 140.3 L1034.3 140.4 L1034.5 140.5 L1034.7 140.6 L1035.0 140.7 L1035.2 140.8 L1035.4 140.8 L1035.6 140.9 L1035.8 141.0 L1036.0 141.1 L1036.2 141.2 L1036.4 141.3 L1036.6 141.3 L1036.9 141.4 L1037.1 141.5 L1037.3 141.6 L1037.5 141.7 L1037.7 141.8 L1037.9 141.8 L1038.1 141.9 L1038.3 142.0 L1038.6 142.1 L1038.8 142.2 L1039.0 142.3 L1039.2 142.3 L1039.4 142.4 L1039.6 142.5 L1039.8 142.6 L1040.0 142.7 L1040.3 142.8 L1040.5 142.9 L1040.7 142.9 L1040.9 143.0 L1041.1 143.1 L1041.3 143.2 L1041.5 143.3 L1041.7 143.4 L1042.0 143.5 L1042.2 143.5 L1042.4 143.6 L1042.6 143.7 L1042.8 143.8 L1043.0 143.9 L1043.2 144.0 L1043.5 144.1 L1043.7 144.2 L1043.9 144.2 L1044.1 144.3 L1044.3 144.4 L1044.5 144.5 L1044.7 144.6 L1045.0 144.7 L1045.2 144.8 L1045.4 144.9 L1045.6 144.9 L1045.8 145.0 L1046.0 145.1 L1046.2 145.2 L1046.5 145.3 L1046.7 145.4 L1046.9 145.5 L1047.1 145.6 L1047.3 145.6 L1047.5 145.7 L1047.8 145.8 L1048.0 145.9 L1048.2 146.0 L1048.4 146.1 L1048.6 146.2 L1048.8 146.3 L1049.1 146.4 L1049.3 146.5 L1049.5 146.5 L1049.7 146.6 L1049.9 146.7 L1050.1 146.8 L1050.4 146.9 L1050.6 147.0 L1050.8 147.1 L1051.0 147.2 L1051.2 147.3 L1051.4 147.4 L1051.7 147.5 L1051.9 147.5 L1052.1 147.6 L1052.3 147.7 L1052.5 147.8 L1052.7 147.9 L1053.0 148.0 L1053.2 148.1 L1053.4 148.2 L1053.6 148.3 L1053.8 148.4 L1054.1 148.5 L1054.3 148.6 L1054.5 148.6 L1054.7 148.7 L1054.9 148.8 L1055.1 148.9 L1055.4 149.0 L1055.6 149.1 L1055.8 149.2" stroke="#ee82ee"/>
<path d="M972.4 60.0 L972.7 60.2 L973.1 60.3 L973.4 60.5 L973.7 60.6 L974.0 60.8 L974.4 60.9 L974.7 61.1 L975.0 61.2 L975.3 61.4 L975.7 61.5 L976.0 61.7 L976.3 61.8 L976.6 62.0 L977.0 62.1 L977.3 62.3 L977.6 62.4 L977.9 62.6 L978.3 62.7 L978.6 62.9 L978.9 63.0 L979.2 63.2 L979.6 63.3 L979.9 63.5 L980.2 63.6 L980.5 63.8 L980.9 63.9 L981.2 64.1 L981.5 64.2 L981.8 64.4 L982.2 64.5 L982.5 64.7 L982.8 64.8 L983.1 65.0 L983.5 65.2 L983.8 65.3 L984.1 65.5 L984.4 65.6 L984.8 65.8 L985.1 65.9 L985.4 66.1 L985.7 66.2 L986.1 66.4 L986.4 66.5 L986.7 66.7 L987.0 66.8 L987.4 67.0 L987.7 67.1 L988.0 67.3 L988.3 67.4 L988.7 67.6 L989.0 67.7 L989.3 67.9 L989.6 68.0 L990.0 68.2 L990.3 68.3 L990.6 68.5 L990.9 68.6 L991.2 68.8 L991.6 68.9 L991.9 69.1 L992.2 69.2 L992.5 69.4 L992.9 69.5 L993.2 69.7 L993.5 69.8 L993.8 70.0 L994.2 70.2 L994.5 70.3 L994.8 70.5 L995.1 70.6 L995.4 70.8 L995.8 70.9 L996.1 71.1 L996.4 71.2 L996.7 71.4 L997.1 71.5 L997.4 71.7 L997.7 71.8 L998.0 72.0 L998.3 72.1 L998.7 72.3 L999.0 72.4 L999.3 72.6 L999.6 72.7 L1000.0 72.9 L1000.3 73.0 L1000.6 73.2 L1000.9 73.3 L1001.2 73.5 L1001.6 73.6 L1001.9 73.8 L1002.2 73.9 L1002.5 74.1 L1002.8 74.2 L1003.2 74.4 L1003.5 74.5 L1003.8 74.7 L1004.1 74.8 L1004.5 75.0 L1004.8 75.2 L1005.1 75.3 L1005.4 75.5 L1005.7 75.6 L1006.1 75.8 L1006.4 75.9 L1006.7 76.1 L1007.0 76.2 L1007.3 76.4 L1007.7 76.5 L1008.0 76.7 L1008.3 76.8 L1008.6 77.0 L1008.9 77.1 L1009.3 77.3 L1009.6 77.4 L1009.9 77.6 L1010.2 77.7 L1010.5 77.9 L1010.9 78.0 L1011.2 78.2 L1011.5 78.3 L1011.8 78.5 L1012.1 78.6 L1012.4 78.8 L1012.8 78.9 L1013.1 79.1 L1013.4 79.2 L1013.7 79.4 L1014.0 79.5 L1014.4 79.7 L1014.7 79.8 L1015.0 80.0" stroke="#ff2000"/>
<path d="M1160.8 127.5 L1161.1 127.7 L1161.4 127.8 L1161.8 128.0 L1162.1 128.1 L1162.4 128.3 L1162.7 128.4 L1163.0 128.6 L1163.4 128.8 L1163.7 128.9 L1164.0 129.1 L1164.3 129.2 L1164.6 129.4 L1165.0 129.5 L1165.3 129.7 L1165.6 129.9 L1165.9 130.0 L1166.2 130.2 L1166.5 130.3 L1166.9 130.5 L1167.2 130.6 L1167.5 130.8" stroke="#ff2000"/>
<path d="M890.2 33.9 L890.3 33.8 L890.3 33.7 L890.4 33.6 L890.5 33.5 L890.5 33.5 L890.6 33.4 L890.6 33.3 L890.6 33.2 L890.7 33.1 L890.7 33.0 L890.7 32.9 L890.8 32.9 L890.8 32.8 L890.8 32.7 L890.8 32.7 L890.8 32.6 L890.7 32.5 L890.7 32.5 L890.7 32.4 L890.7 32.4 L890.6 32.4 L890.5 32.3 L890.5 32.3 L890.4 32.3 L890.3 32.2 L890.2 32.2 L890.1 32.2 L890.0 32.2 L889.8 32.2 L889.7 32.2 L889.5 32.2 L889.4 32.2 L889.2 32.2 L889.0 32.2 L888.8 32.2 L888.6 32.2 L888.3 32.3 L888.1 32.3 L887.9 32.3 L887.6 32.4 L887.3 32.4 L887.0 32.5 L886.7 32.5 L886.4 32.6 L886.1 32.7 L885.8 32.7 L885.4 32.8 L885.1 32.9 L884.7 32.9 L884.4 33.0 L884.0 33.1 L883.6 33.2 L883.2 33.3M921.2 33.4 L921.4 33.4 L921.6 33.5 L921.7 33.6 L921.9 33.7 L922.1 33.8 L922.3 33.9 L922.5 34.0 L922.7 34.1 L922.9 34.2 L923.1 34.4 L923.4 34.5 L923.6 34.6 L923.8 34.7 L924.0 34.8 L924.3 34.9 L924.5 35.0 L924.8 35.2 L925.0 35.3 L925.3 35.4 L925.5 35.5 L925.8 35.6 L926.0 35.8 L926.3 35.9 L926.5 36.0 L926.8 36.1 L927.1 36.3 L927.3 36.4 L927.6 36.5 L927.9 36.6 L928.2 36.8 L928.4 36.9 L928.7 37.0 L929.0 37.2 L929.3 37.3 L929.6 37.4 L929.8 37.6 L930.1 37.7 L930.4 37.8 L930.7 38.0 L931.0 38.1 L931.3 38.2 L931.6 38.4 L931.9 38.5 L932.2 38.6 L932.5 38.8 L932.7 38.9 L933.0 39.1 L933.3 39.2 L933.6 39.3 L933.9 39.5 L934.2 39.6 L934.5 39.7 L934.8 39.9 L935.1 40.0 L935.4 40.2 L935.7 40.3 L936.1 40.4 L936.4 40.6 L936.7 40.7 L937.0 40.9 L937.3 41.0 L937.6 41.1 L937.9 41.3 L938.2 41.4 L938.5 41.6 L938.8 41.7 L939.1 41.9 L939.4 42.0 L939.7 42.1 L940.0 42.3 L940.4 42.4 L940.7 42.6 L941.0 42.7 L941.3 42.9 L941.6 43.0" stroke="#ff2000"/>
<path d="M922.1 37.0 L922.4 37.2 L922.7 37.3 L923.0 37.5 L923.3 37.6 L923.6 37.8 L923.9 37.9 L924.2 38.1 L924.5 38.2 L924.8 38.4 L925.1 38.5 L925.4 38.7 L925.7 38.8 L926.0 39.0 L926.3 39.1 L926.6 39.3 L926.9 39.4 L927.2 39.6 L927.5 39.7 L927.8 39.9 L928.1 40.1 L928.4 40.2 L928.7 40.4 L929.0 40.5 L929.3 40.7 L929.6 40.8 L929.9 41.0 L930.2 41.1 L930.5 41.3 L930.8 41.4 L931.1 41.6 L931.4 41.7 L931.7 41.9 L932.0 42.0 L932.3 42.2 L932.6 42.3 L932.9 42.5 L933.2 42.6 L933.5 42.8 L933.8 43.0 L934.1 43.1 L934.4 43.3 L934.7 43.4 L935.0 43.6 L935.3 43.7 L935.6 43.9 L935.9 44.0 L936.2 44.2 L936.5 44.3 L936.8 44.5 L937.1 44.6 L937.4 44.8 L937.7 44.9 L938.0 45.1 L938.3 45.2 L938.6 45.4 L938.9 45.6 L939.2 45.7 L939.5 45.9 L939.8 46.0 L940.0 46.2 L940.3 46.3 L940.6 46.5 L940.9 46.6 L941.2 46.8 L941.5 46.9 L941.8 47.1 L942.1 47.2 L942.4 47.4 L942.7 47.5 L943.0 47.7 L943.3 47.8 L943.6 48.0 L943.9 48.1 L944.2 48.3 L944.5 48.5 L944.8 48.6 L945.1 48.8 L945.4 48.9 L945.7 49.1 L946.0 49.2 L946.3 49.4 L946.6 49.5 L946.9 49.7 L947.2 49.8 L947.5 50.0 L947.8 50.1 L948.1 50.3 L948.4 50.4 L948.7 50.6 L949.0 50.7 L949.3 50.9" stroke="#ff2000"/>
<path d="M764.2 94.7 L764.1 94.7 L764.1 94.6 L764.0 94.6 L764.0 94.5 L763.9 94.5 L763.8 94.4 L763.8 94.4 L763.7 94.4 L763.7 94.3 L763.6 94.3 L763.5 94.2 L763.5 94.2 L763.4 94.1 L763.3 94.1 L763.3 94.1 L763.2 94.0 L763.1 94.0 L763.1 93.9 L763.0 93.9 L762.9 93.9 L762.9 93.8 L762.8 93.8 L762.7 93.8 L762.6 93.7 L762.6 93.7 L762.5 93.6 L762.4 93.6 L762.3 93.6 L762.3 93.5 L762.2 93.5 L762.1 93.5 L762.0 93.4 L762.0 93.4 L761.9 93.4 L761.8 93.3 L761.7 93.3 L761.6 93.3 L761.6 93.2 L761.5 93.2 L761.4 93.2 L761.3 93.1 L761.2 93.1 L761.2 93.1 L761.1 93.0 L761.0 93.0 L760.9 93.0 L760.8 92.9 L760.7 92.9 L760.6 92.9 L760.5 92.9 L760.5 92.8 L760.4 92.8 L760.3 92.8 L760.2 92.7 L760.1 92.7 L760.0 92.7 L759.9 92.7 L759.8 92.6 L759.7 92.6 L759.6 92.6 L759.5 92.6 L759.4 92.5 L759.3 92.5 L759.2 92.5 L759.1 92.5 L759.0 92.4 L758.9 92.4 L758.8 92.4 L758.7 92.4 L758.6 92.3 L758.5 92.3 L758.4 92.3 L758.3 92.3 L758.2 92.2 L758.1 92.2 L758.0 92.2 L757.9 92.2 L757.8 92.2 L757.7 92.1 L757.6 92.1 L757.5 92.1 L757.3 92.1 L757.2 92.1 L757.1 92.1 L757.0 92.0 L756.9 92.0 L756.8 92.0 L756.7 92.0 L756.5 92.0 L756.4 92.0 L756.3 91.9 L756.2 91.9 L756.1 91.9 L756.0 91.9 L755.8 91.9 L755.7 91.9 L755.6 91.9 L755.5 91.8 L755.3 91.8 L755.2 91.8 L755.1 91.8" stroke="#ff2000"/>
</g>
<circle cx="725.8" cy="88.7" r="1.5" fill="#ff6a40"/>
<circle cx="984.0" cy="98.2" r="1.5" fill="#ff6a40"/>
<circle cx="1145.0" cy="114.2" r="1.5" fill="#ff6a40"/>
<circle cx="967.1" cy="68.9" r="1.5" fill="#ff6a40"/>
<circle cx="994.2" cy="82.2" r="1.5" fill="#ff6a40"/>
<circle cx="1055.8" cy="149.2" r="1.5" fill="#ff6a40"/>
<circle cx="1015.0" cy="80.0" r="1.5" fill="#ff6a40"/>
<circle cx="1167.5" cy="130.8" r="1.5" fill="#ff6a40"/>
<circle cx="941.6" cy="43.0" r="1.5" fill="#ff6a40"/>
<circle cx="949.3" cy="50.9" r="1.5" fill="#ff6a40"/>
<circle cx="755.1" cy="91.8" r="1.5" fill="#ff6a40"/>
<path d="M845.4 212.5h8M849.4 208.5v8" stroke="#ff0000" stroke-width="1.3"/>
<path d="M469.3 234.9h8M473.3 230.9v8" stroke="#ff0000" stroke-width="1.3"/>
<path d="M452.7 239.2h8M456.7 235.2v8" stroke="#ff0000" stroke-width="1.3"/>
<path d="M711.3 314.7h8M715.3 310.7v8" stroke="#ff0000" stroke-width="1.3"/>
<path d="M721.9 263.3h8M725.9 259.3v8" stroke="#ff0000" stroke-width="1.3"/>
<path d="M729.3 263.3h8M733.3 259.3v8" stroke="#ff0000" stroke-width="1.3"/>
<path d="M487.1 239.4 L486.2 240.3 L485.2 241.1 L484.3 242.0 L483.3 242.8 L482.3 243.6 L481.3 244.5 L480.2 245.3 L479.2 246.1 L478.2 246.9 L477.1 247.7 L476.0 248.4 L475.0 249.2 L473.9 250.0 L472.8 250.7 L471.7 251.4 L470.6 252.1 L469.5 252.8 L468.4 253.5 L467.3 254.1 L466.2 254.8 L465.1 255.4 L464.0 256.0 L462.9 256.6 L461.7 257.1 L460.6 257.7 L459.5 258.2 L458.5 258.7 L457.4 259.1 L456.3 259.6 L455.2 260.0 L454.1 260.4 L453.1 260.8 L452.0 261.1 L451.0 261.4 L450.0 261.7 L449.0 262.0 L448.0 262.2 L447.0 262.4 L446.0 262.6 L445.0 262.8 L444.1 262.9 L443.2 263.0 L442.3 263.0 L441.4 263.1 L440.5 263.1 L439.7 263.1 L438.9 263.0 L438.1 263.0 L437.3 262.9 L436.6 262.8 L435.9 262.6 L435.2 262.4 L434.5 262.2 L433.9 262.0 L433.3 261.7 L432.8 261.4 L432.2 261.1 L431.7 260.8 L431.3 260.4 L430.9 260.0 L430.5 259.6 L430.1 259.1 L429.8 258.7 L429.5 258.2 L429.3 257.7 L429.1 257.1 L429.0 256.6 L428.9 256.0 L428.8 255.4 L428.8 254.8 L428.9 254.1 L428.9 253.5 L429.1 252.8 L429.2 252.1 L429.4 251.4 L429.7 250.7 L430.0 250.0 L430.4 249.2 L430.8 248.4 L431.2 247.7 L431.7 246.9 L432.3 246.1 L432.9 245.3 L433.5 244.5 L434.2 243.6 L434.9 242.8 L435.7 242.0 L436.5 241.1 L437.4 240.3 L438.3 239.4 L439.2 238.6 L440.2 237.7 L441.2 236.9 L442.3 236.0 L443.4 235.2 L444.5 234.4 L445.7 233.5 L446.9 232.7 L448.1 231.9 L449.3 231.0 L450.6 230.2 L451.9 229.4 L453.2 228.6 L454.6 227.9 L455.9 227.1 L457.3 226.3 L458.7 225.6 L460.1 224.9 L461.5 224.2 L462.9 223.5 L464.4 222.8 L465.8 222.2 L467.2 221.5 L468.6 220.9 L470.1 220.4 L471.5 219.8 L472.9 219.2 L474.3 218.7 L475.6 218.2 L477.0 217.8 L478.3 217.3 L479.7 216.9 L480.9 216.5 L482.2 216.2 L483.5 215.9 L484.7 215.6 L485.9 215.3 L487.0 215.1 L488.1 214.9 L489.2 214.7 L490.2 214.5 L491.2 214.4 L492.2 214.4 L493.1 214.3 L494.0 214.3 L494.8 214.3 L495.6 214.4 L496.3 214.4 L497.0 214.5 L497.6 214.7 L498.2 214.9 L498.8 215.1 L499.3 215.3 L499.7 215.6 L500.1 215.9 L500.5 216.2 L500.8 216.5 L501.0 216.9 L501.2 217.3 L501.4 217.8 L501.5 218.2 L501.5 218.7 L501.5 219.2 L501.5 219.8 L501.4 220.4 L501.3 220.9 L501.1 221.5 L500.9 222.2 L500.6 222.8 L500.3 223.5 L500.0 224.2 L499.6 224.9 L499.2 225.6 L498.7 226.3 L498.2 227.1 L497.7 227.9 L497.1 228.6 L496.5 229.4 L495.9 230.2 L495.2 231.0 L494.5 231.9 L493.8 232.7 L493.0 233.5 L492.3 234.4 L491.5 235.2 L490.6 236.0 L489.8 236.9 L488.9 237.7 L488.0 238.6 L487.1 239.4" fill="none" stroke="#55cc00" stroke-width="2.2"/>
<path d="M859.5 215.3 L859.3 216.2 L859.1 217.0 L858.8 217.8 L858.5 218.7 L858.2 219.5 L857.9 220.3 L857.5 221.1 L857.1 221.9 L856.7 222.7 L856.2 223.5 L855.8 224.3 L855.3 225.0 L854.7 225.8 L854.2 226.5 L853.6 227.2 L853.1 227.9 L852.5 228.6 L851.8 229.3 L851.2 229.9 L850.5 230.5 L849.9 231.1 L849.2 231.7 L848.4 232.3 L847.7 232.8 L847.0 233.4 L846.2 233.9 L845.4 234.4 L844.7 234.8 L843.9 235.2 L843.0 235.7 L842.2 236.0 L841.4 236.4 L840.6 236.7 L839.7 237.1 L838.9 237.3 L838.0 237.6 L837.2 237.8 L836.3 238.0 L835.5 238.2 L834.6 238.4 L833.7 238.5 L832.9 238.6 L832.0 238.6 L831.2 238.7 L830.3 238.7 L829.5 238.7 L828.6 238.6 L827.8 238.6 L827.0 238.5 L826.1 238.4 L825.3 238.2 L824.5 238.0 L823.8 237.8 L823.0 237.6 L822.2 237.3 L821.5 237.1 L820.8 236.7 L820.1 236.4 L819.4 236.0 L818.7 235.7 L818.0 235.2 L817.4 234.8 L816.8 234.4 L816.2 233.9 L815.6 233.4 L815.1 232.8 L814.6 232.3 L814.1 231.7 L813.6 231.1 L813.2 230.5 L812.8 229.9 L812.4 229.3 L812.0 228.6 L811.7 227.9 L811.4 227.2 L811.1 226.5 L810.9 225.8 L810.7 225.0 L810.5 224.3 L810.3 223.5 L810.2 222.7 L810.1 221.9 L810.1 221.1 L810.1 220.3 L810.1 219.5 L810.1 218.7 L810.2 217.8 L810.3 217.0 L810.5 216.2 L810.6 215.3 L810.8 214.5 L811.1 213.6 L811.4 212.8 L811.7 211.9 L812.0 211.1 L812.3 210.2 L812.7 209.4 L813.2 208.6 L813.6 207.7 L814.1 206.9 L814.6 206.1 L815.1 205.3 L815.7 204.5 L816.3 203.7 L816.9 202.9 L817.5 202.2 L818.2 201.4 L818.8 200.7 L819.5 200.0 L820.3 199.3 L821.0 198.6 L821.7 197.9 L822.5 197.3 L823.3 196.7 L824.1 196.1 L824.9 195.5 L825.7 195.0 L826.6 194.4 L827.4 193.9 L828.3 193.5 L829.2 193.0 L830.0 192.6 L830.9 192.2 L831.8 191.8 L832.7 191.5 L833.5 191.2 L834.4 190.9 L835.3 190.7 L836.2 190.5 L837.1 190.3 L838.0 190.2 L838.8 190.0 L839.7 190.0 L840.6 189.9 L841.4 189.9 L842.3 189.9 L843.1 190.0 L843.9 190.0 L844.7 190.2 L845.5 190.3 L846.3 190.5 L847.1 190.7 L847.9 190.9 L848.6 191.2 L849.3 191.5 L850.0 191.8 L850.7 192.2 L851.4 192.6 L852.0 193.0 L852.6 193.5 L853.3 193.9 L853.8 194.4 L854.4 195.0 L854.9 195.5 L855.4 196.1 L855.9 196.7 L856.4 197.3 L856.8 197.9 L857.2 198.6 L857.6 199.3 L858.0 200.0 L858.3 200.7 L858.6 201.4 L858.9 202.2 L859.2 202.9 L859.4 203.7 L859.6 204.5 L859.7 205.3 L859.9 206.1 L860.0 206.9 L860.1 207.7 L860.1 208.6 L860.2 209.4 L860.1 210.2 L860.1 211.1 L860.0 211.9 L860.0 212.8 L859.8 213.6 L859.7 214.5 L859.5 215.3" fill="none" stroke="#18ee80" stroke-width="2.2"/>
<path d="M750.1 264.9 L749.8 265.7 L749.5 266.6 L749.2 267.4 L748.9 268.3 L748.5 269.1 L748.1 269.9 L747.7 270.7 L747.3 271.6 L746.9 272.4 L746.4 273.2 L745.9 273.9 L745.4 274.7 L744.8 275.5 L744.3 276.2 L743.7 276.9 L743.1 277.7 L742.5 278.4 L741.8 279.0 L741.2 279.7 L740.5 280.3 L739.8 281.0 L739.1 281.6 L738.4 282.2 L737.6 282.7 L736.9 283.3 L736.1 283.8 L735.3 284.3 L734.6 284.8 L733.8 285.2 L732.9 285.6 L732.1 286.0 L731.3 286.4 L730.5 286.8 L729.6 287.1 L728.8 287.4 L727.9 287.6 L727.1 287.9 L726.2 288.1 L725.4 288.3 L724.5 288.4 L723.6 288.6 L722.8 288.7 L721.9 288.7 L721.1 288.8 L720.2 288.8 L719.4 288.8 L718.5 288.7 L717.7 288.7 L716.9 288.6 L716.1 288.4 L715.2 288.3 L714.5 288.1 L713.7 287.9 L712.9 287.6 L712.1 287.4 L711.4 287.1 L710.7 286.8 L710.0 286.4 L709.3 286.0 L708.6 285.6 L707.9 285.2 L707.3 284.8 L706.7 284.3 L706.1 283.8 L705.6 283.3 L705.0 282.7 L704.5 282.2 L704.0 281.6 L703.6 281.0 L703.1 280.3 L702.7 279.7 L702.4 279.0 L702.0 278.4 L701.7 277.7 L701.4 276.9 L701.2 276.2 L701.0 275.5 L700.8 274.7 L700.6 273.9 L700.5 273.2 L700.4 272.4 L700.4 271.6 L700.4 270.7 L700.4 269.9 L700.5 269.1 L700.5 268.3 L700.7 267.4 L700.8 266.6 L701.0 265.7 L701.2 264.9 L701.5 264.0 L701.8 263.2 L702.1 262.3 L702.5 261.5 L702.9 260.7 L703.3 259.8 L703.8 259.0 L704.3 258.2 L704.8 257.3 L705.3 256.5 L705.9 255.7 L706.5 254.9 L707.1 254.1 L707.8 253.4 L708.5 252.6 L709.2 251.9 L709.9 251.1 L710.6 250.4 L711.4 249.7 L712.2 249.0 L713.0 248.4 L713.8 247.7 L714.7 247.1 L715.5 246.5 L716.4 245.9 L717.2 245.4 L718.1 244.9 L719.0 244.3 L719.9 243.9 L720.8 243.4 L721.8 243.0 L722.7 242.6 L723.6 242.2 L724.5 241.9 L725.4 241.5 L726.4 241.2 L727.3 241.0 L728.2 240.8 L729.1 240.6 L730.0 240.4 L730.9 240.2 L731.8 240.1 L732.7 240.1 L733.5 240.0 L734.4 240.0 L735.2 240.0 L736.1 240.1 L736.9 240.1 L737.7 240.2 L738.5 240.4 L739.2 240.6 L740.0 240.8 L740.7 241.0 L741.4 241.2 L742.1 241.5 L742.8 241.9 L743.4 242.2 L744.0 242.6 L744.6 243.0 L745.2 243.4 L745.7 243.9 L746.3 244.3 L746.8 244.9 L747.2 245.4 L747.7 245.9 L748.1 246.5 L748.5 247.1 L748.9 247.7 L749.2 248.4 L749.5 249.0 L749.8 249.7 L750.1 250.4 L750.3 251.1 L750.5 251.9 L750.7 252.6 L750.9 253.4 L751.0 254.1 L751.1 254.9 L751.1 255.7 L751.2 256.5 L751.2 257.3 L751.2 258.2 L751.1 259.0 L751.1 259.8 L751.0 260.7 L750.8 261.5 L750.7 262.3 L750.5 263.2 L750.3 264.0 L750.1 264.9" fill="none" stroke="#ff2000" stroke-width="2.2"/>
<path d="M759.3 244.2 L759.0 245.0 L758.6 245.9 L758.2 246.7 L757.8 247.6 L757.4 248.4 L756.9 249.2 L756.4 250.0 L755.9 250.8 L755.4 251.6 L754.8 252.4 L754.3 253.2 L753.7 254.0 L753.1 254.7 L752.4 255.5 L751.8 256.2 L751.1 256.9 L750.4 257.6 L749.7 258.3 L749.0 258.9 L748.2 259.6 L747.5 260.2 L746.7 260.8 L745.9 261.4 L745.2 261.9 L744.3 262.5 L743.5 263.0 L742.7 263.5 L741.9 263.9 L741.0 264.4 L740.2 264.8 L739.3 265.2 L738.5 265.6 L737.6 265.9 L736.7 266.2 L735.8 266.5 L735.0 266.8 L734.1 267.0 L733.2 267.2 L732.3 267.4 L731.5 267.6 L730.6 267.7 L729.7 267.8 L728.9 267.8 L728.0 267.9 L727.1 267.9 L726.3 267.9 L725.5 267.8 L724.6 267.8 L723.8 267.7 L723.0 267.6 L722.2 267.4 L721.4 267.2 L720.7 267.0 L719.9 266.8 L719.2 266.5 L718.5 266.2 L717.8 265.9 L717.1 265.6 L716.5 265.2 L715.8 264.8 L715.2 264.4 L714.6 263.9 L714.1 263.5 L713.5 263.0 L713.0 262.5 L712.5 261.9 L712.1 261.4 L711.7 260.8 L711.3 260.2 L710.9 259.6 L710.6 258.9 L710.2 258.3 L710.0 257.6 L709.7 256.9 L709.5 256.2 L709.3 255.5 L709.2 254.7 L709.1 254.0 L709.0 253.2 L709.0 252.4 L709.0 251.6 L709.0 250.8 L709.1 250.0 L709.2 249.2 L709.3 248.4 L709.5 247.6 L709.7 246.7 L709.9 245.9 L710.2 245.0 L710.5 244.2 L710.9 243.3 L711.2 242.5 L711.6 241.6 L712.1 240.8 L712.6 240.0 L713.1 239.1 L713.6 238.3 L714.2 237.4 L714.8 236.6 L715.4 235.8 L716.1 235.0 L716.7 234.2 L717.4 233.4 L718.2 232.6 L718.9 231.9 L719.7 231.1 L720.5 230.4 L721.3 229.7 L722.2 229.0 L723.0 228.3 L723.9 227.6 L724.8 226.9 L725.7 226.3 L726.6 225.7 L727.5 225.1 L728.4 224.6 L729.4 224.0 L730.3 223.5 L731.3 223.0 L732.2 222.6 L733.2 222.1 L734.1 221.7 L735.1 221.3 L736.1 221.0 L737.0 220.7 L738.0 220.4 L738.9 220.1 L739.8 219.9 L740.8 219.7 L741.7 219.5 L742.6 219.3 L743.5 219.2 L744.4 219.2 L745.3 219.1 L746.1 219.1 L747.0 219.1 L747.8 219.2 L748.6 219.2 L749.4 219.3 L750.1 219.5 L750.9 219.7 L751.6 219.9 L752.3 220.1 L753.0 220.4 L753.7 220.7 L754.3 221.0 L754.9 221.3 L755.5 221.7 L756.0 222.1 L756.6 222.6 L757.1 223.0 L757.6 223.5 L758.0 224.0 L758.4 224.6 L758.8 225.1 L759.2 225.7 L759.5 226.3 L759.8 226.9 L760.1 227.6 L760.4 228.3 L760.6 229.0 L760.8 229.7 L761.0 230.4 L761.1 231.1 L761.2 231.9 L761.3 232.6 L761.3 233.4 L761.3 234.2 L761.3 235.0 L761.3 235.8 L761.2 236.6 L761.1 237.4 L761.0 238.3 L760.8 239.1 L760.7 240.0 L760.5 240.8 L760.2 241.6 L760.0 242.5 L759.7 243.3 L759.3 244.2" fill="none" stroke="#cc22ee" stroke-width="2.2"/>
<path d="M745.2 316.3 L745.2 317.2 L745.1 318.0 L745.0 318.9 L744.9 319.7 L744.8 320.6 L744.6 321.4 L744.5 322.2 L744.2 323.0 L744.0 323.9 L743.7 324.7 L743.5 325.4 L743.1 326.2 L742.8 327.0 L742.5 327.8 L742.1 328.5 L741.7 329.2 L741.2 329.9 L740.8 330.6 L740.3 331.3 L739.8 332.0 L739.3 332.6 L738.7 333.2 L738.2 333.8 L737.6 334.4 L737.0 335.0 L736.4 335.5 L735.7 336.0 L735.1 336.5 L734.4 337.0 L733.7 337.4 L733.0 337.8 L732.3 338.2 L731.6 338.6 L730.8 338.9 L730.0 339.2 L729.3 339.5 L728.5 339.8 L727.7 340.0 L726.9 340.2 L726.1 340.3 L725.2 340.5 L724.4 340.6 L723.6 340.6 L722.7 340.7 L721.9 340.7 L721.0 340.7 L720.2 340.6 L719.3 340.6 L718.5 340.5 L717.6 340.3 L716.8 340.2 L715.9 340.0 L715.1 339.8 L714.2 339.5 L713.4 339.2 L712.6 338.9 L711.8 338.6 L710.9 338.2 L710.2 337.8 L709.4 337.4 L708.6 337.0 L707.8 336.5 L707.1 336.0 L706.4 335.5 L705.7 335.0 L705.0 334.4 L704.3 333.8 L703.7 333.2 L703.1 332.6 L702.5 332.0 L701.9 331.3 L701.3 330.6 L700.8 329.9 L700.3 329.2 L699.8 328.5 L699.4 327.8 L699.0 327.0 L698.6 326.2 L698.2 325.4 L697.9 324.7 L697.6 323.9 L697.3 323.0 L697.1 322.2 L696.9 321.4 L696.7 320.6 L696.6 319.7 L696.5 318.9 L696.4 318.0 L696.4 317.2 L696.4 316.3 L696.4 315.5 L696.5 314.6 L696.6 313.8 L696.7 312.9 L696.9 312.1 L697.1 311.3 L697.3 310.4 L697.6 309.6 L697.9 308.8 L698.2 308.0 L698.6 307.2 L699.0 306.4 L699.4 305.7 L699.8 304.9 L700.3 304.1 L700.8 303.4 L701.3 302.7 L701.9 302.0 L702.5 301.3 L703.1 300.7 L703.7 300.0 L704.3 299.4 L705.0 298.8 L705.7 298.2 L706.4 297.6 L707.1 297.1 L707.9 296.6 L708.6 296.1 L709.4 295.6 L710.2 295.2 L711.0 294.8 L711.8 294.4 L712.6 294.0 L713.5 293.7 L714.3 293.4 L715.1 293.1 L716.0 292.8 L716.8 292.6 L717.7 292.4 L718.6 292.3 L719.4 292.1 L720.3 292.0 L721.1 292.0 L722.0 291.9 L722.8 291.9 L723.7 291.9 L724.5 292.0 L725.4 292.0 L726.2 292.1 L727.0 292.3 L727.8 292.4 L728.6 292.6 L729.4 292.8 L730.2 293.1 L730.9 293.4 L731.7 293.7 L732.4 294.0 L733.2 294.4 L733.9 294.8 L734.6 295.2 L735.2 295.6 L735.9 296.1 L736.5 296.6 L737.1 297.1 L737.7 297.6 L738.3 298.2 L738.9 298.8 L739.4 299.4 L739.9 300.0 L740.4 300.7 L740.9 301.3 L741.3 302.0 L741.8 302.7 L742.2 303.4 L742.5 304.1 L742.9 304.9 L743.2 305.7 L743.5 306.4 L743.8 307.2 L744.1 308.0 L744.3 308.8 L744.5 309.6 L744.7 310.4 L744.8 311.3 L745.0 312.1 L745.1 312.9 L745.1 313.8 L745.2 314.6 L745.2 315.5 L745.2 316.3" fill="none" stroke="#ee82ee" stroke-width="2.2"/>
<text transform="translate(461.0 241.9) scale(0.94 1)" fill="#fff" font-size="11.5" text-anchor="middle">LEO</text>
<text transform="translate(835.3 217.5) scale(0.94 1)" fill="#fff" font-size="11.5" text-anchor="middle">AND</text>
<text transform="translate(726.6 267.6) scale(0.94 1)" fill="#fff" font-size="11.5" text-anchor="middle">STA</text>
<text transform="translate(735.2 246.7) scale(0.94 1)" fill="#fff" font-size="11.5" text-anchor="middle">NTA</text>
<text transform="translate(721.2 319.5) scale(0.94 1)" fill="#fff" font-size="11.5" text-anchor="middle">OER</text>
<g fill="#555" font-size="31.3">
<text transform="translate(150.1 642.4) rotate(-90) scale(0.837 1)" text-anchor="end">APR</text>
<text transform="translate(294.8 644.5) rotate(-90) scale(0.871 1)" text-anchor="end">MAY</text>
<text transform="translate(437.3 640.7) rotate(-90) scale(0.757 1)" text-anchor="end">JUN</text>
<text transform="translate(577.8 640.7) rotate(-90) scale(0.759 1)" text-anchor="end">JUL</text>
<text transform="translate(724.1 641.9) rotate(-90) scale(0.852 1)" text-anchor="end">AUG</text>
<text transform="translate(873.0 643.4) rotate(-90) scale(0.815 1)" text-anchor="end">SEP</text>
<text transform="translate(1017.5 643.9) rotate(-90) scale(0.866 1)" text-anchor="end">OCT</text>
<text transform="translate(1170.1 644.4) rotate(-90) scale(0.897 1)" text-anchor="end">NOV</text>
<text transform="translate(1319.0 644.5) rotate(-90) scale(0.850 1)" text-anchor="end">DEC</text>
<text transform="translate(1470.7 640.2) rotate(-90) scale(0.841 1)" text-anchor="end">JAN</text>
<text transform="translate(1629.2 645.6) rotate(-90) scale(0.835 1)" text-anchor="end">FEB</text>
<text transform="translate(1767.0 643.8) rotate(-90) scale(0.883 1)" text-anchor="end">MAR</text>
</g>
<path d="M1135.1 641.5 V842.4" stroke="#ff0000" stroke-width="2.2" stroke-dasharray="4.7 2.63"/>
<rect x="106.0" y="832.0" width="22.9" height="4" fill="#ee82ee"/>
<rect x="164.9" y="832.0" width="180.2" height="4" fill="#ee82ee"/>
<rect x="366.0" y="832.0" width="258.8" height="4" fill="#ee82ee"/>
<rect x="634.9" y="832.0" width="150.9" height="4" fill="#ee82ee"/>
<rect x="806.8" y="832.0" width="92.1" height="4" fill="#ee82ee"/>
<rect x="920.1" y="832.0" width="52.8" height="4" fill="#ee82ee"/>
<rect x="984.0" y="832.0" width="81.8" height="4" fill="#ee82ee"/>
<rect x="1082.0" y="832.0" width="121.0" height="4" fill="#ee82ee"/>
<rect x="1243.9" y="832.0" width="82.2" height="4" fill="#ee82ee"/>
<rect x="1337.0" y="832.0" width="17.9" height="4" fill="#ee82ee"/>
<rect x="1381.2" y="832.0" width="62.7" height="4" fill="#ee82ee"/>
<rect x="1459.0" y="832.0" width="52.9" height="4" fill="#ee82ee"/>
<rect x="1523.0" y="832.0" width="24.0" height="4" fill="#ee82ee"/>
<rect x="1724.0" y="832.0" width="24.0" height="4" fill="#ee82ee"/>
<rect x="1757.9" y="832.0" width="24.0" height="4" fill="#ee82ee"/>
<rect x="164.9" y="816.0" width="23.1" height="4" fill="#e010f0"/>
<rect x="223.0" y="816.0" width="62.8" height="4" fill="#e010f0"/>
<rect x="311.9" y="816.0" width="28.0" height="4" fill="#e010f0"/>
<rect x="366.0" y="816.0" width="126.0" height="4" fill="#e010f0"/>
<rect x="507.8" y="816.0" width="146.2" height="4" fill="#e010f0"/>
<rect x="703.8" y="816.0" width="33.0" height="4" fill="#e010f0"/>
<rect x="772.8" y="816.0" width="71.9" height="4" fill="#e010f0"/>
<rect x="871.0" y="816.0" width="116.9" height="4" fill="#e010f0"/>
<rect x="1003.1" y="816.0" width="13.8" height="4" fill="#e010f0"/>
<rect x="1062.1" y="816.0" width="150.8" height="4" fill="#e010f0"/>
<rect x="1243.9" y="816.0" width="23.0" height="4" fill="#e010f0"/>
<rect x="1293.0" y="816.0" width="22.9" height="4" fill="#e010f0"/>
<rect x="1342.0" y="816.0" width="23.0" height="4" fill="#e010f0"/>
<rect x="1385.9" y="816.0" width="43.0" height="4" fill="#e010f0"/>
<rect x="1459.0" y="816.0" width="23.9" height="4" fill="#e010f0"/>
<rect x="1548.0" y="816.0" width="23.1" height="4" fill="#e010f0"/>
<rect x="164.9" y="800.0" width="23.1" height="4" fill="#ff2000"/>
<rect x="257.9" y="800.0" width="229.2" height="4" fill="#ff2000"/>
<rect x="507.8" y="800.0" width="107.1" height="4" fill="#ff2000"/>
<rect x="626.0" y="800.0" width="91.8" height="4" fill="#ff2000"/>
<rect x="728.9" y="800.0" width="97.2" height="4" fill="#ff2000"/>
<rect x="949.1" y="800.0" width="199.5" height="4" fill="#ff2000"/>
<rect x="1159.9" y="800.0" width="87.9" height="4" fill="#ff2000"/>
<rect x="1257.9" y="800.0" width="186.0" height="4" fill="#ff2000"/>
<rect x="1459.0" y="800.0" width="23.9" height="4" fill="#ff2000"/>
<rect x="1552.1" y="800.0" width="23.9" height="4" fill="#ff2000"/>
<rect x="193.9" y="783.0" width="24.3" height="4" fill="#ffb010"/>
<rect x="321.2" y="783.0" width="185.7" height="4" fill="#ffb010"/>
<rect x="517.9" y="783.0" width="22.9" height="4" fill="#ffb010"/>
<rect x="557.0" y="783.0" width="126.0" height="4" fill="#ffb010"/>
<rect x="806.8" y="783.0" width="24.1" height="4" fill="#ffb010"/>
<rect x="954.0" y="783.0" width="18.9" height="4" fill="#ffb010"/>
<rect x="987.9" y="783.0" width="137.1" height="4" fill="#ffb010"/>
<rect x="1155.0" y="783.0" width="62.8" height="4" fill="#ffb010"/>
<rect x="1243.9" y="783.0" width="23.0" height="4" fill="#ffb010"/>
<rect x="1316.9" y="783.0" width="24.0" height="4" fill="#ffb010"/>
<rect x="1396.0" y="783.0" width="22.8" height="4" fill="#ffb010"/>
<rect x="1464.0" y="783.0" width="186.0" height="4" fill="#ffb010"/>
<rect x="341.0" y="767.0" width="28.9" height="4" fill="#f8e000"/>
<rect x="410.1" y="767.0" width="37.8" height="4" fill="#f8e000"/>
<rect x="469.1" y="767.0" width="22.9" height="4" fill="#f8e000"/>
<rect x="527.0" y="767.0" width="18.9" height="4" fill="#f8e000"/>
<rect x="561.8" y="767.0" width="28.0" height="4" fill="#f8e000"/>
<rect x="615.9" y="767.0" width="33.0" height="4" fill="#f8e000"/>
<rect x="958.9" y="767.0" width="29.0" height="4" fill="#f8e000"/>
<rect x="1062.1" y="767.0" width="23.6" height="4" fill="#f8e000"/>
<rect x="1101.1" y="767.0" width="23.7" height="4" fill="#f8e000"/>
<rect x="1159.9" y="767.0" width="33.9" height="4" fill="#f8e000"/>
<rect x="1248.0" y="767.0" width="23.9" height="4" fill="#f8e000"/>
<rect x="1425.0" y="767.0" width="86.9" height="4" fill="#f8e000"/>
<rect x="419.9" y="750.0" width="23.1" height="4" fill="#a0f030"/>
<rect x="532.1" y="750.0" width="23.9" height="4" fill="#a0f030"/>
<rect x="567.1" y="750.0" width="22.7" height="4" fill="#a0f030"/>
<rect x="620.9" y="750.0" width="121.0" height="4" fill="#a0f030"/>
<rect x="969.0" y="750.0" width="165.9" height="4" fill="#a0f030"/>
<rect x="1184.9" y="750.0" width="161.0" height="4" fill="#a0f030"/>
<rect x="1469.0" y="750.0" width="24.0" height="4" fill="#a0f030"/>
<rect x="429.0" y="734.0" width="24.0" height="4" fill="#55cc00"/>
<rect x="575.8" y="734.0" width="157.1" height="4" fill="#55cc00"/>
<rect x="993.0" y="734.0" width="111.8" height="4" fill="#55cc00"/>
<rect x="1115.9" y="734.0" width="107.1" height="4" fill="#55cc00"/>
<rect x="1263.0" y="734.0" width="28.8" height="4" fill="#55cc00"/>
<rect x="1489.0" y="734.0" width="22.9" height="4" fill="#55cc00"/>
<rect x="591.0" y="718.0" width="23.9" height="4" fill="#18ee80"/>
<rect x="655.0" y="718.0" width="116.8" height="4" fill="#18ee80"/>
<rect x="1072.0" y="718.0" width="171.1" height="4" fill="#18ee80"/>
<rect x="1263.0" y="718.0" width="23.9" height="4" fill="#18ee80"/>
<rect x="595.9" y="701.0" width="136.8" height="4" fill="#10d8f0"/>
<rect x="1090.9" y="701.0" width="28.9" height="4" fill="#10d8f0"/>
<rect x="1198.9" y="701.0" width="24.1" height="4" fill="#10d8f0"/>
<rect x="1272.9" y="701.0" width="53.2" height="4" fill="#10d8f0"/>
<rect x="1111.0" y="685.0" width="23.9" height="4" fill="#0010c0"/>
<g fill="none" stroke="#a8a8a8" stroke-opacity="0.55" stroke-width="2.08" stroke-dasharray="2.08 3.44">
<path d="M73.9 641.5 V842.4"/>
<path d="M218.0 641.5 V842.4"/>
<path d="M365.0 641.5 V842.4"/>
<path d="M505.0 641.5 V842.4"/>
<path d="M649.7 641.5 V842.4"/>
<path d="M796.9 641.5 V842.4"/>
<path d="M939.8 641.5 V842.4"/>
<path d="M1090.9 641.5 V842.4"/>
<path d="M1238.8 641.5 V842.4"/>
<path d="M1394.0 641.5 V842.4"/>
<path d="M1548.0 641.5 V842.4"/>
<path d="M1687.0 641.5 V842.4"/>
</g>
<path d="M112.7 834.0H120.7M116.7 830.0V838.0" stroke="#fff" stroke-width="2.6"/>
<text transform="translate(117.5 832.0) scale(0.92 1)" fill="#fff" font-size="11" text-anchor="middle">KSE</text>
<path d="M240.6 834.0H248.6M244.6 830.0V838.0" stroke="#fff" stroke-width="2.6"/>
<text transform="translate(255.0 832.0) scale(0.92 1)" fill="#fff" font-size="11" text-anchor="middle">ETA</text>
<path d="M510.7 834.0H518.7M514.7 830.0V838.0" stroke="#fff" stroke-width="2.6"/>
<text transform="translate(495.4 832.0) scale(0.92 1)" fill="#fff" font-size="11" text-anchor="middle">NZC</text>
<path d="M706.6 834.0H714.6M710.6 830.0V838.0" stroke="#fff" stroke-width="2.6"/>
<text transform="translate(710.3 832.0) scale(0.92 1)" fill="#fff" font-size="11" text-anchor="middle">NDA</text>
<path d="M832.8 834.0H840.8M836.8 830.0V838.0" stroke="#fff" stroke-width="2.6"/>
<text transform="translate(852.8 832.0) scale(0.92 1)" fill="#fff" font-size="11" text-anchor="middle">SPE</text>
<path d="M962.1 834.0H970.1M966.1 830.0V838.0" stroke="#fff" stroke-width="2.6"/>
<text transform="translate(946.5 832.0) scale(0.92 1)" fill="#fff" font-size="11" text-anchor="middle">ARD</text>
<path d="M985.5 834.0H993.5M989.5 830.0V838.0" stroke="#fff" stroke-width="2.6"/>
<text transform="translate(1024.9 832.0) scale(0.92 1)" fill="#fff" font-size="11" text-anchor="middle">EGE</text>
<path d="M1115.8 834.0H1123.8M1119.8 830.0V838.0" stroke="#fff" stroke-width="2.6"/>
<text transform="translate(1142.5 832.0) scale(0.92 1)" fill="#fff" font-size="11" text-anchor="middle">NTA</text>
<path d="M1295.0 834.0H1303.0M1299.0 830.0V838.0" stroke="#fff" stroke-width="2.6"/>
<text transform="translate(1285.0 832.0) scale(0.92 1)" fill="#fff" font-size="11" text-anchor="middle">MON</text>
<path d="M1341.9 834.0H1349.9M1345.9 830.0V838.0" stroke="#fff" stroke-width="2.6"/>
<text transform="translate(1346.0 832.0) scale(0.92 1)" fill="#fff" font-size="11" text-anchor="middle">URS</text>
<path d="M1412.8 834.0H1420.8M1416.8 830.0V838.0" stroke="#fff" stroke-width="2.6"/>
<text transform="translate(1412.6 832.0) scale(0.92 1)" fill="#fff" font-size="11" text-anchor="middle">AHY</text>
<path d="M1481.6 834.0H1489.6M1485.6 830.0V838.0" stroke="#fff" stroke-width="2.6"/>
<text transform="translate(1485.5 832.0) scale(0.92 1)" fill="#fff" font-size="11" text-anchor="middle">GUM</text>
<path d="M1530.9 834.0H1538.9M1534.9 830.0V838.0" stroke="#fff" stroke-width="2.6"/>
<text transform="translate(1535.0 832.0) scale(0.92 1)" fill="#fff" font-size="11" text-anchor="middle">OHY</text>
<path d="M1731.7 834.0H1739.7M1735.7 830.0V838.0" stroke="#fff" stroke-width="2.6"/>
<text transform="translate(1736.0 832.0) scale(0.92 1)" fill="#fff" font-size="11" text-anchor="middle">XHE</text>
<path d="M1765.6 834.0H1773.6M1769.6 830.0V838.0" stroke="#fff" stroke-width="2.6"/>
<text transform="translate(1769.9 832.0) scale(0.92 1)" fill="#fff" font-size="11" text-anchor="middle">EVI</text>
<path d="M171.6 818.0H179.6M175.6 814.0V822.0" stroke="#fff" stroke-width="2.6"/>
<text transform="translate(176.4 816.0) scale(0.92 1)" fill="#fff" font-size="11" text-anchor="middle">AVB</text>
<path d="M255.6 818.0H263.6M259.6 814.0V822.0" stroke="#fff" stroke-width="2.6"/>
<text transform="translate(254.4 816.0) scale(0.92 1)" fill="#fff" font-size="11" text-anchor="middle">ELY</text>
<path d="M322.8 818.0H330.8M326.8 814.0V822.0" stroke="#fff" stroke-width="2.6"/>
<text transform="translate(325.9 816.0) scale(0.92 1)" fill="#fff" font-size="11" text-anchor="middle">CAM</text>
<path d="M436.9 818.0H444.9M440.9 814.0V822.0" stroke="#fff" stroke-width="2.6"/>
<text transform="translate(429.0 816.0) scale(0.92 1)" fill="#fff" font-size="11" text-anchor="middle">SSG</text>
<path d="M598.7 818.0H606.7M602.7 814.0V822.0" stroke="#fff" stroke-width="2.6"/>
<text transform="translate(580.9 816.0) scale(0.92 1)" fill="#fff" font-size="11" text-anchor="middle">PCA</text>
<path d="M716.3 818.0H724.3M720.3 814.0V822.0" stroke="#fff" stroke-width="2.6"/>
<text transform="translate(720.3 816.0) scale(0.92 1)" fill="#fff" font-size="11" text-anchor="middle">AUD</text>
<path d="M792.5 818.0H800.5M796.5 814.0V822.0" stroke="#fff" stroke-width="2.6"/>
<text transform="translate(808.8 816.0) scale(0.92 1)" fill="#fff" font-size="11" text-anchor="middle">AUR</text>
<path d="M938.5 818.0H946.5M942.5 814.0V822.0" stroke="#fff" stroke-width="2.6"/>
<text transform="translate(929.5 816.0) scale(0.92 1)" fill="#fff" font-size="11" text-anchor="middle">DSX</text>
<path d="M1005.9 818.0H1013.9M1009.9 814.0V822.0" stroke="#fff" stroke-width="2.6"/>
<text transform="translate(1010.0 816.0) scale(0.92 1)" fill="#fff" font-size="11" text-anchor="middle">OCU</text>
<path d="M1152.7 818.0H1160.7M1156.7 814.0V822.0" stroke="#fff" stroke-width="2.6"/>
<text transform="translate(1137.5 816.0) scale(0.92 1)" fill="#fff" font-size="11" text-anchor="middle">OER</text>
<path d="M1250.8 818.0H1258.8M1254.8 814.0V822.0" stroke="#fff" stroke-width="2.6"/>
<text transform="translate(1255.4 816.0) scale(0.92 1)" fill="#fff" font-size="11" text-anchor="middle">DKD</text>
<path d="M1299.7 818.0H1307.7M1303.7 814.0V822.0" stroke="#fff" stroke-width="2.6"/>
<text transform="translate(1304.5 816.0) scale(0.92 1)" fill="#fff" font-size="11" text-anchor="middle">DSV</text>
<path d="M1348.8 818.0H1356.8M1352.8 814.0V822.0" stroke="#fff" stroke-width="2.6"/>
<text transform="translate(1353.5 816.0) scale(0.92 1)" fill="#fff" font-size="11" text-anchor="middle">ALY</text>
<path d="M1402.7 818.0H1410.7M1406.7 814.0V822.0" stroke="#fff" stroke-width="2.6"/>
<text transform="translate(1407.4 816.0) scale(0.92 1)" fill="#fff" font-size="11" text-anchor="middle">ILE</text>
<path d="M1466.7 818.0H1474.7M1470.7 814.0V822.0" stroke="#fff" stroke-width="2.6"/>
<text transform="translate(1471.0 816.0) scale(0.92 1)" fill="#fff" font-size="11" text-anchor="middle">SCC</text>
<path d="M1554.9 818.0H1562.9M1558.9 814.0V822.0" stroke="#fff" stroke-width="2.6"/>
<text transform="translate(1559.5 816.0) scale(0.92 1)" fill="#fff" font-size="11" text-anchor="middle">FEV</text>
<path d="M173.5 802.0H181.5M177.5 798.0V806.0" stroke="#fff" stroke-width="2.6"/>
<text transform="translate(176.4 800.0) scale(0.92 1)" fill="#fff" font-size="11" text-anchor="middle">LYR</text>
<path d="M377.8 802.0H385.8M381.8 798.0V806.0" stroke="#fff" stroke-width="2.6"/>
<text transform="translate(372.5 800.0) scale(0.92 1)" fill="#fff" font-size="11" text-anchor="middle">JMC</text>
<path d="M544.6 802.0H552.6M548.6 798.0V806.0" stroke="#fff" stroke-width="2.6"/>
<text transform="translate(561.4 800.0) scale(0.92 1)" fill="#fff" font-size="11" text-anchor="middle">JPE</text>
<path d="M681.7 802.0H689.7M685.7 798.0V806.0" stroke="#fff" stroke-width="2.6"/>
<text transform="translate(671.9 800.0) scale(0.92 1)" fill="#fff" font-size="11" text-anchor="middle">PAU</text>
<path d="M740.6 802.0H748.6M744.6 798.0V806.0" stroke="#fff" stroke-width="2.6"/>
<text transform="translate(777.5 800.0) scale(0.92 1)" fill="#fff" font-size="11" text-anchor="middle">NIA</text>
<path d="M1074.5 802.0H1082.5M1078.5 798.0V806.0" stroke="#fff" stroke-width="2.6"/>
<text transform="translate(1048.8 800.0) scale(0.92 1)" fill="#fff" font-size="11" text-anchor="middle">STA</text>
<path d="M1216.7 802.0H1224.7M1220.7 798.0V806.0" stroke="#fff" stroke-width="2.6"/>
<text transform="translate(1203.8 800.0) scale(0.92 1)" fill="#fff" font-size="11" text-anchor="middle">NOO</text>
<path d="M1304.7 802.0H1312.7M1308.7 798.0V806.0" stroke="#fff" stroke-width="2.6"/>
<text transform="translate(1350.9 800.0) scale(0.92 1)" fill="#fff" font-size="11" text-anchor="middle">COM</text>
<path d="M1466.7 802.0H1474.7M1470.7 798.0V806.0" stroke="#fff" stroke-width="2.6"/>
<text transform="translate(1471.0 800.0) scale(0.92 1)" fill="#fff" font-size="11" text-anchor="middle">NCC</text>
<path d="M1559.7 802.0H1567.7M1563.7 798.0V806.0" stroke="#fff" stroke-width="2.6"/>
<text transform="translate(1564.0 800.0) scale(0.92 1)" fill="#fff" font-size="11" text-anchor="middle">FED</text>
<path d="M201.7 785.0H209.7M205.7 781.0V789.0" stroke="#fff" stroke-width="2.6"/>
<text transform="translate(206.1 783.0) scale(0.92 1)" fill="#fff" font-size="11" text-anchor="middle">HVI</text>
<path d="M399.5 785.0H407.5M403.5 781.0V789.0" stroke="#fff" stroke-width="2.6"/>
<text transform="translate(414.0 783.0) scale(0.92 1)" fill="#fff" font-size="11" text-anchor="middle">ARI</text>
<path d="M524.8 785.0H532.8M528.8 781.0V789.0" stroke="#fff" stroke-width="2.6"/>
<text transform="translate(529.3 783.0) scale(0.92 1)" fill="#fff" font-size="11" text-anchor="middle">SZC</text>
<path d="M638.9 785.0H646.9M642.9 781.0V789.0" stroke="#fff" stroke-width="2.6"/>
<text transform="translate(620.0 783.0) scale(0.92 1)" fill="#fff" font-size="11" text-anchor="middle">CAP</text>
<path d="M814.5 785.0H822.5M818.5 781.0V789.0" stroke="#fff" stroke-width="2.6"/>
<text transform="translate(818.8 783.0) scale(0.92 1)" fill="#fff" font-size="11" text-anchor="middle">NUE</text>
<path d="M958.6 785.0H966.6M962.6 781.0V789.0" stroke="#fff" stroke-width="2.6"/>
<text transform="translate(963.5 783.0) scale(0.92 1)" fill="#fff" font-size="11" text-anchor="middle">OCT</text>
<path d="M1039.2 785.0H1047.2M1043.2 781.0V789.0" stroke="#fff" stroke-width="2.6"/>
<text transform="translate(1056.5 783.0) scale(0.92 1)" fill="#fff" font-size="11" text-anchor="middle">ORI</text>
<path d="M1187.5 785.0H1195.5M1191.5 781.0V789.0" stroke="#fff" stroke-width="2.6"/>
<text transform="translate(1186.4 783.0) scale(0.92 1)" fill="#fff" font-size="11" text-anchor="middle">AMO</text>
<path d="M1250.8 785.0H1258.8M1254.8 781.0V789.0" stroke="#fff" stroke-width="2.6"/>
<text transform="translate(1255.4 783.0) scale(0.92 1)" fill="#fff" font-size="11" text-anchor="middle">DPC</text>
<path d="M1324.8 785.0H1332.8M1328.8 781.0V789.0" stroke="#fff" stroke-width="2.6"/>
<text transform="translate(1328.9 783.0) scale(0.92 1)" fill="#fff" font-size="11" text-anchor="middle">XVI</text>
<path d="M1402.7 785.0H1410.7M1406.7 781.0V789.0" stroke="#fff" stroke-width="2.6"/>
<text transform="translate(1407.4 783.0) scale(0.92 1)" fill="#fff" font-size="11" text-anchor="middle">QUA</text>
<path d="M1545.7 785.0H1553.7M1549.7 781.0V789.0" stroke="#fff" stroke-width="2.6"/>
<text transform="translate(1557.0 783.0) scale(0.92 1)" fill="#fff" font-size="11" text-anchor="middle">AAN</text>
<path d="M355.7 769.0H363.7M359.7 765.0V773.0" stroke="#fff" stroke-width="2.6"/>
<text transform="translate(355.4 767.0) scale(0.92 1)" fill="#fff" font-size="11" text-anchor="middle">TAH</text>
<path d="M425.7 769.0H433.7M429.7 765.0V773.0" stroke="#fff" stroke-width="2.6"/>
<text transform="translate(429.0 767.0) scale(0.92 1)" fill="#fff" font-size="11" text-anchor="middle">JEA</text>
<path d="M475.8 769.0H483.8M479.8 765.0V773.0" stroke="#fff" stroke-width="2.6"/>
<text transform="translate(480.6 767.0) scale(0.92 1)" fill="#fff" font-size="11" text-anchor="middle">JIP</text>
<path d="M534.9 769.0H542.9M538.9 765.0V773.0" stroke="#fff" stroke-width="2.6"/>
<text transform="translate(536.5 767.0) scale(0.92 1)" fill="#fff" font-size="11" text-anchor="middle">PPS</text>
<path d="M570.5 769.0H578.5M574.5 765.0V773.0" stroke="#fff" stroke-width="2.6"/>
<text transform="translate(575.8 767.0) scale(0.92 1)" fill="#fff" font-size="11" text-anchor="middle">ZCS</text>
<path d="M630.6 769.0H638.6M634.6 765.0V773.0" stroke="#fff" stroke-width="2.6"/>
<text transform="translate(632.4 767.0) scale(0.92 1)" fill="#fff" font-size="11" text-anchor="middle">GDR</text>
<path d="M973.8 769.0H981.8M977.8 765.0V773.0" stroke="#fff" stroke-width="2.6"/>
<text transform="translate(973.4 767.0) scale(0.92 1)" fill="#fff" font-size="11" text-anchor="middle">DRA</text>
<path d="M1069.6 769.0H1077.6M1073.6 765.0V773.0" stroke="#fff" stroke-width="2.6"/>
<text transform="translate(1073.9 767.0) scale(0.92 1)" fill="#fff" font-size="11" text-anchor="middle">LUM</text>
<path d="M1108.7 769.0H1116.7M1112.7 765.0V773.0" stroke="#fff" stroke-width="2.6"/>
<text transform="translate(1112.9 767.0) scale(0.92 1)" fill="#fff" font-size="11" text-anchor="middle">RPU</text>
<path d="M1177.5 769.0H1185.5M1181.5 765.0V773.0" stroke="#fff" stroke-width="2.6"/>
<text transform="translate(1176.8 767.0) scale(0.92 1)" fill="#fff" font-size="11" text-anchor="middle">THA</text>
<path d="M1255.5 769.0H1263.5M1259.5 765.0V773.0" stroke="#fff" stroke-width="2.6"/>
<text transform="translate(1260.0 767.0) scale(0.92 1)" fill="#fff" font-size="11" text-anchor="middle">PSU</text>
<path d="M1466.7 769.0H1474.7M1470.7 765.0V773.0" stroke="#fff" stroke-width="2.6"/>
<text transform="translate(1468.5 767.0) scale(0.92 1)" fill="#fff" font-size="11" text-anchor="middle">XCB</text>
<path d="M426.8 752.0H434.8M430.8 748.0V756.0" stroke="#fff" stroke-width="2.6"/>
<text transform="translate(431.4 750.0) scale(0.92 1)" fill="#fff" font-size="11" text-anchor="middle">JRC</text>
<path d="M539.7 752.0H547.7M543.7 748.0V756.0" stroke="#fff" stroke-width="2.6"/>
<text transform="translate(544.0 750.0) scale(0.92 1)" fill="#fff" font-size="11" text-anchor="middle">CAN</text>
<path d="M573.8 752.0H581.8M577.8 748.0V756.0" stroke="#fff" stroke-width="2.6"/>
<text transform="translate(578.5 750.0) scale(0.92 1)" fill="#fff" font-size="11" text-anchor="middle">FAN</text>
<path d="M703.7 752.0H711.7M707.7 748.0V756.0" stroke="#fff" stroke-width="2.6"/>
<text transform="translate(681.4 750.0) scale(0.92 1)" fill="#fff" font-size="11" text-anchor="middle">PER</text>
<path d="M1093.6 752.0H1101.6M1097.6 748.0V756.0" stroke="#fff" stroke-width="2.6"/>
<text transform="translate(1052.0 750.0) scale(0.92 1)" fill="#fff" font-size="11" text-anchor="middle">CTA</text>
<path d="M1270.7 752.0H1278.7M1274.7 748.0V756.0" stroke="#fff" stroke-width="2.6"/>
<text transform="translate(1265.4 750.0) scale(0.92 1)" fill="#fff" font-size="11" text-anchor="middle">HYD</text>
<path d="M1476.9 752.0H1484.9M1480.9 748.0V756.0" stroke="#fff" stroke-width="2.6"/>
<text transform="translate(1481.0 750.0) scale(0.92 1)" fill="#fff" font-size="11" text-anchor="middle">XUM</text>
<path d="M436.9 736.0H444.9M440.9 732.0V740.0" stroke="#fff" stroke-width="2.6"/>
<text transform="translate(441.0 734.0) scale(0.92 1)" fill="#fff" font-size="11" text-anchor="middle">COR</text>
<path d="M630.7 736.0H638.7M634.7 732.0V740.0" stroke="#fff" stroke-width="2.6"/>
<text transform="translate(654.3 734.0) scale(0.92 1)" fill="#fff" font-size="11" text-anchor="middle">SDA</text>
<path d="M1038.6 736.0H1046.6M1042.6 732.0V740.0" stroke="#fff" stroke-width="2.6"/>
<text transform="translate(1048.9 734.0) scale(0.92 1)" fill="#fff" font-size="11" text-anchor="middle">LMI</text>
<path d="M1167.7 736.0H1175.7M1171.7 732.0V740.0" stroke="#fff" stroke-width="2.6"/>
<text transform="translate(1169.5 734.0) scale(0.92 1)" fill="#fff" font-size="11" text-anchor="middle">LEO</text>
<path d="M1274.9 736.0H1282.9M1278.9 732.0V740.0" stroke="#fff" stroke-width="2.6"/>
<text transform="translate(1277.4 734.0) scale(0.92 1)" fill="#fff" font-size="11" text-anchor="middle">EHY</text>
<path d="M1496.6 736.0H1504.6M1500.6 732.0V740.0" stroke="#fff" stroke-width="2.6"/>
<text transform="translate(1500.5 734.0) scale(0.92 1)" fill="#fff" font-size="11" text-anchor="middle">ECV</text>
<path d="M598.7 720.0H606.7M602.7 716.0V724.0" stroke="#fff" stroke-width="2.6"/>
<text transform="translate(603.0 718.0) scale(0.92 1)" fill="#fff" font-size="11" text-anchor="middle">JXA</text>
<path d="M726.8 720.0H734.8M730.8 716.0V724.0" stroke="#fff" stroke-width="2.6"/>
<text transform="translate(713.4 718.0) scale(0.92 1)" fill="#fff" font-size="11" text-anchor="middle">KCG</text>
<path d="M1187.9 720.0H1195.9M1191.9 716.0V724.0" stroke="#fff" stroke-width="2.6"/>
<text transform="translate(1157.5 718.0) scale(0.92 1)" fill="#fff" font-size="11" text-anchor="middle">AND</text>
<path d="M1270.7 720.0H1278.7M1274.7 716.0V724.0" stroke="#fff" stroke-width="2.6"/>
<text transform="translate(1275.0 718.0) scale(0.92 1)" fill="#fff" font-size="11" text-anchor="middle">DAD</text>
<path d="M686.5 703.0H694.5M690.5 699.0V707.0" stroke="#fff" stroke-width="2.6"/>
<text transform="translate(664.3 701.0) scale(0.92 1)" fill="#fff" font-size="11" text-anchor="middle">ERI</text>
<path d="M1101.9 703.0H1109.9M1105.9 699.0V707.0" stroke="#fff" stroke-width="2.6"/>
<text transform="translate(1105.3 701.0) scale(0.92 1)" fill="#fff" font-size="11" text-anchor="middle">SLD</text>
<path d="M1206.8 703.0H1214.8M1210.8 699.0V707.0" stroke="#fff" stroke-width="2.6"/>
<text transform="translate(1211.0 701.0) scale(0.92 1)" fill="#fff" font-size="11" text-anchor="middle">ORS</text>
<path d="M1299.7 703.0H1307.7M1303.7 699.0V707.0" stroke="#fff" stroke-width="2.6"/>
<text transform="translate(1299.5 701.0) scale(0.92 1)" fill="#fff" font-size="11" text-anchor="middle">GEM</text>
<path d="M1118.7 687.0H1126.7M1122.7 683.0V691.0" stroke="#fff" stroke-width="2.6"/>
<text transform="translate(1123.0 685.0) scale(0.92 1)" fill="#fff" font-size="11" text-anchor="middle">KUM</text>
<rect x="19.5" y="641.5" width="1765.9" height="200.9" fill="none" stroke="#fff" stroke-width="1.3"/>
<path d="M19.5 842.4V847.8" stroke="#fff" stroke-width="1.2"/>
<text transform="translate(20.3 861.3) scale(1.13 1)" fill="#fff" font-size="13.3" text-anchor="middle">0</text>
<path d="M264.7 842.4V847.8" stroke="#fff" stroke-width="1.2"/>
<text transform="translate(265.5 861.3) scale(1.13 1)" fill="#fff" font-size="13.3" text-anchor="middle">50</text>
<path d="M509.9 842.4V847.8" stroke="#fff" stroke-width="1.2"/>
<text transform="translate(510.7 861.3) scale(1.13 1)" fill="#fff" font-size="13.3" text-anchor="middle">100</text>
<path d="M755.1 842.4V847.8" stroke="#fff" stroke-width="1.2"/>
<text transform="translate(755.9 861.3) scale(1.13 1)" fill="#fff" font-size="13.3" text-anchor="middle">150</text>
<path d="M1000.3 842.4V847.8" stroke="#fff" stroke-width="1.2"/>
<text transform="translate(1001.1 861.3) scale(1.13 1)" fill="#fff" font-size="13.3" text-anchor="middle">200</text>
<path d="M1245.5 842.4V847.8" stroke="#fff" stroke-width="1.2"/>
<text transform="translate(1246.3 861.3) scale(1.13 1)" fill="#fff" font-size="13.3" text-anchor="middle">250</text>
<path d="M1490.7 842.4V847.8" stroke="#fff" stroke-width="1.2"/>
<text transform="translate(1491.5 861.3) scale(1.13 1)" fill="#fff" font-size="13.3" text-anchor="middle">300</text>
<path d="M1735.9 842.4V847.8" stroke="#fff" stroke-width="1.2"/>
<text transform="translate(1736.7 861.3) scale(1.13 1)" fill="#fff" font-size="13.3" text-anchor="middle">350</text>
<text x="902.2" y="882" fill="#fff" font-size="14" text-anchor="middle" textLength="145" lengthAdjust="spacingAndGlyphs">Solar longitude (deg)</text>
</svg></body></html>
